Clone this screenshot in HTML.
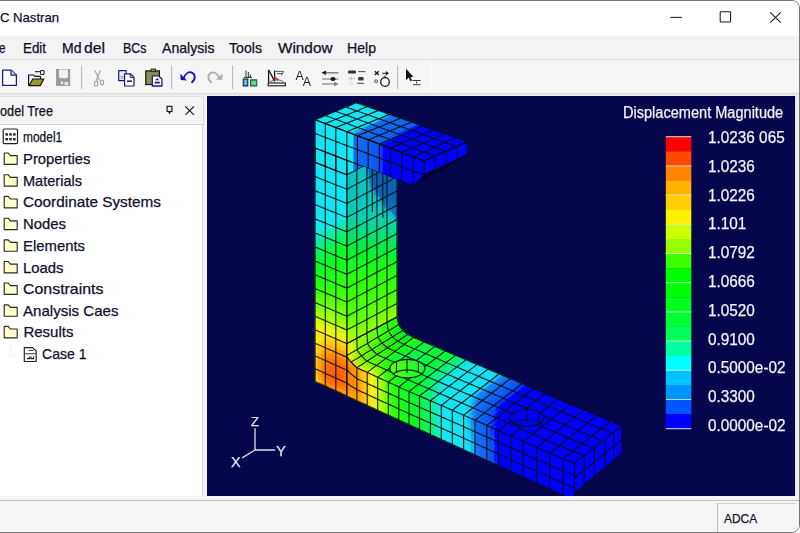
<!DOCTYPE html>
<html><head><meta charset="utf-8"><title>C Nastran</title>
<style>
html,body{margin:0;padding:0;background:#fff;}
body{width:800px;height:533px;overflow:hidden;position:relative;font-family:"Liberation Sans",sans-serif;}
.win{position:absolute;left:-30px;top:0;width:828px;height:531px;border:1px solid #767676;border-radius:0 8px 8px 0;background:#f0f0f0;overflow:hidden;}
.in{position:absolute;left:29px;top:-1px;width:800px;height:533px;}
.t{position:absolute;white-space:nowrap;line-height:normal;transform-origin:0 50%;color:#000;-webkit-text-stroke:0.25px currentColor;}
.abs{position:absolute;}
svg{position:absolute;left:0;top:0;overflow:visible;}
</style></head><body>
<div class="win"><div class="in">

<div class="abs" style="left:0;top:0;width:800px;height:36px;background:#fff;"></div>
<div class="t " style="left:-0.30px;top:10.47px;font-size:13.40px;color:#10102a;transform:scaleX(0.9781);">C Nastran</div>
<div class="abs" style="left:0;top:36px;width:800px;height:24px;background:#f3f3f3;"></div>
<div class="t " style="left:-1.50px;top:39.75px;font-size:14.20px;color:#10102a;transform:scaleX(0.8230);">e</div>
<div class="t " style="left:23.20px;top:39.75px;font-size:14.20px;color:#10102a;transform:scaleX(0.9400);">Edit</div>
<div class="t " style="left:62.20px;top:39.75px;font-size:14.20px;color:#10102a;transform:scaleX(0.9885);">Md</div>
<div class="t " style="left:84.00px;top:39.75px;font-size:14.20px;color:#10102a;transform:scaleX(1.1082);">del</div>
<div class="t " style="left:122.50px;top:39.75px;font-size:14.20px;color:#10102a;transform:scaleX(0.8761);">BCs</div>
<div class="t " style="left:161.50px;top:39.75px;font-size:14.20px;color:#10102a;transform:scaleX(0.9930);">Analysis</div>
<div class="t " style="left:229.00px;top:39.75px;font-size:14.20px;color:#10102a;transform:scaleX(0.9955);">Tools</div>
<div class="t " style="left:277.50px;top:39.75px;font-size:14.20px;color:#10102a;transform:scaleX(1.0792);">Window</div>
<div class="t " style="left:347.00px;top:39.75px;font-size:14.20px;color:#10102a;transform:scaleX(0.9931);">Help</div>
<div class="abs" style="left:0;top:59px;width:800px;height:1.2px;background:#dcdcdc;"></div>
<div class="abs" style="left:0;top:60.2px;width:800px;height:33px;background:#f5f5f5;"></div><div class="abs" style="left:431px;top:62px;width:1px;height:30px;background:#fcfcfc;"></div>
<div class="abs" style="left:0;top:93.2px;width:800px;height:3.6px;background:linear-gradient(#d9d9d9,#e9e9e9 45%,#ececec 70%,#d8d8d8);"></div>
<div class="abs" style="left:-2px;top:97.2px;width:204.5px;height:27.4px;background:#f4f4f4;border-right:1px solid #d8d8d8;"></div>
<div class="t " style="left:-0.50px;top:102.75px;font-size:14.20px;color:#10102a;transform:scaleX(0.8951);">odel Tree</div>
<div class="abs" style="left:-2px;top:124.3px;width:204.5px;height:371.3px;background:#fff;border-top:1px solid #d0d0d0;border-right:1px solid #d6d6d6;box-sizing:border-box;"></div>
<div class="abs" style="left:203.5px;top:96px;width:3.5px;height:400px;background:#f4f4f4;"></div>
<div class="t " style="left:23.20px;top:129.13px;font-size:14.00px;color:#10102a;transform:scaleX(0.8538);">model1</div>
<div class="t " style="left:23.40px;top:150.03px;font-size:15.00px;color:#10102a;transform:scaleX(0.9873);">Properties</div>
<div class="t " style="left:23.40px;top:171.73px;font-size:15.00px;color:#10102a;transform:scaleX(0.9695);">Materials</div>
<div class="t " style="left:23.40px;top:193.43px;font-size:15.00px;color:#10102a;transform:scaleX(1.0217);">Coordinate Systems</div>
<div class="t " style="left:23.40px;top:215.23px;font-size:15.00px;color:#10102a;transform:scaleX(0.9916);">Nodes</div>
<div class="t " style="left:23.40px;top:236.83px;font-size:15.00px;color:#10102a;transform:scaleX(0.9915);">Elements</div>
<div class="t " style="left:23.40px;top:258.53px;font-size:15.00px;color:#10102a;transform:scaleX(0.9908);">Loads</div>
<div class="t " style="left:23.40px;top:280.03px;font-size:15.00px;color:#10102a;transform:scaleX(1.0610);">Constraints</div>
<div class="t " style="left:23.40px;top:301.82px;font-size:15.00px;color:#10102a;transform:scaleX(1.0048);">Analysis Caes</div>
<div class="t " style="left:23.40px;top:323.43px;font-size:15.00px;color:#10102a;">Results</div>
<div class="t " style="left:41.60px;top:345.23px;font-size:15.00px;color:#10102a;transform:scaleX(0.9362);">Case 1</div>
<div class="abs" style="left:0;top:495.6px;width:800px;height:4.4px;background:#f4f4f4;"></div>
<div class="abs" style="left:0;top:499.8px;width:800px;height:1.1px;background:#c4c4c4;"></div>
<div class="abs" style="left:0;top:500.9px;width:800px;height:32px;background:#f5f5f5;"></div>
<div class="abs" style="left:717px;top:503.2px;width:79px;height:30px;border-left:1.2px solid #bdbdbd;border-top:1.2px solid #d2d2d2;box-sizing:border-box;"></div>
<div class="t " style="left:723.80px;top:510.67px;font-size:13.40px;color:#10102a;transform:scaleX(0.8918);">ADCA</div>
<div class="abs" style="left:207.0px;top:96.0px;width:587.5px;height:399.6px;background:#06064c;"></div>
<div class="abs" style="left:794.5px;top:96px;width:1.2px;height:400px;background:#dedede;"></div>
<svg width="800" height="533" viewBox="0 0 800 533">
<defs><clipPath id="vp"><rect x="207.0" y="96.0" width="587.5" height="399.6"/></clipPath>
<filter id="soft" x="-2%" y="-2%" width="104%" height="104%"><feGaussianBlur stdDeviation="0.45"/></filter></defs>
<g clip-path="url(#vp)"><g filter="url(#soft)">
<defs><clipPath id="c1"><path d="M314.0 117.0L426.0 159.5L424.2 174.5L413.8 185.3L363.8 166.6L346.8 173.8L314.0 173.8Z"/></clipPath><clipPath id="c3"><path d="M346.8 173.8L363.8 166.6L397.6 180.0L397.6 335.0L346.8 375.0Z"/></clipPath></defs>
<g stroke="none"><g>
<path fill="#16e3f3" d="M314.8 120.0L318.1 121.3L322.3 119.2L318.9 117.9ZM318.2 118.6L321.6 119.9L325.8 117.8L321.6 116.5ZM321.6 117.2L325.8 118.5L329.2 116.4L325.0 115.1ZM325.0 115.8L329.2 117.1L332.7 115.0L328.5 113.7ZM328.5 114.4L332.7 115.7L336.1 113.6L331.9 112.3ZM331.9 113.0L336.1 114.3L339.6 112.2L335.3 110.9ZM335.3 111.6L339.6 112.9L343.0 110.8L338.8 109.5ZM338.8 110.2L343.0 111.5L346.5 109.3L342.2 108.1ZM342.2 108.8L346.5 110.0L349.9 107.9L345.6 106.6ZM345.6 107.3L349.9 108.6L353.4 106.5L349.0 105.2ZM349.0 105.9L353.4 107.2L356.8 105.1L352.5 103.8ZM352.5 104.5L356.8 105.8L360.3 103.7L355.9 102.4ZM318.1 121.3L321.6 122.6L325.7 120.5L322.3 119.2ZM321.6 119.9L325.0 121.2L329.2 119.1L325.8 117.8ZM325.1 118.5L328.5 119.8L332.7 117.7L328.5 116.4ZM328.5 117.1L332.7 118.4L336.2 116.3L332.0 115.0ZM332.0 115.7L336.2 117.0L339.6 114.9L335.4 113.6ZM335.4 114.3L339.6 115.6L343.1 113.5L338.9 112.2ZM338.9 112.9L343.1 114.2L346.6 112.0L342.3 110.8ZM342.3 111.5L346.6 112.7L350.1 110.6L345.8 109.3ZM345.8 110.0L350.1 111.3L353.6 109.2L349.2 107.9ZM349.2 108.6L353.6 109.9L357.0 107.8L352.7 106.5ZM352.7 107.2L357.0 108.5L360.5 106.4L356.1 105.1ZM356.1 105.8L360.5 107.1L364.0 105.0L359.6 103.7ZM321.6 122.6L324.9 123.9L329.2 121.8L325.7 120.5ZM325.0 121.2L328.5 122.5L332.7 120.4L329.2 119.1ZM328.5 119.8L332.0 121.1L336.2 119.0L332.7 117.7ZM332.0 118.4L335.5 119.7L339.7 117.6L335.5 116.3ZM335.5 117.0L339.7 118.3L343.2 116.2L338.9 114.9ZM338.9 115.6L343.2 116.9L346.7 114.7L342.4 113.5ZM342.4 114.2L346.7 115.4L350.2 113.3L345.9 112.0ZM345.9 112.7L350.2 114.0L353.7 111.9L349.4 110.6ZM349.4 111.3L353.7 112.6L357.2 110.5L352.8 109.2ZM352.8 109.9L357.2 111.2L360.7 109.1L356.3 107.8ZM356.3 108.5L360.7 109.8L364.2 107.7L359.8 106.4ZM359.8 107.1L364.2 108.4L367.7 106.3L363.3 105.0ZM324.9 123.9L328.4 125.2L332.7 123.1L328.5 121.8ZM328.5 122.5L332.7 123.8L336.2 121.7L332.0 120.4ZM332.0 121.1L336.2 122.4L339.7 120.3L335.5 119.0ZM335.5 119.7L339.7 121.0L343.2 118.9L339.0 117.6ZM339.0 118.3L343.2 119.6L346.7 117.5L342.5 116.2ZM342.5 116.9L346.7 118.2L350.3 116.1L346.0 114.7ZM346.0 115.4L350.3 116.8L353.8 114.6L349.5 113.3ZM349.5 114.0L353.8 115.3L357.3 113.2L353.0 111.9ZM353.0 112.6L357.3 113.9L360.8 111.8L356.5 110.5ZM356.5 111.2L360.8 112.5L364.3 110.4L360.0 109.1ZM360.0 109.8L364.3 111.1L367.8 109.0L363.5 107.7ZM363.5 108.4L367.8 109.7L371.4 107.6L367.0 106.3ZM328.4 125.2L331.9 126.6L336.2 124.4L332.7 123.1ZM332.0 123.8L335.5 125.1L339.7 123.0L335.5 121.7ZM335.5 122.4L339.7 123.7L343.3 121.6L339.0 120.3ZM339.0 121.0L343.3 122.3L346.8 120.2L342.5 118.9ZM342.5 119.6L346.8 120.9L350.3 118.8L346.0 117.5ZM346.0 118.2L350.3 119.5L353.9 117.4L349.6 116.1ZM349.6 116.8L353.9 118.1L357.4 115.9L353.1 114.6ZM353.1 115.3L357.4 116.6L360.9 114.5L356.6 113.2ZM356.6 113.9L360.9 115.2L364.5 113.1L360.1 111.8ZM360.1 112.5L364.5 113.8L368.0 111.7L363.6 110.4ZM363.6 111.1L368.0 112.4L371.5 110.3L367.1 109.0ZM367.1 109.7L371.5 111.0L375.1 108.9L370.7 107.6ZM331.9 126.6L335.4 127.9L339.7 125.8L336.2 124.4ZM335.5 125.1L339.0 126.5L343.2 124.3L339.7 123.0ZM339.0 123.7L342.5 125.0L346.8 122.9L342.6 121.6ZM342.6 122.3L346.8 123.6L350.4 121.5L346.1 120.2ZM346.1 120.9L350.4 122.2L353.9 120.1L349.6 118.8ZM349.6 119.5L353.9 120.8L357.5 118.7L353.2 117.4ZM353.2 118.1L357.5 119.4L361.0 117.2L356.7 115.9ZM356.7 116.6L361.0 117.9L364.6 115.8L360.2 114.5ZM360.2 115.2L364.6 116.5L368.1 114.4L363.8 113.1ZM363.8 113.8L368.1 115.1L371.6 113.0L367.3 111.7ZM367.3 112.4L371.6 113.7L375.2 111.6L370.8 110.3ZM370.8 111.0L375.2 112.3L378.8 110.2L374.4 108.9ZM335.4 127.9L339.8 129.3L343.4 127.1L339.0 125.8ZM339.0 126.5L343.4 127.8L346.9 125.7L342.5 124.3ZM342.5 125.0L346.9 126.4L350.5 124.3L346.1 122.9ZM346.1 123.6L350.5 125.0L354.0 122.9L349.6 121.5ZM349.6 122.2L354.0 123.6L357.6 121.4L353.2 120.1ZM353.2 120.8L357.6 122.1L361.1 120.0L356.8 118.7ZM356.8 119.4L361.1 120.7L364.7 118.6L360.3 117.2ZM360.3 117.9L364.7 119.3L368.2 117.2L363.8 115.8ZM363.8 116.5L368.2 117.9L371.8 115.7L367.4 114.4ZM367.4 115.1L371.8 116.4L375.3 114.3L370.9 113.0ZM370.9 113.7L375.3 115.0L378.9 112.9L374.5 111.6ZM374.5 112.3L378.9 113.6L382.4 111.4L378.0 110.2ZM339.1 129.3L343.5 130.7L347.0 128.5L342.7 127.1ZM342.7 127.8L347.0 129.2L350.6 127.1L346.2 125.7ZM346.2 126.4L350.6 127.8L354.1 125.7L349.8 124.3ZM349.8 125.0L354.1 126.4L357.7 124.2L353.3 122.9ZM353.3 123.6L357.7 124.9L361.3 122.8L356.9 121.4ZM356.9 122.1L361.3 123.5L364.8 121.3L360.4 120.0ZM360.4 120.7L364.8 122.0L368.4 119.9L364.0 118.6ZM364.0 119.3L368.4 120.6L371.9 118.5L367.5 117.2ZM367.5 117.9L371.9 119.2L375.5 117.0L371.1 115.7ZM371.1 116.4L375.5 117.7L379.0 115.6L374.6 114.3ZM374.6 115.0L379.0 116.3L382.6 114.2L378.2 112.9ZM378.2 113.6L382.6 114.9L386.1 112.7L381.7 111.4ZM342.8 130.7L347.2 132.0L350.7 129.9L346.3 128.5ZM346.3 129.2L350.7 130.6L354.3 128.5L349.9 127.1ZM349.9 127.8L354.3 129.2L357.8 127.0L353.4 125.7ZM353.4 126.4L357.8 127.7L361.4 125.6L357.0 124.2ZM357.0 124.9L361.4 126.3L364.9 124.1L360.6 122.8ZM360.6 123.5L364.9 124.8L368.5 122.7L364.1 121.3ZM364.1 122.0L368.5 123.4L372.0 121.2L367.7 119.9ZM367.7 120.6L372.0 121.9L375.6 119.8L371.2 118.5ZM371.2 119.2L375.6 120.5L379.2 118.4L374.8 117.0ZM374.8 117.7L379.2 119.1L382.7 116.9L378.3 115.6ZM378.3 116.3L382.7 117.6L386.3 115.5L381.9 114.2ZM381.9 114.9L386.3 116.2L389.8 114.0L385.4 112.7ZM346.4 132.0L350.0 133.4L354.3 131.2L350.7 129.9ZM350.0 130.6L353.6 131.9L357.8 129.8L354.3 128.5ZM353.6 129.2L357.1 130.5L361.4 128.3L357.1 127.0ZM357.1 127.7L361.4 129.0L365.0 126.9L360.7 125.6ZM360.7 126.3L365.0 127.6L368.5 125.4L364.2 124.1ZM364.2 124.8L368.5 126.1L372.1 124.0L367.8 122.7ZM367.8 123.4L372.1 124.7L375.7 122.6L371.3 121.2Z"/>
<path fill="#16dbf5" d="M371.3 121.9L375.7 123.3L379.2 121.1L374.9 119.8Z"/>
<path fill="#17c9f5" d="M374.9 120.5L379.2 121.8L382.8 119.7L378.5 118.4ZM350.0 133.4L353.5 134.7L357.8 132.6L354.3 131.2Z"/>
<path fill="#18b6f5" d="M378.5 119.1L382.8 120.4L386.4 118.2L382.0 116.9ZM353.6 131.9L357.1 133.3L361.4 131.1L357.8 129.8Z"/>
<path fill="#18a3f5" d="M382.0 117.6L386.4 118.9L389.9 116.8L385.6 115.5ZM357.1 130.5L360.7 131.8L365.0 129.7L361.4 128.3Z"/>
<path fill="#1892f5" d="M385.6 116.2L389.9 117.5L393.5 115.3L389.1 114.0ZM360.7 129.0L364.3 130.4L368.5 128.2L364.3 126.9Z"/>
<path fill="#1684f4" d="M364.3 127.6L368.5 128.9L372.1 126.8L367.8 125.4Z"/>
<path fill="#1576f3" d="M367.8 126.1L372.1 127.5L375.7 125.3L371.4 124.0Z"/>
<path fill="#146ff3" d="M371.4 124.7L375.7 126.0L379.3 123.9L375.0 122.6ZM375.0 123.3L379.3 124.6L382.9 122.4L378.5 121.1Z"/>
<path fill="#136ef3" d="M378.5 121.8L382.9 123.1L386.5 121.0L382.1 119.7ZM382.1 120.4L386.5 121.7L390.0 119.5L385.7 118.2ZM385.7 118.9L390.0 120.2L393.6 118.1L389.2 116.8ZM389.2 117.5L393.6 118.8L397.2 116.6L392.8 115.3ZM353.5 134.7L357.0 136.1L361.3 133.9L357.8 132.6ZM357.1 133.3L360.6 134.6L364.9 132.4L361.4 131.1ZM360.7 131.8L364.2 133.1L368.5 131.0L365.0 129.7ZM364.3 130.4L367.8 131.7L372.1 129.5L368.5 128.2Z"/>
<path fill="#136df3" d="M367.8 128.9L371.4 130.2L375.7 128.1L371.4 126.8ZM371.4 127.5L375.7 128.8L379.3 126.6L375.0 125.3ZM375.0 126.0L379.3 127.3L382.9 125.2L378.6 123.9ZM378.6 124.6L382.9 125.9L386.5 123.7L382.2 122.4Z"/>
<path fill="#136cf3" d="M382.2 123.1L386.5 124.4L390.1 122.3L385.8 121.0ZM357.0 136.1L361.4 137.4L365.0 135.3L360.6 133.9Z"/>
<path fill="#136cf2" d="M385.8 121.7L390.1 123.0L393.7 120.8L389.3 119.5ZM389.3 120.2L393.7 121.5L397.3 119.4L392.9 118.1ZM392.9 118.8L397.3 120.1L400.9 117.9L396.5 116.6ZM360.6 134.6L365.0 136.0L368.6 133.8L364.2 132.4ZM364.2 133.1L368.6 134.5L372.2 132.3L367.8 131.0ZM367.8 131.7L372.2 133.0L375.8 130.9L371.4 129.5Z"/>
<path fill="#136bf2" d="M371.4 130.2L375.8 131.6L379.4 129.4L375.0 128.1ZM375.0 128.8L379.4 130.1L383.0 128.0L378.6 126.6ZM378.6 127.3L383.0 128.7L386.6 126.5L382.2 125.2ZM382.2 125.9L386.6 127.2L390.2 125.0L385.8 123.7Z"/>
<path fill="#136af2" d="M385.8 124.4L390.2 125.7L393.8 123.6L389.4 122.3ZM389.4 123.0L393.8 124.3L397.4 122.1L393.0 120.8ZM393.0 121.5L397.4 122.8L401.0 120.7L396.6 119.4ZM396.6 120.1L401.0 121.4L404.6 119.2L400.2 117.9ZM360.6 137.4L364.2 138.8L368.6 136.6L364.3 135.3ZM364.3 136.0L368.6 137.3L372.2 135.1L367.9 133.8ZM367.9 134.5L372.2 135.8L375.8 133.7L371.5 132.3ZM371.5 133.0L375.8 134.4L379.4 132.2L375.1 130.9Z"/>
<path fill="#1369f2" d="M375.1 131.6L379.4 132.9L383.0 130.7L378.7 129.4ZM378.7 130.1L383.0 131.4L386.6 129.3L382.3 128.0ZM382.3 128.7L386.6 130.0L390.2 127.8L385.9 126.5ZM385.9 127.2L390.2 128.5L393.8 126.3L389.5 125.0Z"/>
<path fill="#1368f2" d="M389.5 125.7L393.8 127.0L397.5 124.9L393.1 123.6ZM393.1 124.3L397.5 125.6L401.1 123.4L396.7 122.1ZM396.7 122.8L401.1 124.1L404.7 121.9L400.3 120.7ZM364.2 138.8L367.8 140.1L372.2 138.0L368.6 136.6ZM367.9 137.3L371.5 138.7L375.8 136.5L371.5 135.1ZM371.5 135.8L375.8 137.2L379.4 135.0L375.1 133.7Z"/>
<path fill="#1268f2" d="M400.3 121.4L404.7 122.6L408.3 120.5L403.9 119.2ZM375.1 134.4L379.4 135.7L383.0 133.6L378.7 132.2Z"/>
<path fill="#1267f2" d="M378.7 132.9L383.0 134.3L386.6 132.1L382.3 130.7ZM382.3 131.4L386.6 132.8L390.3 130.6L385.9 129.3ZM385.9 130.0L390.3 131.3L393.9 129.1L389.5 127.8Z"/>
<path fill="#1266f2" d="M389.5 128.5L393.9 129.8L397.5 127.7L393.1 126.3ZM393.1 127.0L397.5 128.4L401.1 126.2L396.8 124.9ZM396.8 125.6L401.1 126.9L404.7 124.7L400.4 123.4ZM400.4 124.1L404.7 125.4L408.4 123.2L404.0 121.9ZM367.8 140.1L372.2 141.5L375.9 139.4L371.5 138.0ZM371.5 138.7L375.9 140.1L379.5 137.9L375.1 136.5ZM375.1 137.2L379.5 138.6L383.1 136.4L378.7 135.0Z"/>
<path fill="#1265f2" d="M404.0 122.6L408.4 123.9L412.0 121.8L407.6 120.5ZM378.7 135.7L383.1 137.1L386.7 134.9L382.3 133.6ZM382.3 134.3L386.7 135.6L390.3 133.4L385.9 132.1ZM385.9 132.8L390.3 134.1L394.0 132.0L389.6 130.6ZM389.6 131.3L394.0 132.7L397.6 130.5L393.2 129.1Z"/>
<path fill="#1264f2" d="M393.2 129.8L397.6 131.2L401.2 129.0L396.8 127.7ZM396.8 128.4L401.2 129.7L404.8 127.5L400.4 126.2ZM400.4 126.9L404.8 128.2L408.4 126.0L404.0 124.7ZM371.5 141.5L376.0 142.9L379.6 140.8L375.2 139.4ZM375.2 140.1L379.6 141.5L383.2 139.3L378.8 137.9Z"/>
<path fill="#1263f2" d="M404.0 125.4L408.4 126.7L412.0 124.5L407.7 123.2ZM407.7 123.9L412.0 125.2L415.7 123.1L411.3 121.8ZM378.8 138.6L383.2 140.0L386.8 137.8L382.4 136.4ZM382.4 137.1L386.8 138.5L390.4 136.3L386.0 134.9Z"/>
<path fill="#1262f2" d="M386.0 135.6L390.4 137.0L394.0 134.8L389.6 133.4Z"/>
<path fill="#1162f2" d="M389.6 134.1L394.0 135.5L397.7 133.3L393.3 132.0Z"/>
<path fill="#1161f2" d="M393.3 132.7L397.7 134.0L401.3 131.8L396.9 130.5Z"/>
<path fill="#1160f2" d="M396.9 131.2L401.3 132.5L404.9 130.3L400.5 129.0Z"/>
<path fill="#1160f3" d="M400.5 129.7L404.9 131.0L408.5 128.8L404.1 127.5ZM375.2 142.9L379.7 144.3L383.3 142.1L378.9 140.8Z"/>
<path fill="#115ff3" d="M404.1 128.2L408.5 129.5L412.1 127.3L407.7 126.0ZM407.7 126.7L412.1 128.0L415.7 125.8L411.3 124.5ZM378.9 141.5L383.3 142.8L386.9 140.6L382.5 139.3ZM382.5 140.0L386.9 141.3L390.5 139.1L386.1 137.8Z"/>
<path fill="#115ef3" d="M411.3 125.2L415.7 126.5L419.4 124.4L415.0 123.1ZM386.1 138.5L390.5 139.8L394.1 137.6L389.7 136.3Z"/>
<path fill="#0f56f4" d="M389.7 137.0L394.1 138.3L397.7 136.1L393.3 134.8Z"/>
<path fill="#0c47f6" d="M393.3 135.5L397.7 136.8L401.4 134.6L397.0 133.3Z"/>
<path fill="#0938f8" d="M397.0 134.0L401.4 135.3L405.0 133.1L400.6 131.8Z"/>
<path fill="#0529fa" d="M400.6 132.5L405.0 133.8L408.6 131.6L404.2 130.3Z"/>
<path fill="#0420fb" d="M404.2 131.0L408.6 132.3L412.2 130.1L407.8 128.8Z"/>
<path fill="#0318fc" d="M407.8 129.5L412.2 130.8L415.8 128.6L411.4 127.3ZM382.6 142.8L387.0 144.2L390.6 142.0L386.2 140.6Z"/>
<path fill="#0210fd" d="M411.4 128.0L415.8 129.3L419.4 127.1L415.0 125.8ZM386.2 141.3L390.6 142.7L394.2 140.5L389.8 139.1Z"/>
<path fill="#0107fe" d="M415.0 126.5L419.4 127.8L423.1 125.7L418.7 124.4Z"/>
<path fill="#0421fb" d="M378.9 144.3L383.4 145.8L387.0 143.5L382.6 142.1Z"/>
<path fill="#0108fe" d="M389.8 139.8L394.2 141.2L397.8 139.0L393.4 137.6Z"/>
<path fill="#0000ff" d="M393.4 138.3L397.8 139.7L401.4 137.5L397.0 136.1ZM397.0 136.8L401.4 138.2L405.1 136.0L400.6 134.6ZM400.6 135.3L405.1 136.7L408.7 134.5L404.3 133.1ZM404.3 133.8L408.7 135.2L412.3 133.0L407.9 131.6ZM407.9 132.3L412.3 133.7L415.9 131.5L411.5 130.1ZM411.5 130.8L415.9 132.2L419.5 130.0L415.1 128.6ZM415.1 129.3L419.5 130.7L423.1 128.5L418.7 127.1ZM418.7 127.8L423.1 129.2L426.7 126.9L422.3 125.7ZM382.7 145.8L387.1 147.2L390.7 144.9L386.3 143.5ZM386.3 144.2L390.7 145.6L394.3 143.4L389.9 142.0ZM389.9 142.7L394.3 144.1L397.9 141.9L393.5 140.5ZM393.5 141.2L397.9 142.6L401.6 140.4L397.1 139.0ZM397.1 139.7L401.6 141.1L405.2 138.9L400.7 137.5ZM400.7 138.2L405.2 139.6L408.8 137.4L404.4 136.0ZM404.4 136.7L408.8 138.1L412.4 135.8L408.0 134.5ZM408.0 135.2L412.4 136.5L416.0 134.3L411.6 133.0ZM411.6 133.7L416.0 135.0L419.6 132.8L415.2 131.5ZM415.2 132.2L419.6 133.5L423.2 131.3L418.8 130.0ZM418.8 130.7L423.2 132.0L426.8 129.8L422.4 128.5ZM422.4 129.2L426.8 130.5L430.4 128.2L426.0 126.9ZM386.4 147.2L390.9 148.6L394.5 146.4L390.0 144.9ZM390.0 145.6L394.5 147.1L398.1 144.8L393.6 143.4ZM393.6 144.1L398.1 145.5L401.7 143.3L397.2 141.9ZM397.2 142.6L401.7 144.0L405.3 141.8L400.9 140.4ZM400.9 141.1L405.3 142.5L408.9 140.2L404.5 138.9ZM404.5 139.6L408.9 140.9L412.5 138.7L408.1 137.4ZM408.1 138.1L412.5 139.4L416.1 137.2L411.7 135.8ZM411.7 136.5L416.1 137.9L419.7 135.6L415.3 134.3ZM415.3 135.0L419.7 136.3L423.3 134.1L418.9 132.8ZM418.9 133.5L423.3 134.8L426.9 132.6L422.5 131.3ZM422.5 132.0L426.9 133.3L430.5 131.1L426.1 129.8ZM426.1 130.5L430.5 131.8L434.1 129.5L429.7 128.2ZM390.1 148.6L394.6 150.0L398.2 147.8L393.8 146.4ZM393.8 147.1L398.2 148.5L401.8 146.2L397.4 144.8ZM397.4 145.5L401.8 146.9L405.4 144.7L401.0 143.3ZM401.0 144.0L405.4 145.4L409.0 143.1L404.6 141.8ZM404.6 142.5L409.0 143.8L412.6 141.6L408.2 140.2ZM408.2 140.9L412.6 142.3L416.2 140.1L411.8 138.7ZM411.8 139.4L416.2 140.8L419.8 138.5L415.4 137.2ZM415.4 137.9L419.8 139.2L423.4 137.0L419.0 135.6ZM419.0 136.3L423.4 137.7L427.0 135.4L422.6 134.1ZM422.6 134.8L427.0 136.1L430.6 133.9L426.2 132.6ZM426.2 133.3L430.6 134.6L434.2 132.4L429.8 131.1ZM429.8 131.8L434.2 133.1L437.8 130.8L433.4 129.5ZM393.9 150.0L398.4 151.4L401.9 149.2L397.5 147.8ZM397.5 148.5L401.9 149.9L405.5 147.6L401.1 146.2ZM401.1 146.9L405.5 148.3L409.1 146.1L404.7 144.7ZM404.7 145.4L409.1 146.8L412.7 144.5L408.3 143.1ZM408.3 143.8L412.7 145.2L416.3 143.0L411.9 141.6ZM411.9 142.3L416.3 143.7L419.9 141.4L415.5 140.1ZM415.5 140.8L419.9 142.1L423.5 139.9L419.1 138.5ZM419.1 139.2L423.5 140.6L427.1 138.3L422.7 137.0ZM422.7 137.7L427.1 139.0L430.7 136.8L426.3 135.4ZM426.3 136.1L430.7 137.5L434.3 135.2L429.9 133.9ZM429.9 134.6L434.3 135.9L437.9 133.7L433.5 132.4ZM433.5 133.1L437.9 134.4L441.5 132.1L437.1 130.8ZM397.6 151.4L402.1 152.8L405.7 150.6L401.2 149.2ZM401.2 149.9L405.7 151.3L409.3 149.0L404.8 147.6ZM404.8 148.3L409.3 149.7L412.9 147.5L408.4 146.1ZM408.4 146.8L412.9 148.2L416.5 145.9L412.0 144.5ZM412.0 145.2L416.5 146.6L420.1 144.3L415.6 143.0ZM415.6 143.7L420.1 145.0L423.7 142.8L419.2 141.4ZM419.2 142.1L423.7 143.5L427.2 141.2L422.8 139.9ZM422.8 140.6L427.2 141.9L430.8 139.6L426.4 138.3ZM426.4 139.0L430.8 140.3L434.4 138.1L430.0 136.8ZM430.0 137.5L434.4 138.8L438.0 136.5L433.6 135.2ZM433.6 135.9L438.0 137.2L441.6 135.0L437.2 133.7ZM437.2 134.4L441.6 135.7L445.2 133.4L440.8 132.1ZM401.4 152.8L406.0 154.3L409.6 152.0L405.0 150.6ZM405.0 151.3L409.6 152.7L413.1 150.5L408.6 149.0ZM408.6 149.7L413.1 151.2L416.7 148.9L412.2 147.5ZM412.2 148.2L416.7 149.6L420.3 147.3L415.8 145.9ZM415.8 146.6L420.3 148.0L423.9 145.7L419.4 144.3ZM419.4 145.0L423.9 146.4L427.4 144.1L422.9 142.8ZM422.9 143.5L427.4 144.8L431.0 142.6L426.5 141.2ZM426.5 141.9L431.0 143.3L434.6 141.0L430.1 139.6ZM430.1 140.3L434.6 141.7L438.2 139.4L433.7 138.1ZM433.7 138.8L438.2 140.1L441.7 137.8L437.3 136.5ZM437.3 137.2L441.7 138.5L445.3 136.3L440.9 135.0ZM440.9 135.7L445.3 137.0L448.9 134.7L444.5 133.4ZM405.3 154.3L409.9 155.8L413.4 153.5L408.9 152.0ZM408.9 152.7L413.4 154.2L417.0 151.9L412.4 150.5ZM412.4 151.2L417.0 152.6L420.5 150.3L416.0 148.9ZM416.0 149.6L420.5 151.0L424.1 148.7L419.6 147.3ZM419.6 148.0L424.1 149.4L427.7 147.1L423.2 145.7ZM423.2 146.4L427.7 147.8L431.2 145.5L426.7 144.1ZM426.7 144.8L431.2 146.2L434.8 143.9L430.3 142.6ZM430.3 143.3L434.8 144.6L438.3 142.3L433.9 141.0ZM433.9 141.7L438.3 143.0L441.9 140.8L437.5 139.4ZM437.5 140.1L441.9 141.5L445.5 139.2L441.0 137.8ZM441.0 138.5L445.5 139.9L449.0 137.6L444.6 136.3ZM444.6 137.0L449.0 138.3L452.6 136.0L448.2 134.7ZM409.2 155.8L413.8 157.2L417.3 154.9L412.7 153.5ZM412.7 154.2L417.3 155.6L420.8 153.3L416.3 151.9ZM416.3 152.6L420.8 154.0L424.4 151.7L419.8 150.3ZM419.8 151.0L424.4 152.4L427.9 150.1L423.4 148.7ZM423.4 149.4L427.9 150.8L431.5 148.5L427.0 147.1ZM427.0 147.8L431.5 149.2L435.0 146.9L430.5 145.5ZM430.5 146.2L435.0 147.6L438.6 145.3L434.1 143.9ZM434.1 144.6L438.6 146.0L442.1 143.7L437.6 142.3ZM437.6 143.0L442.1 144.4L445.6 142.1L441.2 140.8ZM441.2 141.5L445.6 142.8L449.2 140.5L444.8 139.2ZM444.8 139.9L449.2 141.2L452.7 138.9L448.3 137.6ZM448.3 138.3L452.7 139.6L456.3 137.3L451.9 136.0ZM413.0 157.2L417.4 158.6L420.9 156.3L416.6 154.9ZM416.6 155.6L420.9 157.0L424.5 154.7L420.1 153.3ZM420.1 154.0L424.5 155.4L428.0 153.1L423.7 151.7ZM423.7 152.4L428.0 153.8L431.6 151.5L427.2 150.1ZM427.2 150.8L431.6 152.2L435.1 149.9L430.8 148.5ZM430.8 149.2L435.1 150.6L438.7 148.2L434.3 146.9ZM434.3 147.6L438.7 148.9L442.2 146.6L437.9 145.3ZM437.9 146.0L442.2 147.3L445.8 145.0L441.4 143.7ZM441.4 144.4L445.8 145.7L449.3 143.4L444.9 142.1ZM444.9 142.8L449.3 144.1L452.9 141.8L448.5 140.5ZM448.5 141.2L452.9 142.5L456.4 140.2L452.0 138.9ZM452.0 139.6L456.4 140.9L460.0 138.6L455.6 137.3ZM416.7 158.6L421.0 160.0L424.5 157.7L420.2 156.3ZM420.2 157.0L424.5 158.4L428.1 156.0L423.8 154.7ZM423.8 155.4L428.1 156.7L431.7 154.4L427.3 153.1ZM427.3 153.8L431.7 155.1L435.2 152.8L430.9 151.5ZM430.9 152.2L435.2 153.5L438.8 151.2L434.4 149.9ZM434.4 150.6L438.8 151.9L442.3 149.6L438.0 148.2ZM438.0 148.9L442.3 150.3L445.9 148.0L441.5 146.6ZM441.5 147.3L445.9 148.7L449.4 146.3L445.1 145.0ZM445.1 145.7L449.4 147.0L453.0 144.7L448.6 143.4ZM448.6 144.1L453.0 145.4L456.5 143.1L452.2 141.8ZM452.2 142.5L456.5 143.8L460.1 141.5L455.7 140.2ZM455.7 140.9L460.1 142.2L463.7 139.9L459.3 138.6ZM420.3 160.0L424.6 161.3L428.2 159.0L423.8 157.7ZM423.8 158.4L428.2 159.7L431.7 157.4L427.4 156.0ZM427.4 156.7L431.7 158.1L435.3 155.8L431.0 154.4ZM431.0 155.1L435.3 156.5L438.9 154.2L434.5 152.8ZM434.5 153.5L438.9 154.8L442.4 152.5L438.1 151.2ZM438.1 151.9L442.4 153.2L446.0 150.9L441.6 149.6ZM441.6 150.3L446.0 151.6L449.5 149.3L445.2 148.0ZM445.2 148.7L449.5 150.0L453.1 147.7L448.7 146.3ZM448.7 147.0L453.1 148.3L456.7 146.0L452.3 144.7ZM452.3 145.4L456.7 146.7L460.2 144.4L455.8 143.1ZM455.8 143.8L460.2 145.1L463.8 142.8L459.4 141.5ZM459.4 142.2L463.8 143.5L467.4 141.2L463.0 139.9Z"/>
</g>
<g clip-path="url(#c1)">
<path fill="#16e3f3" d="M314.8 119.4L318.9 120.6L318.9 125.9L314.8 124.6ZM314.8 124.0L318.9 125.2L318.9 130.5L314.8 129.2ZM314.8 128.6L318.9 129.8L318.9 135.1L314.8 133.8ZM314.8 133.2L318.9 134.4L318.9 140.0L314.8 138.7ZM314.8 138.0L318.9 139.3L318.9 144.8L314.8 143.5ZM314.8 142.8L318.9 144.1L318.9 149.7L314.8 148.3ZM314.8 147.7L318.9 149.0L318.9 154.5L314.8 153.2ZM314.8 152.5L318.9 153.8L318.9 159.3L314.8 157.9ZM314.8 157.2L318.9 158.6L318.9 164.1L314.8 162.8ZM318.1 120.6L322.3 121.9L322.3 127.2L318.1 125.9ZM318.1 125.2L322.3 126.5L322.3 131.8L318.1 130.5ZM318.1 129.8L322.3 131.1L322.3 136.4L318.1 135.1ZM318.1 134.4L322.3 135.7L322.3 141.3L318.1 140.0ZM318.1 139.3L322.3 140.6L322.3 146.1L318.1 144.8ZM318.1 144.1L322.3 145.4L322.3 151.0L318.1 149.7ZM318.1 149.0L322.3 150.3L322.3 155.8L318.1 154.5ZM318.1 153.8L322.3 155.1L322.3 160.6L318.1 159.3ZM318.1 158.6L322.3 159.9L322.3 165.4L318.1 164.1ZM321.6 121.9L325.7 123.2L325.7 128.5L321.6 127.2ZM321.6 126.5L325.7 127.8L325.7 133.1L321.6 131.8ZM321.6 131.1L325.7 132.4L325.7 137.7L321.6 136.4ZM321.6 135.7L325.7 137.0L325.7 142.6L321.6 141.3ZM321.6 140.6L325.7 141.9L325.7 147.4L321.6 146.1ZM321.6 145.4L325.7 146.7L325.7 152.3L321.6 151.0ZM321.6 150.3L325.7 151.6L325.7 157.1L321.6 155.8ZM321.6 155.1L325.7 156.4L325.7 161.9L321.6 160.6ZM321.6 159.9L325.7 161.2L325.7 166.7L321.6 165.4ZM324.9 123.2L329.2 124.5L329.2 129.8L324.9 128.5ZM324.9 127.8L329.2 129.1L329.2 134.5L324.9 133.1ZM324.9 132.4L329.2 133.8L329.2 139.1L324.9 137.7ZM324.9 137.0L329.2 138.4L329.2 143.9L324.9 142.6ZM324.9 141.9L329.2 143.2L329.2 148.8L324.9 147.4ZM324.9 146.7L329.2 148.1L329.2 153.6L324.9 152.3ZM324.9 151.6L329.2 152.9L329.2 158.4L324.9 157.1ZM324.9 156.4L329.2 157.7L329.2 163.3L324.9 161.9ZM324.9 161.2L329.2 162.6L329.2 168.1L324.9 166.7ZM328.4 124.5L332.7 125.9L332.7 131.2L328.4 129.8ZM328.4 129.1L332.7 130.5L332.7 135.8L328.4 134.5ZM328.4 133.8L332.7 135.1L332.7 140.4L328.4 139.1ZM328.4 138.4L332.7 139.7L332.7 145.3L328.4 143.9ZM328.4 143.2L332.7 144.6L332.7 150.1L328.4 148.8ZM328.4 148.1L332.7 149.4L332.7 155.0L328.4 153.6ZM328.4 152.9L332.7 154.3L332.7 159.8L328.4 158.4ZM328.4 157.7L332.7 159.1L332.7 164.6L328.4 163.3ZM328.4 162.6L332.7 163.9L332.7 169.4L328.4 168.1ZM331.9 125.9L336.2 127.2L336.2 132.5L331.9 131.2ZM331.9 130.5L336.2 131.8L336.2 137.1L331.9 135.8ZM331.9 135.1L336.2 136.4L336.2 141.8L331.9 140.4ZM331.9 139.7L336.2 141.1L336.2 146.6L331.9 145.3ZM331.9 144.6L336.2 145.9L336.2 151.5L331.9 150.1ZM331.9 149.4L336.2 150.8L336.2 156.3L331.9 155.0ZM331.9 154.3L336.2 155.6L336.2 161.2L331.9 159.8ZM331.9 159.1L336.2 160.5L336.2 166.0L331.9 164.6ZM331.9 163.9L336.2 165.3L336.2 170.8L331.9 169.4ZM335.4 127.2L339.8 128.6L339.8 133.9L335.4 132.5ZM335.4 131.8L339.8 133.2L339.8 138.5L335.4 137.1ZM335.4 136.4L339.8 137.8L339.8 143.2L335.4 141.8ZM335.4 141.1L339.8 142.5L339.8 148.0L335.4 146.6ZM335.4 145.9L339.8 147.3L339.8 152.9L335.4 151.5ZM335.4 150.8L339.8 152.2L339.8 157.7L335.4 156.3ZM335.4 155.6L339.8 157.0L339.8 162.6L335.4 161.2ZM335.4 160.5L339.8 161.9L339.8 167.4L335.4 166.0ZM335.4 165.3L339.8 166.7L339.8 172.2L335.4 170.8ZM339.1 128.6L343.5 130.0L343.5 135.3L339.1 133.9ZM339.1 133.2L343.5 134.6L343.5 139.9L339.1 138.5ZM339.1 137.8L343.5 139.2L343.5 144.6L339.1 143.2ZM339.1 142.5L343.5 143.9L343.5 149.4L339.1 148.0ZM339.1 147.3L343.5 148.7L343.5 154.3L339.1 152.9ZM339.1 152.2L343.5 153.6L343.5 159.2L339.1 157.7ZM339.1 157.0L343.5 158.5L343.5 164.0L339.1 162.6ZM339.1 161.9L343.5 163.3L343.5 168.8L339.1 167.4ZM339.1 166.7L343.5 168.1L343.5 173.7L339.1 172.2ZM342.8 130.0L347.2 131.3L347.2 136.7L342.8 135.3ZM342.8 134.6L347.2 136.0L347.2 141.3L342.8 139.9ZM342.8 139.2L347.2 140.6L347.2 146.0L342.8 144.6ZM342.8 143.9L347.2 145.3L347.2 150.8L342.8 149.4ZM342.8 148.7L347.2 150.1L347.2 155.7L342.8 154.3ZM342.8 153.6L347.2 155.0L347.2 160.6L342.8 159.2ZM342.8 158.5L347.2 159.9L347.2 165.4L342.8 164.0ZM342.8 163.3L347.2 164.7L347.2 170.2L342.8 168.8ZM342.8 168.1L347.2 169.5L347.2 175.1L342.8 173.7ZM346.4 131.3L350.7 132.7L350.7 138.0L346.4 136.7ZM346.4 136.0L350.7 137.3L350.7 142.7L346.4 141.3ZM346.4 140.6L350.7 142.0L350.7 147.3L346.4 146.0ZM346.4 145.3L350.7 146.6L350.7 152.2L346.4 150.8ZM346.4 150.1L350.7 151.5L350.7 157.1L346.4 155.7ZM346.4 155.0L350.7 156.4L350.7 161.9L346.4 160.6ZM346.4 159.9L350.7 161.2L350.7 166.8L346.4 165.4ZM346.4 164.7L350.7 166.1L350.7 171.6L346.4 170.2ZM346.4 169.5L350.7 170.9L350.7 176.5L346.4 175.1ZM350.0 132.7L354.2 134.0L354.2 139.4L350.0 138.0ZM350.0 137.3L354.2 138.7L354.2 144.0L350.0 142.7ZM350.0 142.0L354.2 143.3L354.2 148.7L350.0 147.3ZM350.0 146.6L354.2 148.0L354.2 153.5L350.0 152.2ZM350.0 151.5L354.2 152.8L354.2 158.4L350.0 157.1ZM350.0 156.4L354.2 157.7L354.2 163.3L350.0 161.9ZM350.0 161.2L354.2 162.6L354.2 168.1L350.0 166.8ZM350.0 166.1L354.2 167.4L354.2 173.0L350.0 171.6ZM350.0 170.9L354.2 172.3L354.2 177.8L350.0 176.5Z"/>
<path fill="#136af2" d="M353.5 134.0L357.8 135.4L357.8 140.7L353.5 139.4ZM353.5 138.7L357.8 140.0L357.8 145.4L353.5 144.0ZM353.5 143.3L357.8 144.7L357.8 150.0L353.5 148.7ZM353.5 148.0L357.8 149.3L357.8 154.9L353.5 153.5ZM353.5 152.8L357.8 154.2L357.8 159.8L353.5 158.4ZM353.5 157.7L357.8 159.1L357.8 164.7L353.5 163.3ZM353.5 162.6L357.8 164.0L357.8 169.5L353.5 168.1ZM353.5 167.4L357.8 168.8L357.8 174.4L353.5 173.0ZM353.5 172.3L357.8 173.7L357.8 179.2L353.5 177.8Z"/>
<path fill="#1268f2" d="M357.0 135.4L361.4 136.7L361.4 142.1L357.0 140.7ZM357.0 140.0L361.4 141.4L361.4 146.7L357.0 145.4ZM357.0 144.7L361.4 146.0L361.4 151.4L357.0 150.0ZM357.0 149.3L361.4 150.7L361.4 156.3L357.0 154.9ZM357.0 154.2L361.4 155.6L361.4 161.2L357.0 159.8ZM357.0 159.1L361.4 160.5L361.4 166.0L357.0 164.7ZM357.0 164.0L361.4 165.3L361.4 170.9L357.0 169.5ZM357.0 168.8L361.4 170.2L361.4 175.7L357.0 174.4ZM357.0 173.7L361.4 175.0L361.4 180.6L357.0 179.2Z"/>
<path fill="#1266f2" d="M360.6 136.7L364.9 138.1L364.9 143.4L360.6 142.1ZM360.6 141.4L364.9 142.7L364.9 148.1L360.6 146.7ZM360.6 146.0L364.9 147.4L364.9 152.8L360.6 151.4ZM360.6 150.7L364.9 152.1L364.9 157.6L360.6 156.3ZM360.6 155.6L364.9 156.9L364.9 162.5L360.6 161.2ZM360.6 160.5L364.9 161.8L364.9 167.4L360.6 166.0ZM360.6 165.3L364.9 166.7L364.9 172.3L360.6 170.9ZM360.6 170.2L364.9 171.6L364.9 177.1L360.6 175.7ZM360.6 175.0L364.9 176.4L364.9 182.0L360.6 180.6Z"/>
<path fill="#1263f2" d="M364.2 138.1L368.6 139.4L368.6 144.8L364.2 143.4ZM364.2 142.7L368.6 144.1L368.6 149.5L364.2 148.1ZM364.2 147.4L368.6 148.8L368.6 154.1L364.2 152.8ZM364.2 152.1L368.6 153.4L368.6 159.0L364.2 157.6ZM364.2 156.9L368.6 158.3L368.6 163.9L364.2 162.5ZM364.2 161.8L368.6 163.2L368.6 168.8L364.2 167.4ZM364.2 166.7L368.6 168.1L368.6 173.7L364.2 172.3ZM364.2 171.6L368.6 173.0L368.6 178.5L364.2 177.1ZM364.2 176.4L368.6 177.8L368.6 183.4L364.2 182.0Z"/>
<path fill="#115ef3" d="M367.8 139.4L372.2 140.8L372.2 146.2L367.8 144.8ZM367.8 144.1L372.2 145.5L372.2 150.9L367.8 149.5ZM367.8 148.8L372.2 150.2L372.2 155.5L367.8 154.1ZM367.8 153.4L372.2 154.8L372.2 160.4L367.8 159.0ZM367.8 158.3L372.2 159.7L372.2 165.3L367.8 163.9ZM367.8 163.2L372.2 164.6L372.2 170.2L367.8 168.8ZM367.8 168.1L372.2 169.5L372.2 175.1L367.8 173.7ZM367.8 173.0L372.2 174.4L372.2 180.0L367.8 178.5ZM367.8 177.8L372.2 179.3L372.2 184.8L367.8 183.4Z"/>
<path fill="#105af3" d="M371.5 140.8L376.0 142.2L376.0 147.6L371.5 146.2ZM371.5 145.5L376.0 146.9L376.0 152.3L371.5 150.9ZM371.5 150.2L376.0 151.6L376.0 157.0L371.5 155.5ZM371.5 154.8L376.0 156.3L376.0 161.9L371.5 160.4ZM371.5 159.7L376.0 161.2L376.0 166.8L371.5 165.3ZM371.5 164.6L376.0 166.1L376.0 171.7L371.5 170.2ZM371.5 169.5L376.0 171.0L376.0 176.5L371.5 175.1ZM371.5 174.4L376.0 175.8L376.0 181.4L371.5 180.0ZM371.5 179.3L376.0 180.7L376.0 186.3L371.5 184.8Z"/>
<path fill="#0f56f4" d="M375.2 142.2L379.7 143.6L379.7 149.0L375.2 147.6ZM375.2 146.9L379.7 148.3L379.7 153.7L375.2 152.3ZM375.2 151.6L379.7 153.0L379.7 158.4L375.2 157.0ZM375.2 156.3L379.7 157.7L379.7 163.3L375.2 161.9ZM375.2 161.2L379.7 162.6L379.7 168.2L375.2 166.8ZM375.2 166.1L379.7 167.5L379.7 173.1L375.2 171.7ZM375.2 171.0L379.7 172.4L379.7 178.0L375.2 176.5ZM375.2 175.8L379.7 177.3L379.7 182.8L375.2 181.4ZM375.2 180.7L379.7 182.1L379.7 187.7L375.2 186.3Z"/>
<path fill="#093bf7" d="M378.9 143.6L383.4 145.1L383.4 150.4L378.9 149.0ZM378.9 148.3L383.4 149.7L383.4 155.1L378.9 153.7ZM378.9 153.0L383.4 154.4L383.4 159.8L378.9 158.4ZM378.9 157.7L383.4 159.1L383.4 164.7L378.9 163.3ZM378.9 162.6L383.4 164.0L383.4 169.6L378.9 168.2ZM378.9 167.5L383.4 168.9L383.4 174.5L378.9 173.1ZM378.9 172.4L383.4 173.8L383.4 179.4L378.9 178.0ZM378.9 177.3L383.4 178.7L383.4 184.3L378.9 182.8ZM378.9 182.1L383.4 183.6L383.4 189.2L378.9 187.7Z"/>
<path fill="#0000ff" d="M382.7 145.1L387.1 146.5L387.1 151.9L382.7 150.4ZM382.7 149.7L387.1 151.2L387.1 156.5L382.7 155.1ZM382.7 154.4L387.1 155.8L387.1 161.2L382.7 159.8ZM382.7 159.1L387.1 160.5L387.1 166.1L382.7 164.7ZM382.7 164.0L387.1 165.4L387.1 171.1L382.7 169.6ZM382.7 168.9L387.1 170.4L387.1 176.0L382.7 174.5ZM382.7 173.8L387.1 175.3L387.1 180.9L382.7 179.4ZM382.7 178.7L387.1 180.2L387.1 185.7L382.7 184.3ZM382.7 183.6L387.1 185.0L387.1 190.6L382.7 189.2ZM386.4 146.5L390.9 147.9L390.9 153.3L386.4 151.9ZM386.4 151.2L390.9 152.6L390.9 158.0L386.4 156.5ZM386.4 155.8L390.9 157.3L390.9 162.6L386.4 161.2ZM386.4 160.5L390.9 161.9L390.9 167.6L386.4 166.1ZM386.4 165.4L390.9 166.9L390.9 172.5L386.4 171.1ZM386.4 170.4L390.9 171.8L390.9 177.4L386.4 176.0ZM386.4 175.3L390.9 176.7L390.9 182.3L386.4 180.9ZM386.4 180.2L390.9 181.6L390.9 187.2L386.4 185.7ZM386.4 185.0L390.9 186.5L390.9 192.1L386.4 190.6ZM390.1 147.9L394.6 149.3L394.6 154.7L390.1 153.3ZM390.1 152.6L394.6 154.0L394.6 159.4L390.1 158.0ZM390.1 157.3L394.6 158.7L394.6 164.1L390.1 162.6ZM390.1 161.9L394.6 163.4L394.6 169.0L390.1 167.6ZM390.1 166.9L394.6 168.3L394.6 173.9L390.1 172.5ZM390.1 171.8L394.6 173.2L394.6 178.9L390.1 177.4ZM390.1 176.7L394.6 178.2L394.6 183.7L390.1 182.3ZM390.1 181.6L394.6 183.0L394.6 188.6L390.1 187.2ZM390.1 186.5L394.6 187.9L394.6 193.5L390.1 192.1ZM393.9 149.3L398.4 150.7L398.4 156.1L393.9 154.7ZM393.9 154.0L398.4 155.4L398.4 160.8L393.9 159.4ZM393.9 158.7L398.4 160.1L398.4 165.5L393.9 164.1ZM393.9 163.4L398.4 164.8L398.4 170.4L393.9 169.0ZM393.9 168.3L398.4 169.7L398.4 175.4L393.9 173.9ZM393.9 173.2L398.4 174.7L398.4 180.3L393.9 178.9ZM393.9 178.2L398.4 179.6L398.4 185.2L393.9 183.7ZM393.9 183.0L398.4 184.5L398.4 190.1L393.9 188.6ZM393.9 187.9L398.4 189.4L398.4 195.0L393.9 193.5ZM397.6 150.7L402.1 152.1L402.1 157.5L397.6 156.1ZM397.6 155.4L402.1 156.8L402.1 162.2L397.6 160.8ZM397.6 160.1L402.1 161.5L402.1 166.9L397.6 165.5ZM397.6 164.8L402.1 166.2L402.1 171.9L397.6 170.4ZM397.6 169.7L402.1 171.2L402.1 176.8L397.6 175.4ZM397.6 174.7L402.1 176.1L402.1 181.7L397.6 180.3ZM397.6 179.6L402.1 181.0L402.1 186.6L397.6 185.2ZM397.6 184.5L402.1 185.9L402.1 191.6L397.6 190.1ZM397.6 189.4L402.1 190.9L402.1 196.5L397.6 195.0ZM401.4 152.1L406.0 153.6L406.0 159.0L401.4 157.5ZM401.4 156.8L406.0 158.3L406.0 163.7L401.4 162.2ZM401.4 161.5L406.0 163.0L406.0 168.4L401.4 166.9ZM401.4 166.2L406.0 167.7L406.0 173.4L401.4 171.9ZM401.4 171.2L406.0 172.7L406.0 178.3L401.4 176.8ZM401.4 176.1L406.0 177.6L406.0 183.2L401.4 181.7ZM401.4 181.0L406.0 182.5L406.0 188.2L401.4 186.6ZM401.4 185.9L406.0 187.5L406.0 193.1L401.4 191.6ZM401.4 190.9L406.0 192.4L406.0 198.0L401.4 196.5ZM405.3 153.6L409.9 155.1L409.9 160.5L405.3 159.0ZM405.3 158.3L409.9 159.8L409.9 165.2L405.3 163.7ZM405.3 163.0L409.9 164.5L409.9 169.9L405.3 168.4ZM405.3 167.7L409.9 169.2L409.9 174.9L405.3 173.4ZM405.3 172.7L409.9 174.2L409.9 179.8L405.3 178.3ZM405.3 177.6L409.9 179.1L409.9 184.7L405.3 183.2ZM405.3 182.5L409.9 184.0L409.9 189.7L405.3 188.2ZM405.3 187.5L409.9 189.0L409.9 194.6L405.3 193.1ZM405.3 192.4L409.9 193.9L409.9 199.5L405.3 198.0ZM409.2 155.1L413.8 156.5L413.8 162.0L409.2 160.5ZM409.2 159.8L413.8 161.3L413.8 166.7L409.2 165.2ZM409.2 164.5L413.8 166.0L413.8 171.4L409.2 169.9ZM409.2 169.2L413.8 170.7L413.8 176.3L409.2 174.9ZM409.2 174.2L413.8 175.6L413.8 181.3L409.2 179.8ZM409.2 179.1L413.8 180.6L413.8 186.2L409.2 184.7ZM409.2 184.0L413.8 185.5L413.8 191.2L409.2 189.7ZM409.2 189.0L413.8 190.5L413.8 196.1L409.2 194.6ZM409.2 193.9L413.8 195.4L413.8 201.0L409.2 199.5ZM413.0 156.5L417.4 157.9L417.4 163.3L413.0 162.0ZM413.0 161.3L417.4 162.6L417.4 168.1L413.0 166.7ZM413.0 166.0L417.4 167.4L417.4 172.8L413.0 171.4ZM413.0 170.7L417.4 172.1L417.4 177.7L413.0 176.3ZM413.0 175.6L417.4 177.0L417.4 182.7L413.0 181.3ZM413.0 180.6L417.4 182.0L417.4 187.6L413.0 186.2ZM413.0 185.5L417.4 186.9L417.4 192.6L413.0 191.2ZM413.0 190.5L417.4 191.9L417.4 197.5L413.0 196.1ZM413.0 195.4L417.4 196.8L417.4 202.4L413.0 201.0ZM416.7 157.9L421.0 159.3L421.0 164.7L416.7 163.3ZM416.7 162.6L421.0 164.0L421.0 169.4L416.7 168.1ZM416.7 167.4L421.0 168.7L421.0 174.2L416.7 172.8ZM416.7 172.1L421.0 173.5L421.0 179.1L416.7 177.7ZM416.7 177.0L421.0 178.4L421.0 184.1L416.7 182.7ZM416.7 182.0L421.0 183.4L421.0 189.0L416.7 187.6ZM416.7 186.9L421.0 188.3L421.0 193.9L416.7 192.6ZM416.7 191.9L421.0 193.2L421.0 198.9L416.7 197.5ZM416.7 196.8L421.0 198.2L421.0 203.8L416.7 202.4ZM420.3 159.3L424.6 160.7L424.6 166.1L420.3 164.7ZM420.3 164.0L424.6 165.4L424.6 170.8L420.3 169.4ZM420.3 168.7L424.6 170.1L424.6 175.5L420.3 174.2ZM420.3 173.5L424.6 174.8L424.6 180.5L420.3 179.1ZM420.3 178.4L424.6 179.8L424.6 185.5L420.3 184.1ZM420.3 183.4L424.6 184.8L424.6 190.4L420.3 189.0ZM420.3 188.3L424.6 189.7L424.6 195.3L420.3 193.9ZM420.3 193.2L424.6 194.6L424.6 200.3L420.3 198.9ZM420.3 198.2L424.6 199.6L424.6 205.2L420.3 203.8Z"/>
</g>
<g>
<path fill="#15e4f2" d="M314.8 147.7L318.9 149.0L318.9 154.5L314.8 153.2ZM314.8 152.5L318.9 153.8L318.9 159.3L314.8 157.9ZM314.8 157.2L318.9 158.6L318.9 164.1L314.8 162.8ZM314.8 162.1L318.9 163.4L318.9 168.8L314.8 167.5ZM314.8 166.8L318.9 168.1L318.9 173.6L314.8 172.2ZM314.8 171.5L318.9 172.9L318.9 178.3L314.8 176.9ZM314.8 176.2L318.9 177.6L318.9 183.0L314.8 181.7ZM314.8 181.0L318.9 182.3L318.9 187.7L314.8 186.3ZM314.8 185.6L318.9 187.0L318.9 192.4L314.8 191.0ZM314.8 190.3L318.9 191.7L318.9 197.1L314.8 195.7ZM314.8 195.0L318.9 196.4L318.9 201.7L314.8 200.3ZM314.8 199.6L318.9 201.0L318.9 206.3L314.8 204.9ZM314.8 204.2L318.9 205.6L318.9 211.1L314.8 209.7ZM318.1 149.0L322.3 150.3L322.3 155.8L318.1 154.5ZM318.1 153.8L322.3 155.1L322.3 160.6L318.1 159.3ZM318.1 158.6L322.3 159.9L322.3 165.4L318.1 164.1ZM318.1 163.4L322.3 164.7L322.3 170.2L318.1 168.8ZM318.1 168.1L322.3 169.5L322.3 174.9L318.1 173.6ZM318.1 172.9L322.3 174.2L322.3 179.7L318.1 178.3ZM318.1 177.6L322.3 179.0L322.3 184.4L318.1 183.0ZM318.1 182.3L322.3 183.7L322.3 189.1L318.1 187.7ZM318.1 187.0L322.3 188.4L322.3 193.8L318.1 192.4ZM318.1 191.7L322.3 193.1L322.3 198.4L318.1 197.1ZM318.1 196.4L322.3 197.7L322.3 203.1L318.1 201.7ZM318.1 201.0L322.3 202.4L322.3 207.7L318.1 206.3ZM321.6 150.3L325.7 151.6L325.7 157.2L321.6 155.8ZM321.6 155.1L325.7 156.5L325.7 162.0L321.6 160.6ZM321.6 159.9L325.7 161.3L325.7 166.8L321.6 165.4ZM321.6 164.7L325.7 166.1L325.7 171.5L321.6 170.2ZM321.6 169.5L325.7 170.8L325.7 176.3L321.6 174.9ZM321.6 174.2L325.7 175.6L325.7 181.0L321.6 179.7ZM321.6 179.0L325.7 180.3L325.7 185.7L321.6 184.4ZM321.6 183.7L325.7 185.0L325.7 190.4L321.6 189.1ZM321.6 188.4L325.7 189.7L325.7 195.2L321.6 193.8ZM321.6 193.1L325.7 194.5L325.7 199.8L321.6 198.4ZM321.6 197.7L325.7 199.1L325.7 204.4L321.6 203.1ZM321.6 202.4L325.7 203.7L325.7 209.1L321.6 207.7ZM324.9 151.6L329.2 153.0L329.2 158.5L324.9 157.2ZM324.9 156.5L329.2 157.8L329.2 163.4L324.9 162.0ZM324.9 161.3L329.2 162.7L329.2 168.2L324.9 166.8ZM324.9 166.1L329.2 167.5L329.2 172.9L324.9 171.5ZM324.9 170.8L329.2 172.2L329.2 177.7L324.9 176.3ZM324.9 175.6L329.2 177.0L329.2 182.4L324.9 181.0ZM324.9 180.3L329.2 181.7L329.2 187.1L324.9 185.7ZM324.9 185.0L329.2 186.4L329.2 191.8L324.9 190.4ZM324.9 189.7L329.2 191.1L329.2 196.6L324.9 195.2ZM324.9 194.5L329.2 195.9L329.2 201.2L324.9 199.8ZM324.9 199.1L329.2 200.5L329.2 205.9L324.9 204.4ZM328.4 153.0L332.7 154.4L332.7 159.9L328.4 158.5ZM328.4 157.8L332.7 159.2L332.7 164.7L328.4 163.4ZM328.4 162.7L332.7 164.0L332.7 169.6L328.4 168.2ZM328.4 167.5L332.7 168.9L332.7 174.3L328.4 172.9ZM328.4 172.2L332.7 173.6L332.7 179.1L328.4 177.7ZM328.4 177.0L332.7 178.4L332.7 183.8L328.4 182.4ZM328.4 181.7L332.7 183.1L332.7 188.5L328.4 187.1ZM328.4 186.4L332.7 187.8L332.7 193.3L328.4 191.8ZM328.4 191.1L332.7 192.6L332.7 198.0L328.4 196.6ZM328.4 195.9L332.7 197.3L332.7 202.6L328.4 201.2ZM331.9 154.4L336.2 155.8L336.2 161.3L331.9 159.9ZM331.9 159.2L336.2 160.6L336.2 166.1L331.9 164.7ZM331.9 164.0L336.2 165.4L336.2 170.9L331.9 169.6ZM331.9 168.9L336.2 170.2L336.2 175.7L331.9 174.3ZM331.9 173.6L336.2 175.0L336.2 180.5L331.9 179.1ZM331.9 178.4L336.2 179.8L336.2 185.2L331.9 183.8ZM331.9 183.1L336.2 184.5L336.2 189.9L331.9 188.5ZM331.9 187.8L336.2 189.2L336.2 194.7L331.9 193.3ZM331.9 192.6L336.2 194.0L336.2 199.4L331.9 198.0ZM335.4 155.8L339.8 157.2L339.8 162.7L335.4 161.3ZM335.4 160.6L339.8 162.0L339.8 167.6L335.4 166.1ZM335.4 165.4L339.8 166.9L339.8 172.4L335.4 170.9ZM335.4 170.2L339.8 171.7L339.8 177.2L335.4 175.7ZM335.4 175.0L339.8 176.5L339.8 181.9L335.4 180.5ZM335.4 179.8L339.8 181.2L339.8 186.7L335.4 185.2ZM335.4 184.5L339.8 186.0L339.8 191.4L335.4 189.9ZM335.4 189.2L339.8 190.7L339.8 196.1L335.4 194.7ZM335.4 194.0L339.8 195.4L339.8 200.9L335.4 199.4ZM339.1 157.2L343.5 158.6L343.5 164.2L339.1 162.7ZM339.1 162.0L343.5 163.5L343.5 169.0L339.1 167.6ZM339.1 166.9L343.5 168.3L343.5 173.8L339.1 172.4ZM339.1 171.7L343.5 173.1L343.5 178.6L339.1 177.2ZM339.1 176.5L343.5 177.9L343.5 183.4L339.1 181.9ZM339.1 181.2L343.5 182.7L343.5 188.1L339.1 186.7ZM339.1 186.0L343.5 187.4L343.5 192.9L339.1 191.4ZM339.1 190.7L343.5 192.2L343.5 197.6L339.1 196.1ZM342.8 158.6L347.2 160.1L347.2 165.6L342.8 164.2ZM342.8 163.5L347.2 164.9L347.2 170.5L342.8 169.0ZM342.8 168.3L347.2 169.8L347.2 175.3L342.8 173.8ZM342.8 173.1L347.2 174.6L347.2 180.1L342.8 178.6ZM342.8 177.9L347.2 179.4L347.2 184.8L342.8 183.4ZM342.8 182.7L347.2 184.1L347.2 189.6L342.8 188.1ZM342.8 187.4L347.2 188.9L347.2 194.3L342.8 192.9Z"/>
<path fill="#15e5f1" d="M314.8 209.0L318.9 210.4L318.9 215.9L314.8 214.5ZM314.8 213.8L318.9 215.2L318.9 220.6L314.8 219.2ZM318.1 205.6L322.3 207.0L322.3 212.5L318.1 211.1ZM318.1 210.4L322.3 211.8L322.3 217.3L318.1 215.9ZM318.1 215.2L322.3 216.6L322.3 222.0L318.1 220.6ZM321.6 207.0L325.7 208.4L325.7 213.9L321.6 212.5ZM321.6 211.8L325.7 213.2L325.7 218.7L321.6 217.3ZM324.9 203.7L329.2 205.2L329.2 210.5L324.9 209.1ZM324.9 208.4L329.2 209.8L329.2 215.3L324.9 213.9ZM328.4 200.5L332.7 201.9L332.7 207.3L328.4 205.9ZM328.4 205.2L332.7 206.6L332.7 211.9L328.4 210.5ZM328.4 209.8L332.7 211.2L332.7 216.7L328.4 215.3ZM331.9 197.3L336.2 198.7L336.2 204.0L331.9 202.6ZM331.9 201.9L336.2 203.3L336.2 208.7L331.9 207.3ZM331.9 206.6L336.2 208.0L336.2 213.4L331.9 211.9ZM335.4 198.7L339.8 200.2L339.8 205.5L335.4 204.0ZM335.4 203.3L339.8 204.8L339.8 210.2L335.4 208.7ZM339.1 195.4L343.5 196.9L343.5 202.3L339.1 200.9ZM339.1 200.2L343.5 201.6L343.5 207.0L339.1 205.5ZM342.8 192.2L347.2 193.6L347.2 199.1L342.8 197.6ZM342.8 196.9L347.2 198.4L347.2 203.8L342.8 202.3Z"/>
<path fill="#15e6f0" d="M314.8 218.6L318.9 219.9L318.9 225.3L314.8 223.9ZM314.8 223.2L318.9 224.6L318.9 230.1L314.8 228.7ZM318.1 219.9L322.3 221.3L322.3 226.7L318.1 225.3ZM321.6 216.6L325.7 218.0L325.7 223.4L321.6 222.0ZM324.9 213.2L329.2 214.6L329.2 220.1L324.9 218.7ZM324.9 218.0L329.2 219.4L329.2 224.9L324.9 223.4ZM328.4 214.6L332.7 216.0L332.7 221.5L328.4 220.1ZM331.9 211.2L336.2 212.7L336.2 218.1L331.9 216.7ZM335.4 208.0L339.8 209.5L339.8 214.8L335.4 213.4ZM339.1 204.8L343.5 206.3L343.5 211.7L339.1 210.2ZM339.1 209.5L343.5 211.0L343.5 216.3L339.1 214.8ZM342.8 201.6L347.2 203.1L347.2 208.5L342.8 207.0ZM342.8 206.3L347.2 207.8L347.2 213.2L342.8 211.7Z"/>
<path fill="#14eaec" d="M314.8 228.0L318.9 229.4L318.9 234.8L314.8 233.3ZM324.9 222.7L329.2 224.2L329.2 229.6L324.9 228.1ZM339.1 214.1L343.5 215.6L343.5 221.1L339.1 219.6Z"/>
<path fill="#12ecd8" d="M314.8 232.7L318.9 234.1L318.9 239.4L314.8 238.0Z"/>
<path fill="#0eeeb3" d="M314.8 237.3L318.9 238.7L318.9 244.1L314.8 242.7Z"/>
<path fill="#0bf095" d="M314.8 242.0L318.9 243.4L318.9 248.8L314.8 247.3ZM342.8 225.2L347.2 226.7L347.2 232.2L342.8 230.7Z"/>
<path fill="#0af276" d="M314.8 246.7L318.9 248.1L318.9 253.4L314.8 252.0ZM342.8 230.0L347.2 231.5L347.2 237.0L342.8 235.5Z"/>
<path fill="#0af556" d="M314.8 251.3L318.9 252.7L318.9 258.1L314.8 256.7ZM328.4 243.0L332.7 244.4L332.7 249.8L328.4 248.4Z"/>
<path fill="#0af741" d="M314.8 256.0L318.9 257.4L318.9 262.8L314.8 261.4Z"/>
<path fill="#0af92e" d="M314.8 260.6L318.9 262.1L318.9 267.4L314.8 265.9ZM324.9 255.6L329.2 257.0L329.2 262.4L324.9 261.0Z"/>
<path fill="#0ffb25" d="M314.8 265.2L318.9 266.7L318.9 272.0L314.8 270.5ZM335.4 255.3L339.8 256.8L339.8 262.2L335.4 260.7Z"/>
<path fill="#17fb20" d="M314.8 269.8L318.9 271.3L318.9 276.5L314.8 275.1ZM321.6 268.1L325.7 269.5L325.7 274.8L321.6 273.4Z"/>
<path fill="#1efc1c" d="M314.8 274.4L318.9 275.8L318.9 281.1L314.8 279.7ZM321.6 272.7L325.7 274.1L325.7 279.4L321.6 278.0ZM328.4 271.0L332.7 272.5L332.7 277.8L328.4 276.3Z"/>
<path fill="#25fd18" d="M314.8 279.0L318.9 280.4L318.9 285.7L314.8 284.3ZM342.8 272.4L347.2 274.0L347.2 279.3L342.8 277.7Z"/>
<path fill="#2efe12" d="M314.8 283.6L318.9 285.0L318.9 290.3L314.8 288.9Z"/>
<path fill="#39ff0c" d="M314.8 288.1L318.9 289.6L318.9 295.0L314.8 293.6Z"/>
<path fill="#4cff0a" d="M314.8 292.8L318.9 294.3L318.9 299.7L314.8 298.3Z"/>
<path fill="#64ff0a" d="M314.8 297.6L318.9 299.0L318.9 304.4L314.8 303.0ZM339.1 303.3L343.5 304.9L343.5 310.3L339.1 308.7ZM342.8 304.9L347.2 306.4L347.2 311.9L342.8 310.3Z"/>
<path fill="#7cff0a" d="M314.8 302.2L318.9 303.7L318.9 309.0L314.8 307.5Z"/>
<path fill="#94ff0a" d="M314.8 306.8L318.9 308.3L318.9 313.5L314.8 312.1ZM339.1 317.3L343.5 318.9L343.5 324.2L339.1 322.6ZM342.8 318.9L347.2 320.5L347.2 325.8L342.8 324.2Z"/>
<path fill="#adfd0c" d="M314.8 311.3L318.9 312.8L318.9 318.1L314.8 316.6ZM328.4 317.3L332.7 318.8L332.7 324.1L328.4 322.6Z"/>
<path fill="#c8fa0f" d="M314.8 315.9L318.9 317.4L318.9 322.6L314.8 321.1ZM318.1 317.4L322.3 318.9L322.3 324.1L318.1 322.6ZM321.6 318.9L325.7 320.3L325.7 325.5L321.6 324.1Z"/>
<path fill="#e3f712" d="M314.8 320.4L318.9 321.9L318.9 327.1L314.8 325.6ZM318.1 321.9L322.3 323.4L322.3 328.6L318.1 327.1Z"/>
<path fill="#f6f014" d="M314.8 324.9L318.9 326.4L318.9 331.6L314.8 330.1ZM318.1 326.4L322.3 327.9L322.3 333.1L318.1 331.6ZM321.6 327.9L325.7 329.4L325.7 334.6L321.6 333.1ZM324.9 329.4L329.2 330.9L329.2 336.1L324.9 334.6Z"/>
<path fill="#f9e114" d="M314.8 329.4L318.9 330.9L318.9 336.1L314.8 334.6Z"/>
<path fill="#eff613" d="M314.8 333.9L318.9 335.4L318.9 340.6L314.8 339.1Z"/>
<path fill="#f7ea14" d="M314.8 338.4L318.9 339.9L318.9 345.1L314.8 343.6Z"/>
<path fill="#fadf14" d="M314.8 342.9L318.9 344.4L318.9 349.4L314.8 347.9Z"/>
<path fill="#fcd314" d="M314.8 347.2L318.9 348.7L318.9 353.6L314.8 352.1Z"/>
<path fill="#ffc814" d="M314.8 351.4L318.9 352.9L318.9 357.9L314.8 356.4Z"/>
<path fill="#ffc214" d="M314.8 355.6L318.9 357.2L318.9 362.1L314.8 360.6Z"/>
<path fill="#ffbd13" d="M314.8 359.9L318.9 361.4L318.9 366.4L314.8 364.9Z"/>
<path fill="#ffb913" d="M314.8 364.2L318.9 365.7L318.9 370.7L314.8 369.2ZM321.6 345.9L325.7 347.4L325.7 352.4L321.6 350.9ZM324.9 342.9L329.2 344.4L329.2 349.6L324.9 348.1Z"/>
<path fill="#ffb512" d="M314.8 368.4L318.9 370.0L318.9 374.9L314.8 373.4Z"/>
<path fill="#ffc013" d="M314.8 372.7L318.9 374.2L318.9 379.1L314.8 377.6ZM318.1 348.7L322.3 350.2L322.3 355.1L318.1 353.6Z"/>
<path fill="#fdcf14" d="M314.8 376.9L318.9 378.4L318.9 383.4L314.8 381.9Z"/>
<path fill="#14e9ed" d="M318.1 224.6L322.3 226.0L322.3 231.5L318.1 230.1ZM328.4 219.4L332.7 220.8L332.7 226.3L328.4 224.9ZM342.8 211.0L347.2 212.5L347.2 217.8L342.8 216.3Z"/>
<path fill="#13ebe2" d="M318.1 229.4L322.3 230.8L322.3 236.2L318.1 234.8Z"/>
<path fill="#0fedbd" d="M318.1 234.1L322.3 235.5L322.3 240.8L318.1 239.4Z"/>
<path fill="#0cef9b" d="M318.1 238.7L322.3 240.1L322.3 245.5L318.1 244.1Z"/>
<path fill="#0af17f" d="M318.1 243.4L322.3 244.8L322.3 250.2L318.1 248.8Z"/>
<path fill="#0af55f" d="M318.1 248.1L322.3 249.5L322.3 254.9L318.1 253.4ZM331.9 239.8L336.2 241.2L336.2 246.6L331.9 245.1Z"/>
<path fill="#0af747" d="M318.1 252.7L322.3 254.2L322.3 259.5L318.1 258.1Z"/>
<path fill="#0af935" d="M318.1 257.4L322.3 258.8L322.3 264.2L318.1 262.8ZM331.9 249.1L336.2 250.6L336.2 256.0L331.9 254.5Z"/>
<path fill="#0cfa27" d="M318.1 262.1L322.3 263.5L322.3 268.8L318.1 267.4ZM328.4 257.0L332.7 258.5L332.7 263.9L328.4 262.4Z"/>
<path fill="#13fb23" d="M318.1 266.7L322.3 268.1L322.3 273.4L318.1 272.0Z"/>
<path fill="#1afc1e" d="M318.1 271.3L322.3 272.7L322.3 278.0L318.1 276.5ZM324.9 269.5L329.2 271.0L329.2 276.3L324.9 274.8Z"/>
<path fill="#21fc1a" d="M318.1 275.8L322.3 277.3L322.3 282.6L318.1 281.1ZM324.9 274.1L329.2 275.6L329.2 280.9L324.9 279.4ZM331.9 272.5L336.2 274.0L336.2 279.3L331.9 277.8ZM342.8 267.7L347.2 269.3L347.2 274.7L342.8 273.1Z"/>
<path fill="#28fd16" d="M318.1 280.4L322.3 281.9L322.3 287.2L318.1 285.7Z"/>
<path fill="#32fe10" d="M318.1 285.0L322.3 286.5L322.3 291.8L318.1 290.3ZM328.4 284.8L332.7 286.3L332.7 291.6L328.4 290.1Z"/>
<path fill="#3cff0a" d="M318.1 289.6L322.3 291.1L322.3 296.5L318.1 295.0ZM342.8 290.9L347.2 292.5L347.2 297.8L342.8 296.2Z"/>
<path fill="#51ff0a" d="M318.1 294.3L322.3 295.8L322.3 301.2L318.1 299.7Z"/>
<path fill="#68ff0a" d="M318.1 299.0L322.3 300.5L322.3 305.9L318.1 304.4Z"/>
<path fill="#7fff0a" d="M318.1 303.7L322.3 305.2L322.3 310.4L318.1 309.0Z"/>
<path fill="#96ff0a" d="M318.1 308.3L322.3 309.7L322.3 315.0L318.1 313.5Z"/>
<path fill="#aefd0c" d="M318.1 312.8L322.3 314.3L322.3 319.6L318.1 318.1ZM321.6 314.3L325.7 315.8L325.7 321.0L321.6 319.6ZM324.9 315.8L329.2 317.3L329.2 322.6L324.9 321.0ZM331.9 318.8L336.2 320.3L336.2 325.6L331.9 324.1ZM335.4 320.3L339.8 321.9L339.8 327.2L335.4 325.6ZM339.1 321.9L343.5 323.5L343.5 328.8L339.1 327.2ZM342.8 323.5L347.2 325.1L347.2 330.4L342.8 328.8Z"/>
<path fill="#fae114" d="M318.1 330.9L322.3 332.4L322.3 337.6L318.1 336.1Z"/>
<path fill="#f8e914" d="M318.1 335.4L322.3 336.9L322.3 342.1L318.1 340.6Z"/>
<path fill="#fbda14" d="M318.1 339.9L322.3 341.4L322.3 346.6L318.1 345.1ZM321.6 336.9L325.7 338.4L325.7 343.6L321.6 342.1ZM331.9 336.9L336.2 338.5L336.2 343.7L331.9 342.2Z"/>
<path fill="#fece14" d="M318.1 344.4L322.3 345.9L322.3 350.9L318.1 349.4Z"/>
<path fill="#ffaf12" d="M318.1 352.9L322.3 354.4L322.3 359.4L318.1 357.9Z"/>
<path fill="#ffa911" d="M318.1 357.2L322.3 358.7L322.3 363.7L318.1 362.1ZM335.4 347.5L339.8 349.1L339.8 354.4L335.4 352.7Z"/>
<path fill="#ffa311" d="M318.1 361.4L322.3 363.0L322.3 367.9L318.1 366.4Z"/>
<path fill="#ff9d10" d="M318.1 365.7L322.3 367.2L322.3 372.2L318.1 370.7Z"/>
<path fill="#ff9a10" d="M318.1 370.0L322.3 371.5L322.3 376.4L318.1 374.9Z"/>
<path fill="#ffa611" d="M318.1 374.2L322.3 375.7L322.3 380.7L318.1 379.1ZM321.6 350.2L325.7 351.7L325.7 356.6L321.6 355.1Z"/>
<path fill="#ffb813" d="M318.1 378.4L322.3 380.0L322.3 384.9L318.1 383.4Z"/>
<path fill="#15e7ef" d="M321.6 221.3L325.7 222.7L325.7 228.1L321.6 226.7ZM335.4 212.7L339.8 214.1L339.8 219.6L335.4 218.1Z"/>
<path fill="#14ebe9" d="M321.6 226.0L325.7 227.4L325.7 232.9L321.6 231.5Z"/>
<path fill="#10edc7" d="M321.6 230.8L325.7 232.2L325.7 237.6L321.6 236.2Z"/>
<path fill="#0cefa2" d="M321.6 235.5L325.7 236.9L325.7 242.2L321.6 240.8Z"/>
<path fill="#0af088" d="M321.6 240.1L325.7 241.5L325.7 246.9L321.6 245.5ZM335.4 231.8L339.8 233.3L339.8 238.7L335.4 237.2Z"/>
<path fill="#0af467" d="M321.6 244.8L325.7 246.2L325.7 251.6L321.6 250.2ZM335.4 236.5L339.8 238.0L339.8 243.4L335.4 241.9Z"/>
<path fill="#0af64c" d="M321.6 249.5L325.7 250.9L325.7 256.3L321.6 254.9Z"/>
<path fill="#0af83b" d="M321.6 254.2L325.7 255.6L325.7 261.0L321.6 259.5ZM339.1 242.7L343.5 244.2L343.5 249.6L339.1 248.1Z"/>
<path fill="#0afa29" d="M321.6 258.8L325.7 260.3L325.7 265.6L321.6 264.2Z"/>
<path fill="#10fb24" d="M321.6 263.5L325.7 264.9L325.7 270.2L321.6 268.8ZM331.9 258.5L336.2 260.0L336.2 265.4L331.9 263.9Z"/>
<path fill="#24fd18" d="M321.6 277.3L325.7 278.7L325.7 284.0L321.6 282.6ZM335.4 274.0L339.8 275.5L339.8 280.8L335.4 279.3Z"/>
<path fill="#2bfd14" d="M321.6 281.9L325.7 283.3L325.7 288.6L321.6 287.2Z"/>
<path fill="#35fe0e" d="M321.6 286.5L325.7 287.9L325.7 293.2L321.6 291.8ZM331.9 286.3L336.2 287.8L336.2 293.1L331.9 291.6Z"/>
<path fill="#42ff0a" d="M321.6 291.1L325.7 292.5L325.7 297.9L321.6 296.5Z"/>
<path fill="#56ff0a" d="M321.6 295.8L325.7 297.2L325.7 302.6L321.6 301.2ZM342.8 300.1L347.2 301.7L347.2 307.1L342.8 305.6Z"/>
<path fill="#6cff0a" d="M321.6 300.5L325.7 301.9L325.7 307.3L321.6 305.9Z"/>
<path fill="#82ff0a" d="M321.6 305.2L325.7 306.6L325.7 311.9L321.6 310.4Z"/>
<path fill="#97ff0a" d="M321.6 309.7L325.7 311.2L325.7 316.5L321.6 315.0ZM331.9 314.2L336.2 315.7L336.2 321.0L331.9 319.5Z"/>
<path fill="#e4f712" d="M321.6 323.4L325.7 324.8L325.7 330.1L321.6 328.6ZM324.9 324.8L329.2 326.4L329.2 331.6L324.9 330.1ZM328.4 326.4L332.7 327.9L332.7 333.1L328.4 331.6Z"/>
<path fill="#fae014" d="M321.6 332.4L325.7 333.9L325.7 339.1L321.6 337.6Z"/>
<path fill="#ffca14" d="M321.6 341.4L325.7 342.9L325.7 348.1L321.6 346.6Z"/>
<path fill="#ff9410" d="M321.6 354.4L325.7 355.9L325.7 360.9L321.6 359.4ZM331.9 350.5L336.2 352.0L336.2 357.0L331.9 355.5Z"/>
<path fill="#ff8c0f" d="M321.6 358.7L325.7 360.2L325.7 365.2L321.6 363.7Z"/>
<path fill="#ff850e" d="M321.6 363.0L325.7 364.5L325.7 369.4L321.6 367.9ZM328.4 383.1L332.7 384.7L332.7 389.6L328.4 388.0Z"/>
<path fill="#ff810e" d="M321.6 367.2L325.7 368.7L325.7 373.7L321.6 372.2Z"/>
<path fill="#ff7e0e" d="M321.6 371.5L325.7 373.0L325.7 378.0L321.6 376.4ZM324.9 355.9L329.2 357.5L329.2 362.4L324.9 360.9ZM331.9 354.8L336.2 356.3L336.2 361.3L331.9 359.7Z"/>
<path fill="#ff8a0f" d="M321.6 375.7L325.7 377.3L325.7 382.2L321.6 380.7ZM324.9 381.5L329.2 383.1L329.2 388.0L324.9 386.5Z"/>
<path fill="#ff9e11" d="M321.6 380.0L325.7 381.5L325.7 386.5L321.6 384.9Z"/>
<path fill="#11ecd1" d="M324.9 227.4L329.2 228.9L329.2 234.3L324.9 232.9ZM339.1 218.9L343.5 220.4L343.5 225.9L339.1 224.4Z"/>
<path fill="#0deeac" d="M324.9 232.2L329.2 233.6L329.2 239.0L324.9 237.6Z"/>
<path fill="#0af090" d="M324.9 236.9L329.2 238.3L329.2 243.7L324.9 242.2Z"/>
<path fill="#0af36f" d="M324.9 241.5L329.2 243.0L329.2 248.4L324.9 246.9Z"/>
<path fill="#0af650" d="M324.9 246.2L329.2 247.7L329.2 253.1L324.9 251.6Z"/>
<path fill="#0af83f" d="M324.9 250.9L329.2 252.4L329.2 257.7L324.9 256.3ZM342.8 239.5L347.2 241.0L347.2 246.4L342.8 244.9Z"/>
<path fill="#0efa26" d="M324.9 260.3L329.2 261.7L329.2 267.1L324.9 265.6Z"/>
<path fill="#14fb22" d="M324.9 264.9L329.2 266.4L329.2 271.7L324.9 270.2ZM335.4 260.0L339.8 261.5L339.8 266.9L335.4 265.4ZM339.1 256.8L343.5 258.3L343.5 263.7L339.1 262.2Z"/>
<path fill="#27fd17" d="M324.9 278.7L329.2 280.2L329.2 285.5L324.9 284.0ZM339.1 275.5L343.5 277.0L343.5 282.4L339.1 280.8Z"/>
<path fill="#2ffe12" d="M324.9 283.3L329.2 284.8L329.2 290.1L324.9 288.6ZM342.8 281.7L347.2 283.2L347.2 288.5L342.8 287.0Z"/>
<path fill="#38ff0c" d="M324.9 287.9L329.2 289.4L329.2 294.7L324.9 293.2ZM335.4 287.8L339.8 289.3L339.8 294.7L335.4 293.1Z"/>
<path fill="#47ff0a" d="M324.9 292.5L329.2 294.0L329.2 299.4L324.9 297.9Z"/>
<path fill="#5aff0a" d="M324.9 297.2L329.2 298.7L329.2 304.1L324.9 302.6Z"/>
<path fill="#6fff0a" d="M324.9 301.9L329.2 303.4L329.2 308.9L324.9 307.3Z"/>
<path fill="#84ff0a" d="M324.9 306.6L329.2 308.2L329.2 313.4L324.9 311.9Z"/>
<path fill="#98ff0a" d="M324.9 311.2L329.2 312.7L329.2 318.0L324.9 316.5ZM328.4 312.7L332.7 314.2L332.7 319.5L328.4 318.0Z"/>
<path fill="#c9fa0f" d="M324.9 320.3L329.2 321.9L329.2 327.1L324.9 325.5ZM328.4 321.9L332.7 323.4L332.7 328.6L328.4 327.1ZM331.9 323.4L336.2 324.9L336.2 330.1L331.9 328.6Z"/>
<path fill="#fade14" d="M324.9 333.9L329.2 335.4L329.2 340.6L324.9 339.1Z"/>
<path fill="#fecd14" d="M324.9 338.4L329.2 339.9L329.2 345.1L324.9 343.6Z"/>
<path fill="#ffa411" d="M324.9 347.4L329.2 348.9L329.2 353.9L324.9 352.4Z"/>
<path fill="#ff900f" d="M324.9 351.7L329.2 353.2L329.2 358.2L324.9 356.6ZM335.4 352.0L339.8 353.7L339.8 358.6L335.4 357.0ZM339.1 353.7L343.5 355.3L343.5 360.3L339.1 358.6Z"/>
<path fill="#ff750d" d="M324.9 360.2L329.2 361.7L329.2 366.7L324.9 365.2ZM342.8 363.8L347.2 365.5L347.2 370.5L342.8 368.8Z"/>
<path fill="#ff6e0c" d="M324.9 364.5L329.2 366.0L329.2 371.0L324.9 369.4ZM331.9 380.4L336.2 382.0L336.2 386.9L331.9 385.4ZM342.8 372.4L347.2 374.1L347.2 379.1L342.8 377.4ZM342.8 376.7L347.2 378.4L347.2 383.4L342.8 381.7Z"/>
<path fill="#ff6a0c" d="M324.9 368.7L329.2 370.3L329.2 375.3L324.9 373.7ZM328.4 361.7L332.7 363.3L332.7 368.3L328.4 366.7Z"/>
<path fill="#ff690b" d="M324.9 373.0L329.2 374.6L329.2 379.5L324.9 378.0Z"/>
<path fill="#ff770d" d="M324.9 377.3L329.2 378.8L329.2 383.8L324.9 382.2Z"/>
<path fill="#12ecdb" d="M328.4 224.2L332.7 225.6L332.7 231.0L328.4 229.6Z"/>
<path fill="#0eeeb6" d="M328.4 228.9L332.7 230.3L332.7 235.7L328.4 234.3Z"/>
<path fill="#0bef96" d="M328.4 233.6L332.7 235.0L332.7 240.5L328.4 239.0Z"/>
<path fill="#0af278" d="M328.4 238.3L332.7 239.8L332.7 245.1L328.4 243.7Z"/>
<path fill="#0af742" d="M328.4 247.7L332.7 249.1L332.7 254.5L328.4 253.1Z"/>
<path fill="#0af932" d="M328.4 252.4L332.7 253.8L332.7 259.2L328.4 257.7Z"/>
<path fill="#12fb23" d="M328.4 261.7L332.7 263.2L332.7 268.6L328.4 267.1Z"/>
<path fill="#18fb20" d="M328.4 266.4L332.7 267.9L332.7 273.2L328.4 271.7ZM342.8 258.3L347.2 259.9L347.2 265.3L342.8 263.7Z"/>
<path fill="#24fd19" d="M328.4 275.6L332.7 277.1L332.7 282.4L328.4 280.9Z"/>
<path fill="#2afd15" d="M328.4 280.2L332.7 281.7L332.7 287.0L328.4 285.5Z"/>
<path fill="#3bff0b" d="M328.4 289.4L332.7 290.9L332.7 296.2L328.4 294.7Z"/>
<path fill="#4bff0a" d="M328.4 294.0L332.7 295.5L332.7 300.9L328.4 299.4Z"/>
<path fill="#5eff0a" d="M328.4 298.7L332.7 300.2L332.7 305.6L328.4 304.1Z"/>
<path fill="#72ff0a" d="M328.4 303.4L332.7 304.9L332.7 310.4L328.4 308.9Z"/>
<path fill="#85ff0a" d="M328.4 308.2L332.7 309.7L332.7 314.9L328.4 313.4ZM331.9 309.7L336.2 311.2L336.2 316.4L331.9 314.9ZM335.4 311.2L339.8 312.7L339.8 318.0L335.4 316.4Z"/>
<path fill="#f6ef14" d="M328.4 330.9L332.7 332.4L332.7 337.6L328.4 336.1ZM331.9 332.4L336.2 333.9L336.2 339.2L331.9 337.6ZM335.4 333.9L339.8 335.5L339.8 340.8L335.4 339.2ZM339.1 335.5L343.5 337.1L343.5 342.4L339.1 340.8ZM342.8 337.1L347.2 338.7L347.2 344.0L342.8 342.4Z"/>
<path fill="#fadc14" d="M328.4 335.4L332.7 336.9L332.7 342.2L328.4 340.6Z"/>
<path fill="#feca14" d="M328.4 339.9L332.7 341.5L332.7 346.7L328.4 345.1Z"/>
<path fill="#ffb212" d="M328.4 344.4L332.7 346.0L332.7 351.2L328.4 349.6Z"/>
<path fill="#ff9c10" d="M328.4 348.9L332.7 350.5L332.7 355.5L328.4 353.9Z"/>
<path fill="#ff860e" d="M328.4 353.2L332.7 354.8L332.7 359.7L328.4 358.2Z"/>
<path fill="#ff730d" d="M328.4 357.5L332.7 359.0L332.7 364.0L328.4 362.4Z"/>
<path fill="#ff630b" d="M328.4 366.0L332.7 367.6L332.7 372.6L328.4 371.0Z"/>
<path fill="#ff5f0b" d="M328.4 370.3L332.7 371.9L332.7 376.9L328.4 375.3ZM328.4 374.6L332.7 376.2L332.7 381.1L328.4 379.5ZM335.4 364.9L339.8 366.5L339.8 371.5L335.4 369.9Z"/>
<path fill="#ff700c" d="M328.4 378.8L332.7 380.4L332.7 385.4L328.4 383.8ZM342.8 368.1L347.2 369.8L347.2 374.8L342.8 373.1Z"/>
<path fill="#15e8ee" d="M331.9 216.0L336.2 217.4L336.2 222.9L331.9 221.5Z"/>
<path fill="#13ebe3" d="M331.9 220.8L336.2 222.2L336.2 227.7L331.9 226.3Z"/>
<path fill="#0fedbf" d="M331.9 225.6L336.2 227.0L336.2 232.5L331.9 231.0Z"/>
<path fill="#0cef9c" d="M331.9 230.3L336.2 231.8L336.2 237.2L331.9 235.7Z"/>
<path fill="#0af180" d="M331.9 235.0L336.2 236.5L336.2 241.9L331.9 240.5Z"/>
<path fill="#0af746" d="M331.9 244.4L336.2 245.9L336.2 251.3L331.9 249.8Z"/>
<path fill="#0bfa28" d="M331.9 253.8L336.2 255.3L336.2 260.7L331.9 259.2Z"/>
<path fill="#16fb21" d="M331.9 263.2L336.2 264.7L336.2 270.0L331.9 268.6Z"/>
<path fill="#1bfc1e" d="M331.9 267.9L336.2 269.3L336.2 274.7L331.9 273.2Z"/>
<path fill="#26fd17" d="M331.9 277.1L336.2 278.6L336.2 283.9L331.9 282.4Z"/>
<path fill="#2dfe13" d="M331.9 281.7L336.2 283.2L336.2 288.5L331.9 287.0Z"/>
<path fill="#3fff0a" d="M331.9 290.9L336.2 292.4L336.2 297.7L331.9 296.2Z"/>
<path fill="#4fff0a" d="M331.9 295.5L336.2 297.0L336.2 302.4L331.9 300.9Z"/>
<path fill="#61ff0a" d="M331.9 300.2L336.2 301.7L336.2 307.1L331.9 305.6Z"/>
<path fill="#73ff0a" d="M331.9 304.9L336.2 306.4L336.2 311.9L331.9 310.4ZM342.8 309.6L347.2 311.2L347.2 316.6L342.8 315.0Z"/>
<path fill="#e5f712" d="M331.9 327.9L336.2 329.4L336.2 334.6L331.9 333.1ZM335.4 329.4L339.8 331.0L339.8 336.2L335.4 334.6ZM339.1 331.0L343.5 332.6L343.5 337.8L339.1 336.2Z"/>
<path fill="#ffc714" d="M331.9 341.5L336.2 343.0L336.2 348.2L331.9 346.7Z"/>
<path fill="#ffad12" d="M331.9 346.0L336.2 347.5L336.2 352.7L331.9 351.2Z"/>
<path fill="#ff6b0c" d="M331.9 359.0L336.2 360.6L336.2 365.6L331.9 364.0ZM339.1 362.2L343.5 363.8L343.5 368.8L339.1 367.2Z"/>
<path fill="#ff610b" d="M331.9 363.3L336.2 364.9L336.2 369.9L331.9 368.3Z"/>
<path fill="#ff5b0a" d="M331.9 367.6L336.2 369.2L336.2 374.1L331.9 372.6ZM331.9 376.2L336.2 377.7L336.2 382.7L331.9 381.1ZM335.4 369.2L339.8 370.8L339.8 375.8L335.4 374.1Z"/>
<path fill="#ff5a0a" d="M331.9 371.9L336.2 373.4L336.2 378.4L331.9 376.9ZM335.4 373.4L339.8 375.1L339.8 380.1L335.4 378.4Z"/>
<path fill="#ff840e" d="M331.9 384.7L336.2 386.2L336.2 391.2L331.9 389.6ZM342.8 385.3L347.2 386.9L347.2 391.9L342.8 390.3Z"/>
<path fill="#14ebea" d="M335.4 217.4L339.8 218.9L339.8 224.4L335.4 222.9Z"/>
<path fill="#10edc8" d="M335.4 222.2L339.8 223.7L339.8 229.2L335.4 227.7Z"/>
<path fill="#0cefa3" d="M335.4 227.0L339.8 228.5L339.8 234.0L335.4 232.5Z"/>
<path fill="#0af74a" d="M335.4 241.2L339.8 242.7L339.8 248.1L335.4 246.6Z"/>
<path fill="#0af936" d="M335.4 245.9L339.8 247.4L339.8 252.8L335.4 251.3Z"/>
<path fill="#0afa28" d="M335.4 250.6L339.8 252.1L339.8 257.5L335.4 256.0ZM339.1 247.4L343.5 248.9L343.5 254.3L339.1 252.8Z"/>
<path fill="#1afc1f" d="M335.4 264.7L339.8 266.2L339.8 271.6L335.4 270.0Z"/>
<path fill="#1ffc1c" d="M335.4 269.3L339.8 270.9L339.8 276.2L335.4 274.7Z"/>
<path fill="#29fd15" d="M335.4 278.6L339.8 280.1L339.8 285.4L335.4 283.9ZM342.8 277.0L347.2 278.6L347.2 283.9L342.8 282.4Z"/>
<path fill="#30fe11" d="M335.4 283.2L339.8 284.7L339.8 290.0L335.4 288.5Z"/>
<path fill="#43ff0a" d="M335.4 292.4L339.8 294.0L339.8 299.3L335.4 297.7Z"/>
<path fill="#52ff0a" d="M335.4 297.0L339.8 298.6L339.8 304.0L335.4 302.4Z"/>
<path fill="#63ff0a" d="M335.4 301.7L339.8 303.3L339.8 308.7L335.4 307.1Z"/>
<path fill="#74ff0a" d="M335.4 306.4L339.8 308.0L339.8 313.4L335.4 311.9ZM339.1 308.0L343.5 309.6L343.5 315.0L339.1 313.4Z"/>
<path fill="#95ff0a" d="M335.4 315.7L339.8 317.3L339.8 322.6L335.4 321.0Z"/>
<path fill="#cafa0f" d="M335.4 324.9L339.8 326.5L339.8 331.7L335.4 330.1ZM339.1 326.5L343.5 328.1L343.5 333.3L339.1 331.7ZM342.8 328.1L347.2 329.7L347.2 334.9L342.8 333.3Z"/>
<path fill="#fbd914" d="M335.4 338.5L339.8 340.1L339.8 345.3L335.4 343.7Z"/>
<path fill="#ffc414" d="M335.4 343.0L339.8 344.6L339.8 349.8L335.4 348.2Z"/>
<path fill="#ff7a0d" d="M335.4 356.3L339.8 357.9L339.8 362.9L335.4 361.3ZM339.1 383.6L343.5 385.3L343.5 390.3L339.1 388.6Z"/>
<path fill="#ff680b" d="M335.4 360.6L339.8 362.2L339.8 367.2L335.4 365.6Z"/>
<path fill="#ff5d0a" d="M335.4 377.7L339.8 379.4L339.8 384.3L335.4 382.7Z"/>
<path fill="#ff710c" d="M335.4 382.0L339.8 383.6L339.8 388.6L335.4 386.9ZM342.8 381.0L347.2 382.7L347.2 387.6L342.8 386.0Z"/>
<path fill="#ff880f" d="M335.4 386.2L339.8 387.9L339.8 392.9L335.4 391.2Z"/>
<path fill="#0deeab" d="M339.1 223.7L343.5 225.2L343.5 230.7L339.1 229.2Z"/>
<path fill="#0af08f" d="M339.1 228.5L343.5 230.0L343.5 235.5L339.1 234.0Z"/>
<path fill="#0af36e" d="M339.1 233.3L343.5 234.8L343.5 240.2L339.1 238.7Z"/>
<path fill="#0af64f" d="M339.1 238.0L343.5 239.5L343.5 244.9L339.1 243.4Z"/>
<path fill="#0ffa25" d="M339.1 252.1L343.5 253.6L343.5 259.0L339.1 257.5ZM342.8 248.9L347.2 250.5L347.2 255.9L342.8 254.3Z"/>
<path fill="#18fb1f" d="M339.1 261.5L343.5 263.0L343.5 268.4L339.1 266.9Z"/>
<path fill="#1dfc1c" d="M339.1 266.2L343.5 267.7L343.5 273.1L339.1 271.6Z"/>
<path fill="#22fc1a" d="M339.1 270.9L343.5 272.4L343.5 277.7L339.1 276.2Z"/>
<path fill="#2cfd13" d="M339.1 280.1L343.5 281.7L343.5 287.0L339.1 285.4Z"/>
<path fill="#33fe0f" d="M339.1 284.7L343.5 286.3L343.5 291.6L339.1 290.0Z"/>
<path fill="#3aff0b" d="M339.1 289.3L343.5 290.9L343.5 296.2L339.1 294.7Z"/>
<path fill="#46ff0a" d="M339.1 294.0L343.5 295.5L343.5 300.8L339.1 299.3Z"/>
<path fill="#54ff0a" d="M339.1 298.6L343.5 300.1L343.5 305.6L339.1 304.0Z"/>
<path fill="#83ff0a" d="M339.1 312.7L343.5 314.3L343.5 319.6L339.1 318.0Z"/>
<path fill="#fbd814" d="M339.1 340.1L343.5 341.7L343.5 346.9L339.1 345.3ZM342.8 341.7L347.2 343.3L347.2 348.5L342.8 346.9Z"/>
<path fill="#ffc314" d="M339.1 344.6L343.5 346.2L343.5 351.4L339.1 349.8Z"/>
<path fill="#ffa811" d="M339.1 349.1L343.5 350.7L343.5 356.0L339.1 354.4Z"/>
<path fill="#ff7c0d" d="M339.1 357.9L343.5 359.6L343.5 364.5L339.1 362.9Z"/>
<path fill="#ff650b" d="M339.1 366.5L343.5 368.1L343.5 373.1L339.1 371.5Z"/>
<path fill="#ff620b" d="M339.1 370.8L343.5 372.4L343.5 377.4L339.1 375.8ZM339.1 375.1L343.5 376.7L343.5 381.7L339.1 380.1Z"/>
<path fill="#ff660b" d="M339.1 379.4L343.5 381.0L343.5 386.0L339.1 384.3Z"/>
<path fill="#ff8f0f" d="M339.1 387.9L343.5 389.6L343.5 394.5L339.1 392.9Z"/>
<path fill="#12ecda" d="M342.8 215.6L347.2 217.1L347.2 222.6L342.8 221.1Z"/>
<path fill="#0eeeb4" d="M342.8 220.4L347.2 221.9L347.2 227.4L342.8 225.9Z"/>
<path fill="#0af654" d="M342.8 234.8L347.2 236.3L347.2 241.7L342.8 240.2Z"/>
<path fill="#0afa2b" d="M342.8 244.2L347.2 245.7L347.2 251.2L342.8 249.6Z"/>
<path fill="#13fb22" d="M342.8 253.6L347.2 255.2L347.2 260.6L342.8 259.0Z"/>
<path fill="#1cfc1d" d="M342.8 263.0L347.2 264.6L347.2 270.0L342.8 268.4Z"/>
<path fill="#36fe0e" d="M342.8 286.3L347.2 287.8L347.2 293.2L342.8 291.6Z"/>
<path fill="#49ff0a" d="M342.8 295.5L347.2 297.1L347.2 302.4L342.8 300.8Z"/>
<path fill="#81ff0a" d="M342.8 314.3L347.2 315.9L347.2 321.2L342.8 319.6Z"/>
<path fill="#e6f712" d="M342.8 332.6L347.2 334.2L347.2 339.4L342.8 337.8Z"/>
<path fill="#ffc514" d="M342.8 346.2L347.2 347.8L347.2 353.1L342.8 351.4Z"/>
<path fill="#ffac12" d="M342.8 350.7L347.2 352.4L347.2 357.6L342.8 356.0Z"/>
<path fill="#ff9610" d="M342.8 355.3L347.2 356.9L347.2 361.9L342.8 360.3Z"/>
<path fill="#ff830e" d="M342.8 359.6L347.2 361.2L347.2 366.2L342.8 364.5Z"/>
<path fill="#ff9910" d="M342.8 389.6L347.2 391.2L347.2 396.2L342.8 394.5Z"/>
</g>
<g clip-path="url(#c3)">
<path fill="#10c1c0" d="M346.4 145.5L349.7 144.1L349.7 148.5L346.4 149.8ZM346.4 149.1L349.7 147.8L349.7 152.1L346.4 153.5ZM349.0 144.1L352.2 142.8L352.2 147.2L349.0 148.5ZM349.0 147.8L352.2 146.5L352.2 150.8L349.0 152.1ZM351.5 142.8L354.7 141.5L354.7 145.8L351.5 147.2ZM351.5 146.5L354.7 145.1L354.7 149.5L351.5 150.8ZM354.0 141.5L357.2 140.1L357.2 144.5L354.0 145.8ZM354.0 145.1L357.2 143.8L357.2 148.2L354.0 149.5ZM354.0 148.8L357.2 147.5L357.2 151.8L354.0 153.1ZM356.5 143.8L359.7 142.5L359.7 146.8L356.5 148.2ZM356.5 147.5L359.7 146.1L359.7 150.5L356.5 151.8Z"/>
<path fill="#10c1bf" d="M346.4 152.8L349.7 151.4L349.7 155.8L346.4 157.1ZM346.4 156.4L349.7 155.1L349.7 159.4L346.4 160.8ZM346.4 160.1L349.7 158.7L349.7 163.1L346.4 164.4ZM349.0 151.4L352.2 150.1L352.2 154.5L349.0 155.8ZM349.0 155.1L352.2 153.8L352.2 158.1L349.0 159.4ZM349.0 158.7L352.2 157.4L352.2 161.7L349.0 163.1ZM349.0 162.4L352.2 161.0L352.2 165.4L349.0 166.7ZM351.5 150.1L354.7 148.8L354.7 153.1L351.5 154.5ZM351.5 153.8L354.7 152.4L354.7 156.8L351.5 158.1ZM351.5 157.4L354.7 156.1L354.7 160.4L351.5 161.7ZM351.5 161.0L354.7 159.7L354.7 164.0L351.5 165.4ZM354.0 152.4L357.2 151.1L357.2 155.5L354.0 156.8ZM354.0 156.1L357.2 154.8L357.2 159.1L354.0 160.4ZM354.0 159.7L357.2 158.4L357.2 162.7L354.0 164.0ZM356.5 151.1L359.7 149.8L359.7 154.1L356.5 155.5ZM356.5 154.8L359.7 153.4L359.7 157.8L356.5 159.1ZM356.5 158.4L359.7 157.1L359.7 161.4L356.5 162.7ZM356.5 162.0L359.7 160.7L359.7 165.0L356.5 166.3ZM359.0 157.1L362.2 155.7L362.2 160.1L359.0 161.4ZM359.0 160.7L362.2 159.4L362.2 163.7L359.0 165.0Z"/>
<path fill="#10c1be" d="M346.4 163.7L349.7 162.4L349.7 166.7L346.4 168.0ZM346.4 167.3L349.7 166.0L349.7 170.3L346.4 171.7ZM346.4 171.0L349.7 169.6L349.7 174.0L346.4 175.3ZM346.4 174.6L349.7 173.3L349.7 177.5L346.4 178.9ZM349.0 166.0L352.2 164.7L352.2 169.0L349.0 170.3ZM349.0 169.6L352.2 168.3L352.2 172.6L349.0 174.0ZM349.0 173.3L352.2 171.9L352.2 176.2L349.0 177.5ZM351.5 164.7L354.7 163.3L354.7 167.7L351.5 169.0ZM351.5 168.3L354.7 167.0L354.7 171.3L351.5 172.6ZM351.5 171.9L354.7 170.6L354.7 174.9L351.5 176.2ZM354.0 163.3L357.2 162.0L357.2 166.3L354.0 167.7ZM354.0 167.0L357.2 165.6L357.2 170.0L354.0 171.3ZM354.0 170.6L357.2 169.3L357.2 173.5L354.0 174.9ZM354.0 174.2L357.2 172.8L357.2 177.1L354.0 178.5ZM356.5 165.6L359.7 164.3L359.7 168.6L356.5 170.0ZM356.5 169.3L359.7 167.9L359.7 172.2L356.5 173.5ZM356.5 172.8L359.7 171.5L359.7 175.8L356.5 177.1ZM359.0 164.3L362.2 163.0L362.2 167.3L359.0 168.6ZM359.0 167.9L362.2 166.6L362.2 170.9L359.0 172.2ZM359.0 171.5L362.2 170.2L362.2 174.5L359.0 175.8ZM359.0 175.1L362.2 173.8L362.2 178.0L359.0 179.4ZM361.5 166.6L364.7 165.3L364.7 169.6L361.5 170.9ZM361.5 170.2L364.7 168.9L364.7 173.1L361.5 174.5ZM361.5 173.8L364.7 172.4L364.7 176.7L361.5 178.0Z"/>
<path fill="#10c1bd" d="M346.4 178.2L349.7 176.8L349.7 181.1L346.4 182.4ZM346.4 181.7L349.7 180.4L349.7 184.7L346.4 186.0ZM346.4 185.3L349.7 184.0L349.7 188.3L346.4 189.6ZM346.4 188.9L349.7 187.6L349.7 191.8L346.4 193.2ZM346.4 192.5L349.7 191.1L349.7 195.4L346.4 196.7ZM349.0 176.8L352.2 175.5L352.2 179.8L349.0 181.1ZM349.0 180.4L352.2 179.1L352.2 183.4L349.0 184.7ZM349.0 184.0L352.2 182.7L352.2 186.9L349.0 188.3ZM349.0 187.6L352.2 186.2L352.2 190.5L349.0 191.8ZM349.0 191.1L352.2 189.8L352.2 194.0L349.0 195.4ZM349.0 194.7L352.2 193.3L352.2 197.6L349.0 198.9ZM351.5 175.5L354.7 174.2L354.7 178.5L351.5 179.8ZM351.5 179.1L354.7 177.8L354.7 182.0L351.5 183.4ZM351.5 182.7L354.7 181.3L354.7 185.6L351.5 186.9ZM351.5 186.2L354.7 184.9L354.7 189.2L351.5 190.5ZM351.5 189.8L354.7 188.5L354.7 192.7L351.5 194.0ZM351.5 193.3L354.7 192.0L354.7 196.3L351.5 197.6ZM354.0 177.8L357.2 176.4L357.2 180.7L354.0 182.0ZM354.0 181.3L357.2 180.0L357.2 184.3L354.0 185.6ZM354.0 184.9L357.2 183.6L357.2 187.8L354.0 189.2ZM354.0 188.5L357.2 187.1L357.2 191.4L354.0 192.7ZM354.0 192.0L357.2 190.7L357.2 194.9L354.0 196.3ZM356.5 176.4L359.7 175.1L359.7 179.4L356.5 180.7ZM356.5 180.0L359.7 178.7L359.7 183.0L356.5 184.3ZM356.5 183.6L359.7 182.3L359.7 186.5L356.5 187.8ZM356.5 187.1L359.7 185.8L359.7 190.1L356.5 191.4ZM356.5 190.7L359.7 189.4L359.7 193.6L356.5 194.9ZM356.5 194.2L359.7 192.9L359.7 197.2L356.5 198.5ZM359.0 178.7L362.2 177.3L362.2 181.6L359.0 183.0ZM359.0 182.3L362.2 180.9L362.2 185.2L359.0 186.5ZM359.0 185.8L362.2 184.5L362.2 188.7L359.0 190.1ZM359.0 189.4L362.2 188.0L362.2 192.3L359.0 193.6ZM359.0 192.9L362.2 191.6L362.2 195.8L359.0 197.2ZM361.5 177.3L364.7 176.0L364.7 180.3L361.5 181.6ZM361.5 180.9L364.7 179.6L364.7 183.8L361.5 185.2ZM361.5 184.5L364.7 183.1L364.7 187.4L361.5 188.7ZM361.5 188.0L364.7 186.7L364.7 190.9L361.5 192.3ZM361.5 191.6L364.7 190.2L364.7 194.5L361.5 195.8ZM364.0 179.6L367.2 178.3L367.2 182.5L364.0 183.8ZM364.0 183.1L367.2 181.8L367.2 186.1L364.0 187.4ZM364.0 186.7L367.2 185.4L367.2 189.6L364.0 190.9ZM364.0 190.2L367.2 188.9L367.2 193.2L364.0 194.5ZM364.0 193.8L367.2 192.5L367.2 196.7L364.0 198.0ZM366.5 188.9L369.7 187.6L369.7 191.8L366.5 193.2ZM366.5 192.5L369.7 191.1L369.7 195.3L366.5 196.7ZM369.0 191.1L372.2 189.8L372.2 194.0L369.0 195.3ZM369.0 194.6L372.2 193.3L372.2 197.5L369.0 198.8Z"/>
<path fill="#10c2be" d="M346.4 196.0L349.7 194.7L349.7 198.9L346.4 200.3ZM354.0 195.6L357.2 194.2L357.2 198.5L354.0 199.8ZM359.0 196.5L362.2 195.1L362.2 199.3L359.0 200.7ZM361.5 195.1L364.7 193.8L364.7 198.0L361.5 199.3ZM366.5 196.0L369.7 194.6L369.7 198.8L366.5 200.2Z"/>
<path fill="#10c4bd" d="M346.4 199.6L349.7 198.2L349.7 202.5L346.4 203.8Z"/>
<path fill="#10c7bb" d="M346.4 203.1L349.7 201.8L349.7 206.0L346.4 207.3Z"/>
<path fill="#0fc9b8" d="M346.4 206.6L349.7 205.3L349.7 209.5L346.4 210.8Z"/>
<path fill="#0fccb6" d="M346.4 210.1L349.7 208.8L349.7 213.0L346.4 214.3ZM351.5 211.0L354.7 209.6L354.7 213.8L351.5 215.2Z"/>
<path fill="#0fcfb0" d="M346.4 213.6L349.7 212.3L349.7 216.5L346.4 217.8Z"/>
<path fill="#0dd1a6" d="M346.4 217.1L349.7 215.8L349.7 220.1L346.4 221.4Z"/>
<path fill="#0cd49b" d="M346.4 220.7L349.7 219.4L349.7 223.7L346.4 225.0Z"/>
<path fill="#0bd790" d="M346.4 224.3L349.7 223.0L349.7 227.3L346.4 228.6Z"/>
<path fill="#0ada85" d="M346.4 227.9L349.7 226.6L349.7 230.9L346.4 232.2Z"/>
<path fill="#09dd77" d="M346.4 231.5L349.7 230.2L349.7 234.5L346.4 235.8Z"/>
<path fill="#09e168" d="M346.4 235.1L349.7 233.8L349.7 238.0L346.4 239.3Z"/>
<path fill="#09e559" d="M346.4 238.6L349.7 237.3L349.7 241.6L346.4 242.9ZM364.0 240.0L367.2 238.6L367.2 242.9L364.0 244.2Z"/>
<path fill="#09e84d" d="M346.4 242.2L349.7 240.9L349.7 245.1L346.4 246.4Z"/>
<path fill="#0aec42" d="M346.4 245.7L349.7 244.4L349.7 248.6L346.4 250.0Z"/>
<path fill="#0aef37" d="M346.4 249.3L349.7 247.9L349.7 252.2L346.4 253.5Z"/>
<path fill="#0af32b" d="M346.4 252.8L349.7 251.5L349.7 255.7L346.4 257.0ZM359.0 253.2L362.2 251.9L362.2 256.1L359.0 257.4Z"/>
<path fill="#0df525" d="M346.4 256.3L349.7 255.0L349.7 259.2L346.4 260.6ZM354.0 255.9L357.2 254.5L357.2 258.8L354.0 260.1ZM366.5 256.3L369.7 254.9L369.7 259.2L366.5 260.5ZM386.6 256.2L389.8 254.8L389.8 259.0L386.6 260.3Z"/>
<path fill="#12f923" d="M346.4 259.9L349.7 258.5L349.7 262.8L346.4 264.1Z"/>
<path fill="#18fb20" d="M346.4 263.4L349.7 262.1L349.7 266.3L346.4 267.6ZM354.0 262.9L357.2 261.6L357.2 265.8L354.0 267.2Z"/>
<path fill="#1dfc1d" d="M346.4 266.9L349.7 265.6L349.7 269.8L346.4 271.1ZM354.0 266.5L357.2 265.1L357.2 269.4L354.0 270.7ZM391.6 263.9L394.8 262.6L394.8 266.7L391.6 268.1Z"/>
<path fill="#22fc1a" d="M346.4 270.4L349.7 269.1L349.7 273.3L346.4 274.7ZM379.1 267.1L382.3 265.7L382.3 269.9L379.1 271.2ZM386.6 266.5L389.8 265.2L389.8 269.4L386.6 270.7ZM394.1 266.0L397.4 264.7L397.4 268.9L394.1 270.2Z"/>
<path fill="#26fd17" d="M346.4 274.0L349.7 272.6L349.7 276.8L346.4 278.1ZM356.5 272.1L359.7 270.8L359.7 275.0L356.5 276.3ZM374.1 269.7L377.3 268.4L377.3 272.6L374.1 273.9ZM381.6 269.2L384.8 267.9L384.8 272.0L381.6 273.4ZM389.1 268.7L392.3 267.4L392.3 271.5L389.1 272.8Z"/>
<path fill="#2afd15" d="M346.4 277.4L349.7 276.1L349.7 280.3L346.4 281.6ZM356.5 275.6L359.7 274.3L359.7 278.4L356.5 279.7ZM366.5 273.7L369.7 272.4L369.7 276.6L366.5 277.9ZM374.1 273.2L377.3 271.9L377.3 276.0L374.1 277.4ZM391.6 270.8L394.8 269.5L394.8 273.7L391.6 275.0Z"/>
<path fill="#2dfe13" d="M346.4 280.9L349.7 279.6L349.7 283.7L346.4 285.1ZM356.5 279.0L359.7 277.7L359.7 281.9L356.5 283.2ZM376.6 275.3L379.8 274.0L379.8 278.2L376.6 279.5ZM394.1 273.0L397.4 271.6L397.4 275.8L394.1 277.1Z"/>
<path fill="#30fe11" d="M346.4 284.4L349.7 283.0L349.7 287.2L346.4 288.5ZM349.0 283.0L352.2 281.7L352.2 285.9L349.0 287.2ZM359.0 281.2L362.2 279.9L362.2 284.0L359.0 285.3ZM371.5 278.0L374.8 276.7L374.8 280.8L371.5 282.2ZM379.1 277.5L382.3 276.1L382.3 280.3L379.1 281.6ZM389.1 275.6L392.3 274.3L392.3 278.5L389.1 279.8Z"/>
<path fill="#34fe0f" d="M346.4 287.8L349.7 286.5L349.7 290.7L346.4 292.0ZM359.0 284.6L362.2 283.3L362.2 287.5L359.0 288.8ZM371.5 281.5L374.8 280.1L374.8 284.3L371.5 285.6ZM381.6 279.6L384.8 278.3L384.8 282.4L381.6 283.8Z"/>
<path fill="#37ff0d" d="M346.4 291.3L349.7 290.0L349.7 294.1L346.4 295.5ZM361.5 286.8L364.7 285.5L364.7 289.6L361.5 290.9ZM384.1 281.7L387.3 280.4L387.3 284.7L384.1 286.0ZM394.1 280.0L397.4 278.6L397.4 282.9L394.1 284.2Z"/>
<path fill="#3aff0b" d="M346.4 294.8L349.7 293.4L349.7 297.6L346.4 298.9ZM349.0 293.4L352.2 292.1L352.2 296.3L349.0 297.6ZM351.5 292.1L354.7 290.8L354.7 294.9L351.5 296.3ZM364.0 288.9L367.2 287.6L367.2 291.8L364.0 293.1ZM366.5 287.6L369.7 286.3L369.7 290.4L366.5 291.8ZM376.6 285.7L379.8 284.4L379.8 288.7L376.6 290.0ZM389.1 282.6L392.3 281.3L392.3 285.6L389.1 286.9Z"/>
<path fill="#3fff0a" d="M346.4 298.2L349.7 296.9L349.7 301.1L346.4 302.4ZM364.0 292.4L367.2 291.1L367.2 295.3L364.0 296.6ZM379.1 288.0L382.3 286.6L382.3 290.9L379.1 292.2Z"/>
<path fill="#44ff0a" d="M346.4 301.7L349.7 300.4L349.7 304.6L346.4 305.9ZM366.5 294.6L369.7 293.3L369.7 297.5L366.5 298.9ZM381.6 290.2L384.8 288.8L384.8 293.1L381.6 294.4ZM394.1 287.1L397.4 285.7L397.4 290.0L394.1 291.3Z"/>
<path fill="#49ff0a" d="M346.4 305.2L349.7 303.9L349.7 308.2L346.4 309.5ZM371.5 295.5L374.8 294.2L374.8 298.4L371.5 299.8Z"/>
<path fill="#4eff0a" d="M346.4 308.8L349.7 307.5L349.7 311.7L346.4 313.1ZM374.1 297.7L377.3 296.4L377.3 300.6L374.1 302.0ZM389.1 293.3L392.3 292.0L392.3 296.1L389.1 297.4Z"/>
<path fill="#55ff0a" d="M346.4 312.4L349.7 311.0L349.7 315.3L346.4 316.6ZM371.5 302.6L374.8 301.3L374.8 305.4L371.5 306.7ZM389.1 296.7L392.3 295.4L392.3 299.5L389.1 300.9Z"/>
<path fill="#60ff0a" d="M346.4 315.9L349.7 314.6L349.7 318.7L346.4 320.0ZM376.6 306.8L379.8 305.5L379.8 309.6L376.6 311.0ZM394.1 301.0L397.4 299.6L397.4 303.8L394.1 305.1Z"/>
<path fill="#6bff0a" d="M346.4 319.3L349.7 318.0L349.7 322.2L346.4 323.5ZM359.0 319.6L362.2 318.2L362.2 322.4L359.0 323.7ZM361.5 318.2L364.7 316.9L364.7 321.1L361.5 322.4ZM364.0 316.9L367.2 315.6L367.2 319.7L364.0 321.1ZM366.5 315.6L369.7 314.3L369.7 318.4L366.5 319.7ZM369.0 314.3L372.2 312.9L372.2 317.1L369.0 318.4ZM371.5 312.9L374.8 311.6L374.8 315.7L371.5 317.1ZM374.1 311.6L377.3 310.3L377.3 314.4L374.1 315.7ZM376.6 310.3L379.8 308.9L379.8 313.1L376.6 314.4ZM379.1 308.9L382.3 307.6L382.3 311.7L379.1 313.1Z"/>
<path fill="#77ff0a" d="M346.4 322.8L349.7 321.5L349.7 325.6L346.4 326.9Z"/>
<path fill="#87ff0a" d="M346.4 326.2L349.7 324.9L349.7 329.0L346.4 330.4Z"/>
<path fill="#98ff0a" d="M346.4 329.7L349.7 328.3L349.7 332.4L346.4 333.8Z"/>
<path fill="#a8fe0b" d="M346.4 333.1L349.7 331.7L349.7 335.8L346.4 337.2Z"/>
<path fill="#b7fc0d" d="M346.4 336.5L349.7 335.1L349.7 339.2L346.4 340.6Z"/>
<path fill="#c5fb0e" d="M346.4 339.9L349.7 338.5L349.7 342.7L346.4 344.0Z"/>
<path fill="#10c4be" d="M349.0 198.2L352.2 196.9L352.2 201.2L349.0 202.5ZM354.0 199.1L357.2 197.8L357.2 202.0L354.0 203.3ZM366.5 199.5L369.7 198.1L369.7 202.3L366.5 203.7Z"/>
<path fill="#10c7bc" d="M349.0 201.8L352.2 200.5L352.2 204.7L349.0 206.0ZM354.0 202.6L357.2 201.3L357.2 205.5L354.0 206.8Z"/>
<path fill="#0fc9b9" d="M349.0 205.3L352.2 204.0L352.2 208.2L349.0 209.5Z"/>
<path fill="#0fcbb7" d="M349.0 208.8L352.2 207.5L352.2 211.7L349.0 213.0Z"/>
<path fill="#0fcdb5" d="M349.0 212.3L352.2 211.0L352.2 215.2L349.0 216.5Z"/>
<path fill="#0ed0aa" d="M349.0 215.8L352.2 214.5L352.2 218.8L349.0 220.1Z"/>
<path fill="#0cd3a0" d="M349.0 219.4L352.2 218.1L352.2 222.4L349.0 223.7Z"/>
<path fill="#0cd695" d="M349.0 223.0L352.2 221.7L352.2 226.0L349.0 227.3Z"/>
<path fill="#0ad88a" d="M349.0 226.6L352.2 225.3L352.2 229.6L349.0 230.9Z"/>
<path fill="#09db7e" d="M349.0 230.2L352.2 228.9L352.2 233.1L349.0 234.5Z"/>
<path fill="#09df6f" d="M349.0 233.8L352.2 232.4L352.2 236.7L349.0 238.0Z"/>
<path fill="#09e45e" d="M349.0 237.3L352.2 236.0L352.2 240.2L349.0 241.6Z"/>
<path fill="#09e752" d="M349.0 240.9L352.2 239.5L352.2 243.8L349.0 245.1Z"/>
<path fill="#0aeb47" d="M349.0 244.4L352.2 243.1L352.2 247.3L349.0 248.6Z"/>
<path fill="#0aee3c" d="M349.0 247.9L352.2 246.6L352.2 250.8L349.0 252.2Z"/>
<path fill="#0af12f" d="M349.0 251.5L352.2 250.1L352.2 254.4L349.0 255.7Z"/>
<path fill="#0cf526" d="M349.0 255.0L352.2 253.7L352.2 257.9L349.0 259.2ZM361.5 255.4L364.7 254.1L364.7 258.3L361.5 259.6ZM374.1 255.8L377.3 254.5L377.3 258.7L374.1 260.0ZM394.1 255.6L397.4 254.3L397.4 258.5L394.1 259.8Z"/>
<path fill="#11f824" d="M349.0 258.5L352.2 257.2L352.2 261.4L349.0 262.8ZM369.0 258.5L372.2 257.1L372.2 261.4L369.0 262.7ZM389.1 258.3L392.3 257.0L392.3 261.1L389.1 262.5Z"/>
<path fill="#16fa21" d="M349.0 262.1L352.2 260.7L352.2 265.0L349.0 266.3ZM356.5 261.6L359.7 260.3L359.7 264.5L356.5 265.8Z"/>
<path fill="#1bfc1e" d="M349.0 265.6L352.2 264.3L352.2 268.5L349.0 269.8ZM356.5 265.1L359.7 263.8L359.7 268.0L356.5 269.4ZM364.0 264.7L367.2 263.3L367.2 267.5L364.0 268.8ZM371.5 264.1L374.8 262.8L374.8 267.0L371.5 268.3ZM379.1 263.6L382.3 262.3L382.3 266.4L379.1 267.8ZM386.6 263.1L389.8 261.8L389.8 265.9L386.6 267.2Z"/>
<path fill="#20fc1b" d="M349.0 269.1L352.2 267.8L352.2 272.0L349.0 273.3Z"/>
<path fill="#25fd18" d="M349.0 272.6L352.2 271.3L352.2 275.5L349.0 276.8ZM359.0 270.8L362.2 269.5L362.2 273.6L359.0 275.0ZM366.5 270.3L369.7 268.9L369.7 273.1L366.5 274.4Z"/>
<path fill="#29fd15" d="M349.0 276.1L352.2 274.8L352.2 278.9L349.0 280.3ZM359.0 274.3L362.2 272.9L362.2 277.1L359.0 278.4ZM376.6 271.9L379.8 270.5L379.8 274.7L376.6 276.0ZM384.1 271.3L387.3 270.0L387.3 274.2L384.1 275.5Z"/>
<path fill="#2cfd13" d="M349.0 279.6L352.2 278.2L352.2 282.4L349.0 283.7ZM369.0 275.9L372.2 274.5L372.2 278.7L369.0 280.0Z"/>
<path fill="#33fe0f" d="M349.0 286.5L352.2 285.2L352.2 289.3L349.0 290.7ZM361.5 283.3L364.7 282.0L364.7 286.2L361.5 287.5ZM391.6 277.8L394.8 276.4L394.8 280.7L391.6 282.0Z"/>
<path fill="#37fe0d" d="M349.0 290.0L352.2 288.6L352.2 292.8L349.0 294.1ZM374.1 283.6L377.3 282.3L377.3 286.4L374.1 287.8Z"/>
<path fill="#3eff0a" d="M349.0 296.9L352.2 295.6L352.2 299.7L349.0 301.1ZM351.5 295.6L354.7 294.2L354.7 298.4L351.5 299.7ZM366.5 291.1L369.7 289.7L369.7 294.0L366.5 295.3ZM391.6 284.9L394.8 283.5L394.8 287.8L391.6 289.1Z"/>
<path fill="#43ff0a" d="M349.0 300.4L352.2 299.0L352.2 303.3L349.0 304.6ZM351.5 299.0L354.7 297.7L354.7 302.0L351.5 303.3ZM369.0 293.3L372.2 291.9L372.2 296.2L369.0 297.5ZM384.1 288.8L387.3 287.5L387.3 291.8L384.1 293.1Z"/>
<path fill="#48ff0a" d="M349.0 303.9L352.2 302.6L352.2 306.8L349.0 308.2ZM351.5 302.6L354.7 301.3L354.7 305.5L351.5 306.8ZM354.0 301.3L357.2 299.9L357.2 304.2L354.0 305.5ZM374.1 294.2L377.3 292.8L377.3 297.1L374.1 298.4ZM386.6 291.1L389.8 289.7L389.8 294.0L386.6 295.3Z"/>
<path fill="#4dff0a" d="M349.0 307.5L352.2 306.1L352.2 310.4L349.0 311.7ZM351.5 306.1L354.7 304.8L354.7 309.1L351.5 310.4ZM354.0 304.8L357.2 303.5L357.2 307.7L354.0 309.1ZM356.5 303.5L359.7 302.2L359.7 306.4L356.5 307.7ZM376.6 296.4L379.8 295.1L379.8 299.3L376.6 300.6Z"/>
<path fill="#54ff0a" d="M349.0 311.0L352.2 309.7L352.2 313.9L349.0 315.3ZM351.5 309.7L354.7 308.4L354.7 312.6L351.5 313.9ZM374.1 301.3L377.3 299.9L377.3 304.1L374.1 305.4Z"/>
<path fill="#5eff0a" d="M349.0 314.6L352.2 313.2L352.2 317.4L349.0 318.7ZM384.1 302.8L387.3 301.5L387.3 305.6L384.1 307.0Z"/>
<path fill="#68ff0a" d="M349.0 318.0L352.2 316.7L352.2 320.8L349.0 322.2ZM384.1 306.3L387.3 304.9L387.3 309.1L384.1 310.4Z"/>
<path fill="#72ff0a" d="M349.0 321.5L352.2 320.1L352.2 324.3L349.0 325.6Z"/>
<path fill="#82ff0a" d="M349.0 324.9L352.2 323.6L352.2 327.7L349.0 329.0Z"/>
<path fill="#92ff0a" d="M349.0 328.3L352.2 327.0L352.2 331.1L349.0 332.4Z"/>
<path fill="#a1ff0a" d="M349.0 331.7L352.2 330.4L352.2 334.5L349.0 335.8ZM356.5 334.6L359.7 333.2L359.7 337.3L356.5 338.7Z"/>
<path fill="#affd0c" d="M349.0 335.1L352.2 333.8L352.2 337.9L349.0 339.2Z"/>
<path fill="#bcfc0d" d="M349.0 338.5L352.2 337.2L352.2 341.3L349.0 342.7Z"/>
<path fill="#10c3bf" d="M351.5 196.9L354.7 195.6L354.7 199.8L351.5 201.2ZM356.5 197.8L359.7 196.5L359.7 200.7L356.5 202.0ZM364.0 197.3L367.2 196.0L367.2 200.2L364.0 201.5ZM369.0 198.1L372.2 196.8L372.2 201.0L369.0 202.3ZM371.5 196.8L374.8 195.5L374.8 199.7L371.5 201.0Z"/>
<path fill="#10c6bc" d="M351.5 200.5L354.7 199.1L354.7 203.3L351.5 204.7Z"/>
<path fill="#0fc8ba" d="M351.5 204.0L354.7 202.6L354.7 206.8L351.5 208.2Z"/>
<path fill="#0fcab9" d="M351.5 207.5L354.7 206.1L354.7 210.3L351.5 211.7ZM359.0 207.0L362.2 205.6L362.2 209.8L359.0 211.2ZM364.0 207.8L367.2 206.5L367.2 210.8L364.0 212.1Z"/>
<path fill="#0ecfaf" d="M351.5 214.5L354.7 213.1L354.7 217.4L351.5 218.8Z"/>
<path fill="#0dd2a4" d="M351.5 218.1L354.7 216.7L354.7 221.0L351.5 222.4Z"/>
<path fill="#0cd499" d="M351.5 221.7L354.7 220.3L354.7 224.6L351.5 226.0Z"/>
<path fill="#0bd78e" d="M351.5 225.3L354.7 223.9L354.7 228.2L351.5 229.6Z"/>
<path fill="#09db83" d="M351.5 228.9L354.7 227.5L354.7 231.8L351.5 233.1Z"/>
<path fill="#09de75" d="M351.5 232.4L354.7 231.1L354.7 235.4L351.5 236.7Z"/>
<path fill="#09e265" d="M351.5 236.0L354.7 234.7L354.7 238.9L351.5 240.2Z"/>
<path fill="#09e657" d="M351.5 239.5L354.7 238.2L354.7 242.5L351.5 243.8Z"/>
<path fill="#09e94c" d="M351.5 243.1L354.7 241.8L354.7 246.0L351.5 247.3Z"/>
<path fill="#0aec41" d="M351.5 246.6L354.7 245.3L354.7 249.5L351.5 250.8Z"/>
<path fill="#0af035" d="M351.5 250.1L354.7 248.8L354.7 253.0L351.5 254.4Z"/>
<path fill="#0af428" d="M351.5 253.7L354.7 252.3L354.7 256.6L351.5 257.9ZM364.0 254.1L367.2 252.7L367.2 257.0L364.0 258.3Z"/>
<path fill="#0ff624" d="M351.5 257.2L354.7 255.9L354.7 260.1L351.5 261.4ZM371.5 257.1L374.8 255.8L374.8 260.0L371.5 261.4ZM391.6 257.0L394.8 255.6L394.8 259.8L391.6 261.1Z"/>
<path fill="#14f922" d="M351.5 260.7L354.7 259.4L354.7 263.6L351.5 265.0ZM359.0 260.3L362.2 258.9L362.2 263.2L359.0 264.5Z"/>
<path fill="#19fc1f" d="M351.5 264.3L354.7 262.9L354.7 267.2L351.5 268.5ZM359.0 263.8L362.2 262.5L362.2 266.7L359.0 268.0ZM366.5 263.3L369.7 262.0L369.7 266.2L366.5 267.5Z"/>
<path fill="#1ffc1c" d="M351.5 267.8L354.7 266.5L354.7 270.7L351.5 272.0Z"/>
<path fill="#24fd19" d="M351.5 271.3L354.7 270.0L354.7 274.1L351.5 275.5ZM376.6 268.4L379.8 267.1L379.8 271.2L376.6 272.6Z"/>
<path fill="#28fd16" d="M351.5 274.8L354.7 273.4L354.7 277.6L351.5 278.9ZM361.5 272.9L364.7 271.6L364.7 275.8L361.5 277.1ZM369.0 272.4L372.2 271.1L372.2 275.2L369.0 276.6ZM379.1 270.5L382.3 269.2L382.3 273.4L379.1 274.7ZM386.6 270.0L389.8 268.7L389.8 272.8L386.6 274.2ZM394.1 269.5L397.4 268.2L397.4 272.3L394.1 273.7Z"/>
<path fill="#2cfd14" d="M351.5 278.2L354.7 276.9L354.7 281.1L351.5 282.4ZM361.5 276.4L364.7 275.1L364.7 279.2L361.5 280.6ZM379.1 274.0L382.3 272.7L382.3 276.8L379.1 278.2Z"/>
<path fill="#2ffe12" d="M351.5 281.7L354.7 280.4L354.7 284.5L351.5 285.9ZM361.5 279.9L364.7 278.5L364.7 282.7L361.5 284.0ZM364.0 278.5L367.2 277.2L367.2 281.4L364.0 282.7ZM381.6 276.1L384.8 274.8L384.8 279.0L381.6 280.3ZM391.6 274.3L394.8 273.0L394.8 277.1L391.6 278.5Z"/>
<path fill="#33fe10" d="M351.5 285.2L354.7 283.8L354.7 288.0L351.5 289.3ZM374.1 280.1L377.3 278.8L377.3 283.0L374.1 284.3ZM384.1 278.3L387.3 276.9L387.3 281.1L384.1 282.4Z"/>
<path fill="#36fe0e" d="M351.5 288.6L354.7 287.3L354.7 291.5L351.5 292.8ZM354.0 287.3L357.2 286.0L357.2 290.1L354.0 291.5ZM366.5 284.1L369.7 282.8L369.7 287.0L366.5 288.3ZM376.6 282.3L379.8 280.9L379.8 285.1L376.6 286.4ZM386.6 280.4L389.8 279.1L389.8 283.3L386.6 284.7Z"/>
<path fill="#5dff0a" d="M351.5 313.2L354.7 311.9L354.7 316.1L351.5 317.4ZM386.6 301.5L389.8 300.2L389.8 304.3L386.6 305.6Z"/>
<path fill="#65ff0a" d="M351.5 316.7L354.7 315.4L354.7 319.5L351.5 320.8Z"/>
<path fill="#6eff0a" d="M351.5 320.1L354.7 318.8L354.7 322.9L351.5 324.3Z"/>
<path fill="#7cff0a" d="M351.5 323.6L354.7 322.2L354.7 326.4L351.5 327.7Z"/>
<path fill="#8bff0a" d="M351.5 327.0L354.7 325.7L354.7 329.8L351.5 331.1ZM361.5 328.5L364.7 327.2L364.7 331.3L361.5 332.6ZM364.0 327.2L367.2 325.8L367.2 329.9L364.0 331.3ZM366.5 325.8L369.7 324.5L369.7 328.6L366.5 329.9ZM369.0 324.5L372.2 323.2L372.2 327.3L369.0 328.6ZM371.5 323.2L374.8 321.8L374.8 325.9L371.5 327.3ZM374.1 321.8L377.3 320.5L377.3 324.6L374.1 325.9ZM376.6 320.5L379.8 319.2L379.8 323.3L376.6 324.6ZM379.1 319.2L382.3 317.9L382.3 322.0L379.1 323.3ZM381.6 317.9L384.8 316.5L384.8 320.6L381.6 322.0ZM384.1 316.5L387.3 315.2L387.3 319.3L384.1 320.6ZM386.6 315.2L389.8 313.9L389.8 318.0L386.6 319.3ZM389.1 313.9L392.3 312.5L392.3 316.6L389.1 318.0ZM391.6 312.5L394.8 311.2L394.8 315.3L391.6 316.6ZM394.1 311.2L397.4 309.9L397.4 314.0L394.1 315.3Z"/>
<path fill="#99ff0a" d="M351.5 330.4L354.7 329.1L354.7 333.2L351.5 334.5Z"/>
<path fill="#a7fe0b" d="M351.5 333.8L354.7 332.5L354.7 336.6L351.5 337.9Z"/>
<path fill="#b3fd0c" d="M351.5 337.2L354.7 335.9L354.7 340.0L351.5 341.3Z"/>
<path fill="#0fc9ba" d="M354.0 206.1L357.2 204.8L357.2 209.0L354.0 210.3ZM361.5 205.6L364.7 204.3L364.7 208.5L361.5 209.8Z"/>
<path fill="#10cbb7" d="M354.0 209.6L357.2 208.3L357.2 212.5L354.0 213.8Z"/>
<path fill="#0fceb3" d="M354.0 213.1L357.2 211.8L357.2 216.1L354.0 217.4Z"/>
<path fill="#0dd0a9" d="M354.0 216.7L357.2 215.4L357.2 219.7L354.0 221.0Z"/>
<path fill="#0cd49e" d="M354.0 220.3L357.2 219.0L357.2 223.3L354.0 224.6Z"/>
<path fill="#0bd792" d="M354.0 223.9L357.2 222.6L357.2 226.9L354.0 228.2Z"/>
<path fill="#0ad988" d="M354.0 227.5L357.2 226.2L357.2 230.5L354.0 231.8Z"/>
<path fill="#09dc7c" d="M354.0 231.1L357.2 229.8L357.2 234.0L354.0 235.4Z"/>
<path fill="#09e06c" d="M354.0 234.7L357.2 233.3L357.2 237.6L354.0 238.9Z"/>
<path fill="#09e45d" d="M354.0 238.2L357.2 236.9L357.2 241.1L354.0 242.5Z"/>
<path fill="#09e751" d="M354.0 241.8L357.2 240.4L357.2 244.7L354.0 246.0Z"/>
<path fill="#0aeb46" d="M354.0 245.3L357.2 244.0L357.2 248.2L354.0 249.5Z"/>
<path fill="#0aef3a" d="M354.0 248.8L357.2 247.5L357.2 251.7L354.0 253.0ZM371.5 250.1L374.8 248.8L374.8 253.0L371.5 254.3Z"/>
<path fill="#0af22e" d="M354.0 252.3L357.2 251.0L357.2 255.2L354.0 256.6ZM366.5 252.7L369.7 251.4L369.7 255.6L366.5 257.0ZM379.1 253.2L382.3 251.8L382.3 256.0L379.1 257.4Z"/>
<path fill="#12f823" d="M354.0 259.4L357.2 258.1L357.2 262.3L354.0 263.6ZM361.5 258.9L364.7 257.6L364.7 261.8L361.5 263.2ZM381.6 258.8L384.8 257.5L384.8 261.6L381.6 263.0Z"/>
<path fill="#22fc19" d="M354.0 270.0L357.2 268.7L357.2 272.8L354.0 274.1Z"/>
<path fill="#27fd17" d="M354.0 273.4L357.2 272.1L357.2 276.3L354.0 277.6ZM364.0 271.6L367.2 270.3L367.2 274.4L364.0 275.8ZM371.5 271.1L374.8 269.7L374.8 273.9L371.5 275.2Z"/>
<path fill="#2bfd14" d="M354.0 276.9L357.2 275.6L357.2 279.7L354.0 281.1ZM364.0 275.1L367.2 273.7L367.2 277.9L364.0 279.2ZM371.5 274.5L374.8 273.2L374.8 277.4L371.5 278.7ZM381.6 272.7L384.8 271.3L384.8 275.5L381.6 276.8ZM389.1 272.1L392.3 270.8L392.3 275.0L389.1 276.3Z"/>
<path fill="#2efe12" d="M354.0 280.4L357.2 279.0L357.2 283.2L354.0 284.5ZM374.1 276.7L377.3 275.3L377.3 279.5L374.1 280.8ZM384.1 274.8L387.3 273.5L387.3 277.6L384.1 279.0Z"/>
<path fill="#32fe10" d="M354.0 283.8L357.2 282.5L357.2 286.7L354.0 288.0ZM364.0 282.0L367.2 280.7L367.2 284.8L364.0 286.2ZM366.5 280.7L369.7 279.3L369.7 283.5L366.5 284.8ZM376.6 278.8L379.8 277.5L379.8 281.6L376.6 283.0ZM394.1 276.4L397.4 275.1L397.4 279.3L394.1 280.7Z"/>
<path fill="#39ff0c" d="M354.0 290.8L357.2 289.4L357.2 293.6L354.0 294.9ZM356.5 289.4L359.7 288.1L359.7 292.3L356.5 293.6ZM369.0 286.3L372.2 284.9L372.2 289.1L369.0 290.4ZM379.1 284.4L382.3 283.1L382.3 287.3L379.1 288.7Z"/>
<path fill="#3dff0a" d="M354.0 294.2L357.2 292.9L357.2 297.1L354.0 298.4ZM369.0 289.7L372.2 288.4L372.2 292.6L369.0 294.0ZM381.6 286.6L384.8 285.3L384.8 289.5L381.6 290.9Z"/>
<path fill="#42ff0a" d="M354.0 297.7L357.2 296.4L357.2 300.6L354.0 302.0ZM356.5 296.4L359.7 295.0L359.7 299.3L356.5 300.6ZM371.5 291.9L374.8 290.6L374.8 294.9L371.5 296.2Z"/>
<path fill="#53ff0a" d="M354.0 308.4L357.2 307.0L357.2 311.3L354.0 312.6ZM356.5 307.0L359.7 305.7L359.7 310.0L356.5 311.3ZM376.6 299.9L379.8 298.6L379.8 302.8L376.6 304.1ZM379.1 298.6L382.3 297.3L382.3 301.4L379.1 302.8ZM391.6 295.4L394.8 294.1L394.8 298.2L391.6 299.5Z"/>
<path fill="#5bff0a" d="M354.0 311.9L357.2 310.6L357.2 314.7L354.0 316.1ZM371.5 306.0L374.8 304.7L374.8 308.9L371.5 310.2ZM374.1 304.7L377.3 303.4L377.3 307.5L374.1 308.9Z"/>
<path fill="#62ff0a" d="M354.0 315.4L357.2 314.0L357.2 318.2L354.0 319.5ZM391.6 302.3L394.8 301.0L394.8 305.1L391.6 306.4Z"/>
<path fill="#6aff0a" d="M354.0 318.8L357.2 317.5L357.2 321.6L354.0 322.9ZM381.6 307.6L384.8 306.3L384.8 310.4L381.6 311.7Z"/>
<path fill="#76ff0a" d="M354.0 322.2L357.2 320.9L357.2 325.0L354.0 326.4ZM359.0 323.0L362.2 321.7L362.2 325.8L359.0 327.1ZM361.5 321.7L364.7 320.4L364.7 324.5L361.5 325.8ZM364.0 320.4L367.2 319.0L367.2 323.1L364.0 324.5ZM366.5 319.0L369.7 317.7L369.7 321.8L366.5 323.1ZM369.0 317.7L372.2 316.4L372.2 320.5L369.0 321.8ZM371.5 316.4L374.8 315.0L374.8 319.1L371.5 320.5ZM374.1 315.0L377.3 313.7L377.3 317.8L374.1 319.1ZM376.6 313.7L379.8 312.4L379.8 316.5L376.6 317.8ZM379.1 312.4L382.3 311.0L382.3 315.1L379.1 316.5ZM381.6 311.0L384.8 309.7L384.8 313.8L381.6 315.1ZM384.1 309.7L387.3 308.4L387.3 312.5L384.1 313.8Z"/>
<path fill="#84ff0a" d="M354.0 325.7L357.2 324.3L357.2 328.5L354.0 329.8Z"/>
<path fill="#91ff0a" d="M354.0 329.1L357.2 327.8L357.2 331.9L354.0 333.2Z"/>
<path fill="#9eff0a" d="M354.0 332.5L357.2 331.2L357.2 335.3L354.0 336.6Z"/>
<path fill="#aafe0b" d="M354.0 335.9L357.2 334.6L357.2 338.7L354.0 340.0Z"/>
<path fill="#10c0c0" d="M356.5 140.1L359.7 138.8L359.7 143.2L356.5 144.5Z"/>
<path fill="#10c6bd" d="M356.5 201.3L359.7 200.0L359.7 204.2L356.5 205.5Z"/>
<path fill="#0fc8bb" d="M356.5 204.8L359.7 203.5L359.7 207.7L356.5 209.0Z"/>
<path fill="#0fcab8" d="M356.5 208.3L359.7 207.0L359.7 211.2L356.5 212.5Z"/>
<path fill="#0fcdb6" d="M356.5 211.8L359.7 210.5L359.7 214.8L356.5 216.1ZM361.5 212.7L364.7 211.4L364.7 215.7L361.5 217.0Z"/>
<path fill="#0ed0ae" d="M356.5 215.4L359.7 214.1L359.7 218.4L356.5 219.7Z"/>
<path fill="#0dd3a3" d="M356.5 219.0L359.7 217.7L359.7 222.0L356.5 223.3Z"/>
<path fill="#0cd597" d="M356.5 222.6L359.7 221.3L359.7 225.6L356.5 226.9Z"/>
<path fill="#0bd88d" d="M356.5 226.2L359.7 224.9L359.7 229.1L356.5 230.5Z"/>
<path fill="#09db82" d="M356.5 229.8L359.7 228.4L359.7 232.7L356.5 234.0Z"/>
<path fill="#09df73" d="M356.5 233.3L359.7 232.0L359.7 236.2L356.5 237.6Z"/>
<path fill="#09e264" d="M356.5 236.9L359.7 235.5L359.7 239.8L356.5 241.1Z"/>
<path fill="#09e656" d="M356.5 240.4L359.7 239.1L359.7 243.3L356.5 244.7Z"/>
<path fill="#09ea4b" d="M356.5 244.0L359.7 242.6L359.7 246.9L356.5 248.2Z"/>
<path fill="#0aed3f" d="M356.5 247.5L359.7 246.2L359.7 250.4L356.5 251.7Z"/>
<path fill="#0af132" d="M356.5 251.0L359.7 249.7L359.7 253.9L356.5 255.2Z"/>
<path fill="#0bf427" d="M356.5 254.5L359.7 253.2L359.7 257.4L356.5 258.8Z"/>
<path fill="#10f723" d="M356.5 258.1L359.7 256.7L359.7 261.0L356.5 262.3ZM376.6 258.0L379.8 256.7L379.8 260.8L376.6 262.2Z"/>
<path fill="#21fc1a" d="M356.5 268.7L359.7 267.3L359.7 271.5L356.5 272.8ZM364.0 268.1L367.2 266.8L367.2 271.0L364.0 272.3ZM371.5 267.6L374.8 266.3L374.8 270.4L371.5 271.8Z"/>
<path fill="#31fe11" d="M356.5 282.5L359.7 281.2L359.7 285.3L356.5 286.7ZM369.0 279.3L372.2 278.0L372.2 282.2L369.0 283.5Z"/>
<path fill="#35fe0e" d="M356.5 286.0L359.7 284.6L359.7 288.8L356.5 290.1ZM369.0 282.8L372.2 281.5L372.2 285.6L369.0 287.0ZM379.1 280.9L382.3 279.6L382.3 283.8L379.1 285.1ZM389.1 279.1L392.3 277.8L392.3 282.0L389.1 283.3Z"/>
<path fill="#3cff0a" d="M356.5 292.9L359.7 291.6L359.7 295.7L356.5 297.1ZM359.0 291.6L362.2 290.2L362.2 294.4L359.0 295.7ZM371.5 288.4L374.8 287.1L374.8 291.3L371.5 292.6ZM384.1 285.3L387.3 284.0L387.3 288.2L384.1 289.5ZM394.1 283.5L397.4 282.2L397.4 286.4L394.1 287.8Z"/>
<path fill="#47ff0a" d="M356.5 299.9L359.7 298.6L359.7 302.9L356.5 304.2ZM359.0 298.6L362.2 297.3L362.2 301.5L359.0 302.9ZM376.6 292.8L379.8 291.5L379.8 295.8L376.6 297.1ZM389.1 289.7L392.3 288.4L392.3 292.7L389.1 294.0Z"/>
<path fill="#59ff0a" d="M356.5 310.6L359.7 309.3L359.7 313.4L356.5 314.7ZM379.1 302.1L382.3 300.7L382.3 304.9L379.1 306.2ZM394.1 297.5L397.4 296.2L397.4 300.3L394.1 301.7Z"/>
<path fill="#5fff0a" d="M356.5 314.0L359.7 312.7L359.7 316.8L356.5 318.2ZM379.1 305.5L382.3 304.2L382.3 308.3L379.1 309.6ZM381.6 304.2L384.8 302.8L384.8 307.0L381.6 308.3Z"/>
<path fill="#66ff0a" d="M356.5 317.5L359.7 316.1L359.7 320.3L356.5 321.6ZM386.6 304.9L389.8 303.6L389.8 307.8L386.6 309.1Z"/>
<path fill="#71ff0a" d="M356.5 320.9L359.7 319.6L359.7 323.7L356.5 325.0ZM391.6 305.7L394.8 304.4L394.8 308.5L391.6 309.8Z"/>
<path fill="#7dff0a" d="M356.5 324.3L359.7 323.0L359.7 327.1L356.5 328.5Z"/>
<path fill="#89ff0a" d="M356.5 327.8L359.7 326.4L359.7 330.5L356.5 331.9Z"/>
<path fill="#95ff0a" d="M356.5 331.2L359.7 329.8L359.7 333.9L356.5 335.3Z"/>
<path fill="#12a1c0" d="M359.0 138.8L362.2 137.5L362.2 141.8L359.0 143.2Z"/>
<path fill="#11b3c1" d="M359.0 142.5L362.2 141.1L362.2 145.5L359.0 146.8Z"/>
<path fill="#11b9bf" d="M359.0 146.1L362.2 144.8L362.2 149.1L359.0 150.5Z"/>
<path fill="#10bebf" d="M359.0 149.8L362.2 148.4L362.2 152.8L359.0 154.1Z"/>
<path fill="#10c0bf" d="M359.0 153.4L362.2 152.1L362.2 156.4L359.0 157.8Z"/>
<path fill="#10c5be" d="M359.0 200.0L362.2 198.6L362.2 202.8L359.0 204.2ZM364.0 200.8L367.2 199.5L367.2 203.7L364.0 205.0Z"/>
<path fill="#10c8bc" d="M359.0 203.5L362.2 202.1L362.2 206.3L359.0 207.7ZM376.6 204.8L379.8 203.4L379.8 207.7L376.6 209.1Z"/>
<path fill="#10ccb7" d="M359.0 210.5L362.2 209.1L362.2 213.4L359.0 214.8ZM364.0 211.4L367.2 210.1L367.2 214.4L364.0 215.7Z"/>
<path fill="#0fcfb2" d="M359.0 214.1L362.2 212.7L362.2 217.0L359.0 218.4Z"/>
<path fill="#0dd1a8" d="M359.0 217.7L362.2 216.3L362.2 220.7L359.0 222.0Z"/>
<path fill="#0cd49d" d="M359.0 221.3L362.2 220.0L362.2 224.3L359.0 225.6Z"/>
<path fill="#0bd791" d="M359.0 224.9L362.2 223.6L362.2 227.8L359.0 229.1Z"/>
<path fill="#0ada87" d="M359.0 228.4L362.2 227.1L362.2 231.4L359.0 232.7Z"/>
<path fill="#09dd7a" d="M359.0 232.0L362.2 230.7L362.2 234.9L359.0 236.2Z"/>
<path fill="#09e26b" d="M359.0 235.5L362.2 234.2L362.2 238.5L359.0 239.8Z"/>
<path fill="#09e55b" d="M359.0 239.1L362.2 237.8L362.2 242.0L359.0 243.3ZM376.6 240.4L379.8 239.0L379.8 243.3L376.6 244.6Z"/>
<path fill="#09e94f" d="M359.0 242.6L362.2 241.3L362.2 245.5L359.0 246.9Z"/>
<path fill="#0aec44" d="M359.0 246.2L362.2 244.8L362.2 249.1L359.0 250.4Z"/>
<path fill="#0aef38" d="M359.0 249.7L362.2 248.4L362.2 252.6L359.0 253.9Z"/>
<path fill="#0ef625" d="M359.0 256.7L362.2 255.4L362.2 259.6L359.0 261.0ZM379.1 256.7L382.3 255.3L382.3 259.5L379.1 260.8Z"/>
<path fill="#1ffc1b" d="M359.0 267.3L362.2 266.0L362.2 270.2L359.0 271.5ZM366.5 266.8L369.7 265.5L369.7 269.6L366.5 271.0ZM374.1 266.3L377.3 264.9L377.3 269.1L374.1 270.4ZM381.6 265.7L384.8 264.4L384.8 268.6L381.6 269.9ZM389.1 265.2L392.3 263.9L392.3 268.1L389.1 269.4Z"/>
<path fill="#2dfd13" d="M359.0 277.7L362.2 276.4L362.2 280.6L359.0 281.9ZM386.6 273.5L389.8 272.1L389.8 276.3L386.6 277.6Z"/>
<path fill="#38ff0c" d="M359.0 288.1L362.2 286.8L362.2 290.9L359.0 292.3ZM371.5 284.9L374.8 283.6L374.8 287.8L371.5 289.1ZM381.6 283.1L384.8 281.7L384.8 286.0L381.6 287.3ZM391.6 281.3L394.8 280.0L394.8 284.2L391.6 285.6Z"/>
<path fill="#41ff0a" d="M359.0 295.0L362.2 293.7L362.2 298.0L359.0 299.3ZM374.1 290.6L377.3 289.3L377.3 293.5L374.1 294.9ZM386.6 287.5L389.8 286.2L389.8 290.4L386.6 291.8Z"/>
<path fill="#4cff0a" d="M359.0 302.2L362.2 300.8L362.2 305.1L359.0 306.4ZM361.5 300.8L364.7 299.5L364.7 303.7L361.5 305.1ZM379.1 295.1L382.3 293.7L382.3 298.0L379.1 299.3ZM391.6 292.0L394.8 290.6L394.8 294.8L391.6 296.1Z"/>
<path fill="#52ff0a" d="M359.0 305.7L362.2 304.4L362.2 308.6L359.0 310.0ZM394.1 294.1L397.4 292.7L397.4 296.9L394.1 298.2Z"/>
<path fill="#57ff0a" d="M359.0 309.3L362.2 307.9L362.2 312.1L359.0 313.4ZM361.5 307.9L364.7 306.6L364.7 310.7L361.5 312.1ZM364.0 306.6L367.2 305.3L367.2 309.4L364.0 310.7ZM384.1 299.4L387.3 298.1L387.3 302.2L384.1 303.5Z"/>
<path fill="#5cff0a" d="M359.0 312.7L362.2 311.4L362.2 315.5L359.0 316.8ZM361.5 311.4L364.7 310.0L364.7 314.2L361.5 315.5ZM364.0 310.0L367.2 308.7L367.2 312.8L364.0 314.2ZM366.5 308.7L369.7 307.4L369.7 311.5L366.5 312.8ZM369.0 307.4L372.2 306.0L372.2 310.2L369.0 311.5ZM389.1 300.2L392.3 298.8L392.3 303.0L389.1 304.3Z"/>
<path fill="#61ff0a" d="M359.0 316.1L362.2 314.8L362.2 318.9L359.0 320.3ZM361.5 314.8L364.7 313.5L364.7 317.6L361.5 318.9ZM364.0 313.5L367.2 312.1L367.2 316.3L364.0 317.6ZM366.5 312.1L369.7 310.8L369.7 315.0L366.5 316.3ZM369.0 310.8L372.2 309.5L372.2 313.6L369.0 315.0ZM371.5 309.5L374.8 308.2L374.8 312.3L371.5 313.6ZM374.1 308.2L377.3 306.8L377.3 311.0L374.1 312.3Z"/>
<path fill="#81ff0a" d="M359.0 326.4L362.2 325.1L362.2 329.2L359.0 330.5Z"/>
<path fill="#8cff0a" d="M359.0 329.8L362.2 328.5L362.2 332.6L359.0 333.9Z"/>
<path fill="#96ff0a" d="M359.0 333.2L362.2 331.9L362.2 336.0L359.0 337.3ZM361.5 331.9L364.7 330.6L364.7 334.7L361.5 336.0ZM364.0 330.6L367.2 329.2L367.2 333.3L364.0 334.7ZM366.5 329.2L369.7 327.9L369.7 332.0L366.5 333.3ZM369.0 327.9L372.2 326.6L372.2 330.7L369.0 332.0ZM371.5 326.6L374.8 325.2L374.8 329.3L371.5 330.7ZM374.1 325.2L377.3 323.9L377.3 328.0L374.1 329.3ZM376.6 323.9L379.8 322.6L379.8 326.7L376.6 328.0ZM379.1 322.6L382.3 321.3L382.3 325.4L379.1 326.7ZM381.6 321.3L384.8 319.9L384.8 324.0L381.6 325.4ZM384.1 319.9L387.3 318.6L387.3 322.7L384.1 324.0ZM386.6 318.6L389.8 317.3L389.8 321.4L386.6 322.7ZM389.1 317.3L392.3 315.9L392.3 320.0L389.1 321.4ZM391.6 315.9L394.8 314.6L394.8 318.7L391.6 320.0ZM394.1 314.6L397.4 313.3L397.4 317.4L394.1 318.7Z"/>
<path fill="#1166b7" d="M361.5 137.5L364.7 136.2L364.7 140.5L361.5 141.8Z"/>
<path fill="#1370ba" d="M361.5 141.1L364.7 139.8L364.7 144.2L361.5 145.5Z"/>
<path fill="#1281bc" d="M361.5 144.8L364.7 143.5L364.7 147.8L361.5 149.1Z"/>
<path fill="#1295be" d="M361.5 148.4L364.7 147.1L364.7 151.5L361.5 152.8Z"/>
<path fill="#11abc1" d="M361.5 152.1L364.7 150.8L364.7 155.1L361.5 156.4Z"/>
<path fill="#11b5c0" d="M361.5 155.7L364.7 154.4L364.7 158.7L361.5 160.1Z"/>
<path fill="#11bbbf" d="M361.5 159.4L364.7 158.0L364.7 162.3L361.5 163.7Z"/>
<path fill="#10bfbf" d="M361.5 163.0L364.7 161.6L364.7 166.0L361.5 167.3ZM366.5 185.4L369.7 184.0L369.7 188.3L366.5 189.6ZM371.5 193.3L374.8 192.0L374.8 196.2L371.5 197.5Z"/>
<path fill="#10c4bf" d="M361.5 198.6L364.7 197.3L364.7 201.5L361.5 202.8Z"/>
<path fill="#10c7bd" d="M361.5 202.1L364.7 200.8L364.7 205.0L361.5 206.3ZM366.5 203.0L369.7 201.6L369.7 205.9L366.5 207.2Z"/>
<path fill="#0fcbb8" d="M361.5 209.1L364.7 207.8L364.7 212.1L361.5 213.4Z"/>
<path fill="#0ed0ac" d="M361.5 216.3L364.7 215.0L364.7 219.3L361.5 220.7Z"/>
<path fill="#0cd3a2" d="M361.5 220.0L364.7 218.6L364.7 222.9L361.5 224.3Z"/>
<path fill="#0cd696" d="M361.5 223.6L364.7 222.2L364.7 226.5L361.5 227.8Z"/>
<path fill="#0ad98c" d="M361.5 227.1L364.7 225.8L364.7 230.0L361.5 231.4ZM379.1 228.5L382.3 227.1L382.3 231.4L379.1 232.7Z"/>
<path fill="#09dc80" d="M361.5 230.7L364.7 229.3L364.7 233.6L361.5 234.9Z"/>
<path fill="#09e071" d="M361.5 234.2L364.7 232.9L364.7 237.1L361.5 238.5Z"/>
<path fill="#09e461" d="M361.5 237.8L364.7 236.4L364.7 240.7L361.5 242.0Z"/>
<path fill="#09e755" d="M361.5 241.3L364.7 240.0L364.7 244.2L361.5 245.5Z"/>
<path fill="#0aea49" d="M361.5 244.8L364.7 243.5L364.7 247.7L361.5 249.1Z"/>
<path fill="#0aee3d" d="M361.5 248.4L364.7 247.0L364.7 251.2L361.5 252.6Z"/>
<path fill="#0af230" d="M361.5 251.9L364.7 250.5L364.7 254.8L361.5 256.1Z"/>
<path fill="#17fa20" d="M361.5 262.5L364.7 261.1L364.7 265.4L361.5 266.7ZM369.0 262.0L372.2 260.7L372.2 264.8L369.0 266.2ZM376.6 261.5L379.8 260.1L379.8 264.3L376.6 265.6Z"/>
<path fill="#1dfc1c" d="M361.5 266.0L364.7 264.7L364.7 268.8L361.5 270.2ZM369.0 265.5L372.2 264.1L372.2 268.3L369.0 269.6ZM376.6 264.9L379.8 263.6L379.8 267.8L376.6 269.1ZM384.1 264.4L387.3 263.1L387.3 267.2L384.1 268.6Z"/>
<path fill="#23fc19" d="M361.5 269.5L364.7 268.1L364.7 272.3L361.5 273.6Z"/>
<path fill="#3bff0b" d="M361.5 290.2L364.7 288.9L364.7 293.1L361.5 294.4ZM386.6 284.0L389.8 282.6L389.8 286.9L386.6 288.2Z"/>
<path fill="#40ff0a" d="M361.5 293.7L364.7 292.4L364.7 296.6L361.5 298.0ZM376.6 289.3L379.8 288.0L379.8 292.2L376.6 293.5ZM389.1 286.2L392.3 284.9L392.3 289.1L389.1 290.4Z"/>
<path fill="#46ff0a" d="M361.5 297.3L364.7 295.9L364.7 300.2L361.5 301.5Z"/>
<path fill="#51ff0a" d="M361.5 304.4L364.7 303.0L364.7 307.3L361.5 308.6ZM364.0 303.0L367.2 301.7L367.2 306.0L364.0 307.3ZM381.6 297.3L384.8 296.0L384.8 300.1L381.6 301.4Z"/>
<path fill="#80ff0a" d="M361.5 325.1L364.7 323.8L364.7 327.9L361.5 329.2ZM364.0 323.8L367.2 322.4L367.2 326.5L364.0 327.9ZM366.5 322.4L369.7 321.1L369.7 325.2L366.5 326.5ZM369.0 321.1L372.2 319.8L372.2 323.9L369.0 325.2ZM371.5 319.8L374.8 318.4L374.8 322.5L371.5 323.9ZM374.1 318.4L377.3 317.1L377.3 321.2L374.1 322.5ZM376.6 317.1L379.8 315.8L379.8 319.9L376.6 321.2ZM379.1 315.8L382.3 314.4L382.3 318.6L379.1 319.9ZM381.6 314.4L384.8 313.1L384.8 317.2L381.6 318.6ZM384.1 313.1L387.3 311.8L387.3 315.9L384.1 317.2ZM386.6 311.8L389.8 310.5L389.8 314.6L386.6 315.9ZM389.1 310.5L392.3 309.1L392.3 313.2L389.1 314.6ZM391.6 309.1L394.8 307.8L394.8 311.9L391.6 313.2Z"/>
<path fill="#1061b4" d="M364.0 136.2L367.2 134.8L367.2 139.2L364.0 140.5ZM364.0 139.8L367.2 138.5L367.2 142.8L364.0 144.2ZM364.0 143.5L367.2 142.1L367.2 146.5L364.0 147.8ZM366.5 134.8L369.7 133.5L369.7 137.8L366.5 139.2ZM366.5 138.5L369.7 137.1L369.7 141.5L366.5 142.8ZM366.5 142.1L369.7 140.8L369.7 145.2L366.5 146.5ZM366.5 145.8L369.7 144.5L369.7 148.8L366.5 150.1ZM366.5 149.4L369.7 148.1L369.7 152.4L366.5 153.8ZM366.5 153.1L369.7 151.7L369.7 156.1L366.5 157.4ZM366.5 156.7L369.7 155.4L369.7 159.7L366.5 161.0ZM369.0 133.5L372.2 132.2L372.2 136.5L369.0 137.8ZM369.0 137.1L372.2 135.8L372.2 140.2L369.0 141.5ZM369.0 140.8L372.2 139.5L372.2 143.8L369.0 145.2ZM369.0 144.5L372.2 143.1L372.2 147.5L369.0 148.8ZM369.0 148.1L372.2 146.8L372.2 151.1L369.0 152.4ZM369.0 151.7L372.2 150.4L372.2 154.7L369.0 156.1ZM369.0 155.4L372.2 154.0L372.2 158.4L369.0 159.7ZM369.0 159.0L372.2 157.7L372.2 162.0L369.0 163.3ZM369.0 162.6L372.2 161.3L372.2 165.6L369.0 166.9ZM369.0 166.2L372.2 164.9L372.2 169.1L369.0 170.5ZM371.5 132.2L374.8 130.8L374.8 135.2L371.5 136.5ZM371.5 135.8L374.8 134.5L374.8 138.8L371.5 140.2ZM371.5 139.5L374.8 138.1L374.8 142.5L371.5 143.8ZM371.5 143.1L374.8 141.8L374.8 146.1L371.5 147.5ZM371.5 146.8L374.8 145.4L374.8 149.8L371.5 151.1ZM371.5 150.4L374.8 149.1L374.8 153.4L371.5 154.7ZM371.5 154.0L374.8 152.7L374.8 157.0L371.5 158.4ZM371.5 157.7L374.8 156.3L374.8 160.7L371.5 162.0ZM371.5 161.3L374.8 160.0L374.8 164.2L371.5 165.6ZM371.5 164.9L374.8 163.5L374.8 167.8L371.5 169.1ZM371.5 168.4L374.8 167.1L374.8 171.4L371.5 172.7ZM371.5 172.0L374.8 170.7L374.8 175.0L371.5 176.3ZM371.5 175.6L374.8 174.3L374.8 178.5L371.5 179.9ZM371.5 179.2L374.8 177.8L374.8 182.1L371.5 183.4ZM374.1 130.8L377.3 129.5L377.3 133.9L374.1 135.2ZM374.1 134.5L377.3 133.2L377.3 137.5L374.1 138.8ZM374.1 138.1L377.3 136.8L377.3 141.2L374.1 142.5ZM374.1 141.8L377.3 140.5L377.3 144.8L374.1 146.1ZM374.1 145.4L377.3 144.1L377.3 148.4L374.1 149.8ZM374.1 149.1L377.3 147.7L377.3 152.1L374.1 153.4ZM374.1 152.7L377.3 151.4L377.3 155.7L374.1 157.0ZM374.1 156.3L377.3 155.0L377.3 159.3L374.1 160.7ZM374.1 160.0L377.3 158.6L377.3 162.9L374.1 164.2ZM374.1 163.5L377.3 162.2L377.3 166.5L374.1 167.8ZM374.1 167.1L377.3 165.8L377.3 170.1L374.1 171.4ZM374.1 170.7L377.3 169.4L377.3 173.6L374.1 175.0ZM374.1 174.3L377.3 172.9L377.3 177.2L374.1 178.5ZM374.1 177.8L377.3 176.5L377.3 180.7L374.1 182.1ZM374.1 181.4L377.3 180.0L377.3 184.3L374.1 185.6ZM374.1 184.9L377.3 183.6L377.3 187.8L374.1 189.2ZM376.6 129.5L379.8 128.2L379.8 132.5L376.6 133.9ZM376.6 133.2L379.8 131.8L379.8 136.2L376.6 137.5ZM376.6 136.8L379.8 135.5L379.8 139.8L376.6 141.2ZM376.6 140.5L379.8 139.1L379.8 143.5L376.6 144.8ZM376.6 144.1L379.8 142.8L379.8 147.1L376.6 148.4ZM376.6 147.7L379.8 146.4L379.8 150.7L376.6 152.1ZM376.6 151.4L379.8 150.0L379.8 154.4L376.6 155.7ZM376.6 155.0L379.8 153.7L379.8 158.0L376.6 159.3ZM376.6 158.6L379.8 157.3L379.8 161.6L376.6 162.9ZM376.6 162.2L379.8 160.9L379.8 165.2L376.6 166.5ZM376.6 165.8L379.8 164.5L379.8 168.7L376.6 170.1ZM376.6 169.4L379.8 168.0L379.8 172.3L376.6 173.6ZM376.6 172.9L379.8 171.6L379.8 175.9L376.6 177.2ZM376.6 176.5L379.8 175.2L379.8 179.4L376.6 180.7ZM376.6 180.0L379.8 178.7L379.8 183.0L376.6 184.3ZM376.6 183.6L379.8 182.3L379.8 186.5L376.6 187.8ZM376.6 187.1L379.8 185.8L379.8 190.0L376.6 191.4ZM376.6 190.7L379.8 189.3L379.8 193.5L376.6 194.9ZM379.1 128.2L382.3 126.8L382.3 131.2L379.1 132.5ZM379.1 131.8L382.3 130.5L382.3 134.8L379.1 136.2ZM379.1 135.5L382.3 134.1L382.3 138.5L379.1 139.8ZM379.1 139.1L382.3 137.8L382.3 142.2L379.1 143.5ZM379.1 142.8L382.3 141.5L382.3 145.8L379.1 147.1ZM379.1 146.4L382.3 145.1L382.3 149.4L379.1 150.7ZM379.1 150.0L382.3 148.7L382.3 153.0L379.1 154.4ZM379.1 153.7L382.3 152.3L382.3 156.7L379.1 158.0ZM379.1 157.3L382.3 156.0L382.3 160.2L379.1 161.6ZM379.1 160.9L382.3 159.5L382.3 163.8L379.1 165.2ZM379.1 164.5L382.3 163.1L382.3 167.4L379.1 168.7ZM379.1 168.0L382.3 166.7L382.3 171.0L379.1 172.3ZM379.1 171.6L382.3 170.3L382.3 174.5L379.1 175.9ZM379.1 175.2L382.3 173.8L382.3 178.1L379.1 179.4ZM379.1 178.7L382.3 177.4L382.3 181.6L379.1 183.0ZM379.1 182.3L382.3 180.9L382.3 185.2L379.1 186.5ZM379.1 185.8L382.3 184.5L382.3 188.7L379.1 190.0ZM379.1 189.3L382.3 188.0L382.3 192.2L379.1 193.5ZM381.6 126.8L384.8 125.5L384.8 129.9L381.6 131.2ZM381.6 130.5L384.8 129.2L384.8 133.5L381.6 134.8ZM381.6 134.1L384.8 132.8L384.8 137.2L381.6 138.5ZM381.6 137.8L384.8 136.5L384.8 140.8L381.6 142.2ZM381.6 141.5L384.8 140.1L384.8 144.5L381.6 145.8ZM381.6 145.1L384.8 143.8L384.8 148.1L381.6 149.4ZM381.6 148.7L384.8 147.4L384.8 151.7L381.6 153.0ZM381.6 152.3L384.8 151.0L384.8 155.3L381.6 156.7ZM381.6 156.0L384.8 154.6L384.8 158.9L381.6 160.2ZM381.6 159.5L384.8 158.2L384.8 162.5L381.6 163.8ZM381.6 163.1L384.8 161.8L384.8 166.1L381.6 167.4ZM381.6 166.7L384.8 165.4L384.8 169.6L381.6 171.0ZM381.6 170.3L384.8 168.9L384.8 173.2L381.6 174.5ZM381.6 173.8L384.8 172.5L384.8 176.8L381.6 178.1ZM381.6 177.4L384.8 176.1L384.8 180.3L381.6 181.6ZM381.6 180.9L384.8 179.6L384.8 183.9L381.6 185.2ZM381.6 184.5L384.8 183.2L384.8 187.4L381.6 188.7ZM381.6 188.0L384.8 186.7L384.8 190.9L381.6 192.2ZM384.1 125.5L387.3 124.2L387.3 128.5L384.1 129.9ZM384.1 129.2L387.3 127.8L387.3 132.2L384.1 133.5ZM384.1 132.8L387.3 131.5L387.3 135.8L384.1 137.2ZM384.1 136.5L387.3 135.1L387.3 139.5L384.1 140.8ZM384.1 140.1L387.3 138.8L387.3 143.1L384.1 144.5ZM384.1 143.8L387.3 142.4L387.3 146.7L384.1 148.1ZM384.1 147.4L387.3 146.0L387.3 150.4L384.1 151.7ZM384.1 151.0L387.3 149.7L387.3 154.0L384.1 155.3ZM384.1 154.6L387.3 153.3L387.3 157.6L384.1 158.9ZM384.1 158.2L387.3 156.9L387.3 161.2L384.1 162.5ZM384.1 161.8L387.3 160.5L387.3 164.7L384.1 166.1ZM384.1 165.4L387.3 164.0L387.3 168.3L384.1 169.6ZM384.1 168.9L387.3 167.6L387.3 171.9L384.1 173.2ZM384.1 172.5L387.3 171.2L387.3 175.4L384.1 176.8ZM384.1 176.1L387.3 174.7L387.3 179.0L384.1 180.3ZM384.1 179.6L387.3 178.3L387.3 182.5L384.1 183.9ZM384.1 183.2L387.3 181.8L387.3 186.0L384.1 187.4ZM384.1 186.7L387.3 185.3L387.3 189.5L384.1 190.9ZM384.1 190.2L387.3 188.8L387.3 193.0L384.1 194.4ZM386.6 124.2L389.8 122.9L389.8 127.2L386.6 128.5ZM386.6 127.8L389.8 126.5L389.8 130.9L386.6 132.2ZM386.6 131.5L389.8 130.2L389.8 134.5L386.6 135.8ZM386.6 135.1L389.8 133.8L389.8 138.2L386.6 139.5ZM386.6 138.8L389.8 137.5L389.8 141.8L386.6 143.1ZM386.6 142.4L389.8 141.1L389.8 145.4L386.6 146.7ZM386.6 146.0L389.8 144.7L389.8 149.0L386.6 150.4ZM386.6 149.7L389.8 148.3L389.8 152.7L386.6 154.0ZM386.6 153.3L389.8 152.0L389.8 156.3L386.6 157.6ZM386.6 156.9L389.8 155.6L389.8 159.8L386.6 161.2ZM386.6 160.5L389.8 159.1L389.8 163.4L386.6 164.7ZM386.6 164.0L389.8 162.7L389.8 167.0L386.6 168.3ZM386.6 167.6L389.8 166.3L389.8 170.5L386.6 171.9ZM386.6 171.2L389.8 169.8L389.8 174.1L386.6 175.4ZM386.6 174.7L389.8 173.4L389.8 177.6L386.6 179.0ZM386.6 178.3L389.8 176.9L389.8 181.2L386.6 182.5ZM386.6 181.8L389.8 180.5L389.8 184.7L386.6 186.0ZM386.6 185.3L389.8 184.0L389.8 188.2L386.6 189.5ZM386.6 188.8L389.8 187.5L389.8 191.7L386.6 193.0ZM389.1 122.9L392.3 121.5L392.3 125.9L389.1 127.2ZM389.1 126.5L392.3 125.2L392.3 129.5L389.1 130.9ZM389.1 130.2L392.3 128.8L392.3 133.2L389.1 134.5ZM389.1 133.8L392.3 132.5L392.3 136.8L389.1 138.2ZM389.1 137.5L392.3 136.1L392.3 140.5L389.1 141.8ZM389.1 141.1L392.3 139.8L392.3 144.1L389.1 145.4ZM389.1 144.7L392.3 143.4L392.3 147.7L389.1 149.0ZM389.1 148.3L392.3 147.0L392.3 151.3L389.1 152.7ZM389.1 152.0L392.3 150.6L392.3 154.9L389.1 156.3ZM389.1 155.6L392.3 154.2L392.3 158.5L389.1 159.8ZM389.1 159.1L392.3 157.8L392.3 162.1L389.1 163.4ZM389.1 162.7L392.3 161.4L392.3 165.7L389.1 167.0ZM389.1 166.3L392.3 165.0L392.3 169.2L389.1 170.5ZM389.1 169.8L392.3 168.5L392.3 172.8L389.1 174.1ZM389.1 173.4L392.3 172.1L392.3 176.3L389.1 177.6ZM389.1 176.9L392.3 175.6L392.3 179.9L389.1 181.2ZM389.1 180.5L392.3 179.2L392.3 183.4L389.1 184.7ZM389.1 184.0L392.3 182.7L392.3 186.9L389.1 188.2ZM389.1 187.5L392.3 186.2L392.3 190.4L389.1 191.7ZM391.6 121.5L394.8 120.2L394.8 124.5L391.6 125.9ZM391.6 125.2L394.8 123.8L394.8 128.2L391.6 129.5ZM391.6 128.8L394.8 127.5L394.8 131.8L391.6 133.2ZM391.6 132.5L394.8 131.1L394.8 135.5L391.6 136.8ZM391.6 136.1L394.8 134.8L394.8 139.1L391.6 140.5ZM391.6 139.8L394.8 138.4L394.8 142.8L391.6 144.1ZM391.6 143.4L394.8 142.1L394.8 146.4L391.6 147.7ZM391.6 147.0L394.8 145.7L394.8 150.0L391.6 151.3ZM391.6 150.6L394.8 149.3L394.8 153.6L391.6 154.9ZM391.6 154.2L394.8 152.9L394.8 157.2L391.6 158.5ZM391.6 157.8L394.8 156.5L394.8 160.7L391.6 162.1ZM391.6 161.4L394.8 160.0L394.8 164.3L391.6 165.7ZM391.6 165.0L394.8 163.6L394.8 167.9L391.6 169.2ZM391.6 168.5L394.8 167.2L394.8 171.4L391.6 172.8ZM391.6 172.1L394.8 170.7L394.8 175.0L391.6 176.3ZM391.6 175.6L394.8 174.3L394.8 178.5L391.6 179.9ZM391.6 179.2L394.8 177.8L394.8 182.0L391.6 183.4ZM391.6 182.7L394.8 181.3L394.8 185.5L391.6 186.9ZM391.6 186.2L394.8 184.8L394.8 189.0L391.6 190.4ZM391.6 189.7L394.8 188.3L394.8 192.5L391.6 193.9ZM394.1 120.2L397.4 118.9L397.4 123.2L394.1 124.5ZM394.1 123.8L397.4 122.5L397.4 126.9L394.1 128.2ZM394.1 127.5L397.4 126.2L397.4 130.5L394.1 131.8ZM394.1 131.1L397.4 129.8L397.4 134.2L394.1 135.5ZM394.1 134.8L397.4 133.5L397.4 137.8L394.1 139.1ZM394.1 138.4L397.4 137.1L397.4 141.4L394.1 142.8ZM394.1 142.1L397.4 140.7L397.4 145.1L394.1 146.4ZM394.1 145.7L397.4 144.4L397.4 148.7L394.1 150.0ZM394.1 149.3L397.4 148.0L397.4 152.3L394.1 153.6ZM394.1 152.9L397.4 151.6L397.4 155.8L394.1 157.2ZM394.1 156.5L397.4 155.1L397.4 159.4L394.1 160.7ZM394.1 160.0L397.4 158.7L397.4 163.0L394.1 164.3ZM394.1 163.6L397.4 162.3L397.4 166.5L394.1 167.9ZM394.1 167.2L397.4 165.8L397.4 170.1L394.1 171.4ZM394.1 170.7L397.4 169.4L397.4 173.7L394.1 175.0ZM394.1 174.3L397.4 173.0L397.4 177.2L394.1 178.5ZM394.1 177.8L397.4 176.5L397.4 180.7L394.1 182.0ZM394.1 181.3L397.4 180.0L397.4 184.2L394.1 185.5ZM394.1 184.8L397.4 183.5L397.4 187.7L394.1 189.0ZM394.1 188.3L397.4 187.0L397.4 191.2L394.1 192.5Z"/>
<path fill="#1162b6" d="M364.0 147.1L367.2 145.8L367.2 150.1L364.0 151.5ZM374.1 188.5L377.3 187.1L377.3 191.4L374.1 192.7Z"/>
<path fill="#126ab8" d="M364.0 150.8L367.2 149.4L367.2 153.8L364.0 155.1ZM379.1 196.3L382.3 195.0L382.3 199.2L379.1 200.5Z"/>
<path fill="#1377bb" d="M364.0 154.4L367.2 153.1L367.2 157.4L364.0 158.7ZM376.6 194.2L379.8 192.8L379.8 197.0L376.6 198.4Z"/>
<path fill="#1389bd" d="M364.0 158.0L367.2 156.7L367.2 161.0L364.0 162.3Z"/>
<path fill="#129fbf" d="M364.0 161.6L367.2 160.3L367.2 164.6L364.0 166.0Z"/>
<path fill="#11b2c2" d="M364.0 165.3L367.2 163.9L367.2 168.2L364.0 169.6Z"/>
<path fill="#11b8c0" d="M364.0 168.9L367.2 167.5L367.2 171.8L364.0 173.1Z"/>
<path fill="#10bdbf" d="M364.0 172.4L367.2 171.1L367.2 175.4L364.0 176.7Z"/>
<path fill="#10c0be" d="M364.0 176.0L367.2 174.7L367.2 179.0L364.0 180.3Z"/>
<path fill="#10c8bb" d="M364.0 204.3L367.2 203.0L367.2 207.2L364.0 208.5Z"/>
<path fill="#0fcfb1" d="M364.0 215.0L367.2 213.7L367.2 218.0L364.0 219.3Z"/>
<path fill="#0dd2a6" d="M364.0 218.6L367.2 217.3L367.2 221.6L364.0 222.9Z"/>
<path fill="#0dd59c" d="M364.0 222.2L367.2 220.9L367.2 225.1L364.0 226.5Z"/>
<path fill="#0bd890" d="M364.0 225.8L367.2 224.4L367.2 228.7L364.0 230.0Z"/>
<path fill="#0adb85" d="M364.0 229.3L367.2 228.0L367.2 232.3L364.0 233.6Z"/>
<path fill="#09de78" d="M364.0 232.9L367.2 231.6L367.2 235.8L364.0 237.1Z"/>
<path fill="#09e268" d="M364.0 236.4L367.2 235.1L367.2 239.3L364.0 240.7Z"/>
<path fill="#09e94e" d="M364.0 243.5L367.2 242.2L367.2 246.4L364.0 247.7Z"/>
<path fill="#0aed43" d="M364.0 247.0L367.2 245.7L367.2 249.9L364.0 251.2ZM381.6 248.3L384.8 247.0L384.8 251.2L381.6 252.5Z"/>
<path fill="#0af036" d="M364.0 250.5L367.2 249.2L367.2 253.4L364.0 254.8Z"/>
<path fill="#10f724" d="M364.0 257.6L367.2 256.3L367.2 260.5L364.0 261.8ZM384.1 257.5L387.3 256.2L387.3 260.3L384.1 261.6Z"/>
<path fill="#15f921" d="M364.0 261.1L367.2 259.8L367.2 264.0L364.0 265.4ZM371.5 260.7L374.8 259.3L374.8 263.5L371.5 264.8Z"/>
<path fill="#36fe0d" d="M364.0 285.5L367.2 284.1L367.2 288.3L364.0 289.6Z"/>
<path fill="#45ff0a" d="M364.0 295.9L367.2 294.6L367.2 298.9L364.0 300.2ZM379.1 291.5L382.3 290.2L382.3 294.4L379.1 295.8ZM391.6 288.4L394.8 287.1L394.8 291.3L391.6 292.7Z"/>
<path fill="#4bff0a" d="M364.0 299.5L367.2 298.2L367.2 302.4L364.0 303.7ZM381.6 293.7L384.8 292.4L384.8 296.7L381.6 298.0ZM394.1 290.6L397.4 289.3L397.4 293.4L394.1 294.8Z"/>
<path fill="#1165b7" d="M366.5 160.3L369.7 159.0L369.7 163.3L366.5 164.6Z"/>
<path fill="#126fb9" d="M366.5 163.9L369.7 162.6L369.7 166.9L366.5 168.2Z"/>
<path fill="#127ebc" d="M366.5 167.5L369.7 166.2L369.7 170.5L366.5 171.8Z"/>
<path fill="#1391be" d="M366.5 171.1L369.7 169.8L369.7 174.1L366.5 175.4Z"/>
<path fill="#12a6c0" d="M366.5 174.7L369.7 173.4L369.7 177.6L366.5 179.0Z"/>
<path fill="#11b4c1" d="M366.5 178.3L369.7 176.9L369.7 181.2L366.5 182.5Z"/>
<path fill="#11babf" d="M366.5 181.8L369.7 180.5L369.7 184.7L366.5 186.1Z"/>
<path fill="#0fc9bb" d="M366.5 206.5L369.7 205.2L369.7 209.5L366.5 210.8Z"/>
<path fill="#10ccb8" d="M366.5 210.1L369.7 208.8L369.7 213.1L366.5 214.4ZM371.5 211.0L374.8 209.7L374.8 214.0L371.5 215.3Z"/>
<path fill="#0fceb5" d="M366.5 213.7L369.7 212.4L369.7 216.7L366.5 218.0Z"/>
<path fill="#0ed1ab" d="M366.5 217.3L369.7 216.0L369.7 220.3L366.5 221.6Z"/>
<path fill="#0cd4a0" d="M366.5 220.9L369.7 219.6L369.7 223.8L366.5 225.1Z"/>
<path fill="#0cd795" d="M366.5 224.4L369.7 223.1L369.7 227.4L366.5 228.7Z"/>
<path fill="#0ad98a" d="M366.5 228.0L369.7 226.7L369.7 230.9L366.5 232.3Z"/>
<path fill="#09dc7f" d="M366.5 231.6L369.7 230.2L369.7 234.5L366.5 235.8Z"/>
<path fill="#09e06f" d="M366.5 235.1L369.7 233.8L369.7 238.0L366.5 239.3Z"/>
<path fill="#09e45f" d="M366.5 238.6L369.7 237.3L369.7 241.5L366.5 242.9Z"/>
<path fill="#09e853" d="M366.5 242.2L369.7 240.8L369.7 245.1L366.5 246.4ZM384.1 243.4L387.3 242.1L387.3 246.3L384.1 247.7Z"/>
<path fill="#0aeb48" d="M366.5 245.7L369.7 244.4L369.7 248.6L366.5 249.9Z"/>
<path fill="#0aef3c" d="M366.5 249.2L369.7 247.9L369.7 252.1L366.5 253.4Z"/>
<path fill="#13f922" d="M366.5 259.8L369.7 258.5L369.7 262.7L366.5 264.0Z"/>
<path fill="#2efe13" d="M366.5 277.2L369.7 275.9L369.7 280.0L366.5 281.4Z"/>
<path fill="#4aff0a" d="M366.5 298.2L369.7 296.8L369.7 301.1L366.5 302.4ZM369.0 296.8L372.2 295.5L372.2 299.8L369.0 301.1ZM384.1 292.4L387.3 291.1L387.3 295.3L384.1 296.7Z"/>
<path fill="#50ff0a" d="M366.5 301.7L369.7 300.4L369.7 304.6L366.5 306.0ZM369.0 300.4L372.2 299.1L372.2 303.3L369.0 304.6ZM384.1 296.0L387.3 294.6L387.3 298.8L384.1 300.1Z"/>
<path fill="#56ff0a" d="M366.5 305.3L369.7 303.9L369.7 308.1L366.5 309.4ZM369.0 303.9L372.2 302.6L372.2 306.7L369.0 308.1ZM386.6 298.1L389.8 296.7L389.8 300.9L386.6 302.2Z"/>
<path fill="#1061b5" d="M369.0 169.8L372.2 168.4L372.2 172.7L369.0 174.1Z"/>
<path fill="#1168b7" d="M369.0 173.4L372.2 172.0L372.2 176.3L369.0 177.6ZM386.6 199.4L389.8 198.1L389.8 202.4L386.6 203.7ZM394.1 199.1L397.4 197.7L397.4 202.0L394.1 203.4Z"/>
<path fill="#1373ba" d="M369.0 176.9L372.2 175.6L372.2 179.9L369.0 181.2Z"/>
<path fill="#1284bc" d="M369.0 180.5L372.2 179.2L372.2 183.4L369.0 184.7Z"/>
<path fill="#1299bf" d="M369.0 184.0L372.2 182.7L372.2 187.0L369.0 188.3Z"/>
<path fill="#11b6c0" d="M369.0 187.6L372.2 186.3L372.2 190.5L369.0 191.8Z"/>
<path fill="#10c6be" d="M369.0 201.6L372.2 200.3L372.2 204.5L369.0 205.9Z"/>
<path fill="#0fc9bc" d="M369.0 205.2L372.2 203.8L372.2 208.1L369.0 209.5ZM374.1 206.1L377.3 204.8L377.3 209.1L374.1 210.4Z"/>
<path fill="#0fcbba" d="M369.0 208.8L372.2 207.4L372.2 211.7L369.0 213.1ZM376.6 208.4L379.8 207.0L379.8 211.3L376.6 212.7ZM381.6 209.3L384.8 208.0L384.8 212.3L381.6 213.6Z"/>
<path fill="#0fcdb7" d="M369.0 212.4L372.2 211.0L372.2 215.3L369.0 216.7Z"/>
<path fill="#0ed0b0" d="M369.0 216.0L372.2 214.6L372.2 218.9L369.0 220.3Z"/>
<path fill="#0dd3a5" d="M369.0 219.6L372.2 218.2L372.2 222.5L369.0 223.8Z"/>
<path fill="#0cd59a" d="M369.0 223.1L372.2 221.8L372.2 226.0L369.0 227.4Z"/>
<path fill="#0bd88f" d="M369.0 226.7L372.2 225.3L372.2 229.6L369.0 230.9Z"/>
<path fill="#09db84" d="M369.0 230.2L372.2 228.9L372.2 233.1L369.0 234.5Z"/>
<path fill="#09df76" d="M369.0 233.8L372.2 232.4L372.2 236.7L369.0 238.0Z"/>
<path fill="#09e367" d="M369.0 237.3L372.2 236.0L372.2 240.2L369.0 241.5ZM386.6 238.6L389.8 237.2L389.8 241.5L386.6 242.8Z"/>
<path fill="#09e758" d="M369.0 240.8L372.2 239.5L372.2 243.7L369.0 245.1Z"/>
<path fill="#0aea4d" d="M369.0 244.4L372.2 243.0L372.2 247.3L369.0 248.6Z"/>
<path fill="#0aed41" d="M369.0 247.9L372.2 246.6L372.2 250.8L369.0 252.1Z"/>
<path fill="#0af133" d="M369.0 251.4L372.2 250.1L372.2 254.3L369.0 255.6ZM381.6 251.8L384.8 250.5L384.8 254.7L381.6 256.0Z"/>
<path fill="#0bf426" d="M369.0 254.9L372.2 253.6L372.2 257.8L369.0 259.2Z"/>
<path fill="#23fd19" d="M369.0 268.9L372.2 267.6L372.2 271.8L369.0 273.1Z"/>
<path fill="#1163b6" d="M371.5 182.7L374.8 181.4L374.8 185.6L371.5 187.0Z"/>
<path fill="#126db9" d="M371.5 186.3L374.8 184.9L374.8 189.2L371.5 190.5Z"/>
<path fill="#11a7c0" d="M371.5 189.8L374.8 188.5L374.8 192.7L371.5 194.0Z"/>
<path fill="#10c5bf" d="M371.5 200.3L374.8 199.0L374.8 203.2L371.5 204.5ZM376.6 201.2L379.8 199.8L379.8 204.1L376.6 205.5Z"/>
<path fill="#10c8bd" d="M371.5 203.8L374.8 202.5L374.8 206.8L371.5 208.1Z"/>
<path fill="#0fcabb" d="M371.5 207.4L374.8 206.1L374.8 210.4L371.5 211.7ZM379.1 207.0L382.3 205.7L382.3 210.0L379.1 211.3Z"/>
<path fill="#0fcfb4" d="M371.5 214.6L374.8 213.3L374.8 217.6L371.5 218.9Z"/>
<path fill="#0dd1aa" d="M371.5 218.2L374.8 216.9L374.8 221.2L371.5 222.5Z"/>
<path fill="#0cd49f" d="M371.5 221.8L374.8 220.5L374.8 224.7L371.5 226.0Z"/>
<path fill="#0bd894" d="M371.5 225.3L374.8 224.0L374.8 228.3L371.5 229.6Z"/>
<path fill="#0ada89" d="M371.5 228.9L374.8 227.6L374.8 231.8L371.5 233.1Z"/>
<path fill="#09dd7d" d="M371.5 232.4L374.8 231.1L374.8 235.3L371.5 236.7Z"/>
<path fill="#09e16e" d="M371.5 236.0L374.8 234.6L374.8 238.9L371.5 240.2Z"/>
<path fill="#09e55e" d="M371.5 239.5L374.8 238.2L374.8 242.4L371.5 243.7Z"/>
<path fill="#09e851" d="M371.5 243.0L374.8 241.7L374.8 245.9L371.5 247.3Z"/>
<path fill="#0aec47" d="M371.5 246.6L374.8 245.2L374.8 249.5L371.5 250.8Z"/>
<path fill="#0af42b" d="M371.5 253.6L374.8 252.3L374.8 256.5L371.5 257.8Z"/>
<path fill="#4fff0a" d="M371.5 299.1L374.8 297.7L374.8 302.0L371.5 303.3ZM386.6 294.6L389.8 293.3L389.8 297.4L386.6 298.8Z"/>
<path fill="#138dbd" d="M374.1 192.0L377.3 190.7L377.3 194.9L374.1 196.2Z"/>
<path fill="#11bac1" d="M374.1 195.5L377.3 194.2L377.3 198.4L374.1 199.7Z"/>
<path fill="#10c4c0" d="M374.1 199.0L377.3 197.7L377.3 201.9L374.1 203.2Z"/>
<path fill="#10c7be" d="M374.1 202.5L377.3 201.2L377.3 205.5L374.1 206.8Z"/>
<path fill="#10cbb9" d="M374.1 209.7L377.3 208.4L377.3 212.7L374.1 214.0Z"/>
<path fill="#0fceb7" d="M374.1 213.3L377.3 212.0L377.3 216.3L374.1 217.6ZM379.1 214.2L382.3 212.9L382.3 217.2L379.1 218.5Z"/>
<path fill="#0ed1ae" d="M374.1 216.9L377.3 215.6L377.3 219.8L374.1 221.2Z"/>
<path fill="#0dd4a4" d="M374.1 220.5L377.3 219.1L377.3 223.4L374.1 224.7ZM391.6 221.8L394.8 220.5L394.8 224.7L391.6 226.0Z"/>
<path fill="#0cd699" d="M374.1 224.0L377.3 222.7L377.3 226.9L374.1 228.3Z"/>
<path fill="#0bd98e" d="M374.1 227.6L377.3 226.2L377.3 230.5L374.1 231.8Z"/>
<path fill="#09dc82" d="M374.1 231.1L377.3 229.8L377.3 234.0L374.1 235.3Z"/>
<path fill="#09df74" d="M374.1 234.6L377.3 233.3L377.3 237.5L374.1 238.9Z"/>
<path fill="#09e364" d="M374.1 238.2L377.3 236.8L377.3 241.1L374.1 242.4Z"/>
<path fill="#09e757" d="M374.1 241.7L377.3 240.4L377.3 244.6L374.1 245.9Z"/>
<path fill="#0aea4b" d="M374.1 245.2L377.3 243.9L377.3 248.1L374.1 249.5Z"/>
<path fill="#0aee3f" d="M374.1 248.8L377.3 247.4L377.3 251.7L374.1 253.0Z"/>
<path fill="#0af231" d="M374.1 252.3L377.3 251.0L377.3 255.2L374.1 256.5ZM386.6 252.7L389.8 251.4L389.8 255.5L386.6 256.9Z"/>
<path fill="#13f823" d="M374.1 259.3L377.3 258.0L377.3 262.2L374.1 263.5ZM394.1 259.1L397.4 257.8L397.4 261.9L394.1 263.3Z"/>
<path fill="#19fb1f" d="M374.1 262.8L377.3 261.5L377.3 265.6L374.1 267.0Z"/>
<path fill="#3bff0a" d="M374.1 287.1L377.3 285.7L377.3 290.0L374.1 291.3Z"/>
<path fill="#12b5c3" d="M376.6 197.7L379.8 196.3L379.8 200.5L376.6 201.9Z"/>
<path fill="#10cdb8" d="M376.6 212.0L379.8 210.6L379.8 214.9L376.6 216.3Z"/>
<path fill="#0fd0b3" d="M376.6 215.6L379.8 214.2L379.8 218.5L376.6 219.8Z"/>
<path fill="#0dd2a8" d="M376.6 219.1L379.8 217.8L379.8 222.0L376.6 223.4Z"/>
<path fill="#0dd59e" d="M376.6 222.7L379.8 221.3L379.8 225.6L376.6 226.9Z"/>
<path fill="#0bd892" d="M376.6 226.2L379.8 224.9L379.8 229.2L376.6 230.5Z"/>
<path fill="#0adb87" d="M376.6 229.8L379.8 228.5L379.8 232.7L376.6 234.0Z"/>
<path fill="#09de7b" d="M376.6 233.3L379.8 232.0L379.8 236.2L376.6 237.5Z"/>
<path fill="#09e16b" d="M376.6 236.8L379.8 235.5L379.8 239.7L376.6 241.1Z"/>
<path fill="#09ea51" d="M376.6 243.9L379.8 242.6L379.8 246.8L376.6 248.1Z"/>
<path fill="#0aed45" d="M376.6 247.4L379.8 246.1L379.8 250.3L376.6 251.7Z"/>
<path fill="#0af037" d="M376.6 251.0L379.8 249.6L379.8 253.9L376.6 255.2ZM389.1 251.4L392.3 250.0L392.3 254.2L389.1 255.5Z"/>
<path fill="#0af427" d="M376.6 254.5L379.8 253.2L379.8 257.4L376.6 258.7ZM389.1 254.8L392.3 253.5L392.3 257.7L389.1 259.0Z"/>
<path fill="#5aff0a" d="M376.6 303.4L379.8 302.1L379.8 306.2L376.6 307.5ZM391.6 298.8L394.8 297.5L394.8 301.7L391.6 303.0Z"/>
<path fill="#1163b4" d="M379.1 192.8L382.3 191.5L382.3 195.7L379.1 197.0ZM384.1 193.7L387.3 192.3L387.3 196.5L384.1 197.9ZM391.6 193.2L394.8 191.8L394.8 196.2L391.6 197.5Z"/>
<path fill="#129fc2" d="M379.1 199.8L382.3 198.5L382.3 202.8L379.1 204.1Z"/>
<path fill="#11c4c4" d="M379.1 203.4L382.3 202.1L382.3 206.4L379.1 207.7Z"/>
<path fill="#10ccb9" d="M379.1 210.6L382.3 209.3L382.3 213.6L379.1 214.9ZM384.1 211.6L387.3 210.3L387.3 214.5L384.1 215.8Z"/>
<path fill="#0ed1ad" d="M379.1 217.8L382.3 216.5L382.3 220.7L379.1 222.0Z"/>
<path fill="#0cd4a2" d="M379.1 221.3L382.3 220.0L382.3 224.3L379.1 225.6Z"/>
<path fill="#0cd797" d="M379.1 224.9L382.3 223.6L382.3 227.8L379.1 229.2Z"/>
<path fill="#09dd82" d="M379.1 232.0L382.3 230.7L382.3 234.9L379.1 236.2Z"/>
<path fill="#09e172" d="M379.1 235.5L382.3 234.2L382.3 238.4L379.1 239.7Z"/>
<path fill="#09e562" d="M379.1 239.0L382.3 237.7L382.3 241.9L379.1 243.3Z"/>
<path fill="#09e855" d="M379.1 242.6L382.3 241.2L382.3 245.5L379.1 246.8Z"/>
<path fill="#0aeb4a" d="M379.1 246.1L382.3 244.8L382.3 249.0L379.1 250.3Z"/>
<path fill="#0aef3e" d="M379.1 249.6L382.3 248.3L382.3 252.5L379.1 253.9Z"/>
<path fill="#15f922" d="M379.1 260.1L382.3 258.8L382.3 263.0L379.1 264.3Z"/>
<path fill="#1162b4" d="M381.6 191.5L384.8 190.2L384.8 194.4L381.6 195.7ZM386.6 192.3L389.8 191.0L389.8 195.2L386.6 196.5ZM394.1 191.8L397.4 190.5L397.4 194.8L394.1 196.2Z"/>
<path fill="#1164b5" d="M381.6 195.0L384.8 193.7L384.8 197.9L381.6 199.2ZM389.1 194.5L392.3 193.2L392.3 197.5L389.1 198.8ZM394.1 195.5L397.4 194.1L397.4 198.4L394.1 199.8Z"/>
<path fill="#1167b7" d="M381.6 198.5L384.8 197.2L384.8 201.5L381.6 202.8ZM389.1 198.1L392.3 196.8L392.3 201.1L389.1 202.4Z"/>
<path fill="#138bc1" d="M381.6 202.1L384.8 200.8L384.8 205.1L381.6 206.4Z"/>
<path fill="#11bfc6" d="M381.6 205.7L384.8 204.4L384.8 208.7L381.6 210.0Z"/>
<path fill="#0fcdb8" d="M381.6 212.9L384.8 211.6L384.8 215.8L381.6 217.2Z"/>
<path fill="#0fd0b2" d="M381.6 216.5L384.8 215.1L384.8 219.4L381.6 220.7Z"/>
<path fill="#0dd2a7" d="M381.6 220.0L384.8 218.7L384.8 222.9L381.6 224.3Z"/>
<path fill="#0dd69c" d="M381.6 223.6L384.8 222.2L384.8 226.5L381.6 227.8Z"/>
<path fill="#0bd991" d="M381.6 227.1L384.8 225.8L384.8 230.0L381.6 231.4Z"/>
<path fill="#0adc87" d="M381.6 230.7L384.8 229.3L384.8 233.6L381.6 234.9Z"/>
<path fill="#09df79" d="M381.6 234.2L384.8 232.9L384.8 237.1L381.6 238.4Z"/>
<path fill="#09e369" d="M381.6 237.7L384.8 236.4L384.8 240.6L381.6 241.9Z"/>
<path fill="#09e65a" d="M381.6 241.2L384.8 239.9L384.8 244.1L381.6 245.5Z"/>
<path fill="#0aea4f" d="M381.6 244.8L384.8 243.4L384.8 247.7L381.6 249.0Z"/>
<path fill="#0bf526" d="M381.6 255.3L384.8 254.0L384.8 258.2L381.6 259.5Z"/>
<path fill="#19fa1f" d="M381.6 262.3L384.8 260.9L384.8 265.1L381.6 266.4Z"/>
<path fill="#58ff0a" d="M381.6 300.7L384.8 299.4L384.8 303.5L381.6 304.9Z"/>
<path fill="#1166b6" d="M384.1 197.2L387.3 195.8L387.3 200.1L384.1 201.5Z"/>
<path fill="#1169b8" d="M384.1 200.8L387.3 199.4L387.3 203.7L384.1 205.1ZM391.6 200.4L394.8 199.1L394.8 203.4L391.6 204.7Z"/>
<path fill="#1479bf" d="M384.1 204.4L387.3 203.0L387.3 207.3L384.1 208.7Z"/>
<path fill="#11bec8" d="M384.1 208.0L387.3 206.6L387.3 211.0L384.1 212.3Z"/>
<path fill="#0fcfb6" d="M384.1 215.1L387.3 213.8L387.3 218.1L384.1 219.4Z"/>
<path fill="#0ed2ac" d="M384.1 218.7L387.3 217.4L387.3 221.6L384.1 222.9Z"/>
<path fill="#0dd5a1" d="M384.1 222.2L387.3 220.9L387.3 225.2L384.1 226.5Z"/>
<path fill="#0cd896" d="M384.1 225.8L387.3 224.5L387.3 228.7L384.1 230.0Z"/>
<path fill="#0ada8b" d="M384.1 229.3L387.3 228.0L387.3 232.2L384.1 233.6Z"/>
<path fill="#09dd80" d="M384.1 232.9L387.3 231.5L387.3 235.7L384.1 237.1Z"/>
<path fill="#09e171" d="M384.1 236.4L387.3 235.0L387.3 239.3L384.1 240.6Z"/>
<path fill="#09e561" d="M384.1 239.9L387.3 238.6L387.3 242.8L384.1 244.1Z"/>
<path fill="#0aec49" d="M384.1 247.0L387.3 245.6L387.3 249.9L384.1 251.2Z"/>
<path fill="#0af03a" d="M384.1 250.5L387.3 249.2L387.3 253.4L384.1 254.7Z"/>
<path fill="#0af42a" d="M384.1 254.0L387.3 252.7L387.3 256.9L384.1 258.2Z"/>
<path fill="#16f921" d="M384.1 260.9L387.3 259.6L387.3 263.8L384.1 265.1ZM391.6 260.4L394.8 259.1L394.8 263.3L391.6 264.6Z"/>
<path fill="#24fd18" d="M384.1 267.9L387.3 266.5L387.3 270.7L384.1 272.0ZM391.6 267.4L394.8 266.0L394.8 270.2L391.6 271.5Z"/>
<path fill="#1165b5" d="M386.6 195.8L389.8 194.5L389.8 198.8L386.6 200.1Z"/>
<path fill="#126bb9" d="M386.6 203.0L389.8 201.7L389.8 206.0L386.6 207.3Z"/>
<path fill="#1372bf" d="M386.6 206.6L389.8 205.3L389.8 209.6L386.6 211.0ZM389.1 208.9L392.3 207.6L392.3 211.8L389.1 213.2ZM391.6 211.1L394.8 209.8L394.8 214.1L391.6 215.4Z"/>
<path fill="#12bcc9" d="M386.6 210.3L389.8 208.9L389.8 213.2L386.6 214.5Z"/>
<path fill="#0fceb8" d="M386.6 213.8L389.8 212.5L389.8 216.7L386.6 218.1Z"/>
<path fill="#0ed1b0" d="M386.6 217.4L389.8 216.0L389.8 220.3L386.6 221.6Z"/>
<path fill="#0dd4a6" d="M386.6 220.9L389.8 219.6L389.8 223.8L386.6 225.2Z"/>
<path fill="#0cd69b" d="M386.6 224.5L389.8 223.1L389.8 227.4L386.6 228.7Z"/>
<path fill="#0bd990" d="M386.6 228.0L389.8 226.7L389.8 230.9L386.6 232.2Z"/>
<path fill="#09dc85" d="M386.6 231.5L389.8 230.2L389.8 234.4L386.6 235.7Z"/>
<path fill="#09df77" d="M386.6 235.0L389.8 233.7L389.8 237.9L386.6 239.3Z"/>
<path fill="#09e759" d="M386.6 242.1L389.8 240.8L389.8 245.0L386.6 246.3Z"/>
<path fill="#0aeb4d" d="M386.6 245.6L389.8 244.3L389.8 248.5L386.6 249.9Z"/>
<path fill="#0aee41" d="M386.6 249.2L389.8 247.8L389.8 252.1L386.6 253.4Z"/>
<path fill="#14f822" d="M386.6 259.6L389.8 258.3L389.8 262.5L386.6 263.8Z"/>
<path fill="#31fe10" d="M386.6 276.9L389.8 275.6L389.8 279.8L386.6 281.1Z"/>
<path fill="#75ff0a" d="M386.6 308.4L389.8 307.1L389.8 311.2L386.6 312.5Z"/>
<path fill="#1161b4" d="M389.1 191.0L392.3 189.7L392.3 193.9L389.1 195.2Z"/>
<path fill="#126ab9" d="M389.1 201.7L392.3 200.4L392.3 204.7L389.1 206.0ZM394.1 202.7L397.4 201.3L397.4 205.6L394.1 207.0Z"/>
<path fill="#126dbc" d="M389.1 205.3L392.3 204.0L392.3 208.3L389.1 209.6Z"/>
<path fill="#12bbcb" d="M389.1 212.5L392.3 211.1L392.3 215.4L389.1 216.7Z"/>
<path fill="#0fd0b5" d="M389.1 216.0L392.3 214.7L392.3 219.0L389.1 220.3Z"/>
<path fill="#0dd2aa" d="M389.1 219.6L392.3 218.3L392.3 222.5L389.1 223.8Z"/>
<path fill="#0dd5a0" d="M389.1 223.1L392.3 221.8L392.3 226.0L389.1 227.4Z"/>
<path fill="#0cd894" d="M389.1 226.7L392.3 225.3L392.3 229.6L389.1 230.9Z"/>
<path fill="#0ada8a" d="M389.1 230.2L392.3 228.9L392.3 233.1L389.1 234.4Z"/>
<path fill="#09de7e" d="M389.1 233.7L392.3 232.4L392.3 236.6L389.1 237.9Z"/>
<path fill="#09e26e" d="M389.1 237.2L392.3 235.9L392.3 240.1L389.1 241.5Z"/>
<path fill="#09e65e" d="M389.1 240.8L392.3 239.4L392.3 243.7L389.1 245.0Z"/>
<path fill="#0ae953" d="M389.1 244.3L392.3 243.0L392.3 247.2L389.1 248.5Z"/>
<path fill="#0aed47" d="M389.1 247.8L392.3 246.5L392.3 250.7L389.1 252.1Z"/>
<path fill="#18fa1f" d="M389.1 261.8L392.3 260.4L392.3 264.6L389.1 265.9Z"/>
<path fill="#64ff0a" d="M389.1 303.6L392.3 302.3L392.3 306.4L389.1 307.8Z"/>
<path fill="#73ff0a" d="M389.1 307.1L392.3 305.7L392.3 309.8L389.1 311.2Z"/>
<path fill="#1165b6" d="M391.6 196.8L394.8 195.5L394.8 199.8L391.6 201.1Z"/>
<path fill="#126bba" d="M391.6 204.0L394.8 202.7L394.8 207.0L391.6 208.3Z"/>
<path fill="#126fbd" d="M391.6 207.6L394.8 206.3L394.8 210.5L391.6 211.8Z"/>
<path fill="#12b3cb" d="M391.6 214.7L394.8 213.4L394.8 217.6L391.6 219.0Z"/>
<path fill="#0ed1af" d="M391.6 218.3L394.8 216.9L394.8 221.2L391.6 222.5Z"/>
<path fill="#0cd799" d="M391.6 225.3L394.8 224.0L394.8 228.2L391.6 229.6Z"/>
<path fill="#0bda8e" d="M391.6 228.9L394.8 227.5L394.8 231.8L391.6 233.1Z"/>
<path fill="#09dd84" d="M391.6 232.4L394.8 231.1L394.8 235.3L391.6 236.6Z"/>
<path fill="#09e075" d="M391.6 235.9L394.8 234.6L394.8 238.8L391.6 240.1Z"/>
<path fill="#09e465" d="M391.6 239.4L394.8 238.1L394.8 242.3L391.6 243.7Z"/>
<path fill="#09e857" d="M391.6 243.0L394.8 241.6L394.8 245.9L391.6 247.2Z"/>
<path fill="#0aeb4c" d="M391.6 246.5L394.8 245.2L394.8 249.4L391.6 250.7Z"/>
<path fill="#0aef3f" d="M391.6 250.0L394.8 248.7L394.8 252.9L391.6 254.2Z"/>
<path fill="#0af32d" d="M391.6 253.5L394.8 252.2L394.8 256.3L391.6 257.7Z"/>
<path fill="#126ebc" d="M394.1 206.3L397.4 204.9L397.4 209.2L394.1 210.5Z"/>
<path fill="#1370be" d="M394.1 209.8L397.4 208.5L397.4 212.7L394.1 214.1Z"/>
<path fill="#1474c0" d="M394.1 213.4L397.4 212.0L397.4 216.3L394.1 217.6Z"/>
<path fill="#13abcb" d="M394.1 216.9L397.4 215.6L397.4 219.8L394.1 221.2Z"/>
<path fill="#0ed1ac" d="M394.1 220.5L397.4 219.1L397.4 223.4L394.1 224.7Z"/>
<path fill="#0dd69e" d="M394.1 224.0L397.4 222.7L397.4 226.9L394.1 228.2Z"/>
<path fill="#0bd993" d="M394.1 227.5L397.4 226.2L397.4 230.4L394.1 231.8Z"/>
<path fill="#0adc89" d="M394.1 231.1L397.4 229.7L397.4 234.0L394.1 235.3Z"/>
<path fill="#09df7c" d="M394.1 234.6L397.4 233.3L397.4 237.5L394.1 238.8Z"/>
<path fill="#09e26c" d="M394.1 238.1L397.4 236.8L397.4 241.0L394.1 242.3Z"/>
<path fill="#09e65c" d="M394.1 241.6L397.4 240.3L397.4 244.5L394.1 245.9Z"/>
<path fill="#0ae951" d="M394.1 245.2L397.4 243.8L397.4 248.1L394.1 249.4Z"/>
<path fill="#0aee45" d="M394.1 248.7L397.4 247.4L397.4 251.5L394.1 252.9Z"/>
<path fill="#0af234" d="M394.1 252.2L397.4 250.8L397.4 255.0L394.1 256.3Z"/>
<path fill="#1afb1e" d="M394.1 262.6L397.4 261.2L397.4 265.4L394.1 266.7Z"/>
<path fill="#6fff0a" d="M394.1 304.4L397.4 303.1L397.4 307.2L394.1 308.5Z"/>
<path fill="#7fff0a" d="M394.1 307.8L397.4 306.5L397.4 310.6L394.1 311.9Z"/>
</g>
<g>
<path fill="#f7ea14" d="M346.4 343.3L350.5 341.5L350.5 345.4L346.4 347.3Z"/>
<path fill="#f7ed14" d="M346.4 346.6L350.5 344.7L350.6 349.9L346.4 351.9Z"/>
<path fill="#f6f014" d="M346.4 351.2L350.6 349.2L350.6 353.9L346.4 356.0ZM370.3 392.0L374.6 393.6L374.6 398.0L370.3 396.4Z"/>
<path fill="#f6f314" d="M346.4 355.2L350.6 353.2L351.7 356.5L347.5 358.6Z"/>
<path fill="#f4f514" d="M347.5 358.6L351.7 355.8L353.3 357.8L349.1 360.6Z"/>
<path fill="#eff613" d="M349.1 360.6L353.3 357.8L355.0 359.6L350.8 362.5ZM370.3 373.7L374.6 375.3L374.6 379.6L370.3 378.0Z"/>
<path fill="#e9f613" d="M350.8 362.5L355.0 359.6L356.6 361.6L352.5 364.4Z"/>
<path fill="#e4f712" d="M352.5 364.4L356.6 361.6L358.4 363.4L354.3 366.3ZM373.8 397.3L378.1 398.9L378.1 403.2L373.8 401.6Z"/>
<path fill="#dff811" d="M354.3 366.3L358.4 363.4L360.7 365.1L356.5 368.1Z"/>
<path fill="#daf811" d="M356.5 368.1L360.0 365.1L364.0 366.9L360.7 369.9ZM373.8 386.3L378.1 387.9L378.1 392.2L373.8 390.6Z"/>
<path fill="#d4f910" d="M360.0 369.9L363.3 366.9L367.9 368.6L364.7 371.6Z"/>
<path fill="#cff910" d="M364.0 371.6L367.9 368.6L370.6 369.7L366.8 372.8Z"/>
<path fill="#e2f712" d="M349.8 341.5L353.8 339.7L353.9 343.6L349.8 345.4Z"/>
<path fill="#ddf811" d="M349.8 344.7L353.9 342.9L354.0 348.0L349.9 349.9ZM373.8 389.9L378.1 391.5L378.1 395.9L373.8 394.3Z"/>
<path fill="#d8f811" d="M349.9 349.2L354.0 347.3L354.1 351.8L349.9 353.9Z"/>
<path fill="#d2f910" d="M349.9 353.2L354.1 351.1L355.2 354.4L351.0 356.5ZM370.3 374.4L373.4 371.3L377.6 372.9L374.6 376.0Z"/>
<path fill="#cdfa0f" d="M351.0 356.5L355.2 353.7L356.7 355.6L352.6 358.5Z"/>
<path fill="#c8fa0f" d="M352.6 358.5L356.7 355.6L358.4 357.5L354.3 360.3ZM377.3 402.5L381.6 404.2L381.6 408.5L377.3 406.9Z"/>
<path fill="#c3fb0e" d="M354.3 360.3L358.4 357.5L360.1 359.4L355.9 362.3ZM369.9 370.4L373.0 367.4L377.2 369.0L374.1 372.0Z"/>
<path fill="#bdfc0d" d="M355.9 362.3L360.1 359.4L361.8 361.2L357.7 364.1Z"/>
<path fill="#b8fc0d" d="M357.7 364.1L361.8 361.2L364.1 362.9L360.0 365.8Z"/>
<path fill="#b3fd0c" d="M360.0 365.8L364.1 362.9L367.3 364.6L364.0 367.6Z"/>
<path fill="#adfd0c" d="M363.3 367.6L366.6 364.6L371.1 366.3L367.9 369.3Z"/>
<path fill="#a8fe0b" d="M367.2 369.3L371.1 366.3L373.7 367.4L369.9 370.4ZM380.9 404.2L385.1 405.8L385.1 410.2L380.9 408.5Z"/>
<path fill="#bbfc0d" d="M353.1 339.7L357.2 338.0L357.3 341.7L353.2 343.6ZM377.3 387.9L381.6 389.5L381.6 393.9L377.3 392.2Z"/>
<path fill="#b6fc0d" d="M353.2 342.9L357.3 341.0L357.4 346.0L353.3 348.0Z"/>
<path fill="#b1fd0c" d="M353.3 347.3L357.4 345.3L357.6 349.8L353.4 351.8ZM377.3 376.9L381.6 378.5L381.6 382.9L377.3 381.2Z"/>
<path fill="#acfe0b" d="M353.4 351.1L357.6 349.1L358.7 352.3L354.5 354.4ZM380.9 407.8L385.1 409.5L385.1 413.8L380.9 412.2Z"/>
<path fill="#a6fe0b" d="M354.5 354.4L358.7 351.6L360.2 353.5L356.0 356.3Z"/>
<path fill="#a1ff0a" d="M356.0 356.3L360.2 353.5L361.9 355.4L357.7 358.2Z"/>
<path fill="#9bff0a" d="M357.7 358.2L361.9 355.4L363.5 357.3L359.4 360.1ZM380.9 389.5L385.1 391.1L385.1 395.5L380.9 393.9Z"/>
<path fill="#95ff0a" d="M359.4 360.1L363.5 357.3L365.3 359.0L361.1 361.9Z"/>
<path fill="#8eff0a" d="M361.1 361.9L365.3 359.0L367.5 360.7L363.4 363.6ZM380.9 378.5L385.1 380.1L385.1 384.5L380.9 382.9Z"/>
<path fill="#88ff0a" d="M363.4 363.6L367.5 360.7L370.7 362.4L366.6 365.3Z"/>
<path fill="#82ff0a" d="M366.6 365.3L370.0 362.4L374.2 364.0L371.1 367.0ZM376.9 373.6L380.0 370.6L384.2 372.2L381.1 375.2ZM384.4 405.8L388.7 407.4L388.7 411.8L384.4 410.2Z"/>
<path fill="#7cff0a" d="M370.4 367.0L374.2 364.0L376.8 365.0L373.0 368.1Z"/>
<path fill="#a3ff0a" d="M356.5 338.0L360.5 336.2L360.6 339.9L356.6 341.7Z"/>
<path fill="#9dff0a" d="M356.6 341.0L360.6 339.2L360.8 344.0L356.7 346.0Z"/>
<path fill="#97ff0a" d="M356.7 345.3L360.8 343.3L361.0 347.7L356.9 349.8ZM359.8 336.2L363.9 334.4L364.0 338.0L359.9 339.9ZM380.9 385.8L385.1 387.5L385.1 391.8L380.9 390.2Z"/>
<path fill="#90ff0a" d="M356.9 349.1L361.0 347.0L362.1 350.2L358.0 352.3ZM359.9 339.2L364.0 337.3L364.2 342.0L360.1 344.0Z"/>
<path fill="#8aff0a" d="M358.0 352.3L362.1 349.5L363.7 351.4L359.5 354.2ZM360.1 343.3L364.2 341.3L364.5 345.6L360.3 347.7ZM363.2 334.4L367.2 332.6L367.4 336.1L363.3 338.0Z"/>
<path fill="#84ff0a" d="M359.5 354.2L363.7 351.4L365.3 353.3L361.2 356.1ZM360.3 347.0L364.5 344.9L365.6 348.1L361.4 350.2ZM363.3 337.3L367.4 335.4L367.6 340.1L363.5 342.0Z"/>
<path fill="#7eff0a" d="M361.2 356.1L365.3 353.3L367.0 355.1L362.8 358.0ZM361.4 350.2L365.6 347.4L367.1 349.3L363.0 352.1ZM363.5 341.3L367.6 339.4L368.0 343.6L363.8 345.6ZM366.5 332.6L370.6 330.9L370.8 334.3L366.7 336.1ZM384.4 402.1L388.7 403.7L388.7 408.1L384.4 406.5Z"/>
<path fill="#77ff0a" d="M362.8 358.0L367.0 355.1L368.7 356.9L364.6 359.7ZM363.0 352.1L367.1 349.3L368.8 351.2L364.6 354.0ZM363.8 344.9L368.0 342.9L369.1 346.0L364.9 348.1ZM366.7 335.4L370.8 333.6L371.1 338.1L366.9 340.1Z"/>
<path fill="#71ff0a" d="M364.6 359.7L368.7 356.9L370.9 358.5L366.8 361.4ZM364.6 354.0L368.8 351.2L370.4 353.0L366.3 355.8ZM364.9 348.1L369.1 345.3L370.6 347.2L366.4 350.0ZM366.9 339.4L371.1 337.4L371.5 341.5L367.3 343.6ZM369.9 330.9L373.9 329.1L374.1 332.4L370.1 334.3Z"/>
<path fill="#6bff0a" d="M366.8 361.4L370.9 358.5L374.0 360.1L370.0 363.1ZM366.3 355.8L370.4 353.0L372.2 354.7L368.0 357.6ZM366.4 350.0L370.6 347.2L372.2 349.1L368.1 351.9ZM367.3 342.9L371.5 340.8L372.6 343.9L368.4 346.0ZM370.1 333.6L374.1 331.7L374.5 336.1L370.4 338.1ZM384.4 387.5L388.7 389.1L388.7 393.4L384.4 391.8Z"/>
<path fill="#65ff0a" d="M370.0 363.1L373.3 360.1L377.4 361.6L374.2 364.7ZM368.0 357.6L372.2 354.7L374.3 356.2L370.2 359.2ZM368.1 351.9L372.2 349.1L373.9 350.9L369.7 353.7ZM368.4 346.0L372.6 343.2L374.1 345.1L369.9 347.9ZM370.4 337.4L374.5 335.4L374.9 339.4L370.8 341.5ZM373.2 329.1L377.3 327.3L377.5 330.6L373.4 332.4Z"/>
<path fill="#5eff0a" d="M373.5 364.7L377.4 361.6L379.9 362.7L376.1 365.8ZM370.2 359.2L374.3 356.2L377.3 357.8L373.3 360.8ZM369.7 353.7L373.9 350.9L375.6 352.5L371.5 355.4ZM369.9 347.9L374.1 345.1L375.7 347.0L371.5 349.8ZM370.8 340.8L374.9 338.7L376.1 341.8L371.9 343.9ZM373.4 331.7L377.5 329.9L377.9 334.1L373.8 336.1Z"/>
<path fill="#58ff0a" d="M373.3 360.8L376.6 357.8L380.6 359.3L377.4 362.4ZM371.5 355.4L375.6 352.5L377.7 354.0L373.6 356.9ZM371.5 349.8L375.7 347.0L377.3 348.7L373.2 351.6ZM371.9 343.9L376.1 341.1L377.5 343.0L373.4 345.8ZM373.8 335.4L377.9 333.4L378.4 337.4L374.2 339.4ZM376.6 327.3L380.6 325.5L380.9 328.7L376.8 330.6Z"/>
<path fill="#52ff0a" d="M376.7 362.4L380.6 359.3L383.0 360.4L379.2 363.4ZM373.6 356.9L377.7 354.0L380.6 355.6L376.6 358.6ZM373.2 351.6L377.3 348.7L379.0 350.3L374.9 353.2ZM373.4 345.8L377.5 343.0L379.1 344.8L375.0 347.7ZM374.2 338.7L378.4 336.6L379.5 339.7L375.4 341.8ZM376.8 329.9L380.9 328.0L381.3 332.2L377.2 334.1ZM380.0 371.3L383.1 368.2L387.3 369.8L384.2 372.9ZM387.9 403.7L392.2 405.4L392.2 409.7L387.9 408.1Z"/>
<path fill="#4cff0a" d="M376.6 358.6L380.6 355.6L383.8 357.0L380.6 360.0ZM374.9 353.2L379.0 350.3L381.1 351.8L377.0 354.7ZM375.0 347.7L379.1 344.8L380.7 346.6L376.6 349.4ZM375.4 341.8L379.5 339.0L381.0 340.9L376.8 343.7ZM377.2 333.4L381.3 331.5L381.9 335.3L377.7 337.4ZM379.9 325.5L384.0 323.8L384.3 326.8L380.2 328.7Z"/>
<path fill="#45ff0a" d="M379.9 360.0L383.8 357.0L386.1 358.0L382.3 361.1ZM377.0 354.7L381.1 351.8L383.9 353.3L379.9 356.3ZM376.6 349.4L380.7 346.6L382.5 348.1L378.3 351.0ZM376.8 343.7L381.0 340.9L382.6 342.7L378.4 345.5ZM377.7 336.6L381.9 334.6L383.0 337.6L378.8 339.7ZM380.2 328.0L384.3 326.1L384.7 330.2L380.6 332.2Z"/>
<path fill="#3fff0a" d="M379.9 356.3L383.9 353.3L387.0 354.7L383.1 357.7ZM378.3 351.0L382.5 348.1L384.5 349.6L380.4 352.5ZM378.4 345.5L382.6 342.7L384.2 344.4L380.0 347.3ZM378.8 339.7L383.0 336.9L384.4 338.8L380.3 341.6ZM380.6 331.5L384.7 329.5L385.4 333.2L381.2 335.3ZM383.3 323.8L387.3 322.0L387.6 325.0L383.6 326.8ZM387.9 389.1L392.2 390.7L392.2 395.0L387.9 393.4Z"/>
<path fill="#3aff0b" d="M383.1 357.7L387.0 354.7L389.2 355.7L385.4 358.8ZM380.4 352.5L384.5 349.6L387.2 351.1L383.2 354.0ZM380.0 347.3L384.2 344.4L385.9 345.9L381.8 348.8ZM380.3 341.6L384.4 338.8L386.0 340.6L381.9 343.4ZM381.2 334.6L385.4 332.5L386.5 335.5L382.3 337.6ZM383.6 326.1L387.6 324.3L388.1 328.2L384.0 330.2Z"/>
<path fill="#37ff0d" d="M383.2 354.0L387.2 351.1L390.1 352.4L386.3 355.4ZM381.8 348.8L385.9 345.9L387.9 347.4L383.8 350.3ZM381.9 343.4L386.0 340.6L387.6 342.3L383.5 345.1ZM382.3 337.6L386.5 334.8L387.9 336.7L383.7 339.5ZM384.0 329.5L388.1 327.5L388.8 331.2L384.7 333.2ZM386.6 322.0L390.7 320.2L391.0 323.1L386.9 325.0Z"/>
<path fill="#34fe0f" d="M386.3 355.4L390.1 352.4L392.2 353.4L388.5 356.4ZM383.8 350.3L387.9 347.4L390.5 348.8L386.5 351.8ZM383.5 345.1L387.6 342.3L389.4 343.8L385.2 346.6ZM383.7 339.5L387.9 336.7L389.5 338.5L385.3 341.3ZM384.7 332.5L388.8 330.4L390.0 333.4L385.8 335.5ZM386.9 324.3L391.0 322.4L391.6 326.2L387.4 328.2ZM391.4 405.4L395.7 407.0L395.7 411.3L391.4 409.7Z"/>
<path fill="#31fe11" d="M386.5 351.8L390.5 348.8L393.3 350.1L389.4 353.1ZM385.2 346.6L389.4 343.8L391.3 345.1L387.2 348.1ZM385.3 341.3L389.5 338.5L391.1 340.1L386.9 343.0ZM385.8 335.5L390.0 332.7L391.4 334.6L387.2 337.4ZM387.4 327.5L391.6 325.5L392.3 329.1L388.1 331.2ZM390.0 320.2L394.0 318.4L394.4 321.3L390.3 323.1ZM391.4 394.3L395.7 396.0L395.7 400.3L391.4 398.7Z"/>
<path fill="#2efe12" d="M389.4 353.1L393.3 350.1L395.3 351.0L391.5 354.1ZM387.2 348.1L391.3 345.1L393.8 346.5L389.8 349.5ZM386.9 343.0L391.1 340.1L392.8 341.6L388.7 344.5ZM387.2 337.4L391.4 334.6L392.9 336.4L388.8 339.2ZM388.1 330.4L392.3 328.4L393.4 331.3L389.3 333.4ZM390.3 322.4L394.4 320.6L395.0 324.3L390.9 326.2ZM391.4 387.0L395.7 388.6L395.7 393.0L391.4 391.4Z"/>
<path fill="#2bfd14" d="M389.8 349.5L393.8 346.5L396.5 347.8L392.6 350.8ZM388.7 344.5L392.8 341.6L394.7 342.9L390.6 345.9ZM388.8 339.2L392.9 336.4L394.5 338.0L390.4 340.8ZM389.3 333.4L393.4 330.6L394.8 332.5L390.7 335.3ZM390.9 325.5L395.0 323.6L395.8 327.0L391.6 329.1ZM393.3 318.4L397.4 316.7L397.8 319.4L393.7 321.3ZM394.9 410.6L399.2 412.2L399.2 416.6L394.9 415.0Z"/>
<path fill="#28fd16" d="M392.6 350.8L396.5 347.8L398.4 348.7L394.6 351.7ZM390.6 345.9L394.7 342.9L397.1 344.3L393.1 347.2ZM390.4 340.8L394.5 338.0L396.3 339.4L392.1 342.3ZM390.7 335.3L394.8 332.5L396.4 334.3L392.2 337.1ZM391.6 328.4L395.8 326.3L396.9 329.2L392.7 331.3ZM393.7 320.6L397.8 318.7L398.4 322.3L394.3 324.3ZM397.7 349.4L400.8 346.4L405.0 347.9L401.9 351.0ZM394.9 399.6L399.2 401.2L399.2 405.6L394.9 404.0Z"/>
<path fill="#25fd18" d="M393.1 347.2L397.1 344.3L399.7 345.5L395.8 348.5ZM392.1 342.3L396.3 339.4L398.1 340.7L394.0 343.6ZM392.2 337.1L396.4 334.3L398.0 335.8L393.8 338.7ZM392.7 331.3L396.9 328.5L398.3 330.4L394.1 333.2ZM394.3 323.6L398.4 321.6L399.2 325.0L395.1 327.0ZM394.9 388.6L399.2 390.2L399.2 394.6L394.9 393.0Z"/>
<path fill="#21fc1a" d="M395.8 348.5L399.7 345.5L401.5 346.4L397.7 349.4ZM394.0 343.6L398.1 340.7L400.4 342.0L396.4 345.0ZM393.8 338.7L398.0 335.8L399.7 337.2L395.6 340.1ZM394.1 333.2L398.3 330.4L399.8 332.2L395.7 335.0ZM395.1 326.3L399.2 324.2L400.4 327.1L396.2 329.2ZM388.5 356.4L391.5 353.4L395.8 354.9L392.7 358.0ZM398.4 412.2L402.6 413.8L402.6 418.2L398.4 416.6Z"/>
<path fill="#1efc1c" d="M396.4 345.0L400.4 342.0L402.9 343.2L399.0 346.2ZM395.6 340.1L399.7 337.2L401.5 338.5L397.4 341.4ZM395.7 335.0L399.8 332.2L401.4 333.7L397.3 336.5ZM396.2 329.2L400.4 326.4L401.8 328.3L397.6 331.1ZM394.9 385.6L398.0 382.6L402.2 384.2L399.2 387.3ZM386.6 370.5L389.7 367.5L393.9 369.0L390.9 372.1ZM398.4 401.2L402.6 402.8L402.6 407.2L398.4 405.6Z"/>
<path fill="#1bfc1e" d="M399.0 346.2L402.9 343.2L404.6 344.0L400.8 347.1ZM397.4 341.4L401.5 338.5L403.7 339.8L399.7 342.7ZM397.3 336.5L401.4 333.7L403.1 335.0L399.0 337.9ZM397.6 331.1L401.8 328.3L403.2 330.0L399.1 332.9ZM413.6 341.6L416.7 338.5L420.9 340.0L417.8 343.1ZM398.4 390.2L402.6 391.8L402.6 396.1L398.4 394.6Z"/>
<path fill="#18fb20" d="M399.7 342.7L403.7 339.8L406.0 340.9L402.2 343.9ZM399.0 337.9L403.1 335.0L404.9 336.3L400.8 339.2ZM399.1 332.9L403.2 330.0L404.9 331.6L400.7 334.4ZM386.2 366.6L389.3 363.5L393.5 365.1L390.4 368.2ZM401.8 406.5L406.0 408.0L406.0 412.4L401.8 410.8Z"/>
<path fill="#15fb21" d="M402.2 343.9L406.0 340.9L407.7 341.7L403.9 344.7ZM400.8 339.2L404.9 336.3L407.0 337.5L403.0 340.5ZM400.7 334.4L404.9 331.6L406.6 332.9L402.4 335.7ZM405.2 419.0L409.4 420.6L409.4 425.0L405.2 423.4Z"/>
<path fill="#12fb23" d="M403.0 340.5L407.0 337.5L409.2 338.6L405.3 341.6ZM402.4 335.7L406.6 332.9L408.4 334.0L404.2 337.0ZM401.2 351.0L404.3 347.9L408.5 349.4L405.4 352.5ZM405.2 393.3L409.4 394.8L409.4 399.2L405.2 397.7ZM405.2 397.0L409.4 398.5L409.4 402.9L405.2 401.4Z"/>
<path fill="#0ffa25" d="M405.3 341.6L409.2 338.6L410.8 339.4L407.0 342.4ZM404.2 337.0L408.4 334.0L410.4 335.2L406.3 338.2ZM408.6 402.2L412.9 403.7L412.9 408.1L408.6 406.6Z"/>
<path fill="#0cfa27" d="M406.3 338.2L410.4 335.2L412.4 336.3L408.5 339.3ZM408.6 391.8L411.8 388.7L416.0 390.2L412.9 393.4ZM388.9 360.3L392.0 357.3L396.2 358.8L393.1 361.9ZM392.0 358.0L395.1 354.9L399.3 356.5L396.2 359.5ZM412.1 414.8L416.4 416.4L416.4 420.8L412.1 419.2ZM412.1 418.5L416.4 420.1L416.4 424.5L412.1 422.9Z"/>
<path fill="#0afa2c" d="M408.5 339.3L412.4 336.3L413.9 337.0L410.1 340.1ZM412.1 393.4L415.3 390.2L419.5 391.8L416.4 394.9ZM397.2 375.3L400.3 372.2L404.5 373.8L401.4 376.9ZM407.7 380.1L410.8 377.0L414.9 378.5L411.8 381.6ZM389.7 368.2L392.8 365.1L397.0 366.7L393.9 369.7ZM415.6 423.8L419.9 425.4L419.9 429.8L415.6 428.2Z"/>
<path fill="#f1f613" d="M366.8 372.8L369.9 369.7L374.1 371.3L371.1 374.4Z"/>
<path fill="#b4fd0c" d="M373.8 376.0L376.9 372.9L381.1 374.5L378.1 377.6ZM377.3 380.5L381.6 382.2L381.6 386.5L377.3 384.9Z"/>
<path fill="#96ff0a" d="M377.3 377.6L380.4 374.5L384.7 376.1L381.6 379.2Z"/>
<path fill="#72ff0a" d="M380.9 379.2L384.0 376.1L388.2 377.7L385.1 380.8Z"/>
<path fill="#49ff0a" d="M384.4 380.8L387.5 377.7L391.7 379.4L388.7 382.4ZM387.9 396.4L392.2 398.0L392.2 402.4L387.9 400.8Z"/>
<path fill="#2ffe12" d="M387.9 382.4L391.0 379.4L395.2 381.0L392.2 384.0ZM383.1 368.9L386.2 365.9L390.4 367.5L387.3 370.5ZM407.0 342.4L410.1 339.4L414.3 340.9L411.2 343.9ZM391.4 390.7L395.7 392.3L395.7 396.7L391.4 395.0Z"/>
<path fill="#26fd17" d="M391.4 384.0L394.5 381.0L398.7 382.6L395.7 385.6ZM394.6 351.8L397.7 348.7L401.9 350.3L398.8 353.3ZM394.9 392.3L399.2 393.9L399.2 398.3L394.9 396.7Z"/>
<path fill="#17fb20" d="M398.4 387.3L401.5 384.2L405.6 385.7L402.6 388.8ZM385.8 362.7L388.9 359.6L393.1 361.2L390.0 364.2ZM407.4 346.3L410.5 343.2L414.7 344.7L411.6 347.8ZM401.8 399.1L406.0 400.7L406.0 405.0L401.8 403.5ZM401.8 402.8L406.0 404.3L406.0 408.7L401.8 407.2Z"/>
<path fill="#14fb22" d="M401.8 388.8L404.9 385.7L409.1 387.3L406.0 390.4ZM394.1 377.7L397.2 374.6L401.4 376.2L398.3 379.3ZM405.2 408.0L409.4 409.5L409.4 413.9L405.2 412.4ZM405.2 411.7L409.4 413.2L409.4 417.6L405.2 416.1Z"/>
<path fill="#11fb24" d="M405.2 390.4L408.4 387.3L412.5 388.7L409.4 391.8ZM401.5 384.9L404.6 381.8L408.7 383.3L405.6 386.4ZM390.2 372.1L393.2 369.0L397.5 370.6L394.4 373.7ZM405.2 389.7L409.4 391.1L409.4 395.5L405.2 394.0ZM408.6 420.6L412.9 422.2L412.9 426.6L408.6 425.0Z"/>
<path fill="#0af936" d="M415.6 394.9L418.8 391.8L423.0 393.3L419.9 396.4ZM393.2 369.7L396.3 366.7L400.6 368.3L397.5 371.3ZM419.1 425.4L423.5 427.0L423.5 431.4L419.1 429.8Z"/>
<path fill="#0af64d" d="M419.1 396.4L422.3 393.3L426.6 394.8L423.5 397.9ZM402.1 358.7L405.2 355.7L409.4 357.2L406.3 360.3ZM416.2 365.0L419.3 361.9L423.5 363.4L420.4 366.5ZM418.9 358.7L422.0 355.6L426.2 357.1L423.1 360.2Z"/>
<path fill="#0af464" d="M422.8 397.9L425.9 394.8L430.2 396.4L427.1 399.5ZM426.4 428.7L430.8 430.3L430.8 434.8L426.4 433.1Z"/>
<path fill="#0af27c" d="M426.4 399.5L429.5 396.4L433.9 398.0L430.8 401.1ZM430.8 378.9L433.9 375.7L438.1 377.3L435.0 380.4Z"/>
<path fill="#0defa5" d="M430.0 401.1L433.2 398.0L437.5 399.5L434.4 402.7Z"/>
<path fill="#11edcb" d="M433.7 402.7L436.8 399.5L441.1 401.1L438.0 404.2Z"/>
<path fill="#14eaec" d="M437.3 404.2L440.4 401.1L444.8 402.7L441.7 405.8ZM441.4 383.4L444.5 380.3L448.9 381.9L445.8 385.0ZM440.9 431.5L445.3 433.2L445.3 437.7L440.9 436.0ZM440.9 435.3L445.3 437.0L445.3 441.5L440.9 439.8Z"/>
<path fill="#15e7ef" d="M440.9 405.8L444.1 402.7L448.4 404.2L445.3 407.4ZM440.4 401.8L443.5 398.7L447.9 400.2L444.8 403.4ZM443.5 399.4L446.7 396.3L451.0 397.8L447.9 400.9ZM443.0 395.4L446.1 392.3L450.5 393.8L447.4 397.0ZM442.5 391.4L445.6 388.3L449.9 389.8L446.8 393.0ZM445.6 389.0L448.7 385.9L453.0 387.4L449.9 390.5ZM445.1 385.0L448.2 381.9L452.5 383.4L449.4 386.6ZM448.2 382.6L451.3 379.5L455.6 381.0L452.5 384.1ZM451.3 380.2L454.4 377.0L458.7 378.6L455.6 381.7ZM454.4 377.7L457.5 374.6L461.8 376.2L458.7 379.3ZM457.5 375.3L460.6 372.2L464.9 373.8L461.8 376.9ZM460.6 372.9L463.7 369.8L468.1 371.3L464.9 374.5ZM463.7 370.5L466.8 367.4L471.2 368.9L468.1 372.0ZM466.8 368.1L469.9 364.9L474.3 366.5L471.2 369.6ZM469.9 365.6L473.0 362.5L477.4 364.1L474.3 367.2ZM440.9 405.1L445.3 406.7L445.3 411.2L440.9 409.6ZM440.9 408.9L445.3 410.5L445.3 414.9L440.9 413.3ZM440.9 412.6L445.3 414.2L445.3 418.7L440.9 417.1ZM444.6 418.0L449.0 419.7L449.0 424.2L444.6 422.5ZM444.6 421.8L449.0 423.5L449.0 427.9L444.6 426.3ZM444.6 425.6L449.0 427.2L449.0 431.7L444.6 430.1ZM444.6 429.4L449.0 431.0L449.0 435.5L444.6 433.9ZM444.6 433.2L449.0 434.8L449.0 439.3L444.6 437.7ZM444.6 437.0L449.0 438.6L449.0 443.1L444.6 441.5Z"/>
<path fill="#15e6f0" d="M444.6 407.4L447.7 404.2L452.1 405.8L449.0 409.0ZM444.1 403.4L447.2 400.2L451.5 401.8L448.4 404.9ZM447.2 400.9L450.3 397.8L454.7 399.4L451.5 402.5ZM446.7 397.0L449.8 393.8L454.1 395.4L451.0 398.5ZM446.1 393.0L449.2 389.8L453.6 391.4L450.5 394.5ZM449.2 390.5L452.3 387.4L456.7 389.0L453.6 392.1ZM448.7 386.6L451.8 383.4L456.2 385.0L453.0 388.1ZM451.8 384.1L454.9 381.0L459.3 382.6L456.2 385.7ZM454.9 381.7L458.0 378.6L462.4 380.2L459.3 383.3ZM458.0 379.3L461.1 376.2L465.5 377.7L462.4 380.9ZM461.1 376.9L464.2 373.8L468.6 375.3L465.5 378.4ZM464.2 374.5L467.4 371.3L471.7 372.9L468.6 376.0ZM467.4 372.0L470.5 368.9L474.8 370.5L471.7 373.6ZM470.5 369.6L473.6 366.5L477.9 368.1L474.8 371.2ZM473.6 367.2L476.7 364.1L481.0 365.6L477.9 368.8ZM444.6 406.7L449.0 408.3L449.0 412.8L444.6 411.2ZM444.6 410.5L449.0 412.1L449.0 416.6L444.6 414.9ZM444.6 414.2L449.0 415.9L449.0 420.4L444.6 418.7ZM448.3 415.9L452.7 417.5L452.7 422.0L448.3 420.4ZM448.3 419.7L452.7 421.3L452.7 425.8L448.3 424.2ZM448.3 423.5L452.7 425.1L452.7 429.6L448.3 427.9ZM448.3 427.2L452.7 428.9L452.7 433.4L448.3 431.7ZM448.3 431.0L452.7 432.7L452.7 437.2L448.3 435.5ZM448.3 434.8L452.7 436.5L452.7 441.0L448.3 439.3ZM448.3 438.6L452.7 440.3L452.7 444.8L448.3 443.1Z"/>
<path fill="#15e5f1" d="M448.3 409.0L451.4 405.8L455.8 407.4L452.7 410.5ZM447.7 404.9L450.8 401.8L455.2 403.4L452.1 406.5ZM450.8 402.5L454.0 399.4L458.3 401.0L455.2 404.1ZM450.3 398.5L453.4 395.4L457.8 397.0L454.7 400.1ZM449.8 394.5L452.9 391.4L457.2 393.0L454.1 396.1ZM452.9 392.1L456.0 389.0L460.3 390.5L457.2 393.7ZM452.3 388.1L455.5 385.0L459.8 386.6L456.7 389.7ZM455.5 385.7L458.6 382.6L462.9 384.1L459.8 387.3ZM458.6 383.3L461.7 380.2L466.0 381.7L462.9 384.8ZM461.7 380.9L464.8 377.7L469.1 379.3L466.0 382.4ZM464.8 378.4L467.9 375.3L472.2 376.9L469.1 380.0ZM467.9 376.0L471.0 372.9L475.4 374.4L472.2 377.6ZM471.0 373.6L474.1 370.5L478.5 372.0L475.4 375.1ZM474.1 371.2L477.2 368.1L481.6 369.6L478.5 372.7ZM477.2 368.8L480.3 365.6L484.7 367.2L481.6 370.3ZM448.3 408.3L452.7 409.8L452.7 414.3L448.3 412.8ZM448.3 412.1L452.7 413.6L452.7 418.2L448.3 416.6ZM451.9 417.5L456.4 419.1L456.4 423.6L451.9 422.0ZM451.9 421.3L456.4 422.9L456.4 427.5L451.9 425.8ZM451.9 425.1L456.4 426.8L456.4 431.3L451.9 429.6ZM451.9 428.9L456.4 430.6L456.4 435.1L451.9 433.4ZM451.9 432.7L456.4 434.4L456.4 438.9L451.9 437.2ZM451.9 436.5L456.4 438.2L456.4 442.7L451.9 441.0ZM451.9 440.3L456.4 442.0L456.4 446.6L451.9 444.8Z"/>
<path fill="#15e4f2" d="M451.9 410.5L455.1 407.4L459.5 409.1L456.4 412.2ZM451.4 406.5L454.5 403.4L458.9 405.0L455.8 408.1ZM454.5 404.1L457.6 401.0L462.0 402.6L458.9 405.7ZM454.0 400.1L457.1 397.0L461.4 398.6L458.3 401.7ZM453.4 396.1L456.5 393.0L460.9 394.6L457.8 397.7ZM456.5 393.7L459.6 390.5L464.0 392.1L460.9 395.3ZM456.0 389.7L459.1 386.6L463.4 388.1L460.3 391.2ZM459.1 387.3L462.2 384.1L466.6 385.7L463.4 388.8ZM462.2 384.8L465.3 381.7L469.7 383.3L466.6 386.4ZM465.3 382.4L468.4 379.3L472.8 380.9L469.7 384.0ZM468.4 380.0L471.5 376.9L475.9 378.4L472.8 381.6ZM471.5 377.6L474.7 374.4L479.0 376.0L475.9 379.1ZM474.7 375.1L477.8 372.0L482.1 373.6L479.0 376.7ZM477.8 372.7L480.9 369.6L485.2 371.2L482.1 374.3ZM480.9 370.3L484.0 367.2L488.3 368.7L485.2 371.9ZM451.9 409.8L456.4 411.5L456.4 416.0L451.9 414.3ZM451.9 413.6L456.4 415.3L456.4 419.8L451.9 418.2ZM455.7 419.1L460.2 420.8L460.2 425.3L455.7 423.6ZM455.7 422.9L460.2 424.6L460.2 429.2L455.7 427.5ZM455.7 426.8L460.2 428.5L460.2 433.0L455.7 431.3ZM455.7 430.6L460.2 432.3L460.2 436.8L455.7 435.1ZM455.7 434.4L460.2 436.1L460.2 440.6L455.7 438.9ZM455.7 438.2L460.2 439.9L460.2 444.5L455.7 442.7ZM455.7 442.0L460.2 443.8L460.2 448.3L455.7 446.6Z"/>
<path fill="#16e3f3" d="M455.7 412.2L458.8 409.1L463.3 410.7L460.2 413.8ZM455.1 408.1L458.2 405.0L462.7 406.6L459.5 409.8ZM458.2 405.7L461.3 402.6L465.8 404.2L462.7 407.3ZM457.6 401.7L460.7 398.6L465.1 400.1L462.0 403.3ZM457.1 397.7L460.2 394.6L464.6 396.1L461.4 399.3ZM460.2 395.3L463.3 392.1L467.7 393.7L464.6 396.8ZM459.6 391.2L462.7 388.1L467.1 389.7L464.0 392.8ZM462.7 388.8L465.9 385.7L470.2 387.3L467.1 390.4ZM465.9 386.4L469.0 383.3L473.3 384.9L470.2 388.0ZM469.0 384.0L472.1 380.9L476.5 382.4L473.3 385.6ZM472.1 381.6L475.2 378.4L479.6 380.0L476.5 383.1ZM475.2 379.1L478.3 376.0L482.7 377.6L479.6 380.7ZM478.3 376.7L481.4 373.6L485.8 375.2L482.7 378.3ZM481.4 374.3L484.5 371.2L488.9 372.7L485.8 375.9ZM484.5 371.9L487.6 368.7L492.0 370.3L488.9 373.4ZM455.7 411.5L460.2 413.1L460.2 417.7L455.7 416.0ZM455.7 415.3L460.2 417.0L460.2 421.5L455.7 419.8ZM459.5 420.8L464.0 422.5L464.0 427.0L459.5 425.3ZM459.5 424.6L464.0 426.3L464.0 430.8L459.5 429.2ZM459.5 428.5L464.0 430.1L464.0 434.7L459.5 433.0ZM459.5 432.3L464.0 434.0L464.0 438.5L459.5 436.8ZM459.5 436.1L464.0 437.8L464.0 442.3L459.5 440.6ZM459.5 439.9L464.0 441.6L464.0 446.2L459.5 444.5ZM459.5 443.8L464.0 445.5L464.0 450.0L459.5 448.3Z"/>
<path fill="#16e2f4" d="M459.5 413.8L462.6 410.7L467.1 412.4L464.0 415.5ZM458.8 409.8L462.0 406.6L466.4 408.3L463.3 411.4ZM462.0 407.3L465.1 404.2L469.5 405.8L466.4 409.0ZM461.3 403.3L464.4 400.1L468.9 401.8L465.8 404.9ZM460.7 399.3L463.9 396.1L468.2 397.7L465.1 400.8ZM463.9 396.8L467.0 393.7L471.4 395.3L468.2 398.4ZM463.3 392.8L466.4 389.7L470.8 391.3L467.7 394.4ZM466.4 390.4L469.5 387.3L473.9 388.9L470.8 392.0ZM469.5 388.0L472.6 384.9L477.0 386.4L473.9 389.6ZM472.6 385.6L475.8 382.4L480.1 384.0L477.0 387.1ZM475.8 383.1L478.9 380.0L483.3 381.6L480.1 384.7ZM478.9 380.7L482.0 377.6L486.4 379.1L483.3 382.3ZM482.0 378.3L485.1 375.2L489.5 376.7L486.4 379.8ZM485.1 375.9L488.2 372.7L492.6 374.3L489.5 377.4ZM488.2 373.4L491.3 370.3L495.7 371.9L492.6 375.0ZM459.5 413.1L464.0 414.8L464.0 419.3L459.5 417.7ZM459.5 417.0L464.0 418.6L464.0 423.2L459.5 421.5ZM463.2 426.3L467.8 428.0L467.8 432.5L463.2 430.8ZM463.2 430.1L467.8 431.8L467.8 436.4L463.2 434.7ZM463.2 434.0L467.8 435.7L467.8 440.2L463.2 438.5ZM463.2 437.8L467.8 439.5L467.8 444.1L463.2 442.3ZM463.2 441.6L467.8 443.4L467.8 447.9L463.2 446.2ZM463.2 445.5L467.8 447.2L467.8 451.8L463.2 450.0Z"/>
<path fill="#16e1f5" d="M463.2 415.5L466.4 412.4L470.9 414.0L467.8 417.2ZM462.6 411.4L465.7 408.3L470.2 409.9L467.1 413.1ZM465.1 404.9L468.2 401.8L472.7 403.4L469.5 406.5ZM464.4 400.8L467.5 397.7L472.0 399.3L468.9 402.5ZM467.0 394.4L470.1 391.3L474.5 392.9L471.4 396.0ZM470.1 392.0L473.2 388.9L477.6 390.4L474.5 393.6ZM473.2 389.6L476.3 386.4L480.7 388.0L477.6 391.1ZM476.3 387.1L479.4 384.0L483.8 385.6L480.7 388.7ZM479.4 384.7L482.6 381.6L486.9 383.1L483.8 386.3ZM482.6 382.3L485.7 379.1L490.1 380.7L486.9 383.8ZM485.7 379.8L488.8 376.7L493.2 378.3L490.1 381.4ZM488.8 377.4L491.9 374.3L496.3 375.9L493.2 379.0ZM491.9 375.0L495.0 371.9L499.4 373.4L496.3 376.6ZM463.2 414.8L467.8 416.5L467.8 421.0L463.2 419.3ZM463.2 418.6L467.8 420.3L467.8 424.9L463.2 423.2ZM463.2 422.5L467.8 424.2L467.8 428.7L463.2 427.0ZM467.1 443.4L471.6 445.1L471.6 449.6L467.1 447.9ZM467.1 447.2L471.6 448.9L471.6 453.5L467.1 451.8Z"/>
<path fill="#18b8f5" d="M467.1 417.2L470.2 414.0L474.7 415.7L471.6 418.8ZM470.8 448.9L475.4 450.7L475.4 455.2L470.8 453.5Z"/>
<path fill="#157cf3" d="M470.8 418.8L474.0 415.7L478.5 417.4L475.4 420.5Z"/>
<path fill="#136bf2" d="M474.6 420.5L477.8 417.4L482.4 419.1L479.3 422.2ZM476.4 409.9L479.5 406.7L484.0 408.4L480.9 411.5ZM478.6 452.5L483.2 454.3L483.2 458.9L478.6 457.0Z"/>
<path fill="#1266f2" d="M478.6 422.2L481.7 419.1L486.3 420.8L483.2 424.0ZM480.2 411.5L483.3 408.4L487.8 410.0L484.7 413.2ZM482.5 454.3L487.2 456.1L487.2 460.7L482.5 458.9Z"/>
<path fill="#105df3" d="M482.5 424.0L485.6 420.8L490.3 422.6L487.2 425.7ZM484.0 413.2L487.1 410.0L491.8 411.8L488.7 414.9ZM486.4 456.1L491.0 457.8L491.0 462.4L486.4 460.7Z"/>
<path fill="#0e52f4" d="M486.4 425.7L489.6 422.6L494.1 424.2L491.0 427.4ZM488.0 414.9L491.1 411.8L495.7 413.5L492.6 416.6ZM490.3 457.8L494.9 459.6L494.9 464.2L490.3 462.4Z"/>
<path fill="#0421fb" d="M490.3 427.4L493.4 424.2L498.0 425.9L494.9 429.1ZM494.2 459.6L498.8 461.4L498.8 466.0L494.2 464.2Z"/>
<path fill="#0000ff" d="M494.2 429.1L497.3 425.9L501.9 427.6L498.8 430.8ZM498.0 430.8L501.2 427.6L506.1 429.5L502.9 432.7ZM502.2 432.7L505.4 429.5L510.3 431.3L507.2 434.5ZM506.4 434.5L509.6 431.3L514.5 433.2L511.4 436.4ZM510.6 436.4L513.8 433.2L518.6 435.0L515.5 438.2ZM514.8 438.2L517.9 435.0L522.7 436.8L519.5 440.0ZM518.8 440.0L522.0 436.8L526.8 438.6L523.6 441.8ZM522.9 441.8L526.1 438.6L531.3 440.6L528.1 443.8ZM527.4 443.8L530.6 440.6L535.7 442.6L532.6 445.8ZM531.9 445.8L535.0 442.6L540.2 444.6L537.1 447.8ZM536.4 447.8L539.5 444.6L544.6 446.5L541.4 449.8ZM540.7 449.8L543.9 446.5L548.9 448.5L545.8 451.7ZM545.1 451.7L548.2 448.5L553.3 450.4L550.1 453.7ZM549.4 453.7L552.6 450.4L557.8 452.2L554.6 455.4ZM553.9 455.4L557.1 452.2L562.3 454.0L559.1 457.2ZM558.4 457.2L561.6 454.0L566.8 455.8L563.6 459.0ZM562.9 459.0L566.1 455.8L570.5 457.3L567.4 460.5ZM566.6 460.5L569.8 457.3L574.2 458.8L571.0 462.0ZM570.3 462.0L573.5 458.8L577.9 460.3L574.8 463.5ZM497.3 426.6L500.4 423.5L505.0 425.2L501.9 428.3ZM501.2 428.3L504.3 425.2L509.2 427.0L506.1 430.2ZM505.4 430.2L508.5 427.0L513.4 428.9L510.3 432.0ZM509.6 432.0L512.7 428.9L517.6 430.7L514.5 433.9ZM513.8 433.9L516.9 430.7L521.7 432.5L518.6 435.7ZM517.9 435.7L521.0 432.5L525.8 434.3L522.7 437.5ZM522.0 437.5L525.1 434.3L529.9 436.2L526.8 439.3ZM526.1 439.3L529.2 436.2L534.4 438.1L531.3 441.3ZM530.6 441.3L533.7 438.1L538.9 440.1L535.7 443.3ZM535.0 443.3L538.2 440.1L543.3 442.1L540.2 445.3ZM539.5 445.3L542.6 442.1L547.7 444.0L544.6 447.2ZM543.9 447.2L547.0 444.0L552.1 446.0L548.9 449.2ZM548.2 449.2L551.4 446.0L556.5 447.9L553.3 451.1ZM552.6 451.1L555.8 447.9L561.0 449.7L557.8 452.9ZM557.1 452.9L560.3 449.7L565.5 451.5L562.3 454.7ZM561.6 454.7L564.8 451.5L570.0 453.3L566.8 456.5ZM566.1 456.5L569.3 453.3L573.7 454.8L570.5 458.0ZM569.8 458.0L573.0 454.8L577.4 456.3L574.2 459.5ZM573.5 459.5L576.7 456.3L581.1 457.8L577.9 461.0ZM496.6 422.5L499.7 419.3L504.3 421.0L501.1 424.2ZM500.4 424.2L503.6 421.0L508.1 422.7L505.0 425.9ZM504.3 425.9L507.4 422.7L512.4 424.6L509.2 427.7ZM508.5 427.7L511.7 424.6L516.6 426.4L513.4 429.6ZM512.7 429.6L515.9 426.4L520.8 428.2L517.6 431.4ZM516.9 431.4L520.1 428.2L524.9 430.0L521.7 433.2ZM521.0 433.2L524.2 430.0L529.0 431.9L525.8 435.0ZM525.1 435.0L528.3 431.9L533.1 433.7L529.9 436.9ZM529.2 436.9L532.4 433.7L537.5 435.6L534.4 438.8ZM533.7 438.8L536.8 435.6L542.0 437.6L538.9 440.8ZM538.2 440.8L541.3 437.6L546.5 439.6L543.3 442.8ZM542.6 442.8L545.8 439.6L550.9 441.5L547.7 444.7ZM547.0 444.7L550.2 441.5L555.2 443.5L552.1 446.7ZM551.4 446.7L554.5 443.5L559.6 445.4L556.5 448.6ZM555.8 448.6L558.9 445.4L564.1 447.2L561.0 450.4ZM560.3 450.4L563.4 447.2L568.6 449.0L565.5 452.2ZM564.8 452.2L567.9 449.0L573.1 450.8L570.0 454.0ZM569.3 454.0L572.4 450.8L576.8 452.3L573.7 455.5ZM573.0 455.5L576.1 452.3L580.5 453.8L577.4 457.0ZM576.7 457.0L579.8 453.8L584.2 455.3L581.1 458.5ZM495.8 418.3L499.0 415.2L503.5 416.9L500.4 420.0ZM499.7 420.0L502.8 416.9L507.4 418.6L504.3 421.7ZM503.6 421.7L506.7 418.6L511.3 420.3L508.1 423.4ZM507.4 423.4L510.6 420.3L515.5 422.1L512.4 425.3ZM511.7 425.3L514.8 422.1L519.7 423.9L516.6 427.1ZM515.9 427.1L519.0 423.9L523.9 425.8L520.8 428.9ZM520.1 428.9L523.2 425.8L528.0 427.6L524.9 430.7ZM524.2 430.7L527.3 427.6L532.1 429.4L529.0 432.6ZM528.3 432.6L531.4 429.4L536.2 431.2L533.1 434.4ZM532.4 434.4L535.5 431.2L540.7 433.1L537.5 436.3ZM536.8 436.3L540.0 433.1L545.2 435.1L542.0 438.3ZM541.3 438.3L544.5 435.1L549.6 437.1L546.5 440.3ZM545.8 440.3L548.9 437.1L554.0 439.0L550.9 442.2ZM550.2 442.2L553.3 439.0L558.4 440.9L555.2 444.2ZM554.5 444.2L557.7 440.9L562.8 442.9L559.6 446.1ZM558.9 446.1L562.1 442.9L567.3 444.7L564.1 447.9ZM563.4 447.9L566.6 444.7L571.8 446.5L568.6 449.7ZM567.9 449.7L571.1 446.5L576.3 448.3L573.1 451.5ZM572.4 451.5L575.6 448.3L580.0 449.9L576.8 453.0ZM576.1 453.0L579.3 449.9L583.7 451.4L580.5 454.5ZM579.8 454.5L583.0 451.4L587.4 452.9L584.2 456.0ZM499.0 415.9L502.1 412.7L506.7 414.4L503.5 417.6ZM502.8 417.6L506.0 414.4L510.5 416.1L507.4 419.3ZM506.7 419.3L509.8 416.1L514.4 417.8L511.3 421.0ZM510.6 421.0L513.7 417.8L518.6 419.6L515.5 422.8ZM514.8 422.8L517.9 419.6L522.8 421.4L519.7 424.6ZM519.0 424.6L522.1 421.4L527.0 423.3L523.9 426.5ZM523.2 426.5L526.3 423.3L531.1 425.1L528.0 428.3ZM527.3 428.3L530.4 425.1L535.3 426.9L532.1 430.1ZM531.4 430.1L534.6 426.9L539.4 428.7L536.2 431.9ZM535.5 431.9L538.7 428.7L543.8 430.7L540.7 433.8ZM540.0 433.8L543.1 430.7L548.3 432.6L545.2 435.8ZM544.5 435.8L547.6 432.6L552.8 434.6L549.6 437.8ZM548.9 437.8L552.1 434.6L557.2 436.5L554.0 439.7ZM553.3 439.7L556.5 436.5L561.5 438.4L558.4 441.6ZM557.7 441.6L560.8 438.4L565.9 440.3L562.8 443.6ZM562.1 443.6L565.2 440.3L570.4 442.2L567.3 445.4ZM566.6 445.4L569.7 442.2L574.9 444.0L571.8 447.2ZM571.1 447.2L574.2 444.0L579.4 445.9L576.3 449.0ZM575.6 449.0L578.7 445.9L583.1 447.4L580.0 450.6ZM579.3 450.6L582.4 447.4L586.8 448.9L583.7 452.1ZM583.0 452.1L586.1 448.9L590.5 450.4L587.4 453.6ZM498.2 411.7L501.3 408.6L505.9 410.3L502.8 413.4ZM502.1 413.4L505.2 410.3L509.8 412.0L506.7 415.1ZM506.0 415.1L509.1 412.0L513.7 413.6L510.5 416.8ZM509.8 416.8L513.0 413.6L517.5 415.3L514.4 418.5ZM513.7 418.5L516.8 415.3L521.8 417.2L518.6 420.3ZM517.9 420.3L521.1 417.2L526.0 419.0L522.8 422.1ZM522.1 422.1L525.3 419.0L530.2 420.8L527.0 424.0ZM526.3 424.0L529.5 420.8L534.3 422.6L531.1 425.8ZM530.4 425.8L533.6 422.6L538.4 424.4L535.3 427.6ZM534.6 427.6L537.7 424.4L542.5 426.2L539.4 429.4ZM538.7 429.4L541.8 426.2L547.0 428.2L543.8 431.4ZM543.1 431.4L546.3 428.2L551.5 430.1L548.3 433.3ZM547.6 433.3L550.8 430.1L555.9 432.1L552.8 435.3ZM552.1 435.3L555.2 432.1L560.3 434.0L557.2 437.2ZM556.5 437.2L559.6 434.0L564.7 435.9L561.5 439.1ZM560.8 439.1L564.0 435.9L569.1 437.8L565.9 441.0ZM565.2 441.0L568.4 437.8L573.6 439.7L570.4 442.9ZM569.7 442.9L572.9 439.7L578.1 441.5L574.9 444.7ZM574.2 444.7L577.4 441.5L582.6 443.4L579.4 446.6ZM578.7 446.6L581.9 443.4L586.3 444.9L583.1 448.1ZM582.4 448.1L585.6 444.9L590.0 446.4L586.8 449.6ZM586.1 449.6L589.3 446.4L593.7 447.9L590.5 451.1ZM501.3 409.3L504.4 406.1L509.1 407.8L505.9 411.0ZM505.2 411.0L508.4 407.8L512.9 409.5L509.8 412.7ZM509.1 412.7L512.2 409.5L516.8 411.2L513.7 414.3ZM513.0 414.3L516.1 411.2L520.7 412.9L517.5 416.0ZM516.8 416.0L520.0 412.9L524.9 414.7L521.8 417.9ZM521.1 417.9L524.2 414.7L529.1 416.5L526.0 419.7ZM525.3 419.7L528.4 416.5L533.3 418.3L530.2 421.5ZM529.5 421.5L532.6 418.3L537.4 420.1L534.3 423.3ZM533.6 423.3L536.7 420.1L541.5 421.9L538.4 425.1ZM537.7 425.1L540.8 421.9L545.6 423.7L542.5 426.9ZM541.8 426.9L544.9 423.7L550.1 425.7L547.0 428.9ZM546.3 428.9L549.4 425.7L554.6 427.6L551.5 430.8ZM550.8 430.8L553.9 427.6L559.1 429.6L555.9 432.8ZM555.2 432.8L558.4 429.6L563.5 431.5L560.3 434.7ZM559.6 434.7L562.8 431.5L567.8 433.4L564.7 436.6ZM564.0 436.6L567.1 433.4L572.2 435.3L569.1 438.5ZM568.4 438.5L571.5 435.3L576.7 437.2L573.6 440.4ZM572.9 440.4L576.0 437.2L581.2 439.0L578.1 442.2ZM577.4 442.2L580.5 439.0L585.7 440.9L582.6 444.1ZM581.9 444.1L585.0 440.9L589.5 442.4L586.3 445.6ZM585.6 445.6L588.8 442.4L593.2 443.9L590.0 447.1ZM589.3 447.1L592.5 443.9L596.9 445.4L593.7 448.6ZM504.4 406.8L507.5 403.7L512.2 405.4L509.1 408.5ZM508.4 408.5L511.5 405.4L516.1 407.0L512.9 410.2ZM512.2 410.2L515.4 407.0L519.9 408.7L516.8 411.9ZM516.1 411.9L519.2 408.7L523.8 410.4L520.7 413.6ZM520.0 413.6L523.1 410.4L528.0 412.2L524.9 415.4ZM524.2 415.4L527.3 412.2L532.2 414.0L529.1 417.2ZM528.4 417.2L531.5 414.0L536.5 415.9L533.3 419.0ZM532.6 419.0L535.8 415.9L540.6 417.6L537.4 420.8ZM536.7 420.8L539.9 417.6L544.7 419.4L541.5 422.6ZM540.8 422.6L544.0 419.4L548.8 421.2L545.6 424.4ZM544.9 424.4L548.1 421.2L553.3 423.2L550.1 426.4ZM549.4 426.4L552.6 423.2L557.7 425.1L554.6 428.3ZM553.9 428.3L557.0 425.1L562.2 427.1L559.1 430.3ZM558.4 430.3L561.5 427.1L566.6 429.0L563.5 432.2ZM562.8 432.2L565.9 429.0L571.0 430.9L567.8 434.1ZM567.1 434.1L570.3 430.9L575.4 432.8L572.2 436.0ZM571.5 436.0L574.7 432.8L579.9 434.6L576.7 437.9ZM576.0 437.9L579.2 434.6L584.4 436.5L581.2 439.7ZM580.5 439.7L583.7 436.5L588.9 438.4L585.7 441.6ZM585.0 441.6L588.2 438.4L592.6 439.9L589.5 443.1ZM588.8 443.1L591.9 439.9L596.3 441.4L593.2 444.6ZM592.5 444.6L595.6 441.4L600.0 443.0L596.9 446.1ZM507.5 404.4L510.7 401.2L515.3 402.9L512.2 406.1ZM511.5 406.1L514.6 402.9L519.2 404.6L516.1 407.7ZM515.4 407.7L518.5 404.6L523.1 406.3L519.9 409.4ZM519.2 409.4L522.4 406.3L526.9 407.9L523.8 411.1ZM523.1 411.1L526.2 407.9L531.2 409.8L528.0 412.9ZM527.3 412.9L530.5 409.8L535.4 411.6L532.2 414.7ZM531.5 414.7L534.7 411.6L539.6 413.4L536.5 416.6ZM535.8 416.6L538.9 413.4L543.7 415.2L540.6 418.3ZM539.9 418.3L543.0 415.2L547.8 417.0L544.7 420.1ZM544.0 420.1L547.1 417.0L551.9 418.7L548.8 421.9ZM548.1 421.9L551.2 418.7L556.4 420.7L553.3 423.9ZM552.6 423.9L555.7 420.7L560.9 422.6L557.7 425.8ZM557.0 425.8L560.2 422.6L565.4 424.6L562.2 427.8ZM561.5 427.8L564.7 424.6L569.8 426.5L566.6 429.7ZM565.9 429.7L569.1 426.5L574.1 428.4L571.0 431.6ZM570.3 431.6L573.4 428.4L578.5 430.3L575.4 433.5ZM574.7 433.5L577.8 430.3L583.0 432.1L579.9 435.3ZM579.2 435.3L582.3 432.1L587.5 434.0L584.4 437.2ZM583.7 437.2L586.8 434.0L592.1 435.9L588.9 439.1ZM588.2 439.1L591.4 435.9L595.8 437.4L592.6 440.6ZM591.9 440.6L595.1 437.4L599.5 439.0L596.3 442.1ZM595.6 442.1L598.8 439.0L603.2 440.5L600.0 443.7ZM510.7 401.9L513.8 398.8L518.4 400.5L515.3 403.6ZM514.6 403.6L517.7 400.5L522.3 402.1L519.2 405.3ZM518.5 405.3L521.6 402.1L526.2 403.8L523.1 407.0ZM522.4 407.0L525.5 403.8L530.1 405.5L526.9 408.6ZM526.2 408.6L529.4 405.5L534.3 407.3L531.2 410.5ZM530.5 410.5L533.6 407.3L538.5 409.1L535.4 412.3ZM534.7 412.3L537.8 409.1L542.7 410.9L539.6 414.1ZM538.9 414.1L542.0 410.9L546.8 412.7L543.7 415.9ZM543.0 415.9L546.1 412.7L551.0 414.5L547.8 417.7ZM547.1 417.7L550.3 414.5L555.1 416.2L551.9 419.4ZM551.2 419.4L554.4 416.2L559.6 418.2L556.4 421.4ZM555.7 421.4L558.9 418.2L564.0 420.1L560.9 423.3ZM560.2 423.3L563.3 420.1L568.5 422.1L565.4 425.3ZM564.7 425.3L567.8 422.1L572.9 423.9L569.8 427.2ZM569.1 427.2L572.2 423.9L577.3 425.8L574.1 429.1ZM573.4 429.1L576.6 425.8L581.7 427.7L578.5 431.0ZM577.8 431.0L581.0 427.7L586.2 429.6L583.0 432.8ZM582.3 432.8L585.5 429.6L590.7 431.5L587.5 434.7ZM586.8 434.7L590.0 431.5L595.2 433.4L592.1 436.6ZM591.4 436.6L594.5 433.4L598.9 434.9L595.8 438.1ZM595.1 438.1L598.2 434.9L602.6 436.5L599.5 439.7ZM598.8 439.7L601.9 436.5L606.4 438.0L603.2 441.2ZM513.8 399.5L516.9 396.3L521.6 398.0L518.4 401.2ZM517.7 401.2L520.9 398.0L525.5 399.7L522.3 402.8ZM521.6 402.8L524.8 399.7L529.3 401.3L526.2 404.5ZM525.5 404.5L528.6 401.3L533.2 403.0L530.1 406.2ZM529.4 406.2L532.5 403.0L537.4 404.8L534.3 408.0ZM533.6 408.0L536.7 404.8L541.6 406.6L538.5 409.8ZM537.8 409.8L540.9 406.6L545.9 408.4L542.7 411.6ZM542.0 411.6L545.2 408.4L550.0 410.2L546.8 413.4ZM546.1 413.4L549.3 410.2L554.1 412.0L551.0 415.2ZM550.3 415.2L553.4 412.0L558.2 413.8L555.1 416.9ZM554.4 416.9L557.5 413.8L562.7 415.7L559.6 418.9ZM558.9 418.9L562.0 415.7L567.2 417.6L564.0 420.8ZM563.3 420.8L566.5 417.6L571.7 419.6L568.5 422.8ZM567.8 422.8L571.0 419.6L576.0 421.4L572.9 424.6ZM572.2 424.6L575.3 421.4L580.4 423.3L577.3 426.5ZM576.6 426.5L579.7 423.3L584.8 425.2L581.7 428.4ZM581.0 428.4L584.1 425.2L589.3 427.1L586.2 430.3ZM585.5 430.3L588.6 427.1L593.8 429.0L590.7 432.2ZM590.0 432.2L593.1 429.0L598.4 430.9L595.2 434.1ZM594.5 434.1L597.7 430.9L602.1 432.4L598.9 435.6ZM598.2 435.6L601.4 432.4L605.8 434.0L602.6 437.2ZM601.9 437.2L605.1 434.0L609.5 435.5L606.4 438.7ZM516.9 397.0L520.0 393.9L524.7 395.6L521.6 398.7ZM520.9 398.7L524.0 395.6L528.6 397.2L525.5 400.4ZM524.8 400.4L527.9 397.2L532.5 398.9L529.3 402.0ZM528.6 402.0L531.8 398.9L536.3 400.5L533.2 403.7ZM532.5 403.7L535.6 400.5L540.6 402.3L537.4 405.5ZM536.7 405.5L539.9 402.3L544.8 404.2L541.6 407.3ZM540.9 407.3L544.1 404.2L549.0 406.0L545.9 409.1ZM545.2 409.1L548.3 406.0L553.1 407.7L550.0 410.9ZM549.3 410.9L552.4 407.7L557.2 409.5L554.1 412.7ZM553.4 412.7L556.5 409.5L561.4 411.3L558.2 414.5ZM557.5 414.5L560.7 411.3L565.8 413.2L562.7 416.4ZM562.0 416.4L565.1 413.2L570.3 415.1L567.2 418.3ZM566.5 418.3L569.6 415.1L574.8 417.0L571.7 420.3ZM571.0 420.3L574.1 417.0L579.2 418.9L576.0 422.1ZM575.3 422.1L578.5 418.9L583.6 420.8L580.4 424.0ZM579.7 424.0L582.9 420.8L588.0 422.7L584.8 425.9ZM584.1 425.9L587.3 422.7L592.5 424.6L589.3 427.8ZM588.6 427.8L591.8 424.6L597.0 426.5L593.8 429.7ZM593.1 429.7L596.3 426.5L601.5 428.4L598.4 431.6ZM597.7 431.6L600.8 428.4L605.2 429.9L602.1 433.1ZM601.4 433.1L604.5 429.9L609.0 431.5L605.8 434.7ZM605.1 434.7L608.3 431.5L612.7 433.1L609.5 436.2ZM520.0 394.6L523.2 391.4L527.8 393.1L524.7 396.3ZM524.0 396.3L527.1 393.1L531.7 394.8L528.6 397.9ZM527.9 397.9L531.0 394.8L535.6 396.4L532.5 399.6ZM531.8 399.6L534.9 396.4L539.5 398.1L536.3 401.2ZM535.6 401.2L538.8 398.1L543.7 399.9L540.6 403.0ZM539.9 403.0L543.0 399.9L547.9 401.7L544.8 404.9ZM544.1 404.9L547.2 401.7L552.1 403.5L549.0 406.7ZM548.3 406.7L551.4 403.5L556.3 405.3L553.1 408.4ZM552.4 408.4L555.6 405.3L560.4 407.0L557.2 410.2ZM556.5 410.2L559.7 407.0L564.5 408.8L561.4 412.0ZM560.7 412.0L563.8 408.8L569.0 410.7L565.8 413.9ZM565.1 413.9L568.3 410.7L573.5 412.6L570.3 415.8ZM569.6 415.8L572.8 412.6L578.0 414.5L574.8 417.7ZM574.1 417.7L577.3 414.5L582.3 416.4L579.2 419.6ZM578.5 419.6L581.6 416.4L586.7 418.3L583.6 421.5ZM582.9 421.5L586.0 418.3L591.1 420.2L588.0 423.4ZM587.3 423.4L590.4 420.2L595.6 422.1L592.5 425.3ZM591.8 425.3L594.9 422.1L600.2 424.0L597.0 427.2ZM596.3 427.2L599.5 424.0L604.7 425.9L601.5 429.1ZM600.8 429.1L604.0 425.9L608.4 427.5L605.2 430.6ZM604.5 430.6L607.7 427.5L612.1 429.0L609.0 432.2ZM608.3 432.2L611.4 429.0L615.8 430.6L612.7 433.8ZM523.2 392.1L526.3 389.0L531.0 390.6L527.8 393.8ZM527.1 393.8L530.3 390.6L534.8 392.3L531.7 395.5ZM531.0 395.5L534.1 392.3L538.7 394.0L535.6 397.1ZM534.9 397.1L538.0 394.0L542.6 395.6L539.5 398.8ZM538.8 398.8L541.9 395.6L546.8 397.4L543.7 400.6ZM543.0 400.6L546.1 397.4L551.1 399.2L547.9 402.4ZM547.2 402.4L550.4 399.2L555.3 401.0L552.1 404.2ZM551.4 404.2L554.6 401.0L559.4 402.8L556.3 406.0ZM555.6 406.0L558.7 402.8L563.5 404.5L560.4 407.7ZM559.7 407.7L562.8 404.5L567.6 406.3L564.5 409.5ZM563.8 409.5L566.9 406.3L572.1 408.2L569.0 411.4ZM568.3 411.4L571.4 408.2L576.6 410.1L573.5 413.3ZM572.8 413.3L575.9 410.1L581.1 412.0L578.0 415.2ZM577.3 415.2L580.4 412.0L585.5 413.9L582.3 417.1ZM581.6 417.1L584.8 413.9L589.9 415.8L586.7 419.0ZM586.0 419.0L589.2 415.8L594.3 417.7L591.1 420.9ZM590.4 420.9L593.6 417.7L598.8 419.6L595.6 422.8ZM594.9 422.8L598.1 419.6L603.3 421.5L600.2 424.7ZM599.5 424.7L602.6 421.5L607.8 423.4L604.7 426.6ZM604.0 426.6L607.1 423.4L611.6 425.0L608.4 428.2ZM607.7 428.2L610.9 425.0L615.3 426.5L612.1 429.7ZM611.4 429.7L614.6 426.5L619.0 428.1L615.8 431.3ZM526.3 389.7L529.4 386.5L534.1 388.2L531.0 391.3ZM530.3 391.3L533.4 388.2L538.0 389.8L534.8 393.0ZM534.1 393.0L537.3 389.8L541.9 391.5L538.7 394.7ZM538.0 394.7L541.2 391.5L545.7 393.2L542.6 396.3ZM541.9 396.3L545.0 393.2L550.0 394.9L546.8 398.1ZM546.1 398.1L549.3 394.9L554.2 396.7L551.1 399.9ZM550.4 399.9L553.5 396.7L558.4 398.5L555.3 401.7ZM554.6 401.7L557.7 398.5L562.5 400.3L559.4 403.5ZM558.7 403.5L561.8 400.3L566.7 402.0L563.5 405.2ZM562.8 405.2L566.0 402.0L570.8 403.8L567.6 407.0ZM566.9 407.0L570.1 403.8L575.3 405.7L572.1 408.9ZM571.4 408.9L574.6 405.7L579.8 407.6L576.6 410.8ZM575.9 410.8L579.1 407.6L584.2 409.5L581.1 412.7ZM580.4 412.7L583.5 409.5L588.6 411.4L585.5 414.6ZM584.8 414.6L587.9 411.4L593.0 413.3L589.9 416.5ZM589.2 416.5L592.3 413.3L597.4 415.1L594.3 418.4ZM593.6 418.4L596.7 415.1L601.9 417.1L598.8 420.3ZM598.1 420.3L601.2 417.1L606.5 419.0L603.3 422.2ZM602.6 422.2L605.8 419.0L611.0 420.9L607.8 424.1ZM607.1 424.1L610.3 420.9L614.7 422.5L611.6 425.7ZM610.9 425.7L614.0 422.5L618.4 424.1L615.3 427.2ZM614.6 427.2L617.7 424.1L622.1 425.6L619.0 428.8ZM498.0 430.1L502.9 432.0L502.9 436.6L498.0 434.7ZM498.0 434.0L502.9 435.9L502.9 440.5L498.0 438.6ZM498.0 437.9L502.9 439.8L502.9 444.4L498.0 442.5ZM498.0 441.8L502.9 443.7L502.9 448.3L498.0 446.4ZM498.0 445.7L502.9 447.6L502.9 452.2L498.0 450.4ZM498.0 449.7L502.9 451.5L502.9 456.2L498.0 454.3ZM498.0 453.6L502.9 455.5L502.9 460.1L498.0 458.2ZM498.0 457.5L502.9 459.4L502.9 464.0L498.0 462.1ZM498.0 461.4L502.9 463.3L502.9 467.9L498.0 466.0ZM502.2 432.0L507.2 433.8L507.2 438.4L502.2 436.6ZM502.2 435.9L507.2 437.7L507.2 442.4L502.2 440.5ZM502.2 439.8L507.2 441.7L507.2 446.3L502.2 444.4ZM502.2 443.7L507.2 445.6L507.2 450.2L502.2 448.3ZM502.2 447.6L507.2 449.5L507.2 454.1L502.2 452.2ZM502.2 451.5L507.2 453.4L507.2 458.1L502.2 456.2ZM502.2 455.5L507.2 457.4L507.2 462.0L502.2 460.1ZM502.2 459.4L507.2 461.3L507.2 465.9L502.2 464.0ZM502.2 463.3L507.2 465.2L507.2 469.8L502.2 467.9ZM506.4 433.8L511.4 435.6L511.4 440.3L506.4 438.4ZM506.4 437.7L511.4 439.6L511.4 444.2L506.4 442.4ZM506.4 441.7L511.4 443.5L511.4 448.2L506.4 446.3ZM506.4 445.6L511.4 447.5L511.4 452.1L506.4 450.2ZM506.4 449.5L511.4 451.4L511.4 456.0L506.4 454.1ZM506.4 453.4L511.4 455.3L511.4 460.0L506.4 458.1ZM506.4 457.4L511.4 459.3L511.4 463.9L506.4 462.0ZM506.4 461.3L511.4 463.2L511.4 467.8L506.4 465.9ZM506.4 465.2L511.4 467.1L511.4 471.8L506.4 469.8ZM510.6 435.6L515.5 437.5L515.5 442.1L510.6 440.3ZM510.6 439.6L515.5 441.4L515.5 446.1L510.6 444.2ZM510.6 443.5L515.5 445.4L515.5 450.0L510.6 448.2ZM510.6 447.5L515.5 449.3L515.5 453.9L510.6 452.1ZM510.6 451.4L515.5 453.2L515.5 457.9L510.6 456.0ZM510.6 455.3L515.5 457.2L515.5 461.8L510.6 460.0ZM510.6 459.3L515.5 461.1L515.5 465.8L510.6 463.9ZM510.6 463.2L515.5 465.1L515.5 469.7L510.6 467.8ZM510.6 467.1L515.5 469.0L515.5 473.7L510.6 471.8ZM514.8 437.5L519.5 439.3L519.5 444.0L514.8 442.1ZM514.8 441.4L519.5 443.3L519.5 447.9L514.8 446.1ZM514.8 445.4L519.5 447.2L519.5 451.8L514.8 450.0ZM514.8 449.3L519.5 451.1L519.5 455.8L514.8 453.9ZM514.8 453.2L519.5 455.1L519.5 459.7L514.8 457.9ZM514.8 457.2L519.5 459.0L519.5 463.7L514.8 461.8ZM514.8 461.1L519.5 463.0L519.5 467.6L514.8 465.8ZM514.8 465.1L519.5 466.9L519.5 471.6L514.8 469.7ZM514.8 469.0L519.5 470.9L519.5 475.5L514.8 473.7ZM518.8 439.3L523.6 441.1L523.6 445.8L518.8 444.0ZM518.8 443.3L523.6 445.1L523.6 449.7L518.8 447.9ZM518.8 447.2L523.6 449.0L523.6 453.7L518.8 451.8ZM518.8 451.1L523.6 453.0L523.6 457.6L518.8 455.8ZM518.8 455.1L523.6 456.9L523.6 461.6L518.8 459.7ZM518.8 459.0L523.6 460.9L523.6 465.6L518.8 463.7ZM518.8 463.0L523.6 464.9L523.6 469.5L518.8 467.6ZM518.8 466.9L523.6 468.8L523.6 473.5L518.8 471.6ZM518.8 470.9L523.6 472.8L523.6 477.4L518.8 475.5ZM522.9 441.1L528.1 443.1L528.1 447.8L522.9 445.8ZM522.9 445.1L528.1 447.1L528.1 451.7L522.9 449.7ZM522.9 449.0L528.1 451.0L528.1 455.7L522.9 453.7ZM522.9 453.0L528.1 455.0L528.1 459.7L522.9 457.6ZM522.9 456.9L528.1 459.0L528.1 463.6L522.9 461.6ZM522.9 460.9L528.1 462.9L528.1 467.6L522.9 465.6ZM522.9 464.9L528.1 466.9L528.1 471.5L522.9 469.5ZM522.9 468.8L528.1 470.8L528.1 475.5L522.9 473.5ZM522.9 472.8L528.1 474.8L528.1 479.5L522.9 477.4ZM527.4 443.1L532.6 445.1L532.6 449.8L527.4 447.8ZM527.4 447.1L532.6 449.1L532.6 453.8L527.4 451.7ZM527.4 451.0L532.6 453.1L532.6 457.7L527.4 455.7ZM527.4 455.0L532.6 457.0L532.6 461.7L527.4 459.7ZM527.4 459.0L532.6 461.0L532.6 465.6L527.4 463.6ZM527.4 462.9L532.6 464.9L532.6 469.6L527.4 467.6ZM527.4 466.9L532.6 468.9L532.6 473.6L527.4 471.5ZM527.4 470.8L532.6 472.9L532.6 477.5L527.4 475.5ZM527.4 474.8L532.6 476.8L532.6 481.5L527.4 479.5ZM531.9 445.1L537.1 447.1L537.1 451.8L531.9 449.8ZM531.9 449.1L537.1 451.1L537.1 455.8L531.9 453.8ZM531.9 453.1L537.1 455.1L537.1 459.7L531.9 457.7ZM531.9 457.0L537.1 459.0L537.1 463.7L531.9 461.7ZM531.9 461.0L537.1 463.0L537.1 467.7L531.9 465.6ZM531.9 464.9L537.1 467.0L537.1 471.6L531.9 469.6ZM531.9 468.9L537.1 470.9L537.1 475.6L531.9 473.6ZM531.9 472.9L537.1 474.9L537.1 479.6L531.9 477.5ZM531.9 476.8L537.1 478.9L537.1 483.6L531.9 481.5ZM536.4 447.1L541.4 449.1L541.4 453.7L536.4 451.8ZM536.4 451.1L541.4 453.0L541.4 457.7L536.4 455.8ZM536.4 455.1L541.4 457.0L541.4 461.7L536.4 459.7ZM536.4 459.0L541.4 461.0L541.4 465.7L536.4 463.7ZM536.4 463.0L541.4 465.0L541.4 469.7L536.4 467.7ZM536.4 467.0L541.4 469.0L541.4 473.6L536.4 471.6ZM536.4 470.9L541.4 472.9L541.4 477.6L536.4 475.6ZM536.4 474.9L541.4 476.9L541.4 481.6L536.4 479.6ZM536.4 478.9L541.4 480.9L541.4 485.6L536.4 483.6ZM540.7 449.1L545.8 451.0L545.8 455.7L540.7 453.7ZM540.7 453.0L545.8 455.0L545.8 459.7L540.7 457.7ZM540.7 457.0L545.8 459.0L545.8 463.7L540.7 461.7ZM540.7 461.0L545.8 463.0L545.8 467.6L540.7 465.7ZM540.7 465.0L545.8 466.9L545.8 471.6L540.7 469.7ZM540.7 469.0L545.8 470.9L545.8 475.6L540.7 473.6ZM540.7 472.9L545.8 474.9L545.8 479.6L540.7 477.6ZM540.7 476.9L545.8 478.9L545.8 483.6L540.7 481.6ZM540.7 480.9L545.8 482.9L545.8 487.6L540.7 485.6ZM545.1 451.0L550.1 452.9L550.1 457.6L545.1 455.7ZM545.1 455.0L550.1 456.9L550.1 461.6L545.1 459.7ZM545.1 459.0L550.1 460.9L550.1 465.6L545.1 463.7ZM545.1 463.0L550.1 464.9L550.1 469.6L545.1 467.6ZM545.1 466.9L550.1 468.9L550.1 473.6L545.1 471.6ZM545.1 470.9L550.1 472.9L550.1 477.6L545.1 475.6ZM545.1 474.9L550.1 476.9L550.1 481.6L545.1 479.6ZM545.1 478.9L550.1 480.9L550.1 485.6L545.1 483.6ZM545.1 482.9L550.1 484.9L550.1 489.6L545.1 487.6ZM549.4 452.9L554.6 454.7L554.6 459.5L549.4 457.6ZM549.4 456.9L554.6 458.8L554.6 463.5L549.4 461.6ZM549.4 460.9L554.6 462.8L554.6 467.5L549.4 465.6ZM549.4 464.9L554.6 466.8L554.6 471.5L549.4 469.6ZM549.4 468.9L554.6 470.8L554.6 475.6L549.4 473.6ZM549.4 472.9L554.6 474.9L554.6 479.6L549.4 477.6ZM549.4 476.9L554.6 478.9L554.6 483.6L549.4 481.6ZM549.4 480.9L554.6 482.9L554.6 487.6L549.4 485.6ZM549.4 484.9L554.6 486.9L554.6 491.6L549.4 489.6ZM553.9 454.7L559.1 456.5L559.1 461.3L553.9 459.5ZM553.9 458.8L559.1 460.6L559.1 465.3L553.9 463.5ZM553.9 462.8L559.1 464.6L559.1 469.4L553.9 467.5ZM553.9 466.8L559.1 468.7L559.1 473.4L553.9 471.5ZM553.9 470.8L559.1 472.7L559.1 477.5L553.9 475.6ZM553.9 474.9L559.1 476.8L559.1 481.6L553.9 479.6ZM553.9 478.9L559.1 480.9L559.1 485.6L553.9 483.6ZM553.9 482.9L559.1 484.9L559.1 489.7L553.9 487.6ZM553.9 486.9L559.1 489.0L559.1 493.7L553.9 491.6ZM558.4 456.5L563.6 458.3L563.6 463.1L558.4 461.3ZM558.4 460.6L563.6 462.4L563.6 467.2L558.4 465.3ZM558.4 464.6L563.6 466.5L563.6 471.3L558.4 469.4ZM558.4 468.7L563.6 470.6L563.6 475.4L558.4 473.4ZM558.4 472.7L563.6 474.7L563.6 479.4L558.4 477.5ZM558.4 476.8L563.6 478.7L563.6 483.5L558.4 481.6ZM558.4 480.9L563.6 482.8L563.6 487.6L558.4 485.6ZM558.4 484.9L563.6 486.9L563.6 491.7L558.4 489.7ZM558.4 489.0L563.6 491.0L563.6 495.8L558.4 493.7ZM562.9 458.3L567.4 459.8L567.4 464.6L562.9 463.1ZM562.9 462.4L567.4 463.9L567.4 468.7L562.9 467.2ZM562.9 466.5L567.4 468.0L567.4 472.8L562.9 471.3ZM562.9 470.6L567.4 472.1L567.4 476.9L562.9 475.4ZM562.9 474.7L567.4 476.2L567.4 481.0L562.9 479.4ZM562.9 478.7L567.4 480.3L567.4 485.1L562.9 483.5ZM562.9 482.8L567.4 484.4L567.4 489.3L562.9 487.6ZM562.9 486.9L567.4 488.6L567.4 493.4L562.9 491.7ZM562.9 491.0L567.4 492.7L567.4 497.5L562.9 495.8ZM566.6 459.8L571.0 461.3L571.0 466.1L566.6 464.6ZM566.6 463.9L571.0 465.4L571.0 470.2L566.6 468.7ZM566.6 468.0L571.0 469.5L571.0 474.4L566.6 472.8ZM566.6 472.1L571.0 473.7L571.0 478.5L566.6 476.9ZM566.6 476.2L571.0 477.8L571.0 482.6L566.6 481.0ZM566.6 480.3L571.0 481.9L571.0 486.8L566.6 485.1ZM566.6 484.4L571.0 486.1L571.0 490.9L566.6 489.3ZM566.6 488.6L571.0 490.2L571.0 495.0L566.6 493.4ZM566.6 492.7L571.0 494.3L571.0 499.2L566.6 497.5ZM570.3 461.3L574.8 462.8L574.8 467.6L570.3 466.1ZM570.3 465.4L574.8 466.9L574.8 471.8L570.3 470.2ZM570.3 469.5L574.8 471.1L574.8 475.9L570.3 474.4ZM570.3 473.7L574.8 475.2L574.8 480.1L570.3 478.5ZM570.3 477.8L574.8 479.4L574.8 484.2L570.3 482.6ZM570.3 481.9L574.8 483.5L574.8 488.4L570.3 486.8ZM570.3 486.1L574.8 487.7L574.8 492.6L570.3 490.9ZM570.3 490.2L574.8 491.9L574.8 496.7L570.3 495.0ZM570.3 494.3L574.8 496.0L574.8 500.9L570.3 499.2ZM563.3 490.0L574.4 493.0L574.4 500.0L563.3 500.0ZM574.0 462.8L584.6 455.0L584.6 470.5L574.0 478.5ZM574.0 477.8L584.6 469.8L584.6 485.2L574.0 493.5ZM583.9 455.0L594.8 447.1L594.8 462.3L583.9 470.5ZM583.9 469.8L594.8 461.6L594.8 476.8L583.9 485.2ZM594.0 447.1L605.5 438.7L605.5 453.6L594.0 462.3ZM594.0 461.6L605.5 452.9L605.5 467.9L594.0 476.8ZM604.8 438.7L614.5 431.7L614.5 446.4L604.8 453.6ZM604.8 452.9L614.5 445.7L614.5 460.4L604.8 467.9ZM613.8 431.7L622.1 425.6L622.1 440.2L613.8 446.4ZM613.8 445.7L622.1 439.4L622.1 454.0L613.8 460.4ZM423.9 160.7L435.1 155.9L435.1 170.1L423.9 174.8ZM434.4 155.9L446.4 150.7L446.4 164.9L434.4 170.1ZM445.6 150.7L457.6 145.6L457.6 159.8L445.6 164.9ZM456.9 145.6L467.4 141.2L467.4 155.3L456.9 159.8Z"/>
<path fill="#a4ff0a" d="M373.4 372.0L376.5 369.0L380.7 370.6L377.6 373.6Z"/>
<path fill="#62ff0a" d="M380.4 375.2L383.5 372.2L387.8 373.8L384.7 376.8ZM384.4 380.1L388.7 381.7L388.7 386.1L384.4 384.5Z"/>
<path fill="#3cff0a" d="M384.0 376.8L387.1 373.8L391.3 375.4L388.2 378.4Z"/>
<path fill="#29fd16" d="M387.5 378.4L390.6 375.4L394.8 377.0L391.7 380.1ZM394.9 403.3L399.2 404.9L399.2 409.3L394.9 407.7Z"/>
<path fill="#20fc1b" d="M391.0 380.1L394.1 377.0L398.3 378.6L395.2 381.7ZM398.4 408.6L402.6 410.1L402.6 414.5L398.4 412.9Z"/>
<path fill="#19fc1f" d="M394.5 381.7L397.6 378.6L401.8 380.2L398.7 383.3ZM390.6 376.1L393.7 373.0L397.9 374.6L394.8 377.7ZM410.5 343.9L413.6 340.9L417.8 342.4L414.7 345.4ZM401.8 417.5L406.0 419.0L406.0 423.4L401.8 421.8Z"/>
<path fill="#13fb23" d="M398.0 383.3L401.1 380.2L405.3 381.8L402.2 384.9ZM405.2 400.7L409.4 402.2L409.4 406.6L405.2 405.0Z"/>
<path fill="#10fb24" d="M404.9 386.4L408.0 383.3L412.2 384.8L409.1 388.0ZM398.1 353.3L401.2 350.3L405.4 351.8L402.4 354.8ZM408.6 413.2L412.9 414.8L412.9 419.2L408.6 417.6ZM408.6 416.9L412.9 418.5L412.9 422.9L408.6 421.3Z"/>
<path fill="#0dfa26" d="M408.4 388.0L411.5 384.8L415.6 386.3L412.5 389.4ZM401.1 380.9L404.2 377.8L408.4 379.4L405.3 382.5ZM404.6 382.5L407.7 379.4L411.8 380.9L408.7 384.0ZM408.0 384.0L411.1 380.9L415.3 382.4L412.2 385.5ZM393.7 373.7L396.8 370.6L401.0 372.2L397.9 375.3ZM408.6 391.1L412.9 392.7L412.9 397.0L408.6 395.5ZM412.1 422.2L416.4 423.8L416.4 428.2L412.1 426.6Z"/>
<path fill="#0afa2b" d="M411.8 389.4L414.9 386.3L419.1 387.8L416.0 390.9Z"/>
<path fill="#0af934" d="M415.3 390.9L418.4 387.8L422.6 389.3L419.5 392.5ZM415.6 394.2L419.9 395.7L419.9 400.1L415.6 398.6Z"/>
<path fill="#0af749" d="M418.8 392.5L421.9 389.3L426.1 390.8L423.0 394.0ZM413.5 371.3L416.6 368.2L420.8 369.8L417.7 372.9ZM416.6 368.9L419.7 365.8L423.9 367.4L420.8 370.5ZM405.2 356.4L408.3 353.3L412.5 354.9L409.4 357.9ZM422.4 360.2L425.5 357.1L429.7 358.6L426.6 361.7Z"/>
<path fill="#0af460" d="M422.3 394.0L425.4 390.8L429.7 392.4L426.6 395.5ZM422.8 397.2L427.1 398.8L427.1 403.2L422.8 401.7Z"/>
<path fill="#0af278" d="M425.9 395.5L429.0 392.4L433.3 394.0L430.2 397.1Z"/>
<path fill="#0cef9e" d="M429.5 397.1L432.6 394.0L437.0 395.5L433.9 398.7Z"/>
<path fill="#10edc4" d="M433.2 398.7L436.3 395.5L440.6 397.1L437.5 400.2ZM433.7 402.0L438.0 403.5L438.0 408.0L433.7 406.4Z"/>
<path fill="#14ebeb" d="M436.8 400.2L439.9 397.1L444.2 398.7L441.1 401.8Z"/>
<path fill="#17c2f5" d="M466.4 413.1L469.5 409.9L474.0 411.6L470.9 414.7Z"/>
<path fill="#178af4" d="M470.2 414.7L473.3 411.6L477.8 413.3L474.7 416.4Z"/>
<path fill="#136cf2" d="M474.0 416.4L477.1 413.3L481.6 414.9L478.5 418.1ZM478.2 399.3L481.3 396.1L485.8 397.8L482.7 400.9ZM481.3 396.8L484.4 393.7L488.9 395.3L485.8 398.5ZM484.4 394.4L487.6 391.3L492.0 392.9L488.9 396.0ZM487.6 392.0L490.7 388.8L495.2 390.4L492.0 393.6ZM490.7 389.5L493.8 386.4L498.3 388.0L495.2 391.1ZM493.8 387.1L496.9 384.0L501.4 385.6L498.3 388.7ZM496.9 384.7L500.0 381.5L504.5 383.1L501.4 386.3ZM500.0 382.2L503.2 379.1L507.6 380.7L504.5 383.8ZM503.2 379.8L506.3 376.7L510.8 378.3L507.6 381.4ZM474.6 419.8L479.3 421.5L479.3 426.1L474.6 424.4Z"/>
<path fill="#1267f2" d="M477.8 418.1L480.9 414.9L485.5 416.7L482.4 419.8ZM482.0 400.9L485.1 397.8L489.6 399.4L486.5 402.5ZM485.1 398.5L488.2 395.3L492.7 397.0L489.6 400.1ZM488.2 396.0L491.3 392.9L495.8 394.5L492.7 397.7ZM491.3 393.6L494.5 390.4L499.0 392.1L495.8 395.2ZM494.5 391.1L497.6 388.0L502.1 389.7L499.0 392.8ZM497.6 388.7L500.7 385.6L505.2 387.2L502.1 390.4ZM500.7 386.3L503.8 383.1L508.3 384.8L505.2 387.9ZM503.8 383.8L506.9 380.7L511.5 382.3L508.3 385.5ZM506.9 381.4L510.1 378.3L514.6 379.9L511.5 383.0ZM478.6 421.5L483.2 423.3L483.2 427.9L478.6 426.1ZM478.6 425.4L483.2 427.2L483.2 431.7L478.6 430.0Z"/>
<path fill="#1160f3" d="M481.7 419.8L484.8 416.7L489.5 418.4L486.3 421.5ZM482.5 427.2L487.2 428.9L487.2 433.5L482.5 431.7Z"/>
<path fill="#0f55f4" d="M485.6 421.5L488.8 418.4L493.4 420.1L490.3 423.3ZM486.4 428.9L491.0 430.6L491.0 435.2L486.4 433.5Z"/>
<path fill="#0835f8" d="M489.6 423.3L492.7 420.1L497.3 421.8L494.1 424.9Z"/>
<path fill="#0002ff" d="M493.4 424.9L496.6 421.8L501.1 423.5L498.0 426.6Z"/>
<path fill="#99ff0a" d="M373.0 368.1L376.1 365.1L380.3 366.6L377.2 369.7Z"/>
<path fill="#74ff0a" d="M376.5 369.7L379.6 366.6L383.8 368.2L380.7 371.3ZM384.4 394.8L388.7 396.4L388.7 400.8L384.4 399.2Z"/>
<path fill="#36fe0e" d="M383.5 372.9L386.6 369.8L390.9 371.4L387.8 374.5ZM391.4 412.7L395.7 414.3L395.7 418.7L391.4 417.1Z"/>
<path fill="#24fd19" d="M387.1 374.5L390.2 371.4L394.4 373.0L391.3 376.1ZM391.5 354.1L394.6 351.1L398.8 352.6L395.8 355.6ZM394.9 384.9L399.2 386.6L399.2 390.9L394.9 389.3Z"/>
<path fill="#0efa26" d="M397.6 379.3L400.7 376.2L404.9 377.8L401.8 380.9ZM395.1 355.6L398.1 352.6L402.4 354.1L399.3 357.2ZM408.6 394.8L412.9 396.3L412.9 400.7L408.6 399.2ZM408.6 398.5L412.9 400.0L412.9 404.4L408.6 402.9Z"/>
<path fill="#0afa28" d="M411.5 385.5L414.6 382.4L418.7 383.9L415.6 387.0ZM417.1 343.1L420.2 340.0L424.4 341.5L421.3 344.6ZM412.1 400.0L416.4 401.6L416.4 406.0L412.1 404.4ZM412.1 403.7L416.4 405.3L416.4 409.7L412.1 408.1Z"/>
<path fill="#0af932" d="M414.9 387.0L418.0 383.9L422.2 385.4L419.1 388.5ZM410.9 347.8L414.0 344.7L418.2 346.3L415.1 349.3ZM415.6 401.6L419.9 403.1L419.9 407.5L415.6 406.0Z"/>
<path fill="#0af743" d="M418.4 388.5L421.5 385.4L425.7 386.9L422.6 390.0ZM417.0 372.9L420.1 369.8L424.2 371.3L421.1 374.4ZM420.1 370.5L423.2 367.4L427.3 368.9L424.2 372.0ZM431.7 353.0L434.8 350.0L439.0 351.5L435.9 354.5ZM431.3 349.2L434.4 346.1L438.6 347.6L435.5 350.7ZM419.1 403.1L423.5 404.7L423.5 409.1L419.1 407.5Z"/>
<path fill="#0af55a" d="M421.9 390.0L425.0 386.9L429.2 388.4L426.1 391.5ZM406.1 364.2L409.2 361.2L413.4 362.7L410.3 365.8Z"/>
<path fill="#0af371" d="M425.4 391.5L428.5 388.4L432.8 390.0L429.7 393.1Z"/>
<path fill="#0bf093" d="M429.0 393.1L432.1 390.0L436.4 391.6L433.3 394.7Z"/>
<path fill="#0feeb9" d="M432.6 394.7L435.7 391.6L440.1 393.1L437.0 396.2Z"/>
<path fill="#13ecdf" d="M436.3 396.2L439.4 393.1L443.7 394.7L440.6 397.8Z"/>
<path fill="#15e8ee" d="M439.9 397.8L443.0 394.7L447.4 396.3L444.2 399.4ZM442.0 387.4L445.1 384.3L449.4 385.9L446.3 389.0ZM440.9 416.4L445.3 418.0L445.3 422.5L440.9 420.9ZM440.9 420.2L445.3 421.8L445.3 426.3L440.9 424.7ZM440.9 424.0L445.3 425.6L445.3 430.1L440.9 428.4Z"/>
<path fill="#17d0f5" d="M465.7 409.0L468.8 405.8L473.3 407.5L470.2 410.6Z"/>
<path fill="#19a1f5" d="M469.5 410.6L472.6 407.5L477.1 409.2L474.0 412.3Z"/>
<path fill="#136ef3" d="M473.3 412.3L476.4 409.2L480.9 410.8L477.8 414.0ZM474.6 431.4L479.3 433.1L479.3 437.7L474.6 436.0ZM474.6 435.3L479.3 437.0L479.3 441.6L474.6 439.8Z"/>
<path fill="#1369f2" d="M477.1 414.0L480.2 410.8L484.7 412.5L481.6 415.6ZM478.6 437.0L483.2 438.8L483.2 443.4L478.6 441.6ZM478.6 440.9L483.2 442.7L483.2 447.2L478.6 445.4Z"/>
<path fill="#1264f2" d="M480.9 415.6L484.0 412.5L488.7 414.2L485.5 417.4ZM482.5 442.7L487.2 444.4L487.2 449.0L482.5 447.2Z"/>
<path fill="#1058f4" d="M484.8 417.4L488.0 414.2L492.6 415.9L489.5 419.1ZM486.4 440.5L491.0 442.3L491.0 446.9L486.4 445.1Z"/>
<path fill="#0d4df5" d="M488.8 419.1L491.9 415.9L496.5 417.6L493.4 420.8Z"/>
<path fill="#010bfe" d="M492.7 420.8L495.8 417.6L500.4 419.3L497.3 422.5ZM494.2 444.0L498.8 445.7L498.8 450.4L494.2 448.6Z"/>
<path fill="#6cff0a" d="M376.1 365.8L379.2 362.7L383.4 364.3L380.3 367.3Z"/>
<path fill="#47ff0a" d="M379.6 367.3L382.7 364.3L386.9 365.9L383.8 368.9Z"/>
<path fill="#0af931" d="M400.7 376.9L403.8 373.8L408.0 375.4L404.9 378.5ZM415.6 405.3L419.9 406.8L419.9 411.2L415.6 409.7Z"/>
<path fill="#0af92e" d="M404.2 378.5L407.3 375.4L411.5 377.0L408.4 380.1ZM415.6 416.4L419.9 417.9L419.9 422.3L415.6 420.8Z"/>
<path fill="#0afa29" d="M411.1 381.6L414.2 378.5L418.4 380.0L415.3 383.1ZM412.1 396.3L416.4 397.9L416.4 402.3L412.1 400.7Z"/>
<path fill="#0af92f" d="M414.6 383.1L417.7 380.0L421.8 381.5L418.7 384.6ZM415.6 412.7L419.9 414.2L419.9 418.6L415.6 417.1Z"/>
<path fill="#0af83b" d="M418.0 384.6L421.1 381.5L425.3 383.0L422.2 386.1Z"/>
<path fill="#0af652" d="M421.5 386.1L424.6 383.0L428.8 384.5L425.7 387.6ZM399.0 361.1L402.1 358.0L406.3 359.6L403.2 362.7ZM427.0 373.5L430.1 370.4L434.2 371.8L431.1 374.9ZM412.7 363.4L415.8 360.3L420.0 361.9L416.9 365.0ZM430.1 371.1L433.2 367.9L437.3 369.4L434.2 372.5ZM433.2 368.6L436.3 365.5L440.4 367.0L437.3 370.1ZM436.3 366.2L439.4 363.1L443.5 364.6L440.4 367.7ZM439.4 363.8L442.5 360.7L446.6 362.2L443.5 365.3ZM442.5 361.4L445.6 358.3L449.7 359.8L446.6 362.9ZM445.6 359.0L448.7 355.9L452.8 357.3L449.7 360.5ZM448.7 356.6L451.8 353.5L455.9 354.9L452.8 358.0Z"/>
<path fill="#0af469" d="M425.0 387.6L428.1 384.5L432.3 386.0L429.2 389.1ZM430.4 374.9L433.5 371.8L437.7 373.3L434.6 376.4ZM433.5 372.5L436.6 369.4L440.8 370.9L437.7 374.0ZM436.6 370.1L439.7 367.0L443.9 368.5L440.8 371.6ZM439.7 367.7L442.8 364.6L447.0 366.1L443.9 369.2ZM442.8 365.3L445.9 362.2L450.1 363.7L447.0 366.8ZM445.9 362.9L449.0 359.8L453.2 361.3L450.1 364.4ZM449.0 360.5L452.1 357.3L456.3 358.8L453.2 362.0ZM452.1 358.0L455.2 354.9L459.4 356.4L456.3 359.5ZM426.4 421.2L430.8 422.8L430.8 427.3L426.4 425.6Z"/>
<path fill="#0af183" d="M428.5 389.1L431.6 386.0L435.9 387.6L432.8 390.7ZM430.0 422.8L434.4 424.5L434.4 428.9L430.0 427.3Z"/>
<path fill="#0deeac" d="M432.1 390.7L435.2 387.6L439.5 389.1L436.4 392.3ZM433.7 424.5L438.0 426.1L438.0 430.6L433.7 428.9Z"/>
<path fill="#11ecd2" d="M435.7 392.3L438.8 389.1L443.2 390.7L440.1 393.8ZM437.3 426.1L441.7 427.7L441.7 432.2L437.3 430.6Z"/>
<path fill="#14e9ed" d="M439.4 393.8L442.5 390.7L446.8 392.3L443.7 395.4ZM444.5 381.0L447.6 377.9L452.0 379.5L448.9 382.6ZM447.6 378.6L450.7 375.5L455.1 377.0L452.0 380.2ZM450.7 376.2L453.8 373.1L458.2 374.6L455.1 377.7ZM453.8 373.8L457.0 370.6L461.3 372.2L458.2 375.3ZM457.0 371.3L460.1 368.2L464.4 369.8L461.3 372.9ZM460.1 368.9L463.2 365.8L467.5 367.4L464.4 370.5ZM463.2 366.5L466.3 363.4L470.6 364.9L467.5 368.1ZM466.3 364.1L469.4 361.0L473.7 362.5L470.6 365.6ZM440.9 427.7L445.3 429.4L445.3 433.9L440.9 432.2Z"/>
<path fill="#18b4f5" d="M468.8 406.5L472.0 403.4L476.4 405.1L473.3 408.2Z"/>
<path fill="#1577f3" d="M472.6 408.2L475.7 405.1L480.2 406.7L477.1 409.9Z"/>
<path fill="#041ffb" d="M491.9 416.6L495.0 413.5L499.7 415.2L496.5 418.3Z"/>
<path fill="#42ff0a" d="M379.2 363.4L382.3 360.4L386.5 362.0L383.4 365.0Z"/>
<path fill="#2cfd14" d="M382.7 365.0L385.8 362.0L390.0 363.5L386.9 366.6ZM394.9 414.3L399.2 415.9L399.2 420.3L394.9 418.7Z"/>
<path fill="#0af83d" d="M396.8 371.3L399.9 368.3L404.1 369.9L401.0 372.9Z"/>
<path fill="#0af744" d="M400.3 372.9L403.4 369.9L407.6 371.4L404.5 374.5ZM429.0 359.3L432.1 356.2L436.3 357.8L433.2 360.9ZM427.7 347.6L430.8 344.6L435.1 346.1L432.0 349.2Z"/>
<path fill="#0af83f" d="M403.8 374.5L406.9 371.4L411.1 373.0L408.0 376.1ZM435.6 358.5L438.7 355.4L442.8 356.8L439.7 359.9ZM438.7 356.1L441.8 353.0L445.9 354.4L442.8 357.5ZM438.3 352.2L441.4 349.1L445.6 350.6L442.5 353.7Z"/>
<path fill="#0af83a" d="M407.3 376.1L410.4 373.0L414.6 374.6L411.5 377.7ZM419.1 417.9L423.5 419.6L423.5 424.0L419.1 422.3Z"/>
<path fill="#0af935" d="M410.8 377.7L413.9 374.6L418.0 376.1L414.9 379.2ZM417.7 380.7L420.8 377.6L424.9 379.1L421.8 382.2Z"/>
<path fill="#0af930" d="M414.2 379.2L417.3 376.1L421.5 377.6L418.4 380.7ZM415.6 409.0L419.9 410.5L419.9 414.9L415.6 413.4Z"/>
<path fill="#0af74a" d="M421.1 382.2L424.2 379.1L428.4 380.6L425.3 383.7ZM392.8 365.8L395.9 362.7L400.1 364.3L397.0 367.4ZM414.9 353.2L418.0 350.1L422.2 351.7L419.1 354.7ZM422.0 356.3L425.1 353.2L429.3 354.7L426.2 357.8ZM421.5 352.4L424.6 349.3L428.9 350.8L425.8 353.9Z"/>
<path fill="#0af461" d="M424.6 383.7L427.7 380.6L431.9 382.1L428.8 385.2Z"/>
<path fill="#0af277" d="M428.1 385.2L431.2 382.1L435.4 383.6L432.3 386.7ZM426.4 398.8L430.8 400.4L430.8 404.8L426.4 403.2Z"/>
<path fill="#0cef9d" d="M431.6 386.7L434.7 383.6L439.0 385.2L435.9 388.3ZM430.0 400.4L434.4 402.0L434.4 406.4L430.0 404.8Z"/>
<path fill="#10edc3" d="M435.2 388.3L438.3 385.2L442.7 386.7L439.5 389.8Z"/>
<path fill="#14ebea" d="M438.8 389.8L442.0 386.7L446.3 388.3L443.2 391.4ZM437.3 403.5L441.7 405.1L441.7 409.6L437.3 408.0Z"/>
<path fill="#17c6f5" d="M468.2 402.5L471.3 399.3L475.8 401.0L472.7 404.1Z"/>
<path fill="#1890f5" d="M472.0 404.1L475.1 401.0L479.6 402.6L476.4 405.8Z"/>
<path fill="#136df3" d="M475.7 405.8L478.9 402.6L483.4 404.3L480.2 407.4ZM474.6 423.7L479.3 425.4L479.3 430.0L474.6 428.2ZM474.6 427.5L479.3 429.3L479.3 433.8L474.6 432.1Z"/>
<path fill="#1368f2" d="M479.5 407.4L482.7 404.3L487.2 405.9L484.0 409.1ZM478.6 429.3L483.2 431.0L483.2 435.6L478.6 433.8ZM478.6 433.1L483.2 434.9L483.2 439.5L478.6 437.7Z"/>
<path fill="#1161f2" d="M483.3 409.1L486.5 405.9L491.0 407.6L487.8 410.7ZM482.5 431.0L487.2 432.8L487.2 437.4L482.5 435.6Z"/>
<path fill="#0f57f4" d="M487.1 410.7L490.3 407.6L494.9 409.3L491.8 412.5ZM486.4 436.7L491.0 438.4L491.0 443.0L486.4 441.2Z"/>
<path fill="#0c47f6" d="M491.1 412.5L494.2 409.3L498.9 411.0L495.7 414.2Z"/>
<path fill="#0106fe" d="M495.0 414.2L498.2 411.0L502.8 412.7L499.7 415.9ZM494.2 436.2L498.8 437.9L498.8 442.5L494.2 440.8Z"/>
<path fill="#2cfd13" d="M382.3 361.1L385.4 358.1L389.6 359.6L386.5 362.7Z"/>
<path fill="#0af837" d="M389.3 364.2L392.4 361.2L396.6 362.7L393.5 365.8ZM419.1 421.6L423.5 423.3L423.5 427.7L419.1 426.1Z"/>
<path fill="#0af650" d="M396.3 367.4L399.4 364.3L403.7 365.9L400.6 369.0Z"/>
<path fill="#0af556" d="M399.9 369.0L403.0 365.9L407.2 367.5L404.1 370.6ZM406.5 368.2L409.6 365.1L413.8 366.6L410.7 369.7ZM422.8 412.1L427.1 413.7L427.1 418.2L422.8 416.6Z"/>
<path fill="#0af653" d="M403.4 370.6L406.5 367.5L410.7 369.0L407.6 372.1ZM395.9 363.4L399.0 360.4L403.2 362.0L400.1 365.0Z"/>
<path fill="#0af64c" d="M406.9 372.1L410.0 369.0L414.2 370.6L411.1 373.7ZM392.4 361.9L395.5 358.8L399.7 360.4L396.6 363.4ZM422.8 427.0L427.1 428.7L427.1 433.1L422.8 431.4Z"/>
<path fill="#0af745" d="M410.4 373.7L413.5 370.6L417.7 372.2L414.6 375.3ZM408.3 354.0L411.3 351.0L415.6 352.5L412.5 355.6ZM425.9 361.7L429.0 358.6L433.2 360.2L430.1 363.3ZM428.6 355.4L431.7 352.3L435.9 353.8L432.8 356.9ZM428.2 351.5L431.3 348.5L435.5 350.0L432.4 353.0Z"/>
<path fill="#0af83e" d="M413.9 375.3L417.0 372.2L421.1 373.7L418.0 376.8ZM420.4 374.4L423.5 371.3L427.7 372.8L424.6 375.9ZM424.2 346.1L427.3 343.1L431.5 344.6L428.4 347.6ZM441.8 353.7L444.9 350.6L449.0 352.0L445.9 355.1ZM419.1 410.5L423.5 412.1L423.5 416.6L419.1 414.9Z"/>
<path fill="#0af937" d="M417.3 376.8L420.4 373.7L424.6 375.2L421.5 378.3ZM407.8 350.1L410.9 347.1L415.1 348.6L412.0 351.7Z"/>
<path fill="#0af742" d="M420.8 378.3L423.9 375.2L428.0 376.7L424.9 379.8ZM423.2 368.1L426.3 365.0L430.4 366.5L427.3 369.6ZM426.3 365.7L429.4 362.6L433.5 364.0L430.4 367.2ZM432.1 356.9L435.2 353.8L439.4 355.4L436.3 358.5ZM421.1 348.5L424.2 345.4L428.4 346.9L425.3 350.0Z"/>
<path fill="#0af558" d="M424.2 379.8L427.3 376.7L431.5 378.2L428.4 381.3ZM422.8 408.4L427.1 410.0L427.1 414.4L422.8 412.8Z"/>
<path fill="#0af36f" d="M427.7 381.3L430.8 378.2L435.0 379.7L431.9 382.8Z"/>
<path fill="#0af08e" d="M431.2 382.8L434.3 379.7L438.5 381.2L435.4 384.3Z"/>
<path fill="#0eeeb4" d="M434.7 384.3L437.8 381.2L442.1 382.7L439.0 385.9ZM433.7 417.0L438.0 418.6L438.0 423.0L433.7 421.4Z"/>
<path fill="#12ecda" d="M438.3 385.9L441.4 382.7L445.8 384.3L442.7 387.4ZM437.3 418.6L441.7 420.2L441.7 424.7L437.3 423.0Z"/>
<path fill="#16daf5" d="M467.5 398.4L470.7 395.3L475.1 396.9L472.0 400.0Z"/>
<path fill="#18acf5" d="M471.3 400.0L474.4 396.9L478.9 398.6L475.8 401.7Z"/>
<path fill="#146ff3" d="M475.1 401.7L478.2 398.6L482.7 400.2L479.6 403.3ZM474.6 443.0L479.3 444.7L479.3 449.3L474.6 447.5Z"/>
<path fill="#136af2" d="M478.9 403.3L482.0 400.2L486.5 401.8L483.4 405.0ZM478.6 444.7L483.2 446.5L483.2 451.1L478.6 449.3ZM478.6 448.6L483.2 450.4L483.2 455.0L478.6 453.2Z"/>
<path fill="#1265f2" d="M482.7 405.0L485.8 401.8L490.3 403.5L487.2 406.6ZM482.5 446.5L487.2 448.3L487.2 452.9L482.5 451.1ZM482.5 450.4L487.2 452.2L487.2 456.8L482.5 455.0Z"/>
<path fill="#105bf3" d="M486.5 406.6L489.6 403.5L494.1 405.1L491.0 408.3ZM486.4 448.3L491.0 450.1L491.0 454.7L486.4 452.9Z"/>
<path fill="#0e51f5" d="M490.3 408.3L493.4 405.1L498.0 406.9L494.9 410.0ZM490.3 454.0L494.9 455.7L494.9 460.3L490.3 458.5Z"/>
<path fill="#0318fc" d="M494.2 410.0L497.3 406.9L502.0 408.6L498.9 411.7Z"/>
<path fill="#22fc19" d="M385.4 358.8L388.5 355.7L392.7 357.3L389.6 360.3Z"/>
<path fill="#0af559" d="M399.4 365.0L402.5 362.0L406.8 363.5L403.7 366.6ZM402.5 362.7L405.6 359.6L409.9 361.2L406.8 364.2Z"/>
<path fill="#0af55c" d="M403.0 366.6L406.1 363.5L410.3 365.1L407.2 368.2Z"/>
<path fill="#0af64f" d="M410.0 369.7L413.1 366.6L417.3 368.2L414.2 371.3ZM423.9 375.9L427.0 372.8L431.1 374.2L428.0 377.4ZM413.1 367.3L416.2 364.3L420.4 365.8L417.3 368.9ZM415.8 361.0L418.9 358.0L423.1 359.5L420.0 362.6ZM422.8 423.3L427.1 424.9L427.1 429.4L422.8 427.7Z"/>
<path fill="#0af465" d="M427.3 377.4L430.4 374.2L434.6 375.7L431.5 378.9Z"/>
<path fill="#0cefa4" d="M434.3 380.4L437.4 377.3L441.6 378.8L438.5 381.9Z"/>
<path fill="#10edc9" d="M437.8 381.9L440.9 378.8L445.2 380.3L442.1 383.4Z"/>
<path fill="#17c1f5" d="M470.7 396.0L473.8 392.9L478.2 394.5L475.1 397.6ZM467.1 416.5L471.6 418.1L471.6 422.7L467.1 421.0Z"/>
<path fill="#1789f4" d="M474.4 397.6L477.5 394.5L482.0 396.1L478.9 399.3Z"/>
<path fill="#1160f2" d="M485.8 402.5L488.9 399.4L493.4 401.1L490.3 404.2Z"/>
<path fill="#0f56f4" d="M489.6 404.2L492.7 401.1L497.2 402.7L494.1 405.8ZM486.4 432.8L491.0 434.5L491.0 439.1L486.4 437.4Z"/>
<path fill="#0a3ff7" d="M493.4 405.8L496.5 402.7L501.2 404.4L498.0 407.6Z"/>
<path fill="#0104fe" d="M497.3 407.6L500.5 404.4L505.1 406.1L502.0 409.3Z"/>
<path fill="#0af74b" d="M395.5 359.5L398.6 356.5L402.8 358.0L399.7 361.1ZM419.3 362.6L422.4 359.5L426.6 361.0L423.5 364.1Z"/>
<path fill="#0af655" d="M409.6 365.8L412.7 362.7L416.9 364.3L413.8 367.3Z"/>
<path fill="#0af741" d="M423.5 372.0L426.6 368.9L430.8 370.4L427.7 373.5ZM434.8 350.7L437.9 347.6L442.1 349.1L439.0 352.2Z"/>
<path fill="#0af181" d="M433.9 376.4L437.0 373.3L441.2 374.8L438.1 378.0ZM437.0 374.0L440.1 370.9L444.3 372.4L441.2 375.5ZM440.1 371.6L443.2 368.5L447.4 370.0L444.3 373.1ZM443.2 369.2L446.3 366.1L450.5 367.6L447.4 370.7ZM446.3 366.8L449.4 363.7L453.6 365.2L450.5 368.3ZM449.4 364.4L452.5 361.3L456.7 362.8L453.6 365.9ZM452.5 362.0L455.6 358.8L459.8 360.3L456.7 363.5ZM455.6 359.5L458.7 356.4L462.9 357.9L459.8 361.0Z"/>
<path fill="#0deea9" d="M437.4 378.0L440.5 374.8L444.7 376.3L441.6 379.5ZM440.5 375.5L443.6 372.4L447.8 373.9L444.7 377.0ZM443.6 373.1L446.7 370.0L450.9 371.5L447.8 374.6ZM446.7 370.7L449.8 367.6L454.0 369.1L450.9 372.2ZM449.8 368.3L452.9 365.2L457.1 366.7L454.0 369.8ZM452.9 365.9L456.0 362.8L460.2 364.2L457.1 367.4ZM456.0 363.5L459.1 360.3L463.3 361.8L460.2 364.9ZM459.1 361.0L462.2 357.9L466.4 359.4L463.3 362.5Z"/>
<path fill="#11eccf" d="M440.9 379.5L444.0 376.3L448.3 377.9L445.2 381.0ZM444.0 377.0L447.1 373.9L451.4 375.5L448.3 378.6ZM447.1 374.6L450.2 371.5L454.5 373.1L451.4 376.2ZM450.2 372.2L453.3 369.1L457.7 370.6L454.5 373.8ZM453.3 369.8L456.4 366.7L460.8 368.2L457.7 371.3ZM456.4 367.4L459.5 364.2L463.9 365.8L460.8 368.9ZM459.5 364.9L462.6 361.8L467.0 363.4L463.9 366.5ZM462.6 362.5L465.7 359.4L470.1 361.0L467.0 364.1Z"/>
<path fill="#18bbf5" d="M473.8 393.6L476.9 390.4L481.4 392.1L478.2 395.2ZM476.9 391.1L480.0 388.0L484.5 389.6L481.4 392.8ZM480.0 388.7L483.1 385.6L487.6 387.2L484.5 390.3ZM483.1 386.3L486.2 383.1L490.7 384.8L487.6 387.9ZM486.2 383.8L489.4 380.7L493.8 382.3L490.7 385.5ZM489.4 381.4L492.5 378.3L497.0 379.9L493.8 383.0ZM492.5 379.0L495.6 375.9L500.1 377.5L497.0 380.6ZM495.6 376.6L498.7 373.4L503.2 375.0L500.1 378.2Z"/>
<path fill="#1681f4" d="M477.5 395.2L480.7 392.1L485.1 393.7L482.0 396.8ZM480.7 392.8L483.8 389.6L488.3 391.3L485.1 394.4ZM483.8 390.3L486.9 387.2L491.4 388.8L488.3 392.0ZM486.9 387.9L490.0 384.8L494.5 386.4L491.4 389.5ZM490.0 385.5L493.1 382.3L497.6 384.0L494.5 387.1ZM493.1 383.0L496.3 379.9L500.7 381.5L497.6 384.7ZM496.3 380.6L499.4 377.5L503.9 379.1L500.7 382.2ZM499.4 378.2L502.5 375.0L507.0 376.7L503.9 379.8Z"/>
<path fill="#115ff3" d="M488.9 400.1L492.0 397.0L496.5 398.6L493.4 401.8ZM492.0 397.7L495.1 394.5L499.7 396.2L496.5 399.3ZM495.1 395.2L498.3 392.1L502.8 393.7L499.7 396.9ZM498.3 392.8L501.4 389.7L505.9 391.3L502.8 394.4ZM501.4 390.4L504.5 387.2L509.0 388.8L505.9 392.0ZM504.5 387.9L507.6 384.8L512.2 386.4L509.0 389.5ZM507.6 385.5L510.8 382.3L515.3 384.0L512.2 387.1ZM510.8 383.0L513.9 379.9L518.4 381.5L515.3 384.7ZM482.5 423.3L487.2 425.0L487.2 429.6L482.5 427.9Z"/>
<path fill="#0f54f4" d="M492.7 401.8L495.8 398.6L500.3 400.3L497.2 403.4ZM495.8 399.3L499.0 396.2L503.5 397.8L500.3 401.0ZM499.0 396.9L502.1 393.7L506.6 395.4L503.5 398.5ZM502.1 394.4L505.2 391.3L509.7 392.9L506.6 396.1ZM505.2 392.0L508.3 388.8L512.8 390.5L509.7 393.6ZM508.3 389.5L511.5 386.4L516.0 388.0L512.8 391.2ZM511.5 387.1L514.6 384.0L519.1 385.6L516.0 388.7ZM514.6 384.7L517.7 381.5L522.2 383.1L519.1 386.3ZM486.4 425.0L491.0 426.7L491.0 431.3L486.4 429.6Z"/>
<path fill="#0731f9" d="M496.5 403.4L499.6 400.3L504.3 402.0L501.2 405.1ZM499.6 401.0L502.8 397.8L507.4 399.5L504.3 402.7ZM502.8 398.5L505.9 395.4L510.5 397.1L507.4 400.2ZM505.9 396.1L509.0 392.9L513.7 394.6L510.5 397.8ZM509.0 393.6L512.1 390.5L516.8 392.2L513.7 395.3ZM512.1 391.2L515.3 388.0L519.9 389.7L516.8 392.9ZM515.3 388.7L518.4 385.6L523.1 387.3L519.9 390.4ZM518.4 386.3L521.5 383.1L526.2 384.8L523.1 388.0Z"/>
<path fill="#0001ff" d="M500.5 405.1L503.6 402.0L508.2 403.7L505.1 406.8ZM503.6 402.7L506.7 399.5L511.4 401.2L508.2 404.4ZM506.7 400.2L509.8 397.1L514.5 398.8L511.4 401.9ZM509.8 397.8L513.0 394.6L517.6 396.3L514.5 399.5ZM513.0 395.3L516.1 392.2L520.7 393.9L517.6 397.0ZM516.1 392.9L519.2 389.7L523.9 391.4L520.7 394.6ZM519.2 390.4L522.4 387.3L527.0 389.0L523.9 392.1ZM522.4 388.0L525.5 384.8L530.1 386.5L527.0 389.7ZM494.2 428.4L498.8 430.1L498.8 434.7L494.2 433.0Z"/>
<path fill="#0af746" d="M398.6 357.2L401.7 354.1L405.9 355.7L402.8 358.7ZM422.8 364.1L425.9 361.0L430.1 362.6L427.0 365.7ZM418.0 350.8L421.1 347.8L425.3 349.3L422.2 352.4ZM419.1 399.4L423.5 401.0L423.5 405.4L419.1 403.8Z"/>
<path fill="#0af555" d="M405.6 360.3L408.7 357.2L413.0 358.8L409.9 361.9Z"/>
<path fill="#0af557" d="M409.2 361.9L412.3 358.8L416.5 360.3L413.4 363.4Z"/>
<path fill="#0af748" d="M419.7 366.5L422.8 363.4L427.0 365.0L423.9 368.1ZM425.1 353.9L428.2 350.8L432.4 352.3L429.3 355.4ZM419.1 395.7L423.5 397.2L423.5 401.7L419.1 400.1Z"/>
<path fill="#0af841" d="M426.6 369.6L429.7 366.5L433.9 367.9L430.8 371.1ZM401.7 354.8L404.7 351.8L409.0 353.3L405.9 356.4ZM429.7 367.2L432.8 364.0L437.0 365.5L433.9 368.6ZM429.4 363.3L432.5 360.2L436.6 361.6L433.5 364.7ZM435.2 354.5L438.3 351.5L442.5 353.0L439.4 356.1ZM419.1 406.8L423.5 408.4L423.5 412.8L419.1 411.2Z"/>
<path fill="#0af651" d="M408.7 357.9L411.8 354.9L416.0 356.4L413.0 359.5ZM415.3 357.1L418.4 354.0L422.7 355.6L419.6 358.7ZM422.8 419.6L427.1 421.2L427.1 425.6L422.8 424.0Z"/>
<path fill="#0af654" d="M412.3 359.5L415.3 356.4L419.6 358.0L416.5 361.0ZM422.8 415.9L427.1 417.5L427.1 421.9L422.8 420.3Z"/>
<path fill="#0af83c" d="M404.7 352.5L407.8 349.4L412.0 351.0L409.0 354.0ZM414.4 349.3L417.5 346.3L421.8 347.8L418.7 350.8ZM419.1 414.2L423.5 415.9L423.5 420.3L419.1 418.6Z"/>
<path fill="#0af64e" d="M411.8 355.6L414.9 352.5L419.1 354.0L416.0 357.1ZM418.4 354.7L421.5 351.7L425.8 353.2L422.7 356.3Z"/>
<path fill="#0af840" d="M432.8 364.7L435.9 361.6L440.1 363.1L437.0 366.2ZM411.3 351.7L414.4 348.6L418.7 350.1L415.6 353.2ZM432.5 360.9L435.6 357.8L439.7 359.2L436.6 362.3ZM435.9 362.3L439.0 359.2L443.2 360.7L440.1 363.8ZM439.0 359.9L442.1 356.8L446.3 358.3L443.2 361.4ZM442.1 357.5L445.2 354.4L449.4 355.9L446.3 359.0ZM445.2 355.1L448.3 352.0L452.5 353.5L449.4 356.6Z"/>
<path fill="#2afd15" d="M400.8 347.1L403.9 344.1L408.1 345.6L405.0 348.6ZM394.9 407.0L399.2 408.6L399.2 412.9L394.9 411.3Z"/>
<path fill="#15fb22" d="M404.3 348.6L407.4 345.6L411.6 347.1L408.5 350.1ZM405.2 415.4L409.4 416.9L409.4 421.3L405.2 419.7Z"/>
<path fill="#0af747" d="M425.5 357.8L428.6 354.7L432.8 356.2L429.7 359.3ZM424.6 350.0L427.7 346.9L432.0 348.5L428.9 351.5Z"/>
<path fill="#2dfd13" d="M403.9 344.8L407.0 341.7L411.2 343.2L408.1 346.3Z"/>
<path fill="#0afa2d" d="M414.0 345.4L417.1 342.4L421.3 343.9L418.2 347.0ZM415.6 420.1L419.9 421.6L419.9 426.1L415.6 424.5Z"/>
<path fill="#0af838" d="M417.5 347.0L420.6 343.9L424.9 345.4L421.8 348.5Z"/>
<path fill="#31fe10" d="M410.1 340.1L413.1 337.0L417.4 338.5L414.3 341.6Z"/>
<path fill="#0af933" d="M420.6 344.6L423.7 341.5L428.0 343.1L424.9 346.1ZM415.6 397.9L419.9 399.4L419.9 403.8L415.6 402.3Z"/>
<path fill="#f8e814" d="M366.8 372.1L371.1 373.7L371.1 378.0L366.8 376.4Z"/>
<path fill="#f8e614" d="M366.8 375.7L371.1 377.3L371.1 381.7L366.8 380.1Z"/>
<path fill="#f9e514" d="M366.8 379.4L371.1 381.0L371.1 385.4L366.8 383.8Z"/>
<path fill="#f9e314" d="M366.8 383.1L371.1 384.7L371.1 389.0L366.8 387.4Z"/>
<path fill="#f9e114" d="M366.8 386.7L371.1 388.3L371.1 392.7L366.8 391.1Z"/>
<path fill="#fae014" d="M366.8 390.4L371.1 392.0L371.1 396.4L366.8 394.8Z"/>
<path fill="#fade14" d="M366.8 394.1L371.1 395.7L371.1 400.0L366.8 398.4Z"/>
<path fill="#fadc14" d="M366.8 397.7L371.1 399.3L371.1 403.7L366.8 402.1Z"/>
<path fill="#fbdb14" d="M366.8 401.4L371.1 403.0L371.1 407.4L366.8 405.8Z"/>
<path fill="#f2f514" d="M370.3 377.3L374.6 378.9L374.6 383.3L370.3 381.7Z"/>
<path fill="#f5f514" d="M370.3 381.0L374.6 382.6L374.6 387.0L370.3 385.4Z"/>
<path fill="#f5f314" d="M370.3 384.7L374.6 386.3L374.6 390.6L370.3 389.0Z"/>
<path fill="#f6f114" d="M370.3 388.3L374.6 389.9L374.6 394.3L370.3 392.7Z"/>
<path fill="#f7ee14" d="M370.3 395.7L374.6 397.3L374.6 401.6L370.3 400.0Z"/>
<path fill="#f7ec14" d="M370.3 399.3L374.6 400.9L374.6 405.3L370.3 403.7Z"/>
<path fill="#f7eb14" d="M370.3 403.0L374.6 404.6L374.6 409.0L370.3 407.4Z"/>
<path fill="#d0f910" d="M373.8 375.3L378.1 376.9L378.1 381.2L373.8 379.6Z"/>
<path fill="#d3f910" d="M373.8 378.9L378.1 380.5L378.1 384.9L373.8 383.3Z"/>
<path fill="#d7f910" d="M373.8 382.6L378.1 384.2L378.1 388.6L373.8 387.0Z"/>
<path fill="#e0f712" d="M373.8 393.6L378.1 395.2L378.1 399.6L373.8 398.0Z"/>
<path fill="#e7f712" d="M373.8 400.9L378.1 402.5L378.1 406.9L373.8 405.3Z"/>
<path fill="#eaf613" d="M373.8 404.6L378.1 406.2L378.1 410.6L373.8 409.0Z"/>
<path fill="#b7fc0d" d="M377.3 384.2L381.6 385.8L381.6 390.2L377.3 388.6Z"/>
<path fill="#befb0e" d="M377.3 391.5L381.6 393.2L381.6 397.5L377.3 395.9Z"/>
<path fill="#c1fb0e" d="M377.3 395.2L381.6 396.8L381.6 401.2L377.3 399.6Z"/>
<path fill="#c4fb0e" d="M377.3 398.9L381.6 400.5L381.6 404.9L377.3 403.2Z"/>
<path fill="#cbfa0f" d="M377.3 406.2L381.6 407.8L381.6 412.2L377.3 410.6Z"/>
<path fill="#93ff0a" d="M380.9 382.2L385.1 383.8L385.1 388.2L380.9 386.5Z"/>
<path fill="#9eff0a" d="M380.9 393.2L385.1 394.8L385.1 399.2L380.9 397.5Z"/>
<path fill="#a2ff0a" d="M380.9 396.8L385.1 398.5L385.1 402.8L380.9 401.2Z"/>
<path fill="#a5fe0b" d="M380.9 400.5L385.1 402.1L385.1 406.5L380.9 404.9Z"/>
<path fill="#67ff0a" d="M384.4 383.8L388.7 385.4L388.7 389.8L384.4 388.2Z"/>
<path fill="#70ff0a" d="M384.4 391.1L388.7 392.7L388.7 397.1L384.4 395.5Z"/>
<path fill="#79ff0a" d="M384.4 398.5L388.7 400.1L388.7 404.4L384.4 402.8Z"/>
<path fill="#87ff0a" d="M384.4 409.5L388.7 411.1L388.7 415.4L384.4 413.8Z"/>
<path fill="#39ff0c" d="M387.9 381.7L392.2 383.3L392.2 387.7L387.9 386.1Z"/>
<path fill="#3bff0a" d="M387.9 385.4L392.2 387.0L392.2 391.4L387.9 389.8Z"/>
<path fill="#44ff0a" d="M387.9 392.7L392.2 394.3L392.2 398.7L387.9 397.1Z"/>
<path fill="#4dff0a" d="M387.9 400.1L392.2 401.7L392.2 406.1L387.9 404.4Z"/>
<path fill="#56ff0a" d="M387.9 407.4L392.2 409.0L392.2 413.4L387.9 411.8Z"/>
<path fill="#5bff0a" d="M387.9 411.1L392.2 412.7L392.2 417.1L387.9 415.4Z"/>
<path fill="#2dfe13" d="M391.4 383.3L395.7 384.9L395.7 389.3L391.4 387.7Z"/>
<path fill="#32fe10" d="M391.4 398.0L395.7 399.6L395.7 404.0L391.4 402.4Z"/>
<path fill="#33fe10" d="M391.4 401.7L395.7 403.3L395.7 407.7L391.4 406.1Z"/>
<path fill="#35fe0e" d="M391.4 409.0L395.7 410.6L395.7 415.0L391.4 413.4Z"/>
<path fill="#27fd17" d="M394.9 396.0L399.2 397.6L399.2 401.9L394.9 400.3Z"/>
<path fill="#1afc1e" d="M398.4 386.6L402.6 388.1L402.6 392.5L398.4 390.9Z"/>
<path fill="#1cfc1d" d="M398.4 393.9L402.6 395.4L402.6 399.8L398.4 398.3Z"/>
<path fill="#1dfc1d" d="M398.4 397.6L402.6 399.1L402.6 403.5L398.4 401.9Z"/>
<path fill="#1ffc1b" d="M398.4 404.9L402.6 406.5L402.6 410.8L398.4 409.3Z"/>
<path fill="#22fc1a" d="M398.4 415.9L402.6 417.5L402.6 421.8L398.4 420.3Z"/>
<path fill="#16fb21" d="M401.8 388.1L406.0 389.7L406.0 394.0L401.8 392.5ZM401.8 391.8L406.0 393.3L406.0 397.7L401.8 396.1ZM401.8 395.4L406.0 397.0L406.0 401.4L401.8 399.8Z"/>
<path fill="#18fb1f" d="M401.8 410.1L406.0 411.7L406.0 416.1L401.8 414.5Z"/>
<path fill="#19fb1f" d="M401.8 413.8L406.0 415.4L406.0 419.7L401.8 418.2Z"/>
<path fill="#13fb22" d="M405.2 404.3L409.4 405.9L409.4 410.2L405.2 408.7Z"/>
<path fill="#0ffb25" d="M408.6 405.9L412.9 407.4L412.9 411.8L408.6 410.2Z"/>
<path fill="#10fb25" d="M408.6 409.5L412.9 411.1L412.9 415.5L408.6 413.9Z"/>
<path fill="#0afa2a" d="M412.1 392.7L416.4 394.2L416.4 398.6L412.1 397.0Z"/>
<path fill="#0bfa28" d="M412.1 407.4L416.4 409.0L416.4 413.4L412.1 411.8Z"/>
<path fill="#0bfa27" d="M412.1 411.1L416.4 412.7L416.4 417.1L412.1 415.5Z"/>
<path fill="#0af55d" d="M422.8 401.0L427.1 402.5L427.1 407.0L422.8 405.4Z"/>
<path fill="#0af55b" d="M422.8 404.7L427.1 406.3L427.1 410.7L422.8 409.1Z"/>
<path fill="#0af275" d="M426.4 402.5L430.8 404.1L430.8 408.6L426.4 407.0Z"/>
<path fill="#0af372" d="M426.4 406.3L430.8 407.9L430.8 412.3L426.4 410.7Z"/>
<path fill="#0af370" d="M426.4 410.0L430.8 411.6L430.8 416.1L426.4 414.4Z"/>
<path fill="#0af36d" d="M426.4 413.7L430.8 415.4L430.8 419.8L426.4 418.2Z"/>
<path fill="#0af36b" d="M426.4 417.5L430.8 419.1L430.8 423.5L426.4 421.9Z"/>
<path fill="#0af466" d="M426.4 424.9L430.8 426.6L430.8 431.0L426.4 429.4Z"/>
<path fill="#0bef99" d="M430.0 404.1L434.4 405.7L434.4 410.2L430.0 408.6Z"/>
<path fill="#0bf095" d="M430.0 407.9L434.4 409.5L434.4 413.9L430.0 412.3Z"/>
<path fill="#0bf091" d="M430.0 411.6L434.4 413.2L434.4 417.7L430.0 416.1Z"/>
<path fill="#0af08d" d="M430.0 415.4L434.4 417.0L434.4 421.4L430.0 419.8Z"/>
<path fill="#0af088" d="M430.0 419.1L434.4 420.7L434.4 425.2L430.0 423.5Z"/>
<path fill="#0af17e" d="M430.0 426.6L434.4 428.2L434.4 432.7L430.0 431.0Z"/>
<path fill="#0af27b" d="M430.0 430.3L434.4 432.0L434.4 436.4L430.0 434.8Z"/>
<path fill="#0fedc0" d="M433.7 405.7L438.0 407.3L438.0 411.8L433.7 410.2Z"/>
<path fill="#0fedbc" d="M433.7 409.5L438.0 411.1L438.0 415.5L433.7 413.9Z"/>
<path fill="#0feeb8" d="M433.7 413.2L438.0 414.8L438.0 419.3L433.7 417.7Z"/>
<path fill="#0eeeb0" d="M433.7 420.7L438.0 422.3L438.0 426.8L433.7 425.2Z"/>
<path fill="#0defa8" d="M433.7 428.2L438.0 429.9L438.0 434.3L433.7 432.7Z"/>
<path fill="#0defa4" d="M433.7 432.0L438.0 433.6L438.0 438.1L433.7 436.4Z"/>
<path fill="#13ebe6" d="M437.3 407.3L441.7 408.9L441.7 413.3L437.3 411.8Z"/>
<path fill="#13ebe2" d="M437.3 411.1L441.7 412.6L441.7 417.1L437.3 415.5Z"/>
<path fill="#13ecde" d="M437.3 414.8L441.7 416.4L441.7 420.9L437.3 419.3Z"/>
<path fill="#12ecd6" d="M437.3 422.3L441.7 424.0L441.7 428.4L437.3 426.8Z"/>
<path fill="#11edce" d="M437.3 429.9L441.7 431.5L441.7 436.0L437.3 434.3Z"/>
<path fill="#11edca" d="M437.3 433.6L441.7 435.3L441.7 439.8L437.3 438.1Z"/>
<path fill="#17c5f5" d="M467.1 420.3L471.6 422.0L471.6 426.5L467.1 424.9Z"/>
<path fill="#17caf5" d="M467.1 424.2L471.6 425.8L471.6 430.4L467.1 428.7Z"/>
<path fill="#17cef5" d="M467.1 428.0L471.6 429.7L471.6 434.2L467.1 432.5Z"/>
<path fill="#17d3f5" d="M467.1 431.8L471.6 433.5L471.6 438.1L467.1 436.4Z"/>
<path fill="#16d8f5" d="M467.1 435.7L471.6 437.4L471.6 441.9L467.1 440.2Z"/>
<path fill="#16dcf5" d="M467.1 439.5L471.6 441.2L471.6 445.8L467.1 444.1Z"/>
<path fill="#1788f4" d="M470.8 418.1L475.4 419.8L475.4 424.4L470.8 422.7Z"/>
<path fill="#188ef5" d="M470.8 422.0L475.4 423.7L475.4 428.2L470.8 426.5Z"/>
<path fill="#1995f5" d="M470.8 425.8L475.4 427.5L475.4 432.1L470.8 430.4Z"/>
<path fill="#199df5" d="M470.8 429.7L475.4 431.4L475.4 436.0L470.8 434.2Z"/>
<path fill="#18a5f5" d="M470.8 433.5L475.4 435.3L475.4 439.8L470.8 438.1Z"/>
<path fill="#18aaf5" d="M470.8 437.4L475.4 439.1L475.4 443.7L470.8 441.9Z"/>
<path fill="#18aff5" d="M470.8 441.2L475.4 443.0L475.4 447.5L470.8 445.8Z"/>
<path fill="#18b3f5" d="M470.8 445.1L475.4 446.8L475.4 451.4L470.8 449.6Z"/>
<path fill="#136ff3" d="M474.6 439.1L479.3 440.9L479.3 445.4L474.6 443.7Z"/>
<path fill="#1475f3" d="M474.6 446.8L479.3 448.6L479.3 453.2L474.6 451.4Z"/>
<path fill="#157bf3" d="M474.6 450.7L479.3 452.5L479.3 457.0L474.6 455.2Z"/>
<path fill="#1262f2" d="M482.5 434.9L487.2 436.7L487.2 441.2L482.5 439.5Z"/>
<path fill="#1263f2" d="M482.5 438.8L487.2 440.5L487.2 445.1L482.5 443.4Z"/>
<path fill="#105af3" d="M486.4 444.4L491.0 446.2L491.0 450.8L486.4 449.0Z"/>
<path fill="#105cf3" d="M486.4 452.2L491.0 454.0L491.0 458.5L486.4 456.8Z"/>
<path fill="#0730f9" d="M490.3 426.7L494.9 428.4L494.9 433.0L490.3 431.3Z"/>
<path fill="#093bf7" d="M490.3 430.6L494.9 432.3L494.9 436.9L490.3 435.2Z"/>
<path fill="#0b46f6" d="M490.3 434.5L494.9 436.2L494.9 440.8L490.3 439.1Z"/>
<path fill="#0d4cf5" d="M490.3 438.4L494.9 440.1L494.9 444.7L490.3 443.0Z"/>
<path fill="#0d4ef5" d="M490.3 442.3L494.9 444.0L494.9 448.6L490.3 446.9Z"/>
<path fill="#0d4ff5" d="M490.3 446.2L494.9 447.9L494.9 452.5L490.3 450.8Z"/>
<path fill="#0e50f5" d="M490.3 450.1L494.9 451.8L494.9 456.4L490.3 454.7Z"/>
<path fill="#0003ff" d="M494.2 432.3L498.8 434.0L498.8 438.6L494.2 436.9Z"/>
<path fill="#0109fe" d="M494.2 440.1L498.8 441.8L498.8 446.4L494.2 444.7Z"/>
<path fill="#020ffd" d="M494.2 447.9L498.8 449.7L498.8 454.3L494.2 452.5Z"/>
<path fill="#0315fc" d="M494.2 451.8L498.8 453.6L498.8 458.2L494.2 456.4Z"/>
<path fill="#031bfc" d="M494.2 455.7L498.8 457.5L498.8 462.1L494.2 460.3Z"/>
<path fill="#ff9e11" d="M346.4 355.2L349.7 360.4L349.7 363.5L346.4 358.6ZM356.5 375.6L359.8 376.8L359.8 380.2L356.5 379.0Z"/>
<path fill="#ff910f" d="M346.4 358.6L349.7 363.5L349.7 366.6L346.4 362.0ZM354.0 379.2L357.2 381.1L357.2 384.5L354.0 382.7ZM354.0 387.7L357.2 389.3L357.2 392.8L354.0 391.3Z"/>
<path fill="#ff860e" d="M346.4 362.0L349.7 366.6L349.7 369.7L346.4 365.4ZM346.4 385.6L349.7 387.6L349.7 391.4L346.4 389.7ZM349.0 369.0L352.2 371.3L352.2 375.0L349.0 372.8Z"/>
<path fill="#ff7e0e" d="M346.4 365.4L349.7 369.7L349.7 372.8L346.4 368.7Z"/>
<path fill="#ff7c0d" d="M346.4 368.7L349.7 372.8L349.7 375.9L346.4 372.8Z"/>
<path fill="#ff7a0d" d="M346.4 372.1L349.7 375.2L349.7 379.0L346.4 376.2ZM346.4 375.5L349.7 378.3L349.7 382.1L346.4 379.5ZM346.4 378.8L349.7 381.4L349.7 385.2L346.4 382.9Z"/>
<path fill="#ff7b0d" d="M346.4 382.2L349.7 384.5L349.7 388.3L346.4 386.3Z"/>
<path fill="#ff9410" d="M346.4 389.0L349.7 390.7L349.7 394.5L346.4 393.0ZM351.5 389.1L354.7 390.6L354.7 394.2L351.5 392.8ZM354.0 370.6L357.2 372.8L357.2 376.3L354.0 374.1Z"/>
<path fill="#ffa211" d="M346.4 392.3L349.7 393.8L349.7 397.6L346.4 396.4ZM356.5 370.1L359.8 371.3L359.8 374.7L356.5 373.5Z"/>
<path fill="#ff9a10" d="M349.0 359.7L352.2 362.4L352.2 366.1L349.0 363.5ZM356.5 381.1L359.8 382.3L359.8 385.7L356.5 384.5Z"/>
<path fill="#ff900f" d="M349.0 362.8L352.2 365.4L352.2 369.0L349.0 366.6ZM354.0 382.0L357.2 383.8L357.2 387.3L354.0 385.6Z"/>
<path fill="#ff880f" d="M349.0 365.9L352.2 368.3L352.2 372.0L349.0 369.7Z"/>
<path fill="#ff850e" d="M349.0 372.1L352.2 374.3L352.2 377.9L349.0 375.9Z"/>
<path fill="#ff840e" d="M349.0 375.2L352.2 377.2L352.2 380.9L349.0 379.0ZM349.0 384.5L352.2 386.1L352.2 389.8L349.0 388.3Z"/>
<path fill="#ff830e" d="M349.0 378.3L352.2 380.2L352.2 383.9L349.0 382.1ZM349.0 381.4L352.2 383.2L352.2 386.8L349.0 385.2Z"/>
<path fill="#ff8e0f" d="M349.0 387.6L352.2 389.1L352.2 392.8L349.0 391.4Z"/>
<path fill="#ff9910" d="M349.0 390.7L352.2 392.1L352.2 395.7L349.0 394.5Z"/>
<path fill="#ffa411" d="M349.0 393.8L352.2 395.0L352.2 398.7L349.0 397.6ZM351.5 395.0L354.7 396.3L354.7 399.9L351.5 398.7ZM354.0 396.3L357.2 397.6L357.2 401.0L354.0 399.9ZM356.5 397.6L359.8 398.8L359.8 402.2L356.5 401.0Z"/>
<path fill="#ff9b10" d="M351.5 362.4L354.7 364.9L354.7 368.4L351.5 366.1ZM356.5 392.1L359.8 393.3L359.8 396.7L356.5 395.5Z"/>
<path fill="#ff9310" d="M351.5 365.4L354.7 367.7L354.7 371.3L351.5 369.0ZM354.0 373.4L357.2 375.6L357.2 379.0L354.0 377.0Z"/>
<path fill="#ff8f0f" d="M351.5 368.3L354.7 370.6L354.7 374.1L351.5 372.0ZM354.0 384.9L357.2 386.6L357.2 390.0L354.0 388.4Z"/>
<path fill="#ff8d0f" d="M351.5 371.3L354.7 373.4L354.7 377.0L351.5 375.0Z"/>
<path fill="#ff8c0f" d="M351.5 374.3L354.7 376.3L354.7 379.9L351.5 377.9Z"/>
<path fill="#ff8b0f" d="M351.5 377.2L354.7 379.2L354.7 382.7L351.5 380.9ZM351.5 386.1L354.7 387.7L354.7 391.3L351.5 389.8Z"/>
<path fill="#ff8a0f" d="M351.5 380.2L354.7 382.0L354.7 385.6L351.5 383.9ZM351.5 383.2L354.7 384.9L354.7 388.4L351.5 386.8Z"/>
<path fill="#ff9c10" d="M351.5 392.1L354.7 393.5L354.7 397.0L351.5 395.7ZM354.0 364.9L357.2 367.3L357.2 370.8L354.0 368.4ZM356.5 378.3L359.8 379.5L359.8 383.0L356.5 381.8Z"/>
<path fill="#ff9610" d="M354.0 367.7L357.2 370.1L357.2 373.5L354.0 371.3Z"/>
<path fill="#ff920f" d="M354.0 376.3L357.2 378.3L357.2 381.8L354.0 379.9Z"/>
<path fill="#ff9810" d="M354.0 390.6L357.2 392.1L357.2 395.5L354.0 394.2ZM356.5 383.8L359.8 385.0L359.8 388.5L356.5 387.3ZM356.5 389.3L359.8 390.5L359.8 394.0L356.5 392.8Z"/>
<path fill="#ff9e10" d="M354.0 393.5L357.2 394.8L357.2 398.3L354.0 397.0Z"/>
<path fill="#ffa711" d="M356.5 367.3L359.8 368.5L359.8 372.0L356.5 370.8ZM359.1 387.8L362.4 389.0L362.4 392.4L359.1 391.2ZM359.1 390.5L362.4 391.7L362.4 395.2L359.1 394.0Z"/>
<path fill="#ffa011" d="M356.5 372.8L359.8 374.0L359.8 377.5L356.5 376.3Z"/>
<path fill="#ff9710" d="M356.5 386.6L359.8 387.8L359.8 391.2L356.5 390.0Z"/>
<path fill="#ff9f11" d="M356.5 394.8L359.8 396.0L359.8 399.5L356.5 398.3Z"/>
<path fill="#ffb713" d="M359.1 368.5L362.4 369.7L362.4 373.2L359.1 372.0Z"/>
<path fill="#ffb312" d="M359.1 371.3L362.4 372.5L362.4 375.9L359.1 374.7Z"/>
<path fill="#ffb112" d="M359.1 374.0L362.4 375.2L362.4 378.7L359.1 377.5Z"/>
<path fill="#ffaf12" d="M359.1 376.8L362.4 378.0L362.4 381.4L359.1 380.2Z"/>
<path fill="#ffad12" d="M359.1 379.5L362.4 380.7L362.4 384.2L359.1 383.0ZM359.1 398.8L362.4 400.0L362.4 403.4L359.1 402.2Z"/>
<path fill="#ffab12" d="M359.1 382.3L362.4 383.5L362.4 386.9L359.1 385.7ZM359.1 396.0L362.4 397.2L362.4 400.7L359.1 399.5Z"/>
<path fill="#ffa911" d="M359.1 385.0L362.4 386.2L362.4 389.7L359.1 388.5ZM359.1 393.3L362.4 394.5L362.4 397.9L359.1 396.7Z"/>
<path fill="#ffc814" d="M361.7 369.7L365.0 370.9L365.0 374.3L361.7 373.2Z"/>
<path fill="#ffc514" d="M361.7 372.5L365.0 373.6L365.0 377.1L361.7 375.9Z"/>
<path fill="#ffc414" d="M361.7 375.2L365.0 376.4L365.0 379.8L361.7 378.7Z"/>
<path fill="#ffc213" d="M361.7 378.0L365.0 379.1L365.0 382.6L361.7 381.4Z"/>
<path fill="#ffc013" d="M361.7 380.7L365.0 381.9L365.0 385.3L361.7 384.2Z"/>
<path fill="#ffbe13" d="M361.7 383.5L365.0 384.6L365.0 388.1L361.7 386.9Z"/>
<path fill="#ffbd13" d="M361.7 386.2L365.0 387.4L365.0 390.8L361.7 389.7Z"/>
<path fill="#ffbb13" d="M361.7 389.0L365.0 390.1L365.0 393.6L361.7 392.4ZM361.7 391.7L365.0 392.9L365.0 396.3L361.7 395.2ZM361.7 394.5L365.0 395.6L365.0 399.1L361.7 397.9Z"/>
<path fill="#ffbc13" d="M361.7 397.2L365.0 398.4L365.0 401.8L361.7 400.7ZM361.7 400.0L365.0 401.1L365.0 404.6L361.7 403.4Z"/>
<path fill="#fcd814" d="M364.3 370.9L367.6 372.0L367.6 375.5L364.3 374.3Z"/>
<path fill="#fcd614" d="M364.3 373.6L367.6 374.8L367.6 378.3L364.3 377.1Z"/>
<path fill="#fcd514" d="M364.3 376.4L367.6 377.6L367.6 381.0L364.3 379.8Z"/>
<path fill="#fcd414" d="M364.3 379.1L367.6 380.3L367.6 383.8L364.3 382.6Z"/>
<path fill="#fdd214" d="M364.3 381.9L367.6 383.1L367.6 386.5L364.3 385.3Z"/>
<path fill="#fdd114" d="M364.3 384.6L367.6 385.8L367.6 389.3L364.3 388.1Z"/>
<path fill="#fdd014" d="M364.3 387.4L367.6 388.6L367.6 392.0L364.3 390.8Z"/>
<path fill="#fece14" d="M364.3 390.1L367.6 391.3L367.6 394.8L364.3 393.6ZM364.3 392.9L367.6 394.1L367.6 397.5L364.3 396.3Z"/>
<path fill="#fecd14" d="M364.3 395.6L367.6 396.8L367.6 400.3L364.3 399.1Z"/>
<path fill="#fecc14" d="M364.3 398.4L367.6 399.6L367.6 403.0L364.3 401.8ZM364.3 401.1L367.6 402.3L367.6 405.8L364.3 404.6Z"/>
</g></g>
<g fill="none" stroke="#03100c" stroke-opacity="0.9" stroke-width="1.15" stroke-linejoin="round"><path d="M315.1 119.7L316.8 119.0L318.5 118.3L320.2 117.6L322.0 116.9L323.7 116.2L325.4 115.5M325.4 115.5L327.1 114.8L328.8 114.0L330.5 113.3L332.2 112.6L334.0 111.9L335.7 111.2M335.7 111.2L337.4 110.5L339.1 109.8L340.8 109.1L342.5 108.4L344.2 107.7L346.0 107.0M346.0 107.0L347.7 106.3L349.4 105.6L351.1 104.9L352.8 104.2L354.5 103.5L356.2 102.8M325.3 123.6L327.1 122.9L328.8 122.1L330.6 121.4L332.3 120.7L334.1 120.0L335.8 119.3M335.8 119.3L337.6 118.6L339.3 117.9L341.1 117.2L342.8 116.5L344.6 115.8L346.3 115.1M346.3 115.1L348.1 114.4L349.8 113.7L351.6 113.0L353.3 112.3L355.1 111.6L356.8 110.9M356.8 110.9L358.6 110.2L360.3 109.4L362.1 108.7L363.8 108.0L365.6 107.3L367.3 106.6M335.8 127.5L337.6 126.8L339.4 126.1L341.1 125.4L342.9 124.7L344.7 124.0L346.4 123.3M346.4 123.3L348.2 122.6L350.0 121.9L351.8 121.1L353.6 120.4L355.3 119.7L357.1 119.0M357.1 119.0L358.9 118.3L360.6 117.6L362.4 116.9L364.2 116.2L366.0 115.5L367.8 114.8M367.8 114.8L369.5 114.0L371.3 113.3L373.1 112.6L374.8 111.9L376.6 111.2L378.4 110.5M346.8 131.7L348.6 131.0L350.4 130.3L352.1 129.5L353.9 128.8L355.7 128.1L357.5 127.4M357.5 127.4L359.2 126.6L361.0 125.9L362.8 125.2L364.6 124.5L366.4 123.8L368.1 123.0M368.1 123.0L369.9 122.3L371.7 121.6L373.5 120.9L375.2 120.1L377.0 119.4L378.8 118.7M378.8 118.7L380.6 118.0L382.4 117.3L384.1 116.5L385.9 115.8L387.7 115.1L389.5 114.4M357.4 135.7L359.2 135.0L361.0 134.3L362.8 133.5L364.6 132.8L366.4 132.1L368.2 131.3M368.2 131.3L370.0 130.6L371.8 129.9L373.6 129.2L375.4 128.4L377.2 127.7L379.0 127.0M379.0 127.0L380.8 126.3L382.6 125.5L384.4 124.8L386.2 124.1L388.0 123.3L389.8 122.6M389.8 122.6L391.6 121.9L393.4 121.2L395.2 120.4L397.0 119.7L398.8 119.0L400.6 118.2M368.2 139.8L370.0 139.1L371.8 138.3L373.6 137.6L375.4 136.8L377.2 136.1L379.1 135.4M379.1 135.4L380.9 134.6L382.7 133.9L384.5 133.2L386.3 132.4L388.1 131.7L389.9 131.0M389.9 131.0L391.7 130.2L393.5 129.5L395.3 128.8L397.1 128.0L399.0 127.3L400.8 126.5M400.8 126.5L402.6 125.8L404.4 125.1L406.2 124.3L408.0 123.6L409.8 122.9L411.6 122.1M379.3 144.0L381.1 143.2L382.9 142.5L384.7 141.7L386.5 141.0L388.3 140.2L390.1 139.5M390.1 139.5L392.0 138.7L393.8 138.0L395.6 137.2L397.4 136.5L399.2 135.7L401.0 135.0M401.0 135.0L402.8 134.2L404.6 133.5L406.4 132.7L408.2 132.0L410.0 131.2L411.9 130.5M411.9 130.5L413.7 129.7L415.5 129.0L417.3 128.2L419.1 127.5L420.9 126.7L422.7 126.0M390.5 148.2L392.3 147.5L394.1 146.7L395.9 145.9L397.7 145.2L399.5 144.4L401.3 143.6M401.3 143.6L403.1 142.9L404.9 142.1L406.7 141.3L408.5 140.6L410.3 139.8L412.1 139.1M412.1 139.1L413.9 138.3L415.7 137.5L417.5 136.8L419.3 136.0L421.2 135.2L423.0 134.5M423.0 134.5L424.8 133.7L426.6 132.9L428.4 132.2L430.2 131.4L432.0 130.6L433.8 129.9M401.8 152.5L403.5 151.7L405.3 150.9L407.1 150.1L408.9 149.4L410.7 148.6L412.5 147.8M412.5 147.8L414.3 147.0L416.1 146.2L417.9 145.5L419.7 144.7L421.5 143.9L423.3 143.1M423.3 143.1L425.1 142.3L426.9 141.6L428.7 140.8L430.5 140.0L432.3 139.2L434.1 138.4M434.1 138.4L435.9 137.7L437.7 136.9L439.5 136.1L441.3 135.3L443.1 134.5L444.9 133.8M413.4 156.9L415.2 156.1L416.9 155.3L418.7 154.5L420.5 153.7L422.3 152.9L424.0 152.1M424.0 152.1L425.8 151.3L427.6 150.5L429.3 149.7L431.1 148.9L432.9 148.1L434.7 147.3M434.7 147.3L436.4 146.5L438.2 145.7L440.0 144.9L441.8 144.0L443.5 143.2L445.3 142.4M445.3 142.4L447.1 141.6L448.8 140.8L450.6 140.0L452.4 139.2L454.2 138.4L455.9 137.6M424.2 161.0L426.0 160.2L427.8 159.4L429.6 158.6L431.4 157.8L433.2 156.9L434.9 156.1M434.9 156.1L436.7 155.3L438.5 154.5L440.3 153.7L442.1 152.9L443.8 152.1L445.6 151.2M445.6 151.2L447.4 150.4L449.2 149.6L451.0 148.8L452.8 148.0L454.5 147.2L456.3 146.4M456.3 146.4L458.1 145.6L459.9 144.8L461.7 143.9L463.4 143.1L465.2 142.3L467.0 141.5M315.1 119.7L316.8 120.3L318.5 121.0L320.2 121.6L321.9 122.3L323.6 122.9L325.3 123.6M325.3 123.6L327.1 124.2L328.8 124.9L330.6 125.5L332.3 126.2L334.1 126.9L335.8 127.5M335.8 127.5L337.6 128.2L339.5 128.9L341.3 129.6L343.1 130.3L345.0 131.0L346.8 131.7M346.8 131.7L348.6 132.4L350.3 133.0L352.1 133.7L353.9 134.4L355.6 135.0L357.4 135.7M357.4 135.7L359.2 136.4L361.0 137.1L362.8 137.7L364.6 138.4L366.4 139.1L368.2 139.8M368.2 139.8L370.1 140.5L371.9 141.2L373.8 141.9L375.6 142.6L377.4 143.3L379.3 144.0M379.3 144.0L381.2 144.7L383.0 145.4L384.9 146.1L386.8 146.8L388.6 147.5L390.5 148.2M390.5 148.2L392.4 148.9L394.2 149.6L396.1 150.4L398.0 151.1L399.9 151.8L401.8 152.5M401.8 152.5L403.7 153.2L405.6 154.0L407.6 154.7L409.5 155.4L411.5 156.2L413.4 156.9M413.4 156.9L415.2 157.6L417.0 158.3L418.8 158.9L420.6 159.6L422.4 160.3L424.2 161.0M325.4 115.5L327.1 116.1L328.9 116.8L330.6 117.4L332.3 118.0L334.1 118.7L335.8 119.3M335.8 119.3L337.6 120.0L339.4 120.6L341.1 121.3L342.9 122.0L344.7 122.6L346.4 123.3M346.4 123.3L348.3 124.0L350.1 124.6L352.0 125.3L353.8 126.0L355.6 126.7L357.5 127.4M357.5 127.4L359.3 128.0L361.0 128.7L362.8 129.4L364.6 130.0L366.4 130.7L368.2 131.3M368.2 131.3L370.0 132.0L371.8 132.7L373.6 133.4L375.4 134.0L377.2 134.7L379.1 135.4M379.1 135.4L380.9 136.1L382.8 136.7L384.6 137.4L386.5 138.1L388.3 138.8L390.1 139.5M390.1 139.5L392.0 140.2L393.9 140.9L395.7 141.6L397.6 142.3L399.5 142.9L401.3 143.6M401.3 143.6L403.2 144.3L405.1 145.0L406.9 145.7L408.8 146.4L410.7 147.1L412.5 147.8M412.5 147.8L414.4 148.5L416.4 149.2L418.3 149.9L420.2 150.7L422.1 151.4L424.0 152.1M424.0 152.1L425.8 152.8L427.7 153.4L429.5 154.1L431.3 154.8L433.1 155.5L434.9 156.1M335.7 111.2L337.4 111.9L339.2 112.5L341.0 113.2L342.8 113.8L344.5 114.4L346.3 115.1M346.3 115.1L348.1 115.7L349.9 116.4L351.7 117.1L353.5 117.7L355.3 118.4L357.1 119.0M357.1 119.0L358.9 119.7L360.8 120.4L362.6 121.0L364.5 121.7L366.3 122.4L368.1 123.0M368.1 123.0L369.9 123.7L371.8 124.3L373.6 125.0L375.4 125.7L377.2 126.3L379.0 127.0M379.0 127.0L380.8 127.6L382.6 128.3L384.4 129.0L386.3 129.6L388.1 130.3L389.9 131.0M389.9 131.0L391.8 131.6L393.6 132.3L395.5 133.0L397.3 133.7L399.2 134.3L401.0 135.0M401.0 135.0L402.9 135.7L404.7 136.3L406.6 137.0L408.4 137.7L410.3 138.4L412.1 139.1M412.1 139.1L414.0 139.7L415.9 140.4L417.7 141.1L419.6 141.8L421.4 142.4L423.3 143.1M423.3 143.1L425.2 143.8L427.1 144.5L429.0 145.2L430.9 145.9L432.8 146.6L434.7 147.3M434.7 147.3L436.5 147.9L438.3 148.6L440.1 149.3L442.0 149.9L443.8 150.6L445.6 151.2M346.0 107.0L347.8 107.6L349.6 108.3L351.4 108.9L353.2 109.6L355.0 110.2L356.8 110.9M356.8 110.9L358.6 111.5L360.5 112.2L362.3 112.8L364.1 113.5L365.9 114.1L367.8 114.8M367.8 114.8L369.6 115.4L371.4 116.1L373.3 116.7L375.1 117.4L377.0 118.0L378.8 118.7M378.8 118.7L380.6 119.4L382.5 120.0L384.3 120.7L386.1 121.3L387.9 122.0L389.8 122.6M389.8 122.6L391.6 123.3L393.4 123.9L395.3 124.6L397.1 125.2L398.9 125.9L400.8 126.5M400.8 126.5L402.6 127.2L404.5 127.9L406.3 128.5L408.2 129.2L410.0 129.8L411.9 130.5M411.9 130.5L413.7 131.2L415.6 131.8L417.4 132.5L419.3 133.1L421.1 133.8L423.0 134.5M423.0 134.5L424.8 135.1L426.7 135.8L428.5 136.4L430.4 137.1L432.2 137.8L434.1 138.4M434.1 138.4L435.9 139.1L437.8 139.8L439.7 140.4L441.6 141.1L443.4 141.8L445.3 142.4M445.3 142.4L447.1 143.1L449.0 143.8L450.8 144.4L452.6 145.1L454.5 145.7L456.3 146.4M356.2 102.8L358.1 103.4L359.9 104.0L361.8 104.7L363.6 105.3L365.5 106.0L367.3 106.6M367.3 106.6L369.2 107.3L371.0 107.9L372.9 108.6L374.7 109.2L376.6 109.9L378.4 110.5M378.4 110.5L380.2 111.1L382.1 111.8L383.9 112.4L385.8 113.1L387.6 113.7L389.5 114.4M389.5 114.4L391.3 115.0L393.2 115.7L395.0 116.3L396.9 117.0L398.7 117.6L400.6 118.2M400.6 118.2L402.4 118.9L404.2 119.5L406.1 120.2L407.9 120.8L409.8 121.5L411.6 122.1M411.6 122.1L413.5 122.8L415.3 123.4L417.2 124.1L419.0 124.7L420.9 125.4L422.7 126.0M422.7 126.0L424.5 126.6L426.4 127.3L428.2 127.9L430.1 128.6L431.9 129.2L433.8 129.9M433.8 129.9L435.6 130.5L437.5 131.2L439.3 131.8L441.2 132.5L443.0 133.1L444.9 133.8M444.9 133.8L446.7 134.4L448.5 135.0L450.4 135.7L452.2 136.3L454.1 137.0L455.9 137.6M455.9 137.6L457.8 138.3L459.6 138.9L461.5 139.6L463.3 140.2L465.2 140.9L467.0 141.5"/>
<path clip-path="url(#c1)" d="M315.1 119.7L315.1 122.0L315.1 124.3L315.1 126.6L315.1 128.9L315.1 131.2L315.1 133.5M315.1 133.5L315.1 135.9L315.1 138.3L315.1 140.8L315.1 143.2L315.1 145.6L315.1 148.0M315.1 148.0L315.1 150.4L315.1 152.8L315.1 155.2L315.1 157.6L315.1 160.0L315.1 162.4M325.3 123.6L325.3 125.9L325.3 128.2L325.3 130.5L325.3 132.8L325.3 135.1L325.3 137.4M325.3 137.4L325.3 139.8L325.3 142.2L325.3 144.7L325.3 147.1L325.3 149.5L325.3 151.9M325.3 151.9L325.3 154.3L325.3 156.7L325.3 159.1L325.3 161.6L325.3 164.0L325.3 166.4M335.8 127.5L335.8 129.8L335.8 132.2L335.8 134.5L335.8 136.8L335.8 139.1L335.8 141.4M335.8 141.4L335.8 143.8L335.8 146.3L335.8 148.7L335.8 151.1L335.8 153.5L335.8 156.0M335.8 156.0L335.8 158.4L335.8 160.8L335.8 163.2L335.8 165.6L335.8 168.0L335.8 170.5M346.8 131.7L346.8 134.0L346.8 136.3L346.8 138.7L346.8 141.0L346.8 143.3L346.8 145.6M346.8 145.6L346.8 148.0L346.8 150.5L346.8 152.9L346.8 155.3L346.8 157.8L346.8 160.2M346.8 160.2L346.8 162.6L346.8 165.1L346.8 167.5L346.8 169.9L346.8 172.3L346.8 174.7M357.4 135.7L357.4 138.0L357.4 140.4L357.4 142.7L357.4 145.0L357.4 147.3L357.4 149.7M357.4 149.7L357.4 152.1L357.4 154.5L357.4 157.0L357.4 159.4L357.4 161.9L357.4 164.3M357.4 164.3L357.4 166.7L357.4 169.2L357.4 171.6L357.4 174.0L357.4 176.4L357.4 178.9M368.2 139.8L368.2 142.1L368.2 144.5L368.2 146.8L368.2 149.1L368.2 151.4L368.2 153.8M368.2 153.8L368.2 156.2L368.2 158.7L368.2 161.1L368.2 163.6L368.2 166.0L368.2 168.5M368.2 168.5L368.2 170.9L368.2 173.3L368.2 175.8L368.2 178.2L368.2 180.6L368.2 183.1M379.3 144.0L379.3 146.3L379.3 148.7L379.3 151.0L379.3 153.3L379.3 155.7L379.3 158.0M379.3 158.0L379.3 160.5L379.3 162.9L379.3 165.4L379.3 167.8L379.3 170.3L379.3 172.7M379.3 172.7L379.3 175.2L379.3 177.6L379.3 180.1L379.3 182.5L379.3 184.9L379.3 187.4M390.5 148.2L390.5 150.6L390.5 152.9L390.5 155.3L390.5 157.6L390.5 160.0L390.5 162.3M390.5 162.3L390.5 164.8L390.5 167.2L390.5 169.7L390.5 172.1L390.5 174.6L390.5 177.1M390.5 177.1L390.5 179.5L390.5 182.0L390.5 184.4L390.5 186.8L390.5 189.3L390.5 191.7M401.8 152.5L401.8 154.8L401.8 157.2L401.8 159.5L401.8 161.9L401.8 164.2L401.8 166.6M401.8 166.6L401.8 169.1L401.8 171.5L401.8 174.0L401.8 176.5L401.8 178.9L401.8 181.4M401.8 181.4L401.8 183.8L401.8 186.3L401.8 188.8L401.8 191.2L401.8 193.7L401.8 196.1M413.4 156.9L413.4 159.3L413.4 161.6L413.4 164.0L413.4 166.3L413.4 168.7L413.4 171.0M413.4 171.0L413.4 173.5L413.4 176.0L413.4 178.5L413.4 180.9L413.4 183.4L413.4 185.9M413.4 185.9L413.4 188.3L413.4 190.8L413.4 193.3L413.4 195.7L413.4 198.2L413.4 200.6M424.2 161.0L424.2 163.4L424.2 165.7L424.2 168.1L424.2 170.5L424.2 172.8L424.2 175.2M424.2 175.2L424.2 177.7L424.2 180.1L424.2 182.6L424.2 185.1L424.2 187.6L424.2 190.1M424.2 190.1L424.2 192.5L424.2 195.0L424.2 197.5L424.2 199.9L424.2 202.4L424.2 204.9M315.1 119.7L316.8 120.3L318.5 121.0L320.2 121.6L321.9 122.3L323.6 122.9L325.3 123.6M325.3 123.6L327.1 124.2L328.8 124.9L330.6 125.5L332.3 126.2L334.1 126.9L335.8 127.5M335.8 127.5L337.6 128.2L339.5 128.9L341.3 129.6L343.1 130.3L345.0 131.0L346.8 131.7M346.8 131.7L348.6 132.4L350.3 133.0L352.1 133.7L353.9 134.4L355.6 135.0L357.4 135.7M357.4 135.7L359.2 136.4L361.0 137.1L362.8 137.7L364.6 138.4L366.4 139.1L368.2 139.8M368.2 139.8L370.1 140.5L371.9 141.2L373.8 141.9L375.6 142.6L377.4 143.3L379.3 144.0M379.3 144.0L381.2 144.7L383.0 145.4L384.9 146.1L386.8 146.8L388.6 147.5L390.5 148.2M390.5 148.2L392.4 148.9L394.2 149.6L396.1 150.4L398.0 151.1L399.9 151.8L401.8 152.5M401.8 152.5L403.7 153.2L405.6 154.0L407.6 154.7L409.5 155.4L411.5 156.2L413.4 156.9M413.4 156.9L415.2 157.6L417.0 158.3L418.8 158.9L420.6 159.6L422.4 160.3L424.2 161.0M315.1 133.5L316.8 134.1L318.5 134.8L320.2 135.4L321.9 136.1L323.6 136.7L325.3 137.4M325.3 137.4L327.1 138.1L328.8 138.7L330.6 139.4L332.3 140.1L334.1 140.7L335.8 141.4M335.8 141.4L337.6 142.1L339.5 142.8L341.3 143.5L343.1 144.2L345.0 144.9L346.8 145.6M346.8 145.6L348.6 146.3L350.3 147.0L352.1 147.6L353.9 148.3L355.6 149.0L357.4 149.7M357.4 149.7L359.2 150.3L361.0 151.0L362.8 151.7L364.6 152.4L366.4 153.1L368.2 153.8M368.2 153.8L370.1 154.5L371.9 155.2L373.8 155.9L375.6 156.6L377.4 157.3L379.3 158.0M379.3 158.0L381.2 158.7L383.0 159.4L384.9 160.2L386.8 160.9L388.6 161.6L390.5 162.3M390.5 162.3L392.4 163.0L394.2 163.7L396.1 164.4L398.0 165.2L399.9 165.9L401.8 166.6M401.8 166.6L403.7 167.3L405.6 168.1L407.6 168.8L409.5 169.6L411.5 170.3L413.4 171.0M413.4 171.0L415.2 171.7L417.0 172.4L418.8 173.1L420.6 173.8L422.4 174.5L424.2 175.2M315.1 148.0L316.8 148.7L318.5 149.3L320.2 150.0L321.9 150.6L323.6 151.3L325.3 151.9M325.3 151.9L327.1 152.6L328.8 153.3L330.6 154.0L332.3 154.6L334.1 155.3L335.8 156.0M335.8 156.0L337.6 156.7L339.5 157.4L341.3 158.1L343.1 158.8L345.0 159.5L346.8 160.2M346.8 160.2L348.6 160.9L350.3 161.6L352.1 162.3L353.9 162.9L355.6 163.6L357.4 164.3M357.4 164.3L359.2 165.0L361.0 165.7L362.8 166.4L364.6 167.1L366.4 167.8L368.2 168.5M368.2 168.5L370.1 169.2L371.9 169.9L373.8 170.6L375.6 171.3L377.4 172.0L379.3 172.7M379.3 172.7L381.2 173.5L383.0 174.2L384.9 174.9L386.8 175.6L388.6 176.3L390.5 177.1M390.5 177.1L392.4 177.8L394.2 178.5L396.1 179.2L398.0 180.0L399.9 180.7L401.8 181.4M401.8 181.4L403.7 182.1L405.6 182.9L407.6 183.6L409.5 184.4L411.5 185.1L413.4 185.9M413.4 185.9L415.2 186.6L417.0 187.3L418.8 188.0L420.6 188.7L422.4 189.4L424.2 190.1M315.1 162.4L316.8 163.1L318.5 163.7L320.2 164.4L321.9 165.0L323.6 165.7L325.3 166.4M325.3 166.4L327.1 167.0L328.8 167.7L330.6 168.4L332.3 169.1L334.1 169.8L335.8 170.5M335.8 170.5L337.6 171.2L339.5 171.9L341.3 172.6L343.1 173.3L345.0 174.0L346.8 174.7M346.8 174.7L348.6 175.4L350.3 176.1L352.1 176.8L353.9 177.5L355.6 178.2L357.4 178.9M357.4 178.9L359.2 179.6L361.0 180.3L362.8 181.0L364.6 181.7L366.4 182.4L368.2 183.1M368.2 183.1L370.1 183.8L371.9 184.5L373.8 185.2L375.6 185.9L377.4 186.7L379.3 187.4M379.3 187.4L381.2 188.1L383.0 188.8L384.9 189.5L386.8 190.3L388.6 191.0L390.5 191.7M390.5 191.7L392.4 192.5L394.2 193.2L396.1 193.9L398.0 194.6L399.9 195.4L401.8 196.1M401.8 196.1L403.7 196.9L405.6 197.6L407.6 198.4L409.5 199.1L411.5 199.9L413.4 200.6M413.4 200.6L415.2 201.3L417.0 202.0L418.8 202.7L420.6 203.4L422.4 204.2L424.2 204.9"/>
<path d="M315.1 148.0L315.1 150.4L315.1 152.8L315.1 155.2L315.1 157.6L315.1 160.0L315.1 162.4M315.1 162.4L315.1 164.8L315.1 167.1L315.1 169.5L315.1 171.9L315.1 174.2L315.1 176.6M315.1 176.6L315.1 178.9L315.1 181.3L315.1 183.6L315.1 186.0L315.1 188.3L315.1 190.7M315.1 190.7L315.1 193.0L315.1 195.3L315.1 197.6L315.1 200.0L315.1 202.3L315.1 204.6M315.1 204.6L315.1 207.0L315.1 209.4L315.1 211.8L315.1 214.1L315.1 216.5L315.1 218.9M315.1 218.9L315.1 221.2L315.1 223.6L315.1 225.9L315.1 228.3L315.1 230.7L315.1 233.0M315.1 233.0L315.1 235.3L315.1 237.7L315.1 240.0L315.1 242.3L315.1 244.7L315.1 247.0M315.1 247.0L315.1 249.3L315.1 251.7L315.1 254.0L315.1 256.3L315.1 258.7L315.1 261.0M315.1 261.0L315.1 263.3L315.1 265.6L315.1 267.9L315.1 270.2L315.1 272.5L315.1 274.8M315.1 274.8L315.1 277.0L315.1 279.3L315.1 281.6L315.1 283.9L315.1 286.2L315.1 288.5M315.1 288.5L315.1 290.9L315.1 293.2L315.1 295.6L315.1 297.9L315.1 300.2L315.1 302.6M315.1 302.6L315.1 304.9L315.1 307.2L315.1 309.4L315.1 311.7L315.1 314.0L315.1 316.2M315.1 316.2L315.1 318.5L315.1 320.8L315.1 323.0L315.1 325.2L315.1 327.5L315.1 329.8M315.1 329.8L315.1 332.0L315.1 334.2L315.1 336.5L315.1 338.8L315.1 341.0L315.1 343.2M315.1 343.2L315.1 345.4L315.1 347.5L315.1 349.6L315.1 351.7L315.1 353.9L315.1 356.0M315.1 356.0L315.1 358.1L315.1 360.3L315.1 362.4L315.1 364.5L315.1 366.7L315.1 368.8M315.1 368.8L315.1 370.9L315.1 373.0L315.1 375.1L315.1 377.3L315.1 379.4L315.1 381.5M325.3 152.0L325.3 154.4L325.3 156.8L325.3 159.2L325.3 161.6L325.3 164.0L325.3 166.4M325.3 166.4L325.3 168.8L325.3 171.2L325.3 173.6L325.3 175.9L325.3 178.3L325.3 180.7M325.3 180.7L325.3 183.0L325.3 185.4L325.3 187.7L325.3 190.1L325.3 192.5L325.3 194.8M325.3 194.8L325.3 197.1L325.3 199.5L325.3 201.8L325.3 204.1L325.3 206.4L325.3 208.7M325.3 208.7L325.3 211.1L325.3 213.5L325.3 215.9L325.3 218.3L325.3 220.7L325.3 223.1M325.3 223.1L325.3 225.4L325.3 227.8L325.3 230.1L325.3 232.5L325.3 234.9L325.3 237.2M325.3 237.2L325.3 239.6L325.3 241.9L325.3 244.2L325.3 246.6L325.3 248.9L325.3 251.3M325.3 251.3L325.3 253.6L325.3 255.9L325.3 258.3L325.3 260.6L325.3 262.9L325.3 265.3M325.3 265.3L325.3 267.6L325.3 269.9L325.3 272.2L325.3 274.5L325.3 276.8L325.3 279.1M325.3 279.1L325.3 281.4L325.3 283.7L325.3 286.0L325.3 288.3L325.3 290.6L325.3 292.9M325.3 292.9L325.3 295.2L325.3 297.6L325.3 299.9L325.3 302.3L325.3 304.6L325.3 307.0M325.3 307.0L325.3 309.3L325.3 311.6L325.3 313.8L325.3 316.1L325.3 318.4L325.3 320.7M325.3 320.7L325.3 322.9L325.3 325.2L325.3 327.4L325.3 329.7L325.3 332.0L325.3 334.2M325.3 334.2L325.3 336.5L325.3 338.7L325.3 341.0L325.3 343.2L325.3 345.5L325.3 347.8M325.3 347.8L325.3 349.9L325.3 352.0L325.3 354.1L325.3 356.3L325.3 358.4L325.3 360.5M325.3 360.5L325.3 362.7L325.3 364.8L325.3 367.0L325.3 369.1L325.3 371.2L325.3 373.4M325.3 373.4L325.3 375.5L325.3 377.6L325.3 379.7L325.3 381.9L325.3 384.0L325.3 386.1M335.8 156.1L335.8 158.5L335.8 160.9L335.8 163.4L335.8 165.8L335.8 168.2L335.8 170.6M335.8 170.6L335.8 173.0L335.8 175.3L335.8 177.7L335.8 180.1L335.8 182.5L335.8 184.9M335.8 184.9L335.8 187.2L335.8 189.6L335.8 191.9L335.8 194.3L335.8 196.7L335.8 199.0M335.8 199.0L335.8 201.4L335.8 203.7L335.8 206.0L335.8 208.3L335.8 210.7L335.8 213.0M335.8 213.0L335.8 215.4L335.8 217.8L335.8 220.2L335.8 222.6L335.8 225.0L335.8 227.4M335.8 227.4L335.8 229.7L335.8 232.1L335.8 234.5L335.8 236.8L335.8 239.2L335.8 241.6M335.8 241.6L335.8 243.9L335.8 246.2L335.8 248.6L335.8 250.9L335.8 253.3L335.8 255.6M335.8 255.6L335.8 258.0L335.8 260.3L335.8 262.7L335.8 265.0L335.8 267.4L335.8 269.7M335.8 269.7L335.8 272.0L335.8 274.3L335.8 276.6L335.8 278.9L335.8 281.2L335.8 283.5M335.8 283.5L335.8 285.8L335.8 288.1L335.8 290.4L335.8 292.7L335.8 295.0L335.8 297.3M335.8 297.3L335.8 299.7L335.8 302.1L335.8 304.4L335.8 306.8L335.8 309.2L335.8 311.5M335.8 311.5L335.8 313.8L335.8 316.1L335.8 318.4L335.8 320.7L335.8 323.0L335.8 325.2M335.8 325.2L335.8 327.5L335.8 329.8L335.8 332.0L335.8 334.3L335.8 336.6L335.8 338.8M335.8 338.8L335.8 341.1L335.8 343.3L335.8 345.6L335.8 347.9L335.8 350.1L335.8 352.4M335.8 352.4L335.8 354.5L335.8 356.7L335.8 358.8L335.8 360.9L335.8 363.1L335.8 365.2M335.8 365.2L335.8 367.4L335.8 369.5L335.8 371.6L335.8 373.8L335.8 375.9L335.8 378.1M335.8 378.1L335.8 380.2L335.8 382.3L335.8 384.5L335.8 386.6L335.8 388.7L335.8 390.9M346.8 160.4L346.8 162.8L346.8 165.3L346.8 167.7L346.8 170.1L346.8 172.5L346.8 174.9M346.8 174.9L346.8 177.3L346.8 179.7L346.8 182.1L346.8 184.5L346.8 186.9L346.8 189.3M346.8 189.3L346.8 191.6L346.8 194.0L346.8 196.4L346.8 198.7L346.8 201.1L346.8 203.5M346.8 203.5L346.8 205.8L346.8 208.1L346.8 210.5L346.8 212.8L346.8 215.1L346.8 217.5M346.8 217.5L346.8 219.9L346.8 222.3L346.8 224.7L346.8 227.1L346.8 229.5L346.8 231.9M346.8 231.9L346.8 234.3L346.8 236.6L346.8 239.0L346.8 241.4L346.8 243.7L346.8 246.1M346.8 246.1L346.8 248.5L346.8 250.8L346.8 253.2L346.8 255.5L346.8 257.9L346.8 260.2M346.8 260.2L346.8 262.6L346.8 264.9L346.8 267.3L346.8 269.6L346.8 272.0L346.8 274.3M346.8 274.3L346.8 276.6L346.8 278.9L346.8 281.3L346.8 283.6L346.8 285.9L346.8 288.2M346.8 288.2L346.8 290.5L346.8 292.8L346.8 295.1L346.8 297.4L346.8 299.7L346.8 302.0M346.8 302.0L346.8 304.4L346.8 306.8L346.8 309.2L346.8 311.5L346.8 313.9L346.8 316.3M346.8 316.3L346.8 318.6L346.8 320.8L346.8 323.1L346.8 325.4L346.8 327.7L346.8 330.0M346.8 330.0L346.8 332.3L346.8 334.6L346.8 336.8L346.8 339.1L346.8 341.4L346.8 343.6M346.8 343.6L346.8 345.9L346.8 348.2L346.8 350.4L346.8 352.7L346.8 355.0L346.8 357.2M346.8 357.2L346.8 359.4L346.8 361.5L346.8 363.7L346.8 365.8L346.8 368.0L346.8 370.1M346.8 370.1L346.8 372.3L346.8 374.4L346.8 376.6L346.8 378.7L346.8 380.9L346.8 383.0M346.8 383.0L346.8 385.2L346.8 387.3L346.8 389.4L346.8 391.6L346.8 393.7L346.8 395.8M315.1 148.0L316.8 148.7L318.5 149.3L320.2 150.0L321.9 150.7L323.6 151.3L325.3 152.0M325.3 152.0L327.1 152.7L328.8 153.4L330.6 154.1L332.3 154.7L334.1 155.4L335.8 156.1M335.8 156.1L337.6 156.8L339.5 157.6L341.3 158.3L343.1 159.0L345.0 159.7L346.8 160.4M315.1 162.4L316.8 163.1L318.5 163.7L320.2 164.4L321.9 165.1L323.6 165.8L325.3 166.4M325.3 166.4L327.1 167.1L328.8 167.8L330.6 168.5L332.3 169.2L334.1 169.9L335.8 170.6M335.8 170.6L337.6 171.3L339.5 172.0L341.3 172.8L343.1 173.5L345.0 174.2L346.8 174.9M315.1 176.6L316.8 177.3L318.5 178.0L320.2 178.6L321.9 179.3L323.6 180.0L325.3 180.7M325.3 180.7L327.1 181.4L328.8 182.1L330.6 182.8L332.3 183.5L334.1 184.2L335.8 184.9M335.8 184.9L337.6 185.6L339.5 186.3L341.3 187.1L343.1 187.8L345.0 188.5L346.8 189.3M315.1 190.7L316.8 191.4L318.5 192.1L320.2 192.8L321.9 193.4L323.6 194.1L325.3 194.8M325.3 194.8L327.1 195.5L328.8 196.2L330.6 196.9L332.3 197.6L334.1 198.3L335.8 199.0M335.8 199.0L337.6 199.8L339.5 200.5L341.3 201.2L343.1 202.0L345.0 202.7L346.8 203.5M315.1 204.6L316.8 205.3L318.5 206.0L320.2 206.7L321.9 207.4L323.6 208.1L325.3 208.7M325.3 208.7L327.1 209.5L328.8 210.2L330.6 210.9L332.3 211.6L334.1 212.3L335.8 213.0M335.8 213.0L337.6 213.8L339.5 214.5L341.3 215.2L343.1 216.0L345.0 216.7L346.8 217.5M315.1 218.9L316.8 219.6L318.5 220.3L320.2 221.0L321.9 221.7L323.6 222.4L325.3 223.1M325.3 223.1L327.1 223.8L328.8 224.5L330.6 225.2L332.3 225.9L334.1 226.7L335.8 227.4M335.8 227.4L337.6 228.1L339.5 228.9L341.3 229.6L343.1 230.4L345.0 231.1L346.8 231.9M315.1 233.0L316.8 233.7L318.5 234.4L320.2 235.1L321.9 235.8L323.6 236.5L325.3 237.2M325.3 237.2L327.1 237.9L328.8 238.7L330.6 239.4L332.3 240.1L334.1 240.8L335.8 241.6M335.8 241.6L337.6 242.3L339.5 243.1L341.3 243.8L343.1 244.6L345.0 245.3L346.8 246.1M315.1 247.0L316.8 247.7L318.5 248.4L320.2 249.1L321.9 249.8L323.6 250.5L325.3 251.3M325.3 251.3L327.1 252.0L328.8 252.7L330.6 253.4L332.3 254.2L334.1 254.9L335.8 255.6M335.8 255.6L337.6 256.4L339.5 257.2L341.3 257.9L343.1 258.7L345.0 259.4L346.8 260.2M315.1 261.0L316.8 261.7L318.5 262.4L320.2 263.1L321.9 263.9L323.6 264.6L325.3 265.3M325.3 265.3L327.1 266.0L328.8 266.8L330.6 267.5L332.3 268.2L334.1 269.0L335.8 269.7M335.8 269.7L337.6 270.5L339.5 271.2L341.3 272.0L343.1 272.8L345.0 273.6L346.8 274.3M315.1 274.8L316.8 275.5L318.5 276.2L320.2 276.9L321.9 277.6L323.6 278.4L325.3 279.1M325.3 279.1L327.1 279.8L328.8 280.6L330.6 281.3L332.3 282.0L334.1 282.8L335.8 283.5M335.8 283.5L337.6 284.3L339.5 285.1L341.3 285.9L343.1 286.6L345.0 287.4L346.8 288.2M315.1 288.5L316.8 289.2L318.5 290.0L320.2 290.7L321.9 291.4L323.6 292.1L325.3 292.9M325.3 292.9L327.1 293.6L328.8 294.4L330.6 295.1L332.3 295.8L334.1 296.6L335.8 297.3M335.8 297.3L337.6 298.1L339.5 298.9L341.3 299.7L343.1 300.5L345.0 301.3L346.8 302.0M315.1 302.6L316.8 303.3L318.5 304.1L320.2 304.8L321.9 305.5L323.6 306.3L325.3 307.0M325.3 307.0L327.1 307.7L328.8 308.5L330.6 309.3L332.3 310.0L334.1 310.8L335.8 311.5M335.8 311.5L337.6 312.3L339.5 313.1L341.3 313.9L343.1 314.7L345.0 315.5L346.8 316.3M315.1 316.2L316.8 317.0L318.5 317.7L320.2 318.5L321.9 319.2L323.6 319.9L325.3 320.7M325.3 320.7L327.1 321.4L328.8 322.2L330.6 323.0L332.3 323.7L334.1 324.5L335.8 325.2M335.8 325.2L337.6 326.0L339.5 326.8L341.3 327.6L343.1 328.4L345.0 329.2L346.8 330.0M315.1 329.8L316.8 330.5L318.5 331.2L320.2 332.0L321.9 332.7L323.6 333.5L325.3 334.2M325.3 334.2L327.1 335.0L328.8 335.7L330.6 336.5L332.3 337.3L334.1 338.0L335.8 338.8M335.8 338.8L337.6 339.6L339.5 340.4L341.3 341.2L343.1 342.0L345.0 342.8L346.8 343.6M315.1 343.2L316.8 344.0L318.5 344.8L320.2 345.5L321.9 346.3L323.6 347.0L325.3 347.8M325.3 347.8L327.1 348.5L328.8 349.3L330.6 350.1L332.3 350.8L334.1 351.6L335.8 352.4M335.8 352.4L337.6 353.2L339.5 354.0L341.3 354.8L343.1 355.6L345.0 356.4L346.8 357.2M315.1 356.0L316.8 356.8L318.5 357.5L320.2 358.3L321.9 359.0L323.6 359.8L325.3 360.5M325.3 360.5L327.1 361.3L328.8 362.1L330.6 362.9L332.3 363.7L334.1 364.4L335.8 365.2M335.8 365.2L337.6 366.0L339.5 366.8L341.3 367.7L343.1 368.5L345.0 369.3L346.8 370.1M315.1 368.8L316.8 369.6L318.5 370.3L320.2 371.1L321.9 371.8L323.6 372.6L325.3 373.4M325.3 373.4L327.1 374.2L328.8 374.9L330.6 375.7L332.3 376.5L334.1 377.3L335.8 378.1M335.8 378.1L337.6 378.9L339.5 379.7L341.3 380.6L343.1 381.4L345.0 382.2L346.8 383.0M315.1 381.5L316.8 382.3L318.5 383.0L320.2 383.8L321.9 384.6L323.6 385.3L325.3 386.1M325.3 386.1L327.1 386.9L328.8 387.7L330.6 388.5L332.3 389.3L334.1 390.1L335.8 390.9M335.8 390.9L337.6 391.7L339.5 392.5L341.3 393.3L343.1 394.2L345.0 395.0L346.8 395.8"/>
<path clip-path="url(#c3)" d="M346.8 145.8L346.8 148.3L346.8 150.7L346.8 153.1L346.8 155.6L346.8 158.0L346.8 160.4M346.8 160.4L346.8 162.8L346.8 165.3L346.8 167.7L346.8 170.1L346.8 172.5L346.8 174.9M346.8 174.9L346.8 177.3L346.8 179.7L346.8 182.1L346.8 184.5L346.8 186.9L346.8 189.3M346.8 189.3L346.8 191.6L346.8 194.0L346.8 196.4L346.8 198.7L346.8 201.1L346.8 203.5M346.8 203.5L346.8 205.8L346.8 208.1L346.8 210.5L346.8 212.8L346.8 215.1L346.8 217.5M346.8 217.5L346.8 219.9L346.8 222.3L346.8 224.7L346.8 227.1L346.8 229.5L346.8 231.9M346.8 231.9L346.8 234.3L346.8 236.6L346.8 239.0L346.8 241.4L346.8 243.7L346.8 246.1M346.8 246.1L346.8 248.5L346.8 250.8L346.8 253.2L346.8 255.5L346.8 257.9L346.8 260.2M346.8 260.2L346.8 262.6L346.8 264.9L346.8 267.3L346.8 269.6L346.8 272.0L346.8 274.3M346.8 274.3L346.8 276.6L346.8 278.9L346.8 281.3L346.8 283.6L346.8 285.9L346.8 288.2M346.8 288.2L346.8 290.5L346.8 292.8L346.8 295.1L346.8 297.4L346.8 299.7L346.8 302.0M346.8 302.0L346.8 304.4L346.8 306.8L346.8 309.2L346.8 311.5L346.8 313.9L346.8 316.3M346.8 316.3L346.8 318.6L346.8 320.8L346.8 323.1L346.8 325.4L346.8 327.7L346.8 330.0M346.8 330.0L346.8 332.3L346.8 334.6L346.8 336.8L346.8 339.1L346.8 341.4L346.8 343.6M356.8 140.5L356.8 142.9L356.8 145.4L356.8 147.8L356.8 150.2L356.8 152.7L356.8 155.1M356.8 155.1L356.8 157.5L356.8 159.9L356.8 162.4L356.8 164.8L356.8 167.2L356.8 169.6M356.8 169.6L356.8 172.0L356.8 174.4L356.8 176.8L356.8 179.2L356.8 181.5L356.8 183.9M356.8 183.9L356.8 186.3L356.8 188.7L356.8 191.0L356.8 193.4L356.8 195.8L356.8 198.1M356.8 198.1L356.8 200.5L356.8 202.8L356.8 205.1L356.8 207.5L356.8 209.8L356.8 212.2M356.8 212.2L356.8 214.6L356.8 217.0L356.8 219.4L356.8 221.8L356.8 224.2L356.8 226.6M356.8 226.6L356.8 228.9L356.8 231.3L356.8 233.7L356.8 236.0L356.8 238.4L356.8 240.8M356.8 240.8L356.8 243.1L356.8 245.5L356.8 247.8L356.8 250.2L356.8 252.5L356.8 254.9M356.8 254.9L356.8 257.2L356.8 259.6L356.8 261.9L356.8 264.3L356.8 266.6L356.8 269.0M356.8 269.0L356.8 271.3L356.8 273.6L356.8 275.9L356.8 278.2L356.8 280.6L356.8 282.9M356.8 282.9L356.8 285.2L356.8 287.5L356.8 289.8L356.8 292.1L356.8 294.4L356.8 296.7M356.8 296.7L356.8 299.1L356.8 301.5L356.8 303.8L356.8 306.2L356.8 308.6L356.8 310.9M356.8 310.9L356.8 313.2L356.8 315.5L356.8 317.8L356.8 320.1L356.8 322.4L356.8 324.7M356.8 324.7L356.8 327.0L356.8 329.2L356.8 331.5L356.8 333.8L356.8 336.0L356.8 338.3M366.9 135.2L366.9 137.6L366.9 140.0L366.9 142.5L366.9 144.9L366.9 147.4L366.9 149.8M366.9 149.8L366.9 152.2L366.9 154.6L366.9 157.0L366.9 159.5L366.9 161.9L366.9 164.3M366.9 164.3L366.9 166.7L366.9 169.1L366.9 171.5L366.9 173.8L366.9 176.2L366.9 178.6M366.9 178.6L366.9 181.0L366.9 183.3L366.9 185.7L366.9 188.1L366.9 190.5L366.9 192.8M366.9 192.8L366.9 195.2L366.9 197.5L366.9 199.8L366.9 202.2L366.9 204.5L366.9 206.8M366.9 206.8L366.9 209.2L366.9 211.6L366.9 214.0L366.9 216.4L366.9 218.8L366.9 221.2M366.9 221.2L366.9 223.6L366.9 226.0L366.9 228.4L366.9 230.7L366.9 233.1L366.9 235.5M366.9 235.5L366.9 237.8L366.9 240.2L366.9 242.5L366.9 244.9L366.9 247.2L366.9 249.6M366.9 249.6L366.9 251.9L366.9 254.3L366.9 256.6L366.9 259.0L366.9 261.3L366.9 263.7M366.9 263.7L366.9 266.0L366.9 268.3L366.9 270.6L366.9 272.9L366.9 275.2L366.9 277.5M366.9 277.5L366.9 279.9L366.9 282.2L366.9 284.5L366.9 286.8L366.9 289.1L366.9 291.4M366.9 291.4L366.9 293.8L366.9 296.1L366.9 298.5L366.9 300.9L366.9 303.2L366.9 305.6M366.9 305.6L366.9 307.9L366.9 310.2L366.9 312.5L366.9 314.8L366.9 317.1L366.9 319.4M366.9 319.4L366.9 321.6L366.9 323.9L366.9 326.2L366.9 328.5L366.9 330.7L366.9 333.0M376.9 129.9L376.9 132.3L376.9 134.7L376.9 137.2L376.9 139.6L376.9 142.0L376.9 144.5M376.9 144.5L376.9 146.9L376.9 149.3L376.9 151.7L376.9 154.1L376.9 156.6L376.9 159.0M376.9 159.0L376.9 161.4L376.9 163.7L376.9 166.1L376.9 168.5L376.9 170.9L376.9 173.3M376.9 173.3L376.9 175.7L376.9 178.0L376.9 180.4L376.9 182.8L376.9 185.1L376.9 187.5M376.9 187.5L376.9 189.8L376.9 192.2L376.9 194.5L376.9 196.8L376.9 199.2L376.9 201.5M376.9 201.5L376.9 203.9L376.9 206.3L376.9 208.7L376.9 211.1L376.9 213.5L376.9 215.9M376.9 215.9L376.9 218.3L376.9 220.7L376.9 223.0L376.9 225.4L376.9 227.8L376.9 230.1M376.9 230.1L376.9 232.5L376.9 234.8L376.9 237.2L376.9 239.5L376.9 241.9L376.9 244.2M376.9 244.2L376.9 246.6L376.9 249.0L376.9 251.3L376.9 253.7L376.9 256.0L376.9 258.4M376.9 258.4L376.9 260.7L376.9 263.0L376.9 265.3L376.9 267.6L376.9 269.9L376.9 272.2M376.9 272.2L376.9 274.5L376.9 276.8L376.9 279.2L376.9 281.5L376.9 283.8L376.9 286.1M376.9 286.1L376.9 288.5L376.9 290.8L376.9 293.2L376.9 295.6L376.9 297.9L376.9 300.3M376.9 300.3L376.9 302.6L376.9 304.9L376.9 307.2L376.9 309.5L376.9 311.8L376.9 314.1M376.9 314.1L376.9 316.3L376.9 318.6L376.9 320.9L376.9 323.1L376.9 325.4L376.9 327.7M387.0 124.5L387.0 127.0L387.0 129.4L387.0 131.8L387.0 134.3L387.0 136.7L387.0 139.1M387.0 139.1L387.0 141.6L387.0 144.0L387.0 146.4L387.0 148.8L387.0 151.2L387.0 153.7M387.0 153.7L387.0 156.0L387.0 158.4L387.0 160.8L387.0 163.2L387.0 165.6L387.0 168.0M387.0 168.0L387.0 170.3L387.0 172.7L387.0 175.1L387.0 177.4L387.0 179.8L387.0 182.2M387.0 182.2L387.0 184.5L387.0 186.8L387.0 189.2L387.0 191.5L387.0 193.9L387.0 196.2M387.0 196.2L387.0 198.6L387.0 201.0L387.0 203.4L387.0 205.8L387.0 208.2L387.0 210.6M387.0 210.6L387.0 213.0L387.0 215.3L387.0 217.7L387.0 220.1L387.0 222.4L387.0 224.8M387.0 224.8L387.0 227.2L387.0 229.5L387.0 231.9L387.0 234.2L387.0 236.6L387.0 238.9M387.0 238.9L387.0 241.3L387.0 243.6L387.0 246.0L387.0 248.3L387.0 250.7L387.0 253.0M387.0 253.0L387.0 255.3L387.0 257.7L387.0 260.0L387.0 262.3L387.0 264.6L387.0 266.9M387.0 266.9L387.0 269.2L387.0 271.5L387.0 273.8L387.0 276.1L387.0 278.5L387.0 280.8M387.0 280.8L387.0 283.1L387.0 285.5L387.0 287.9L387.0 290.2L387.0 292.6L387.0 295.0M387.0 295.0L387.0 297.3L387.0 299.6L387.0 301.9L387.0 304.1L387.0 306.4L387.0 308.7M387.0 308.7L387.0 311.0L387.0 313.3L387.0 315.5L387.0 317.8L387.0 320.1L387.0 322.3M397.0 119.2L397.0 121.6L397.0 124.1L397.0 126.5L397.0 129.0L397.0 131.4L397.0 133.8M397.0 133.8L397.0 136.2L397.0 138.7L397.0 141.1L397.0 143.5L397.0 145.9L397.0 148.3M397.0 148.3L397.0 150.7L397.0 153.1L397.0 155.5L397.0 157.9L397.0 160.3L397.0 162.6M397.0 162.6L397.0 165.0L397.0 167.4L397.0 169.8L397.0 172.1L397.0 174.5L397.0 176.9M397.0 176.9L397.0 179.2L397.0 181.5L397.0 183.9L397.0 186.2L397.0 188.5L397.0 190.9M397.0 190.9L397.0 193.3L397.0 195.7L397.0 198.1L397.0 200.5L397.0 202.9L397.0 205.3M397.0 205.3L397.0 207.6L397.0 210.0L397.0 212.4L397.0 214.8L397.0 217.1L397.0 219.5M397.0 219.5L397.0 221.8L397.0 224.2L397.0 226.5L397.0 228.9L397.0 231.3L397.0 233.6M397.0 233.6L397.0 236.0L397.0 238.3L397.0 240.7L397.0 243.0L397.0 245.4L397.0 247.7M397.0 247.7L397.0 250.0L397.0 252.3L397.0 254.6L397.0 257.0L397.0 259.3L397.0 261.6M397.0 261.6L397.0 263.9L397.0 266.2L397.0 268.5L397.0 270.8L397.0 273.1L397.0 275.4M397.0 275.4L397.0 277.8L397.0 280.2L397.0 282.5L397.0 284.9L397.0 287.3L397.0 289.7M397.0 289.7L397.0 291.9L397.0 294.2L397.0 296.5L397.0 298.8L397.0 301.1L397.0 303.4M397.0 303.4L397.0 305.7L397.0 308.0L397.0 310.2L397.0 312.5L397.0 314.8L397.0 317.0M346.8 145.8L348.5 144.9L350.1 144.0L351.8 143.2L353.5 142.3L355.2 141.4L356.8 140.5M356.8 140.5L358.5 139.6L360.2 138.7L361.9 137.8L363.5 136.9L365.2 136.1L366.9 135.2M366.9 135.2L368.6 134.3L370.2 133.4L371.9 132.5L373.6 131.6L375.2 130.7L376.9 129.9M376.9 129.9L378.6 129.0L380.3 128.1L381.9 127.2L383.6 126.3L385.3 125.4L387.0 124.5M387.0 124.5L388.6 123.6L390.3 122.8L392.0 121.9L393.7 121.0L395.3 120.1L397.0 119.2M346.8 160.4L348.5 159.5L350.1 158.7L351.8 157.8L353.5 156.9L355.2 156.0L356.8 155.1M356.8 155.1L358.5 154.2L360.2 153.3L361.9 152.4L363.5 151.6L365.2 150.7L366.9 149.8M366.9 149.8L368.6 148.9L370.2 148.0L371.9 147.1L373.6 146.2L375.2 145.4L376.9 144.5M376.9 144.5L378.6 143.6L380.3 142.7L381.9 141.8L383.6 140.9L385.3 140.0L387.0 139.1M387.0 139.1L388.6 138.3L390.3 137.4L392.0 136.5L393.7 135.6L395.3 134.7L397.0 133.8M346.8 174.9L348.5 174.1L350.1 173.2L351.8 172.3L353.5 171.4L355.2 170.5L356.8 169.6M356.8 169.6L358.5 168.7L360.2 167.8L361.9 167.0L363.5 166.1L365.2 165.2L366.9 164.3M366.9 164.3L368.6 163.4L370.2 162.5L371.9 161.6L373.6 160.7L375.2 159.9L376.9 159.0M376.9 159.0L378.6 158.1L380.3 157.2L381.9 156.3L383.6 155.4L385.3 154.5L387.0 153.7M387.0 153.7L388.6 152.8L390.3 151.9L392.0 151.0L393.7 150.1L395.3 149.2L397.0 148.3M346.8 189.3L348.5 188.4L350.1 187.5L351.8 186.6L353.5 185.7L355.2 184.8L356.8 183.9M356.8 183.9L358.5 183.0L360.2 182.2L361.9 181.3L363.5 180.4L365.2 179.5L366.9 178.6M366.9 178.6L368.6 177.7L370.2 176.8L371.9 175.9L373.6 175.1L375.2 174.2L376.9 173.3M376.9 173.3L378.6 172.4L380.3 171.5L381.9 170.6L383.6 169.7L385.3 168.9L387.0 168.0M387.0 168.0L388.6 167.1L390.3 166.2L392.0 165.3L393.7 164.4L395.3 163.5L397.0 162.6M346.8 203.5L348.5 202.6L350.1 201.7L351.8 200.8L353.5 199.9L355.2 199.0L356.8 198.1M356.8 198.1L358.5 197.3L360.2 196.4L361.9 195.5L363.5 194.6L365.2 193.7L366.9 192.8M366.9 192.8L368.6 191.9L370.2 191.0L371.9 190.2L373.6 189.3L375.2 188.4L376.9 187.5M376.9 187.5L378.6 186.6L380.3 185.7L381.9 184.8L383.6 184.0L385.3 183.1L387.0 182.2M387.0 182.2L388.6 181.3L390.3 180.4L392.0 179.5L393.7 178.6L395.3 177.7L397.0 176.9M346.8 217.5L348.5 216.6L350.1 215.7L351.8 214.8L353.5 213.9L355.2 213.0L356.8 212.2M356.8 212.2L358.5 211.3L360.2 210.4L361.9 209.5L363.5 208.6L365.2 207.7L366.9 206.8M366.9 206.8L368.6 205.9L370.2 205.1L371.9 204.2L373.6 203.3L375.2 202.4L376.9 201.5M376.9 201.5L378.6 200.6L380.3 199.7L381.9 198.9L383.6 198.0L385.3 197.1L387.0 196.2M387.0 196.2L388.6 195.3L390.3 194.4L392.0 193.5L393.7 192.6L395.3 191.8L397.0 190.9M346.8 231.9L348.5 231.0L350.1 230.1L351.8 229.2L353.5 228.3L355.2 227.5L356.8 226.6M356.8 226.6L358.5 225.7L360.2 224.8L361.9 223.9L363.5 223.0L365.2 222.1L366.9 221.2M366.9 221.2L368.6 220.4L370.2 219.5L371.9 218.6L373.6 217.7L375.2 216.8L376.9 215.9M376.9 215.9L378.6 215.0L380.3 214.1L381.9 213.3L383.6 212.4L385.3 211.5L387.0 210.6M387.0 210.6L388.6 209.7L390.3 208.8L392.0 207.9L393.7 207.1L395.3 206.2L397.0 205.3M346.8 246.1L348.5 245.2L350.1 244.3L351.8 243.4L353.5 242.6L355.2 241.7L356.8 240.8M356.8 240.8L358.5 239.9L360.2 239.0L361.9 238.1L363.5 237.2L365.2 236.3L366.9 235.5M366.9 235.5L368.6 234.6L370.2 233.7L371.9 232.8L373.6 231.9L375.2 231.0L376.9 230.1M376.9 230.1L378.6 229.2L380.3 228.4L381.9 227.5L383.6 226.6L385.3 225.7L387.0 224.8M387.0 224.8L388.6 223.9L390.3 223.0L392.0 222.2L393.7 221.3L395.3 220.4L397.0 219.5M346.8 260.2L348.5 259.3L350.1 258.4L351.8 257.5L353.5 256.7L355.2 255.8L356.8 254.9M356.8 254.9L358.5 254.0L360.2 253.1L361.9 252.2L363.5 251.3L365.2 250.5L366.9 249.6M366.9 249.6L368.6 248.7L370.2 247.8L371.9 246.9L373.6 246.0L375.2 245.1L376.9 244.2M376.9 244.2L378.6 243.4L380.3 242.5L381.9 241.6L383.6 240.7L385.3 239.8L387.0 238.9M387.0 238.9L388.6 238.0L390.3 237.2L392.0 236.3L393.7 235.4L395.3 234.5L397.0 233.6M346.8 274.3L348.5 273.4L350.1 272.5L351.8 271.7L353.5 270.8L355.2 269.9L356.8 269.0M356.8 269.0L358.5 268.1L360.2 267.2L361.9 266.3L363.5 265.5L365.2 264.6L366.9 263.7M366.9 263.7L368.6 262.8L370.2 261.9L371.9 261.0L373.6 260.1L375.2 259.2L376.9 258.4M376.9 258.4L378.6 257.5L380.3 256.6L381.9 255.7L383.6 254.8L385.3 253.9L387.0 253.0M387.0 253.0L388.6 252.2L390.3 251.3L392.0 250.4L393.7 249.5L395.3 248.6L397.0 247.7M346.8 288.2L348.5 287.3L350.1 286.4L351.8 285.5L353.5 284.6L355.2 283.7L356.8 282.9M356.8 282.9L358.5 282.0L360.2 281.1L361.9 280.2L363.5 279.3L365.2 278.4L366.9 277.5M366.9 277.5L368.6 276.7L370.2 275.8L371.9 274.9L373.6 274.0L375.2 273.1L376.9 272.2M376.9 272.2L378.6 271.3L380.3 270.4L381.9 269.6L383.6 268.7L385.3 267.8L387.0 266.9M387.0 266.9L388.6 266.0L390.3 265.1L392.0 264.2L393.7 263.4L395.3 262.5L397.0 261.6M346.8 302.0L348.5 301.2L350.1 300.3L351.8 299.4L353.5 298.5L355.2 297.6L356.8 296.7M356.8 296.7L358.5 295.8L360.2 295.0L361.9 294.1L363.5 293.2L365.2 292.3L366.9 291.4M366.9 291.4L368.6 290.5L370.2 289.6L371.9 288.7L373.6 287.9L375.2 287.0L376.9 286.1M376.9 286.1L378.6 285.2L380.3 284.3L381.9 283.4L383.6 282.5L385.3 281.6L387.0 280.8M387.0 280.8L388.6 279.9L390.3 279.0L392.0 278.1L393.7 277.2L395.3 276.3L397.0 275.4M346.8 316.3L348.5 315.4L350.1 314.5L351.8 313.6L353.5 312.7L355.2 311.8L356.8 310.9M356.8 310.9L358.5 310.0L360.2 309.2L361.9 308.3L363.5 307.4L365.2 306.5L366.9 305.6M366.9 305.6L368.6 304.7L370.2 303.8L371.9 303.0L373.6 302.1L375.2 301.2L376.9 300.3M376.9 300.3L378.6 299.4L380.3 298.5L381.9 297.6L383.6 296.7L385.3 295.9L387.0 295.0M387.0 295.0L388.6 294.1L390.3 293.2L392.0 292.3L393.7 291.4L395.3 290.5L397.0 289.7M346.8 330.0L348.5 329.1L350.1 328.2L351.8 327.4L353.5 326.5L355.2 325.6L356.8 324.7M356.8 324.7L358.5 323.8L360.2 322.9L361.9 322.0L363.5 321.2L365.2 320.3L366.9 319.4M366.9 319.4L368.6 318.5L370.2 317.6L371.9 316.7L373.6 315.8L375.2 314.9L376.9 314.1M376.9 314.1L378.6 313.2L380.3 312.3L381.9 311.4L383.6 310.5L385.3 309.6L387.0 308.7M387.0 308.7L388.6 307.8L390.3 307.0L392.0 306.1L393.7 305.2L395.3 304.3L397.0 303.4M346.8 343.6L348.5 342.7L350.1 341.9L351.8 341.0L353.5 340.1L355.2 339.2L356.8 338.3M356.8 338.3L358.5 337.4L360.2 336.5L361.9 335.6L363.5 334.8L365.2 333.9L366.9 333.0M366.9 333.0L368.6 332.1L370.2 331.2L371.9 330.3L373.6 329.4L375.2 328.6L376.9 327.7M376.9 327.7L378.6 326.8L380.3 325.9L381.9 325.0L383.6 324.1L385.3 323.2L387.0 322.3M387.0 322.3L388.6 321.5L390.3 320.6L392.0 319.7L393.7 318.8L395.3 317.9L397.0 317.0M372.3 168.0L372.3 212.0M382.8 172.0L382.8 218.0"/>
<path d="M346.8 343.6L346.8 345.0L346.8 346.9L346.8 349.2L346.8 351.6L346.8 353.8L346.8 355.6M346.8 355.6L347.3 357.0L347.9 358.2L348.6 359.2L349.5 360.2L350.3 361.1L351.2 362.1M351.2 362.1L352.0 363.1L352.8 364.1L353.7 365.0L354.6 365.9L355.7 366.8L356.9 367.7M356.9 367.7L358.5 368.6L360.4 369.5L362.4 370.4L364.4 371.2L366.0 371.9L367.2 372.4M356.8 338.3L356.9 339.6L356.9 341.4L357.0 343.5L357.0 345.6L357.1 347.7L357.2 349.4M357.2 349.4L357.7 350.7L358.3 351.9L359.1 352.9L359.9 353.9L360.7 354.8L361.5 355.8M361.5 355.8L362.4 356.7L363.2 357.6L364.0 358.5L364.9 359.4L366.0 360.2L367.1 361.0M367.1 361.0L368.6 361.9L370.3 362.7L372.1 363.5L373.9 364.3L375.4 364.9L376.5 365.4M366.9 333.0L367.0 334.1L367.0 335.8L367.2 337.7L367.3 339.7L367.5 341.6L367.6 343.2M367.6 343.2L368.1 344.5L368.8 345.6L369.5 346.6L370.2 347.6L371.1 348.5L371.9 349.4M371.9 349.4L372.7 350.3L373.5 351.2L374.4 352.0L375.3 352.8L376.2 353.6L377.3 354.4M377.3 354.4L378.7 355.2L380.2 355.9L381.9 356.7L383.4 357.4L384.8 358.0L385.7 358.4M376.9 327.7L377.0 328.7L377.2 330.2L377.3 332.0L377.5 333.8L377.8 335.5L378.1 337.0M378.1 337.0L378.6 338.2L379.2 339.3L379.9 340.3L380.6 341.3L381.4 342.2L382.2 343.1M382.2 343.1L383.0 343.9L383.8 344.8L384.7 345.6L385.6 346.3L386.5 347.0L387.6 347.7M387.6 347.7L388.8 348.4L390.2 349.2L391.6 349.8L393.0 350.5L394.1 351.0L395.0 351.4M387.0 322.3L387.1 323.3L387.3 324.6L387.5 326.2L387.8 327.9L388.1 329.4L388.5 330.8M388.5 330.8L389.0 332.0L389.6 333.0L390.3 334.0L391.0 335.0L391.8 335.9L392.6 336.7M392.6 336.7L393.3 337.6L394.2 338.3L395.0 339.1L395.9 339.8L396.8 340.4L397.8 341.1M397.8 341.1L398.9 341.7L400.1 342.4L401.3 343.0L402.5 343.6L403.5 344.0L404.2 344.4M397.0 317.0L397.2 317.9L397.4 319.1L397.7 320.5L398.0 321.9L398.4 323.4L398.9 324.6M398.9 324.6L399.4 325.7L400.0 326.7L400.7 327.7L401.4 328.7L402.1 329.6L402.9 330.4M402.9 330.4L403.7 331.2L404.5 331.9L405.4 332.6L406.2 333.2L407.1 333.8L408.0 334.4M408.0 334.4L409.0 335.0L410.0 335.6L411.1 336.1L412.1 336.7L412.9 337.1L413.5 337.4M346.8 343.6L348.5 342.7L350.1 341.9L351.8 341.0L353.5 340.1L355.2 339.2L356.8 338.3M356.8 338.3L358.5 337.4L360.2 336.5L361.9 335.6L363.5 334.8L365.2 333.9L366.9 333.0M366.9 333.0L368.6 332.1L370.2 331.2L371.9 330.3L373.6 329.4L375.2 328.6L376.9 327.7M376.9 327.7L378.6 326.8L380.3 325.9L381.9 325.0L383.6 324.1L385.3 323.2L387.0 322.3M387.0 322.3L388.6 321.5L390.3 320.6L392.0 319.7L393.7 318.8L395.3 317.9L397.0 317.0M346.8 355.6L348.5 354.6L350.3 353.5L352.0 352.5L353.7 351.5L355.5 350.4L357.2 349.4M357.2 349.4L359.0 348.4L360.7 347.3L362.4 346.3L364.2 345.3L365.9 344.2L367.6 343.2M367.6 343.2L369.4 342.2L371.1 341.1L372.9 340.1L374.6 339.1L376.3 338.0L378.1 337.0M378.1 337.0L379.8 336.0L381.5 334.9L383.3 333.9L385.0 332.9L386.7 331.8L388.5 330.8M388.5 330.8L390.2 329.8L392.0 328.7L393.7 327.7L395.4 326.7L397.2 325.6L398.9 324.6M351.2 362.1L352.9 361.0L354.6 360.0L356.4 358.9L358.1 357.9L359.8 356.8L361.5 355.8M361.5 355.8L363.3 354.7L365.0 353.6L366.7 352.6L368.4 351.5L370.2 350.5L371.9 349.4M371.9 349.4L373.6 348.4L375.3 347.3L377.0 346.2L378.8 345.2L380.5 344.1L382.2 343.1M382.2 343.1L383.9 342.0L385.7 341.0L387.4 339.9L389.1 338.9L390.8 337.8L392.6 336.7M392.6 336.7L394.3 335.7L396.0 334.6L397.7 333.6L399.5 332.5L401.2 331.5L402.9 330.4M356.9 367.7L358.6 366.6L360.3 365.5L362.0 364.4L363.7 363.3L365.4 362.1L367.1 361.0M367.1 361.0L368.8 359.9L370.5 358.8L372.2 357.7L373.9 356.6L375.6 355.5L377.3 354.4M377.3 354.4L379.0 353.3L380.7 352.2L382.4 351.0L384.2 349.9L385.9 348.8L387.6 347.7M387.6 347.7L389.3 346.6L391.0 345.5L392.7 344.4L394.4 343.3L396.1 342.2L397.8 341.1M397.8 341.1L399.5 339.9L401.2 338.8L402.9 337.7L404.6 336.6L406.3 335.5L408.0 334.4M367.2 372.4L368.7 371.2L370.3 370.1L371.8 368.9L373.4 367.7L374.9 366.6L376.5 365.4M376.5 365.4L378.0 364.2L379.5 363.1L381.1 361.9L382.6 360.7L384.2 359.6L385.7 358.4M385.7 358.4L387.3 357.2L388.8 356.1L390.3 354.9L391.9 353.7L393.4 352.6L395.0 351.4M395.0 351.4L396.5 350.2L398.1 349.1L399.6 347.9L401.2 346.7L402.7 345.6L404.2 344.4M404.2 344.4L405.8 343.2L407.3 342.1L408.9 340.9L410.4 339.7L412.0 338.6L413.5 337.4M367.2 372.4L368.9 373.2L370.7 374.0L372.4 374.8L374.2 375.6L375.9 376.4L377.7 377.2M377.7 377.2L379.5 378.0L381.2 378.9L383.0 379.7L384.8 380.5L386.5 381.3L388.3 382.1M388.3 382.1L390.1 382.9L391.8 383.7L393.6 384.5L395.3 385.3L397.1 386.1L398.8 386.9M398.8 386.9L400.5 387.7L402.2 388.5L403.9 389.2L405.6 390.0L407.3 390.8L409.0 391.5M409.0 391.5L410.8 392.3L412.5 393.0L414.2 393.8L416.0 394.5L417.8 395.3L419.5 396.0M419.5 396.0L421.3 396.8L423.1 397.6L424.9 398.4L426.8 399.2L428.6 400.0L430.4 400.7M430.4 400.7L432.2 401.5L434.0 402.3L435.9 403.1L437.7 403.9L439.5 404.7L441.3 405.4M441.3 405.4L443.1 406.2L445.0 407.0L446.8 407.8L448.6 408.6L450.5 409.4L452.3 410.2M452.3 410.2L454.2 411.0L456.1 411.8L458.0 412.7L459.8 413.5L461.7 414.3L463.6 415.2M463.6 415.2L465.5 416.0L467.4 416.8L469.3 417.7L471.2 418.5L473.1 419.3L475.0 420.2M475.0 420.2L477.0 421.0L478.9 421.9L480.9 422.8L482.9 423.6L484.8 424.5L486.8 425.4M486.8 425.4L488.7 426.2L490.7 427.1L492.6 427.9L494.5 428.8L496.5 429.6L498.4 430.5M498.4 430.5L500.5 431.4L502.6 432.3L504.7 433.2L506.8 434.2L508.9 435.1L511.0 436.0M511.0 436.0L513.0 436.9L515.1 437.8L517.1 438.7L519.2 439.7L521.2 440.6L523.3 441.5M523.3 441.5L525.5 442.5L527.8 443.5L530.0 444.5L532.2 445.5L534.5 446.5L536.7 447.5M536.7 447.5L538.9 448.4L541.1 449.4L543.2 450.4L545.4 451.4L547.6 452.3L549.8 453.3M549.8 453.3L552.0 454.2L554.3 455.1L556.5 456.0L558.8 456.9L561.0 457.8L563.3 458.7M563.3 458.7L565.1 459.4L567.0 460.2L568.8 460.9L570.7 461.6L572.5 462.4L574.4 463.1M376.5 365.4L378.2 366.2L380.0 367.0L381.7 367.8L383.5 368.6L385.2 369.4L387.0 370.2M387.0 370.2L388.7 371.0L390.5 371.8L392.3 372.6L394.0 373.4L395.8 374.2L397.6 375.0M397.6 375.0L399.3 375.7L401.1 376.5L402.8 377.3L404.6 378.1L406.3 378.9L408.1 379.7M408.1 379.7L409.8 380.5L411.5 381.2L413.2 382.0L414.9 382.8L416.6 383.5L418.3 384.3M418.3 384.3L420.1 385.0L421.8 385.8L423.6 386.5L425.3 387.3L427.1 388.0L428.8 388.8M428.8 388.8L430.6 389.6L432.5 390.3L434.3 391.1L436.1 391.9L437.9 392.7L439.7 393.5M439.7 393.5L441.5 394.3L443.4 395.0L445.2 395.8L447.0 396.6L448.8 397.4L450.6 398.2M450.6 398.2L452.5 399.0L454.3 399.7L456.1 400.5L458.0 401.3L459.8 402.1L461.7 402.9M461.7 402.9L463.5 403.7L465.4 404.6L467.3 405.4L469.2 406.2L471.1 407.0L473.0 407.8M473.0 407.8L474.9 408.7L476.8 409.5L478.7 410.3L480.6 411.2L482.5 412.0L484.4 412.8M484.4 412.8L486.3 413.7L488.3 414.6L490.3 415.4L492.2 416.3L494.2 417.1L496.2 418.0M496.2 418.0L498.1 418.8L500.1 419.7L502.0 420.5L503.9 421.4L505.9 422.2L507.8 423.1M507.8 423.1L509.9 424.0L512.0 424.9L514.1 425.8L516.2 426.7L518.3 427.7L520.4 428.6M520.4 428.6L522.5 429.5L524.5 430.4L526.6 431.3L528.6 432.2L530.7 433.1L532.7 434.0M532.7 434.0L535.0 435.0L537.2 436.0L539.4 437.0L541.7 438.0L543.9 439.0L546.1 439.9M546.1 439.9L548.3 440.9L550.5 441.9L552.7 442.8L554.9 443.8L557.1 444.8L559.3 445.7M559.3 445.7L561.5 446.6L563.8 447.6L566.0 448.5L568.3 449.4L570.5 450.3L572.8 451.2M572.8 451.2L574.6 451.9L576.5 452.7L578.3 453.4L580.2 454.2L582.0 454.9L583.9 455.7M385.7 358.4L387.5 359.2L389.2 360.0L391.0 360.8L392.7 361.5L394.5 362.3L396.2 363.1M396.2 363.1L398.0 363.9L399.8 364.7L401.6 365.5L403.3 366.2L405.1 367.0L406.9 367.8M406.9 367.8L408.6 368.6L410.4 369.4L412.1 370.2L413.9 370.9L415.6 371.7L417.4 372.5M417.4 372.5L419.1 373.3L420.8 374.0L422.5 374.8L424.2 375.5L425.9 376.3L427.6 377.0M427.6 377.0L429.4 377.8L431.1 378.5L432.9 379.3L434.6 380.0L436.4 380.8L438.1 381.5M438.1 381.5L440.0 382.3L441.8 383.1L443.6 383.9L445.4 384.6L447.2 385.4L449.1 386.2M449.1 386.2L450.9 387.0L452.7 387.8L454.5 388.6L456.3 389.3L458.2 390.1L460.0 390.9M460.0 390.9L461.8 391.7L463.7 392.5L465.5 393.3L467.3 394.1L469.2 394.8L471.0 395.6M471.0 395.6L472.9 396.4L474.8 397.3L476.7 398.1L478.6 398.9L480.4 399.7L482.3 400.5M482.3 400.5L484.2 401.4L486.1 402.2L488.0 403.0L489.9 403.8L491.8 404.7L493.7 405.5M493.7 405.5L495.7 406.4L497.7 407.2L499.7 408.1L501.6 408.9L503.6 409.8L505.6 410.6M505.6 410.6L507.5 411.5L509.4 412.3L511.4 413.2L513.3 414.0L515.3 414.8L517.2 415.7M517.2 415.7L519.3 416.6L521.4 417.5L523.5 418.4L525.6 419.3L527.7 420.2L529.8 421.2M529.8 421.2L531.9 422.1L533.9 423.0L536.0 423.9L538.0 424.8L540.1 425.7L542.2 426.6M542.2 426.6L544.4 427.5L546.6 428.5L548.9 429.5L551.1 430.5L553.3 431.4L555.6 432.4M555.6 432.4L557.8 433.4L560.0 434.3L562.1 435.3L564.3 436.3L566.5 437.2L568.7 438.2M568.7 438.2L571.0 439.1L573.2 440.0L575.5 440.9L577.7 441.9L580.0 442.8L582.2 443.7M582.2 443.7L584.1 444.5L585.9 445.2L587.8 446.0L589.7 446.7L591.5 447.5L593.4 448.3M395.0 351.4L396.7 352.2L398.5 352.9L400.2 353.7L402.0 354.5L403.8 355.3L405.5 356.0M405.5 356.0L407.3 356.8L409.1 357.6L410.8 358.4L412.6 359.1L414.4 359.9L416.1 360.7M416.1 360.7L417.9 361.5L419.7 362.2L421.4 363.0L423.2 363.8L424.9 364.5L426.7 365.3M426.7 365.3L428.4 366.1L430.1 366.8L431.8 367.6L433.5 368.3L435.2 369.0L436.9 369.8M436.9 369.8L438.7 370.5L440.4 371.3L442.2 372.0L443.9 372.8L445.7 373.5L447.4 374.3M447.4 374.3L449.3 375.0L451.1 375.8L452.9 376.6L454.7 377.4L456.6 378.2L458.4 378.9M458.4 378.9L460.2 379.7L462.0 380.5L463.8 381.3L465.7 382.1L467.5 382.8L469.3 383.6M469.3 383.6L471.2 384.4L473.0 385.2L474.8 386.0L476.7 386.8L478.5 387.6L480.4 388.3M480.4 388.3L482.2 389.2L484.1 390.0L486.0 390.8L487.9 391.6L489.8 392.4L491.7 393.2M491.7 393.2L493.6 394.1L495.5 394.9L497.4 395.7L499.3 396.5L501.2 397.3L503.1 398.2M503.1 398.2L505.1 399.0L507.1 399.9L509.0 400.7L511.0 401.6L513.0 402.4L515.0 403.3M515.0 403.3L516.9 404.1L518.8 404.9L520.8 405.8L522.7 406.6L524.7 407.4L526.6 408.3M526.6 408.3L528.7 409.2L530.8 410.1L532.9 411.0L535.0 411.9L537.1 412.8L539.2 413.7M539.2 413.7L541.3 414.6L543.4 415.5L545.4 416.4L547.5 417.3L549.5 418.2L551.6 419.1M551.6 419.1L553.8 420.1L556.1 421.0L558.3 422.0L560.5 423.0L562.8 423.9L565.0 424.9M565.0 424.9L567.2 425.9L569.4 426.8L571.6 427.8L573.8 428.7L576.0 429.7L578.2 430.6M578.2 430.6L580.4 431.5L582.7 432.5L584.9 433.4L587.2 434.4L589.4 435.3L591.7 436.2M591.7 436.2L593.6 437.0L595.4 437.8L597.3 438.5L599.1 439.3L601.0 440.1L602.8 440.8M404.2 344.4L406.0 345.2L407.8 345.9L409.5 346.7L411.3 347.4L413.0 348.2L414.8 349.0M414.8 349.0L416.6 349.7L418.3 350.5L420.1 351.3L421.9 352.0L423.7 352.8L425.4 353.6M425.4 353.6L427.2 354.3L428.9 355.1L430.7 355.8L432.5 356.6L434.2 357.4L436.0 358.1M436.0 358.1L437.7 358.8L439.4 359.6L441.1 360.3L442.8 361.1L444.5 361.8L446.2 362.5M446.2 362.5L448.0 363.3L449.7 364.0L451.5 364.8L453.2 365.5L455.0 366.3L456.8 367.0M456.8 367.0L458.6 367.8L460.4 368.6L462.2 369.4L464.1 370.1L465.9 370.9L467.7 371.7M467.7 371.7L469.5 372.5L471.4 373.2L473.2 374.0L475.0 374.8L476.8 375.6L478.7 376.4M478.7 376.4L480.5 377.1L482.3 377.9L484.2 378.7L486.0 379.5L487.9 380.3L489.7 381.1M489.7 381.1L491.6 381.9L493.5 382.7L495.4 383.5L497.3 384.3L499.2 385.1L501.0 385.9M501.0 385.9L503.0 386.7L504.9 387.6L506.8 388.4L508.7 389.2L510.6 390.0L512.5 390.8M512.5 390.8L514.5 391.7L516.4 392.5L518.4 393.4L520.4 394.2L522.4 395.1L524.3 395.9M524.3 395.9L526.3 396.7L528.2 397.6L530.2 398.4L532.1 399.2L534.1 400.1L536.0 400.9M536.0 400.9L538.1 401.8L540.2 402.7L542.3 403.6L544.4 404.5L546.5 405.4L548.7 406.3M548.7 406.3L550.7 407.2L552.8 408.1L554.8 409.0L556.9 409.8L558.9 410.7L561.0 411.6M561.0 411.6L563.2 412.6L565.5 413.5L567.7 414.5L570.0 415.5L572.2 416.4L574.5 417.4M574.5 417.4L576.7 418.3L578.8 419.3L581.0 420.2L583.2 421.2L585.4 422.1L587.6 423.0M587.6 423.0L589.9 424.0L592.1 424.9L594.4 425.9L596.7 426.8L598.9 427.8L601.2 428.7M601.2 428.7L603.0 429.5L604.9 430.3L606.7 431.1L608.6 431.9L610.5 432.6L612.3 433.4M413.5 337.4L415.3 338.1L417.0 338.9L418.8 339.6L420.5 340.4L422.3 341.1L424.1 341.9M424.1 341.9L425.8 342.6L427.6 343.4L429.4 344.2L431.2 344.9L432.9 345.7L434.7 346.4M434.7 346.4L436.5 347.2L438.2 347.9L440.0 348.7L441.7 349.4L443.5 350.2L445.3 350.9M445.3 350.9L447.0 351.6L448.7 352.4L450.4 353.1L452.1 353.8L453.8 354.5L455.5 355.3M455.5 355.3L457.3 356.0L459.0 356.8L460.8 357.5L462.6 358.3L464.3 359.0L466.1 359.8M466.1 359.8L467.9 360.5L469.7 361.3L471.6 362.1L473.4 362.9L475.2 363.6L477.0 364.4M477.0 364.4L478.9 365.2L480.7 366.0L482.5 366.8L484.3 367.5L486.2 368.3L488.0 369.1M488.0 369.1L489.8 369.9L491.7 370.7L493.5 371.4L495.4 372.2L497.2 373.0L499.1 373.8M499.1 373.8L500.9 374.6L502.8 375.4L504.7 376.2L506.6 377.0L508.5 377.8L510.4 378.6M510.4 378.6L512.3 379.4L514.2 380.2L516.1 381.1L518.1 381.9L520.0 382.7L521.9 383.5M521.9 383.5L523.8 384.3L525.8 385.2L527.8 386.0L529.8 386.9L531.8 387.7L533.7 388.5M533.7 388.5L535.7 389.4L537.6 390.2L539.6 391.0L541.5 391.8L543.5 392.7L545.4 393.5M545.4 393.5L547.5 394.4L549.6 395.3L551.7 396.2L553.8 397.1L556.0 398.0L558.1 398.9M558.1 398.9L560.1 399.8L562.2 400.6L564.2 401.5L566.3 402.4L568.4 403.3L570.4 404.1M570.4 404.1L572.7 405.1L574.9 406.1L577.2 407.0L579.4 408.0L581.7 408.9L583.9 409.9M583.9 409.9L586.1 410.8L588.3 411.7L590.5 412.7L592.7 413.6L594.9 414.5L597.1 415.5M597.1 415.5L599.3 416.4L601.6 417.4L603.9 418.4L606.1 419.3L608.4 420.3L610.6 421.3M610.6 421.3L612.5 422.0L614.4 422.8L616.2 423.6L618.1 424.4L619.9 425.2L621.8 426.0M367.2 372.4L368.7 371.3L370.3 370.1L371.8 368.9L373.4 367.8L374.9 366.6L376.5 365.4M376.5 365.4L378.0 364.2L379.5 363.1L381.1 361.9L382.6 360.7L384.2 359.6L385.7 358.4M385.7 358.4L387.3 357.2L388.8 356.1L390.4 354.9L391.9 353.7L393.4 352.6L395.0 351.4M395.0 351.4L396.5 350.2L398.1 349.1L399.6 347.9L401.2 346.7L402.7 345.6L404.2 344.4M404.2 344.4L405.8 343.2L407.3 342.1L408.9 340.9L410.4 339.7L412.0 338.6L413.5 337.4M377.7 377.2L379.2 376.1L380.8 374.9L382.3 373.7L383.9 372.5L385.4 371.3L387.0 370.2M387.0 370.2L388.5 369.0L390.1 367.8L391.6 366.6L393.2 365.5L394.7 364.3L396.2 363.1M396.2 363.1L397.8 361.9L399.3 360.7L400.9 359.6L402.4 358.4L404.0 357.2L405.5 356.0M405.5 356.0L407.1 354.8L408.6 353.7L410.1 352.5L411.7 351.3L413.2 350.1L414.8 349.0M414.8 349.0L416.3 347.8L417.9 346.6L419.4 345.4L421.0 344.2L422.5 343.1L424.1 341.9M388.3 382.1L389.8 380.9L391.4 379.7L392.9 378.5L394.5 377.3L396.0 376.1L397.6 375.0M397.6 375.0L399.1 373.8L400.7 372.6L402.2 371.4L403.8 370.2L405.3 369.0L406.9 367.8M406.9 367.8L408.4 366.6L410.0 365.4L411.5 364.3L413.1 363.1L414.6 361.9L416.1 360.7M416.1 360.7L417.7 359.5L419.2 358.3L420.8 357.1L422.3 355.9L423.9 354.7L425.4 353.6M425.4 353.6L427.0 352.4L428.5 351.2L430.1 350.0L431.6 348.8L433.2 347.6L434.7 346.4M398.8 386.9L400.3 385.7L401.9 384.5L403.4 383.3L405.0 382.1L406.5 380.9L408.1 379.7M408.1 379.7L409.6 378.5L411.2 377.3L412.7 376.1L414.3 374.9L415.8 373.7L417.4 372.5M417.4 372.5L418.9 371.3L420.5 370.1L422.0 368.9L423.6 367.7L425.1 366.5L426.7 365.3M426.7 365.3L428.2 364.1L429.8 362.9L431.3 361.7L432.9 360.5L434.4 359.3L436.0 358.1M436.0 358.1L437.5 356.9L439.1 355.7L440.6 354.5L442.2 353.3L443.7 352.1L445.3 350.9M409.0 391.5L410.6 390.3L412.1 389.1L413.7 387.9L415.2 386.7L416.8 385.5L418.3 384.3M418.3 384.3L419.9 383.0L421.4 381.8L423.0 380.6L424.5 379.4L426.1 378.2L427.6 377.0M427.6 377.0L429.2 375.8L430.7 374.6L432.3 373.4L433.8 372.2L435.4 371.0L436.9 369.8M436.9 369.8L438.5 368.6L440.0 367.3L441.6 366.1L443.1 364.9L444.7 363.7L446.2 362.5M446.2 362.5L447.8 361.3L449.3 360.1L450.9 358.9L452.4 357.7L454.0 356.5L455.5 355.3M419.5 396.0L421.1 394.8L422.6 393.6L424.2 392.4L425.7 391.2L427.3 390.0L428.8 388.8M428.8 388.8L430.4 387.6L431.9 386.4L433.5 385.1L435.0 383.9L436.6 382.7L438.1 381.5M438.1 381.5L439.7 380.3L441.2 379.1L442.8 377.9L444.3 376.7L445.9 375.5L447.4 374.3M447.4 374.3L449.0 373.1L450.6 371.9L452.1 370.6L453.7 369.4L455.2 368.2L456.8 367.0M456.8 367.0L458.3 365.8L459.9 364.6L461.4 363.4L463.0 362.2L464.5 361.0L466.1 359.8M430.4 400.7L432.0 399.5L433.5 398.3L435.1 397.1L436.6 395.9L438.2 394.7L439.7 393.5M439.7 393.5L441.3 392.3L442.8 391.1L444.4 389.8L445.9 388.6L447.5 387.4L449.1 386.2M449.1 386.2L450.6 385.0L452.2 383.8L453.7 382.6L455.3 381.4L456.8 380.2L458.4 378.9M458.4 378.9L459.9 377.7L461.5 376.5L463.0 375.3L464.6 374.1L466.2 372.9L467.7 371.7M467.7 371.7L469.3 370.5L470.8 369.3L472.4 368.1L473.9 366.8L475.5 365.6L477.0 364.4M441.3 405.4L442.9 404.2L444.4 403.0L446.0 401.8L447.5 400.6L449.1 399.4L450.6 398.2M450.6 398.2L452.2 397.0L453.8 395.7L455.3 394.5L456.9 393.3L458.4 392.1L460.0 390.9M460.0 390.9L461.5 389.7L463.1 388.5L464.6 387.3L466.2 386.1L467.8 384.8L469.3 383.6M469.3 383.6L470.9 382.4L472.4 381.2L474.0 380.0L475.5 378.8L477.1 377.6L478.7 376.4M478.7 376.4L480.2 375.1L481.8 373.9L483.3 372.7L484.9 371.5L486.4 370.3L488.0 369.1M452.3 410.2L453.9 409.0L455.4 407.8L457.0 406.5L458.5 405.3L460.1 404.1L461.7 402.9M461.7 402.9L463.2 401.7L464.8 400.5L466.3 399.3L467.9 398.1L469.4 396.8L471.0 395.6M471.0 395.6L472.6 394.4L474.1 393.2L475.7 392.0L477.2 390.8L478.8 389.6L480.4 388.3M480.4 388.3L481.9 387.1L483.5 385.9L485.0 384.7L486.6 383.5L488.1 382.3L489.7 381.1M489.7 381.1L491.3 379.9L492.8 378.6L494.4 377.4L495.9 376.2L497.5 375.0L499.1 373.8M463.6 415.2L465.2 413.9L466.7 412.7L468.3 411.5L469.8 410.3L471.4 409.1L473.0 407.8M473.0 407.8L474.5 406.6L476.1 405.4L477.6 404.2L479.2 403.0L480.8 401.8L482.3 400.5M482.3 400.5L483.9 399.3L485.4 398.1L487.0 396.9L488.6 395.7L490.1 394.5L491.7 393.2M491.7 393.2L493.2 392.0L494.8 390.8L496.4 389.6L497.9 388.4L499.5 387.1L501.0 385.9M501.0 385.9L502.6 384.7L504.2 383.5L505.7 382.3L507.3 381.1L508.9 379.8L510.4 378.6M475.0 420.2L476.6 418.9L478.1 417.7L479.7 416.5L481.2 415.3L482.8 414.1L484.4 412.8M484.4 412.8L485.9 411.6L487.5 410.4L489.1 409.2L490.6 407.9L492.2 406.7L493.7 405.5M493.7 405.5L495.3 404.3L496.9 403.1L498.4 401.8L500.0 400.6L501.6 399.4L503.1 398.2M503.1 398.2L504.7 396.9L506.2 395.7L507.8 394.5L509.4 393.3L510.9 392.1L512.5 390.8M512.5 390.8L514.1 389.6L515.6 388.4L517.2 387.2L518.7 385.9L520.3 384.7L521.9 383.5M486.8 425.4L488.4 424.1L489.9 422.9L491.5 421.7L493.1 420.4L494.6 419.2L496.2 418.0M496.2 418.0L497.8 416.8L499.3 415.5L500.9 414.3L502.4 413.1L504.0 411.9L505.6 410.6M505.6 410.6L507.1 409.4L508.7 408.2L510.3 406.9L511.8 405.7L513.4 404.5L515.0 403.3M515.0 403.3L516.5 402.0L518.1 400.8L519.7 399.6L521.2 398.4L522.8 397.1L524.3 395.9M524.3 395.9L525.9 394.7L527.5 393.5L529.0 392.2L530.6 391.0L532.2 389.8L533.7 388.5M498.4 430.5L500.0 429.2L501.5 428.0L503.1 426.8L504.7 425.5L506.2 424.3L507.8 423.1M507.8 423.1L509.4 421.8L510.9 420.6L512.5 419.4L514.1 418.1L515.6 416.9L517.2 415.7M517.2 415.7L518.8 414.4L520.3 413.2L521.9 412.0L523.5 410.7L525.0 409.5L526.6 408.3M526.6 408.3L528.2 407.1L529.7 405.8L531.3 404.6L532.9 403.4L534.4 402.1L536.0 400.9M536.0 400.9L537.6 399.7L539.1 398.4L540.7 397.2L542.3 396.0L543.8 394.7L545.4 393.5M511.0 436.0L512.6 434.8L514.1 433.5L515.7 432.3L517.3 431.1L518.8 429.8L520.4 428.6M520.4 428.6L522.0 427.3L523.6 426.1L525.1 424.9L526.7 423.6L528.3 422.4L529.8 421.2M529.8 421.2L531.4 419.9L533.0 418.7L534.5 417.4L536.1 416.2L537.7 415.0L539.2 413.7M539.2 413.7L540.8 412.5L542.4 411.3L543.9 410.0L545.5 408.8L547.1 407.5L548.7 406.3M548.7 406.3L550.2 405.1L551.8 403.8L553.4 402.6L554.9 401.4L556.5 400.1L558.1 398.9M523.3 441.5L524.9 440.2L526.4 439.0L528.0 437.8L529.6 436.5L531.2 435.3L532.7 434.0M532.7 434.0L534.3 432.8L535.9 431.5L537.4 430.3L539.0 429.0L540.6 427.8L542.2 426.6M542.2 426.6L543.7 425.3L545.3 424.1L546.9 422.8L548.4 421.6L550.0 420.3L551.6 419.1M551.6 419.1L553.1 417.8L554.7 416.6L556.3 415.3L557.9 414.1L559.4 412.9L561.0 411.6M561.0 411.6L562.6 410.4L564.1 409.1L565.7 407.9L567.3 406.6L568.9 405.4L570.4 404.1M536.7 447.5L538.3 446.2L539.8 445.0L541.4 443.7L543.0 442.4L544.6 441.2L546.1 439.9M546.1 439.9L547.7 438.7L549.3 437.4L550.9 436.2L552.4 434.9L554.0 433.7L555.6 432.4M555.6 432.4L557.2 431.2L558.7 429.9L560.3 428.7L561.9 427.4L563.4 426.2L565.0 424.9M565.0 424.9L566.6 423.7L568.2 422.4L569.7 421.2L571.3 419.9L572.9 418.6L574.5 417.4M574.5 417.4L576.0 416.1L577.6 414.9L579.2 413.6L580.8 412.4L582.3 411.1L583.9 409.9M549.8 453.3L551.4 452.0L553.0 450.8L554.5 449.5L556.1 448.3L557.7 447.0L559.3 445.7M559.3 445.7L560.8 444.5L562.4 443.2L564.0 442.0L565.6 440.7L567.1 439.4L568.7 438.2M568.7 438.2L570.3 436.9L571.9 435.7L573.4 434.4L575.0 433.1L576.6 431.9L578.2 430.6M578.2 430.6L579.7 429.3L581.3 428.1L582.9 426.8L584.5 425.6L586.0 424.3L587.6 423.0M587.6 423.0L589.2 421.8L590.8 420.5L592.3 419.3L593.9 418.0L595.5 416.7L597.1 415.5M563.3 458.7L564.9 457.4L566.5 456.2L568.0 454.9L569.6 453.7L571.2 452.4L572.8 451.2M572.8 451.2L574.3 449.9L575.9 448.7L577.5 447.5L579.1 446.2L580.7 445.0L582.2 443.7M582.2 443.7L583.8 442.5L585.4 441.2L587.0 440.0L588.5 438.7L590.1 437.5L591.7 436.2M591.7 436.2L593.3 435.0L594.9 433.7L596.4 432.5L598.0 431.2L599.6 430.0L601.2 428.7M601.2 428.7L602.8 427.5L604.3 426.2L605.9 425.0L607.5 423.7L609.1 422.5L610.6 421.3M574.4 463.1L576.0 461.9L577.6 460.6L579.1 459.4L580.7 458.2L582.3 456.9L583.9 455.7M583.9 455.7L585.5 454.4L587.0 453.2L588.6 452.0L590.2 450.7L591.8 449.5L593.4 448.3M593.4 448.3L594.9 447.0L596.5 445.8L598.1 444.6L599.7 443.3L601.3 442.1L602.8 440.8M602.8 440.8L604.4 439.6L606.0 438.4L607.6 437.1L609.2 435.9L610.7 434.7L612.3 433.4M612.3 433.4L613.9 432.2L615.5 430.9L617.1 429.7L618.6 428.5L620.2 427.2L621.8 426.0M367.2 372.4L367.2 374.3L367.2 376.1L367.2 377.9L367.2 379.8L367.2 381.6L367.2 383.4M367.2 383.4L367.2 385.3L367.2 387.1L367.2 388.9L367.2 390.7L367.2 392.6L367.2 394.4M367.2 394.4L367.2 396.2L367.2 398.1L367.2 399.9L367.2 401.7L367.2 403.6L367.2 405.4M377.7 377.2L377.7 379.1L377.7 380.9L377.7 382.7L377.7 384.6L377.7 386.4L377.7 388.2M377.7 388.2L377.7 390.1L377.7 391.9L377.7 393.7L377.7 395.6L377.7 397.4L377.7 399.2M377.7 399.2L377.7 401.1L377.7 402.9L377.7 404.7L377.7 406.6L377.7 408.4L377.7 410.2M388.3 382.1L388.3 383.9L388.3 385.8L388.3 387.6L388.3 389.4L388.3 391.3L388.3 393.1M388.3 393.1L388.3 394.9L388.3 396.8L388.3 398.6L388.3 400.4L388.3 402.3L388.3 404.1M388.3 404.1L388.3 405.9L388.3 407.8L388.3 409.6L388.3 411.4L388.3 413.3L388.3 415.1M398.8 386.9L398.8 388.7L398.8 390.6L398.8 392.4L398.8 394.2L398.8 396.1L398.8 397.9M398.8 397.9L398.8 399.7L398.8 401.6L398.8 403.4L398.8 405.2L398.8 407.1L398.8 408.9M398.8 408.9L398.8 410.7L398.8 412.6L398.8 414.4L398.8 416.2L398.8 418.1L398.8 419.9M409.0 391.5L409.0 393.3L409.0 395.2L409.0 397.0L409.0 398.9L409.0 400.7L409.0 402.5M409.0 402.5L409.0 404.4L409.0 406.2L409.0 408.0L409.0 409.9L409.0 411.7L409.0 413.6M409.0 413.6L409.0 415.4L409.0 417.2L409.0 419.1L409.0 420.9L409.0 422.8L409.0 424.6M419.5 396.0L419.5 397.9L419.5 399.7L419.5 401.6L419.5 403.4L419.5 405.3L419.5 407.2M419.5 407.2L419.5 409.0L419.5 410.9L419.5 412.7L419.5 414.6L419.5 416.4L419.5 418.3M419.5 418.3L419.5 420.1L419.5 422.0L419.5 423.9L419.5 425.7L419.5 427.6L419.5 429.4M430.4 400.7L430.4 402.6L430.4 404.5L430.4 406.3L430.4 408.2L430.4 410.1L430.4 412.0M430.4 412.0L430.4 413.8L430.4 415.7L430.4 417.6L430.4 419.5L430.4 421.3L430.4 423.2M430.4 423.2L430.4 425.1L430.4 426.9L430.4 428.8L430.4 430.7L430.4 432.6L430.4 434.4M441.3 405.4L441.3 407.3L441.3 409.2L441.3 411.1L441.3 413.0L441.3 414.9L441.3 416.8M441.3 416.8L441.3 418.7L441.3 420.5L441.3 422.4L441.3 424.3L441.3 426.2L441.3 428.1M441.3 428.1L441.3 430.0L441.3 431.9L441.3 433.8L441.3 435.6L441.3 437.5L441.3 439.4M452.3 410.2L452.3 412.1L452.3 414.0L452.3 415.9L452.3 417.8L452.3 419.7L452.3 421.6M452.3 421.6L452.3 423.5L452.3 425.4L452.3 427.3L452.3 429.2L452.3 431.1L452.3 433.0M452.3 433.0L452.3 435.0L452.3 436.9L452.3 438.8L452.3 440.7L452.3 442.6L452.3 444.5M463.6 415.2L463.6 417.1L463.6 419.0L463.6 420.9L463.6 422.8L463.6 424.7L463.6 426.7M463.6 426.7L463.6 428.6L463.6 430.5L463.6 432.4L463.6 434.3L463.6 436.2L463.6 438.2M463.6 438.2L463.6 440.1L463.6 442.0L463.6 443.9L463.6 445.8L463.6 447.7L463.6 449.7M475.0 420.2L475.0 422.1L475.0 424.0L475.0 426.0L475.0 427.9L475.0 429.8L475.0 431.7M475.0 431.7L475.0 433.7L475.0 435.6L475.0 437.5L475.0 439.5L475.0 441.4L475.0 443.3M475.0 443.3L475.0 445.2L475.0 447.2L475.0 449.1L475.0 451.0L475.0 453.0L475.0 454.9M486.8 425.4L486.8 427.3L486.8 429.2L486.8 431.2L486.8 433.1L486.8 435.1L486.8 437.0M486.8 437.0L486.8 438.9L486.8 440.9L486.8 442.8L486.8 444.8L486.8 446.7L486.8 448.7M486.8 448.7L486.8 450.6L486.8 452.5L486.8 454.5L486.8 456.4L486.8 458.4L486.8 460.3M498.4 430.5L498.4 432.4L498.4 434.4L498.4 436.3L498.4 438.3L498.4 440.2L498.4 442.2M498.4 442.2L498.4 444.1L498.4 446.1L498.4 448.0L498.4 450.0L498.4 452.0L498.4 453.9M498.4 453.9L498.4 455.9L498.4 457.8L498.4 459.8L498.4 461.7L498.4 463.7L498.4 465.6M511.0 436.0L511.0 438.0L511.0 439.9L511.0 441.9L511.0 443.9L511.0 445.8L511.0 447.8M511.0 447.8L511.0 449.8L511.0 451.7L511.0 453.7L511.0 455.7L511.0 457.6L511.0 459.6M511.0 459.6L511.0 461.6L511.0 463.5L511.0 465.5L511.0 467.5L511.0 469.5L511.0 471.4M523.3 441.5L523.3 443.5L523.3 445.4L523.3 447.4L523.3 449.4L523.3 451.4L523.3 453.3M523.3 453.3L523.3 455.3L523.3 457.3L523.3 459.3L523.3 461.3L523.3 463.2L523.3 465.2M523.3 465.2L523.3 467.2L523.3 469.2L523.3 471.1L523.3 473.1L523.3 475.1L523.3 477.1M536.7 447.5L536.7 449.4L536.7 451.4L536.7 453.4L536.7 455.4L536.7 457.4L536.7 459.4M536.7 459.4L536.7 461.4L536.7 463.4L536.7 465.3L536.7 467.3L536.7 469.3L536.7 471.3M536.7 471.3L536.7 473.3L536.7 475.3L536.7 477.3L536.7 479.2L536.7 481.2L536.7 483.2M549.8 453.3L549.8 455.3L549.8 457.3L549.8 459.3L549.8 461.3L549.8 463.3L549.8 465.3M549.8 465.3L549.8 467.3L549.8 469.3L549.8 471.3L549.8 473.3L549.8 475.3L549.8 477.3M549.8 477.3L549.8 479.2L549.8 481.2L549.8 483.2L549.8 485.2L549.8 487.2L549.8 489.2M563.3 458.7L563.3 460.7L563.3 462.8L563.3 464.8L563.3 466.8L563.3 468.9L563.3 470.9M563.3 470.9L563.3 473.0L563.3 475.0L563.3 477.1L563.3 479.1L563.3 481.1L563.3 483.2M563.3 483.2L563.3 485.2L563.3 487.3L563.3 489.3L563.3 491.3L563.3 493.4L563.3 495.4M574.4 463.1L574.4 465.2L574.4 467.3L574.4 469.3L574.4 471.4L574.4 473.5L574.4 475.6M574.4 475.6L574.4 477.7L574.4 479.7L574.4 481.8L574.4 483.9L574.4 486.0L574.4 488.0M574.4 488.0L574.4 490.1L574.4 492.2L574.4 494.3L574.4 496.4L574.4 498.4L574.4 500.5M367.2 372.4L368.9 373.2L370.7 374.0L372.4 374.8L374.2 375.6L375.9 376.4L377.7 377.2M377.7 377.2L379.5 378.0L381.2 378.9L383.0 379.7L384.8 380.5L386.5 381.3L388.3 382.1M388.3 382.1L390.1 382.9L391.8 383.7L393.6 384.5L395.3 385.3L397.1 386.1L398.8 386.9M398.8 386.9L400.5 387.7L402.2 388.5L403.9 389.2L405.6 390.0L407.3 390.8L409.0 391.5M409.0 391.5L410.8 392.3L412.5 393.0L414.2 393.8L416.0 394.5L417.8 395.3L419.5 396.0M419.5 396.0L421.3 396.8L423.1 397.6L424.9 398.4L426.8 399.2L428.6 400.0L430.4 400.7M430.4 400.7L432.2 401.5L434.0 402.3L435.9 403.1L437.7 403.9L439.5 404.7L441.3 405.4M441.3 405.4L443.1 406.2L445.0 407.0L446.8 407.8L448.6 408.6L450.5 409.4L452.3 410.2M452.3 410.2L454.2 411.0L456.1 411.8L458.0 412.7L459.8 413.5L461.7 414.3L463.6 415.2M463.6 415.2L465.5 416.0L467.4 416.8L469.3 417.7L471.2 418.5L473.1 419.3L475.0 420.2M475.0 420.2L477.0 421.0L478.9 421.9L480.9 422.8L482.9 423.6L484.8 424.5L486.8 425.4M486.8 425.4L488.7 426.2L490.7 427.1L492.6 427.9L494.5 428.8L496.5 429.6L498.4 430.5M498.4 430.5L500.5 431.4L502.6 432.3L504.7 433.2L506.8 434.2L508.9 435.1L511.0 436.0M511.0 436.0L513.0 436.9L515.1 437.8L517.1 438.7L519.2 439.7L521.2 440.6L523.3 441.5M523.3 441.5L525.5 442.5L527.8 443.5L530.0 444.5L532.2 445.5L534.5 446.5L536.7 447.5M536.7 447.5L538.9 448.4L541.1 449.4L543.2 450.4L545.4 451.4L547.6 452.3L549.8 453.3M549.8 453.3L552.0 454.2L554.3 455.1L556.5 456.0L558.8 456.9L561.0 457.8L563.3 458.7M563.3 458.7L565.1 459.4L567.0 460.2L568.8 460.9L570.7 461.6L572.5 462.4L574.4 463.1M367.2 383.4L368.9 384.2L370.7 385.0L372.4 385.8L374.2 386.6L375.9 387.4L377.7 388.2M377.7 388.2L379.5 389.0L381.2 389.9L383.0 390.7L384.8 391.5L386.5 392.3L388.3 393.1M388.3 393.1L390.1 393.9L391.8 394.7L393.6 395.5L395.3 396.3L397.1 397.1L398.8 397.9M398.8 397.9L400.5 398.7L402.2 399.5L403.9 400.2L405.6 401.0L407.3 401.8L409.0 402.5M409.0 402.5L410.8 403.3L412.5 404.1L414.2 404.8L416.0 405.6L417.8 406.4L419.5 407.2M419.5 407.2L421.3 408.0L423.1 408.8L424.9 409.6L426.8 410.4L428.6 411.2L430.4 412.0M430.4 412.0L432.2 412.8L434.0 413.6L435.9 414.4L437.7 415.2L439.5 416.0L441.3 416.8M441.3 416.8L443.1 417.6L445.0 418.4L446.8 419.2L448.6 420.0L450.5 420.8L452.3 421.6M452.3 421.6L454.2 422.5L456.1 423.3L458.0 424.1L459.8 425.0L461.7 425.8L463.6 426.7M463.6 426.7L465.5 427.5L467.4 428.4L469.3 429.2L471.2 430.0L473.1 430.9L475.0 431.7M475.0 431.7L477.0 432.6L478.9 433.5L480.9 434.4L482.9 435.3L484.8 436.1L486.8 437.0M486.8 437.0L488.7 437.9L490.7 438.7L492.6 439.6L494.5 440.5L496.5 441.3L498.4 442.2M498.4 442.2L500.5 443.1L502.6 444.1L504.7 445.0L506.8 445.9L508.9 446.9L511.0 447.8M511.0 447.8L513.0 448.7L515.1 449.7L517.1 450.6L519.2 451.5L521.2 452.4L523.3 453.3M523.3 453.3L525.5 454.3L527.8 455.4L530.0 456.4L532.2 457.4L534.5 458.4L536.7 459.4M536.7 459.4L538.9 460.4L541.1 461.3L543.2 462.3L545.4 463.3L547.6 464.3L549.8 465.3M549.8 465.3L552.0 466.2L554.3 467.2L556.5 468.1L558.8 469.0L561.0 470.0L563.3 470.9M563.3 470.9L565.1 471.7L567.0 472.5L568.8 473.2L570.7 474.0L572.5 474.8L574.4 475.6M367.2 394.4L368.9 395.2L370.7 396.0L372.4 396.8L374.2 397.6L375.9 398.4L377.7 399.2M377.7 399.2L379.5 400.0L381.2 400.9L383.0 401.7L384.8 402.5L386.5 403.3L388.3 404.1M388.3 404.1L390.1 404.9L391.8 405.7L393.6 406.5L395.3 407.3L397.1 408.1L398.8 408.9M398.8 408.9L400.5 409.7L402.2 410.5L403.9 411.3L405.6 412.0L407.3 412.8L409.0 413.6M409.0 413.6L410.8 414.4L412.5 415.1L414.2 415.9L416.0 416.7L417.8 417.5L419.5 418.3M419.5 418.3L421.3 419.1L423.1 419.9L424.9 420.7L426.8 421.6L428.6 422.4L430.4 423.2M430.4 423.2L432.2 424.0L434.0 424.8L435.9 425.6L437.7 426.5L439.5 427.3L441.3 428.1M441.3 428.1L443.1 428.9L445.0 429.7L446.8 430.6L448.6 431.4L450.5 432.2L452.3 433.0M452.3 433.0L454.2 433.9L456.1 434.7L458.0 435.6L459.8 436.5L461.7 437.3L463.6 438.2M463.6 438.2L465.5 439.0L467.4 439.9L469.3 440.7L471.2 441.6L473.1 442.5L475.0 443.3M475.0 443.3L477.0 444.2L478.9 445.1L480.9 446.0L482.9 446.9L484.8 447.8L486.8 448.7M486.8 448.7L488.7 449.5L490.7 450.4L492.6 451.3L494.5 452.2L496.5 453.0L498.4 453.9M498.4 453.9L500.5 454.9L502.6 455.8L504.7 456.8L506.8 457.7L508.9 458.7L511.0 459.6M511.0 459.6L513.0 460.5L515.1 461.5L517.1 462.4L519.2 463.3L521.2 464.3L523.3 465.2M523.3 465.2L525.5 466.2L527.8 467.2L530.0 468.2L532.2 469.3L534.5 470.3L536.7 471.3M536.7 471.3L538.9 472.3L541.1 473.3L543.2 474.3L545.4 475.3L547.6 476.3L549.8 477.3M549.8 477.3L552.0 478.2L554.3 479.2L556.5 480.2L558.8 481.2L561.0 482.2L563.3 483.2M563.3 483.2L565.1 484.0L567.0 484.8L568.8 485.6L570.7 486.4L572.5 487.2L574.4 488.0M367.2 405.4L368.9 406.2L370.7 407.0L372.4 407.8L374.2 408.6L375.9 409.4L377.7 410.2M377.7 410.2L379.5 411.0L381.2 411.9L383.0 412.7L384.8 413.5L386.5 414.3L388.3 415.1M388.3 415.1L390.1 415.9L391.8 416.7L393.6 417.5L395.3 418.3L397.1 419.1L398.8 419.9M398.8 419.9L400.5 420.7L402.2 421.5L403.9 422.3L405.6 423.0L407.3 423.8L409.0 424.6M409.0 424.6L410.8 425.4L412.5 426.2L414.2 427.0L416.0 427.8L417.8 428.6L419.5 429.4M419.5 429.4L421.3 430.3L423.1 431.1L424.9 431.9L426.8 432.8L428.6 433.6L430.4 434.4M430.4 434.4L432.2 435.3L434.0 436.1L435.9 436.9L437.7 437.8L439.5 438.6L441.3 439.4M441.3 439.4L443.1 440.3L445.0 441.1L446.8 442.0L448.6 442.8L450.5 443.6L452.3 444.5M452.3 444.5L454.2 445.3L456.1 446.2L458.0 447.1L459.8 447.9L461.7 448.8L463.6 449.7M463.6 449.7L465.5 450.5L467.4 451.4L469.3 452.3L471.2 453.1L473.1 454.0L475.0 454.9M475.0 454.9L477.0 455.8L478.9 456.7L480.9 457.6L482.9 458.5L484.8 459.4L486.8 460.3M486.8 460.3L488.7 461.2L490.7 462.1L492.6 463.0L494.5 463.9L496.5 464.7L498.4 465.6M498.4 465.6L500.5 466.6L502.6 467.6L504.7 468.5L506.8 469.5L508.9 470.5L511.0 471.4M511.0 471.4L513.0 472.4L515.1 473.3L517.1 474.2L519.2 475.2L521.2 476.1L523.3 477.1M523.3 477.1L525.5 478.1L527.8 479.1L530.0 480.1L532.2 481.2L534.5 482.2L536.7 483.2M536.7 483.2L538.9 484.2L541.1 485.2L543.2 486.2L545.4 487.2L547.6 488.2L549.8 489.2M549.8 489.2L552.0 490.3L554.3 491.3L556.5 492.3L558.8 493.4L561.0 494.4L563.3 495.4M563.3 495.4L565.1 496.3L567.0 497.1L568.8 498.0L570.7 498.8L572.5 499.7L574.4 500.5M346.8 355.6L346.8 357.8L346.8 360.1L346.8 362.3L346.8 364.6L346.8 366.8L346.8 369.1M346.8 369.1L346.8 371.3L346.8 373.6L346.8 375.8L346.8 378.1L346.8 380.3L346.8 382.6M346.8 382.6L346.8 384.8L346.8 387.1L346.8 389.3L346.8 391.6L346.8 393.8L346.8 396.1M356.9 367.7L356.9 369.5L356.9 371.4L356.9 373.2L356.9 375.0L356.9 376.9L356.9 378.7M356.9 378.7L356.9 380.5L356.9 382.4L356.9 384.2L356.9 386.0L356.9 387.9L356.9 389.7M356.9 389.7L356.9 391.5L356.9 393.4L356.9 395.2L356.9 397.0L356.9 398.9L356.9 400.7M367.2 372.4L367.2 374.2L367.2 376.1L367.2 377.9L367.2 379.7L367.2 381.6L367.2 383.4M367.2 383.4L367.2 385.2L367.2 387.1L367.2 388.9L367.2 390.7L367.2 392.6L367.2 394.4M367.2 394.4L367.2 396.2L367.2 398.1L367.2 399.9L367.2 401.7L367.2 403.6L367.2 405.4M346.8 355.6L348.5 359.0L350.2 360.9L351.9 362.7L353.5 364.4L355.2 366.0L356.9 367.7M356.9 367.7L358.6 368.5L360.3 369.3L362.0 370.0L363.8 370.8L365.5 371.6L367.2 372.4M346.8 369.1L348.5 371.6L350.2 373.2L351.9 374.6L353.5 376.0L355.2 377.3L356.9 378.7M356.9 378.7L358.6 379.5L360.3 380.3L362.0 381.1L363.8 381.8L365.5 382.6L367.2 383.4M346.8 382.6L348.5 384.2L350.2 385.4L351.9 386.5L353.5 387.6L355.2 388.6L356.9 389.7M356.9 389.7L358.6 390.5L360.3 391.3L362.0 392.1L363.8 392.8L365.5 393.6L367.2 394.4M346.8 396.1L348.5 396.8L350.2 397.6L351.9 398.4L353.5 399.1L355.2 399.9L356.9 400.7M356.9 400.7L358.6 401.5L360.3 402.3L362.0 403.1L363.8 403.8L365.5 404.6L367.2 405.4M574.4 463.1L574.4 465.6L574.4 468.1L574.4 470.6L574.4 473.1L574.4 475.6L574.4 478.1M574.4 478.1L574.4 480.6L574.4 483.1L574.4 485.6L574.4 488.1L574.4 490.6L574.4 493.1M584.3 455.4L584.3 457.8L584.3 460.3L584.3 462.7L584.3 465.2L584.3 467.6L584.3 470.1M584.3 470.1L584.3 472.6L584.3 475.0L584.3 477.5L584.3 479.9L584.3 482.4L584.3 484.9M594.4 447.4L594.4 449.9L594.4 452.3L594.4 454.7L594.4 457.1L594.4 459.5L594.4 461.9M594.4 461.9L594.4 464.4L594.4 466.8L594.4 469.2L594.4 471.6L594.4 474.0L594.4 476.4M605.1 439.1L605.1 441.4L605.1 443.8L605.1 446.2L605.1 448.6L605.1 450.9L605.1 453.3M605.1 453.3L605.1 455.7L605.1 458.0L605.1 460.4L605.1 462.8L605.1 465.1L605.1 467.5M614.1 432.0L614.1 434.4L614.1 436.7L614.1 439.0L614.1 441.4L614.1 443.7L614.1 446.0M614.1 446.0L614.1 448.4L614.1 450.7L614.1 453.0L614.1 455.4L614.1 457.7L614.1 460.0M621.8 426.0L621.8 428.3L621.8 430.6L621.8 432.9L621.8 435.2L621.8 437.5L621.8 439.8M621.8 439.8L621.8 442.1L621.8 444.4L621.8 446.7L621.8 449.0L621.8 451.3L621.8 453.6M574.4 463.1L576.0 461.8L577.7 460.5L579.3 459.2L581.0 457.9L582.6 456.6L584.3 455.4M584.3 455.4L586.0 454.0L587.7 452.7L589.3 451.4L591.0 450.1L592.7 448.8L594.4 447.4M594.4 447.4L596.2 446.1L598.0 444.7L599.8 443.3L601.5 441.9L603.3 440.5L605.1 439.1M605.1 439.1L606.6 437.9L608.1 436.7L609.6 435.5L611.1 434.4L612.6 433.2L614.1 432.0M614.1 432.0L615.4 431.0L616.7 430.0L618.0 429.0L619.2 428.0L620.5 427.0L621.8 426.0M574.4 478.1L576.0 476.8L577.7 475.4L579.3 474.1L581.0 472.8L582.6 471.4L584.3 470.1M584.3 470.1L586.0 468.7L587.7 467.4L589.3 466.0L591.0 464.7L592.7 463.3L594.4 461.9M594.4 461.9L596.2 460.5L598.0 459.1L599.8 457.6L601.5 456.2L603.3 454.7L605.1 453.3M605.1 453.3L606.6 452.1L608.1 450.9L609.6 449.7L611.1 448.4L612.6 447.2L614.1 446.0M614.1 446.0L615.4 445.0L616.7 443.9L618.0 442.9L619.2 441.9L620.5 440.8L621.8 439.8M574.4 493.1L576.0 491.7L577.7 490.4L579.3 489.0L581.0 487.6L582.6 486.2L584.3 484.9M584.3 484.9L586.0 483.4L587.7 482.0L589.3 480.6L591.0 479.2L592.7 477.8L594.4 476.4M594.4 476.4L596.2 474.9L598.0 473.5L599.8 472.0L601.5 470.5L603.3 469.0L605.1 467.5M605.1 467.5L606.6 466.3L608.1 465.0L609.6 463.8L611.1 462.5L612.6 461.3L614.1 460.0M614.1 460.0L615.4 458.9L616.7 457.9L618.0 456.8L619.2 455.7L620.5 454.7L621.8 453.6M424.2 161.0L424.2 163.2L424.2 165.5L424.2 167.8L424.2 170.0L424.2 172.2L424.2 174.5M434.8 156.2L434.8 158.5L434.8 160.7L434.8 163.0L434.8 165.2L434.8 167.5L434.8 169.7M446.0 151.1L446.0 153.3L446.0 155.6L446.0 157.8L446.0 160.1L446.0 162.3L446.0 164.6M457.2 145.9L457.2 148.2L457.2 150.4L457.2 152.7L457.2 154.9L457.2 157.2L457.2 159.4M467.0 141.5L467.0 143.8L467.0 146.0L467.0 148.2L467.0 150.5L467.0 152.8L467.0 155.0M424.2 161.0L426.0 160.2L427.8 159.4L429.5 158.6L431.2 157.8L433.0 157.0L434.8 156.2M434.8 156.2L436.6 155.4L438.5 154.5L440.4 153.6L442.2 152.8L444.1 151.9L446.0 151.1M446.0 151.1L447.9 150.2L449.8 149.4L451.6 148.5L453.5 147.7L455.4 146.8L457.2 145.9M457.2 145.9L458.9 145.2L460.5 144.5L462.1 143.7L463.8 143.0L465.4 142.2L467.0 141.5M424.2 174.5L426.0 173.7L427.8 172.9L429.5 172.1L431.2 171.3L433.0 170.5L434.8 169.7M434.8 169.7L436.6 168.9L438.5 168.0L440.4 167.1L442.2 166.3L444.1 165.4L446.0 164.6M446.0 164.6L447.9 163.7L449.8 162.9L451.6 162.0L453.5 161.2L455.4 160.3L457.2 159.4M457.2 159.4L458.9 158.7L460.5 158.0L462.1 157.2L463.8 156.5L465.4 155.7L467.0 155.0"/></g>
<path d="M413.75 185.3L424.25 174.5L467 155Z" fill="#040438"/>
<path d="M413.75 185.3L467 155" fill="none" stroke="#02021e" stroke-width="1"/>
<linearGradient id="hg0" x1="0" x2="1" y1="0" y2="0"><stop offset="0" stop-color="#5cff10"/><stop offset="1" stop-color="#12f83a"/></linearGradient>
<linearGradient id="hg1" x1="0" x2="1" y1="0" y2="0"><stop offset="0" stop-color="#0505ff"/><stop offset="1" stop-color="#0000ff"/></linearGradient>
<clipPath id="h0"><ellipse cx="407.4" cy="368.6" rx="17.5" ry="9.3"/></clipPath>
<g fill="none" stroke="#03100c" stroke-opacity="0.9" stroke-width="1.15">
<ellipse cx="407.4" cy="368.6" rx="17.5" ry="9.3" fill="url(#hg0)"/>
<g clip-path="url(#h0)">
<ellipse cx="407.4" cy="379.2" rx="17.5" ry="9.3" stroke-opacity="0.75"/>
<path d="M396.5 359.3V373.0"/>
<path d="M407.0 359.3V373.0"/>
<path d="M418.4 359.3V373.0"/>
</g></g>
<clipPath id="h1"><ellipse cx="527.0" cy="417.8" rx="17.3" ry="8.6"/></clipPath>
<g fill="none" stroke="#03100c" stroke-opacity="0.9" stroke-width="1.15">
<ellipse cx="527.0" cy="417.8" rx="17.3" ry="8.6" fill="url(#hg1)"/>
<g clip-path="url(#h1)">
<ellipse cx="527.0" cy="428.4" rx="17.3" ry="8.6" stroke-opacity="0.75"/>
<path d="M514.0 409.2V422.2"/>
<path d="M527.0 409.2V422.2"/>
<path d="M539.3 409.2V422.2"/>
</g></g>
</g></g>
<g>
<rect x="665.8" y="136.80" width="25.5" height="14.90" fill="#ff0000"/>
<rect x="665.8" y="151.40" width="25.5" height="14.90" fill="#ff4800"/>
<rect x="665.8" y="166.00" width="25.5" height="14.90" fill="#ff8400"/>
<rect x="665.8" y="180.60" width="25.5" height="14.90" fill="#ffb400"/>
<rect x="665.8" y="195.20" width="25.5" height="14.90" fill="#ffcf00"/>
<rect x="665.8" y="209.80" width="25.5" height="14.90" fill="#fff200"/>
<rect x="665.8" y="224.40" width="25.5" height="14.90" fill="#ccff00"/>
<rect x="665.8" y="239.00" width="25.5" height="14.90" fill="#96ff00"/>
<rect x="665.8" y="253.60" width="25.5" height="14.90" fill="#3cff00"/>
<rect x="665.8" y="268.20" width="25.5" height="14.90" fill="#00ff00"/>
<rect x="665.8" y="282.80" width="25.5" height="14.90" fill="#00ff00"/>
<rect x="665.8" y="297.40" width="25.5" height="14.90" fill="#00ff1e"/>
<rect x="665.8" y="312.00" width="25.5" height="14.90" fill="#00ff32"/>
<rect x="665.8" y="326.60" width="25.5" height="14.90" fill="#00ff58"/>
<rect x="665.8" y="341.20" width="25.5" height="14.90" fill="#00ffa0"/>
<rect x="665.8" y="355.80" width="25.5" height="14.90" fill="#00ffff"/>
<rect x="665.8" y="370.40" width="25.5" height="14.90" fill="#00c3ff"/>
<rect x="665.8" y="385.00" width="25.5" height="14.90" fill="#0096ff"/>
<rect x="665.8" y="399.60" width="25.5" height="14.90" fill="#0055ff"/>
<rect x="665.8" y="414.20" width="25.5" height="14.90" fill="#0000ff"/>
<rect x="665.8" y="136.20" width="25.5" height="1" fill="#ececec" fill-opacity="0.95"/>
<rect x="665.8" y="165.40" width="25.5" height="1" fill="#ececec" fill-opacity="0.8"/>
<rect x="665.8" y="194.60" width="25.5" height="1" fill="#ececec" fill-opacity="0.8"/>
<rect x="665.8" y="223.80" width="25.5" height="1" fill="#ececec" fill-opacity="0.8"/>
<rect x="665.8" y="253.00" width="25.5" height="1" fill="#ececec" fill-opacity="0.8"/>
<rect x="665.8" y="282.20" width="25.5" height="1" fill="#ececec" fill-opacity="0.8"/>
<rect x="665.8" y="311.40" width="25.5" height="1" fill="#ececec" fill-opacity="0.8"/>
<rect x="665.8" y="340.60" width="25.5" height="1" fill="#ececec" fill-opacity="0.8"/>
<rect x="665.8" y="369.80" width="25.5" height="1" fill="#ececec" fill-opacity="0.8"/>
<rect x="665.8" y="399.00" width="25.5" height="1" fill="#ececec" fill-opacity="0.8"/>
<rect x="665.8" y="428.20" width="25.5" height="1" fill="#ececec" fill-opacity="0.95"/>
</g>
<g fill="none" stroke="#dedeea" stroke-width="1.3" stroke-linecap="round"><path d="M255 428.6V450H274.6M255 450L242.6 457.6"/></g>
<g fill="none" stroke="#1a1a1a" stroke-width="1.05">
<path d="M670.3 17.4H681.9"/>
<rect x="720.2" y="11.7" width="10.4" height="10.4" rx="0.8"/>
<path d="M770.2 12.3L780.7 22.6M780.7 12.3L770.2 22.6"/>
</g>
<g stroke="#b9b9b9" stroke-width="1.1">
<path d="M81.6 65.5V89.3"/>
<path d="M171.6 65.5V89.3"/>
<path d="M232.6 65.5V89.3"/>
<path d="M397.6 65.5V89.3"/>
</g>
<path d="M2.6 70.2H11.2L16.4 75V85.3H2.6Z" fill="#fff" stroke="#1c1c80" stroke-width="1.3" stroke-linejoin="round"/>
<path d="M11 70.2V75.2H16.4" fill="#d8d8f0" stroke="#1c1c80" stroke-width="1.2" stroke-linejoin="round"/>
<g stroke="#111" stroke-width="1.2" stroke-linejoin="round">
<path d="M28.6 85.6V75H33.5L35 76.4H40.5V79" fill="#f4f4f4"/>
<path d="M29 85.7L32.8 79H43.8L40.2 85.7Z" fill="#98982c"/>
<path d="M35 71.7H40.6" fill="none" stroke-width="1"/>
<rect x="40.6" y="70.6" width="3.4" height="3.8" fill="#fff" stroke-width="1"/>
</g>
<rect x="56" y="69" width="14.2" height="17" fill="#9c9c9c"/>
<path d="M59 69.4H68V76.2Q68 78.2 66 78.2H61Q59 78.2 59 76.2Z" fill="#f1f1f1"/>
<rect x="60.9" y="81.4" width="2.2" height="2.6" fill="#ececec"/>
<rect x="64.6" y="82" width="3.4" height="3.2" fill="#ececec"/>
<g fill="none" stroke="#a2a2a2" stroke-width="1.1">
<path d="M94.8 70.2L99.6 80.6M100.4 70.2L96.2 80.8"/>
<rect x="94.6" y="81.2" width="3" height="4.8" rx="0.6"/>
<rect x="100.5" y="80.2" width="3" height="4.4" rx="1"/>
</g>
<g stroke="#1c1c80" stroke-width="1.2" stroke-linejoin="round">
<rect x="118.7" y="70.7" width="7.4" height="10" fill="#e8e8f4"/>
<path d="M120.4 76.4H124.6M120.4 78.2H124.6" stroke="#9a9ab0" stroke-width="1"/>
<path d="M124.6 73.8H130.4L134 77.2V86H124.6Z" fill="#fff"/>
<path d="M130.2 73.8V77.4H134" fill="none" stroke-width="1"/>
<path d="M127 81.2H132" stroke="#262660" stroke-width="1.6"/>
</g>
<rect x="145.8" y="70.9" width="13.6" height="13.6" fill="#8e8e52" stroke="#111" stroke-width="1.2"/>
<rect x="151" y="69" width="4.6" height="2.6" fill="#8e8e52" stroke="#222" stroke-width="0.9"/>
<path d="M152.3 75.8H158.4L161.9 79V86H152.3Z" fill="#fff" stroke="#1c1c80" stroke-width="1.3" stroke-linejoin="round"/>
<path d="M157.2 78L159.2 80.2H155.2Z" fill="#1c1c80"/>
<path d="M154.6 82.6H159.8" stroke="#1c1c80" stroke-width="1.8"/>
<path d="M184 77.4C185.6 73.6 188.6 71.6 191.2 72.4C195 73.6 196.4 78.6 192 82.2" fill="none" stroke="#1515b8" stroke-width="1.9" stroke-linecap="round"/>
<path d="M180.3 73.8L180.7 80.1L187 80.6Z" fill="#1515b8"/>
<path d="M218.8 77.4C217.2 73.6 214.2 71.8 211.6 72.6C208 73.8 206.6 78.6 211.2 82.2" fill="none" stroke="#adadad" stroke-width="1.8" stroke-linecap="round"/>
<path d="M222.5 73.8L222.1 80.1L215.8 79.4Z" fill="#adadad"/>
<path d="M246 70.6V76.6M248.4 72V78.2M250.4 74.4V77.4M244 77.4H252" fill="none" stroke="#444" stroke-width="1.1"/>
<rect x="243.2" y="79" width="4.6" height="7" fill="#2aa2ea" stroke="#123" stroke-width="1"/>
<path d="M244.6 81.2H246.6M244.6 83.4H246.6" stroke="#cfeaff" stroke-width="1"/>
<rect x="250.6" y="79.8" width="6.2" height="6.2" fill="#2cb858" stroke="#184a28" stroke-width="0.9"/>
<path d="M251.4 82H256M251.4 84H256" stroke="#bff0cf" stroke-width="0.9"/>
<path d="M268.6 69.8V82.4M268.8 70L274.6 81.4V70.4" fill="none" stroke="#1a1a1a" stroke-width="1.3"/>
<path d="M275.4 71.4H283.6L281.4 75.4M277 73.6H282" fill="none" stroke="#555" stroke-width="1"/>
<path d="M270 81.8C274 79.6 279 79 283.4 81.6" fill="none" stroke="#666" stroke-width="1"/>
<path d="M274.4 77.2L278.4 80.2" stroke="#e03030" stroke-width="1.8"/>
<rect x="268.2" y="83" width="17.2" height="2.8" fill="#f4f4f4" stroke="#151515" stroke-width="1.1"/>
<g font-family="Liberation Sans, sans-serif" fill="#1e1e1e" font-size="12.4">
<text x="295.4" y="80.2">A</text><text x="302.7" y="85.8">A</text></g>
<path d="M321.4 72.8L326 70.6V75Z" fill="#111"/><path d="M325.6 72.8H338.4" stroke="#6c6c6c" stroke-width="1.3"/>
<path d="M322 79H338.4" stroke="#7a7a7a" stroke-width="1.1"/><ellipse cx="333" cy="79" rx="2.6" ry="1.9" fill="#1a1a1a"/>
<path d="M322 84H335" stroke="#8a8a8a" stroke-width="1.3"/><path d="M338.6 84L334 81.8V86.2Z" fill="#7e7e7e"/>
<rect x="348" y="70.6" width="8" height="3" rx="1.2" fill="#333"/>
<path d="M358.2 71.6H365.4" stroke="#555" stroke-width="1.1"/>
<path d="M348.2 78.6H354.6M351.4 76.6V80.6" stroke="#c2c2c2" stroke-width="1"/>
<rect x="358.2" y="77" width="5.4" height="3.6" rx="1.2" fill="#3a3a3a"/>
<path d="M349 83.2H350.2M352 82V85" stroke="#c6c6c6" stroke-width="1"/>
<path d="M357.2 83.3H364" stroke="#555" stroke-width="1.1"/>
<path d="M374.8 71.2L378.8 75M378.8 71.2L374.8 75" stroke="#1a1a1a" stroke-width="1.3"/>
<path d="M374.8 80H377.4V82.4H374.8Z" fill="none" stroke="#555" stroke-width="0.9"/>
<circle cx="385" cy="82" r="4.3" fill="none" stroke="#151515" stroke-width="1.3"/>
<path d="M385 77.6V75.4M382.4 73.2H388M386 71.6L388 73.2L386 74.8" fill="none" stroke="#151515" stroke-width="1.1"/>
<path d="M406 68.8V80.2L408.8 77.6L410.4 81.2L412 80.5L410.5 77L413.4 76.8Z" fill="#111"/>
<path d="M412.4 80.5H420.6M413 84.8H420.6M416.6 81.6V83.6" stroke="#3c3c3c" stroke-width="1.1"/>
<g fill="none" stroke="#151515" stroke-width="1.15">
<rect x="167.1" y="106.3" width="4.8" height="5.2"/>
<path d="M185.4 106.5L193.9 114.8M193.9 106.5L185.4 114.8" stroke-width="1.05"/>
</g>
<path d="M168.2 111.6H171L169.4 114.6Z" fill="#151515"/>
<path d="M4.2 164.4V153.0H8.2L10.4 155.6H17.2V164.4H4.2Z" fill="#ffffcb" stroke="#2a2a2a" stroke-width="1.15" stroke-linejoin="round"/>
<path d="M4.2 186.1V174.7H8.2L10.4 177.3H17.2V186.1H4.2Z" fill="#ffffcb" stroke="#2a2a2a" stroke-width="1.15" stroke-linejoin="round"/>
<path d="M4.2 207.8V196.4H8.2L10.4 199.0H17.2V207.8H4.2Z" fill="#ffffcb" stroke="#2a2a2a" stroke-width="1.15" stroke-linejoin="round"/>
<path d="M4.2 229.6V218.2H8.2L10.4 220.8H17.2V229.6H4.2Z" fill="#ffffcb" stroke="#2a2a2a" stroke-width="1.15" stroke-linejoin="round"/>
<path d="M4.2 251.2V239.8H8.2L10.4 242.4H17.2V251.2H4.2Z" fill="#ffffcb" stroke="#2a2a2a" stroke-width="1.15" stroke-linejoin="round"/>
<path d="M4.2 272.9V261.5H8.2L10.4 264.1H17.2V272.9H4.2Z" fill="#ffffcb" stroke="#2a2a2a" stroke-width="1.15" stroke-linejoin="round"/>
<path d="M4.2 294.4V283.0H8.2L10.4 285.6H17.2V294.4H4.2Z" fill="#ffffcb" stroke="#2a2a2a" stroke-width="1.15" stroke-linejoin="round"/>
<path d="M4.2 316.2V304.8H8.2L10.4 307.4H17.2V316.2H4.2Z" fill="#ffffcb" stroke="#2a2a2a" stroke-width="1.15" stroke-linejoin="round"/>
<path d="M4.2 337.8V326.4H8.2L10.4 329.0H17.2V337.8H4.2Z" fill="#ffffcb" stroke="#2a2a2a" stroke-width="1.15" stroke-linejoin="round"/>
<rect x="3.2" y="129" width="14.3" height="14.6" rx="1.2" fill="#fff" stroke="#222" stroke-width="1.2"/>
<rect x="5.4" y="133.2" width="2.6" height="2.4" fill="#2a2a2a"/>
<rect x="9.2" y="133.2" width="2.6" height="2.4" fill="#2a2a2a"/>
<rect x="13.0" y="133.2" width="2.6" height="2.4" fill="#2a2a2a"/>
<rect x="5.4" y="138.0" width="2.6" height="2.4" fill="#2a2a2a"/>
<rect x="9.2" y="138.0" width="2.6" height="2.4" fill="#2a2a2a"/>
<rect x="13.0" y="138.0" width="2.6" height="2.4" fill="#2a2a2a"/>
<path d="M24.3 347.6H32.6L36.2 351V361.5H24.3Z" fill="#fff" stroke="#222" stroke-width="1.15" stroke-linejoin="round"/>
<path d="M24.6 353.8H36M28.6 350.4H33.4" stroke="#333" stroke-width="1"/>
<path d="M26.8 358.6H29.6V356.4M31 356.4V358.6H33.6V356.4" fill="none" stroke="#222" stroke-width="1.1"/>
<path d="M10.5 342V355.8H18" fill="none" stroke="#f3f3f3" stroke-width="1"/>
</svg>
<div class="t " style="left:622.80px;top:104.12px;font-size:16.00px;color:#f2f2f6;transform:scaleX(0.9097);">Displacement Magnitude</div>
<div class="t " style="left:708.20px;top:127.94px;font-size:16.20px;color:#f2f2f6;transform:scaleX(0.9465);">1.0236 065</div>
<div class="t " style="left:708.20px;top:156.75px;font-size:16.20px;color:#f2f2f6;transform:scaleX(0.9465);">1.0236</div>
<div class="t " style="left:708.20px;top:185.56px;font-size:16.20px;color:#f2f2f6;transform:scaleX(0.9465);">1.0226</div>
<div class="t " style="left:708.20px;top:214.37px;font-size:16.20px;color:#f2f2f6;transform:scaleX(0.9465);">1.101</div>
<div class="t " style="left:708.20px;top:243.18px;font-size:16.20px;color:#f2f2f6;transform:scaleX(0.9465);">1.0792</div>
<div class="t " style="left:708.20px;top:271.99px;font-size:16.20px;color:#f2f2f6;transform:scaleX(0.9465);">1.0666</div>
<div class="t " style="left:708.20px;top:300.80px;font-size:16.20px;color:#f2f2f6;transform:scaleX(0.9465);">1.0520</div>
<div class="t " style="left:708.20px;top:329.61px;font-size:16.20px;color:#f2f2f6;transform:scaleX(0.9465);">0.9100</div>
<div class="t " style="left:708.20px;top:358.42px;font-size:16.20px;color:#f2f2f6;transform:scaleX(0.9465);">0.5000e-02</div>
<div class="t " style="left:708.20px;top:387.23px;font-size:16.20px;color:#f2f2f6;transform:scaleX(0.9465);">0.3300</div>
<div class="t " style="left:708.20px;top:416.04px;font-size:16.20px;color:#f2f2f6;transform:scaleX(0.9465);">0.0000e-02</div>
<div class="t " style="left:250.90px;top:413.94px;font-size:13.00px;color:#e4e4f0;">Z</div>
<div class="t " style="left:276.20px;top:443.17px;font-size:14.40px;color:#e4e4f0;">Y</div>
<div class="t " style="left:231.00px;top:453.77px;font-size:14.40px;color:#e4e4f0;">X</div>
</div></div></body></html>
